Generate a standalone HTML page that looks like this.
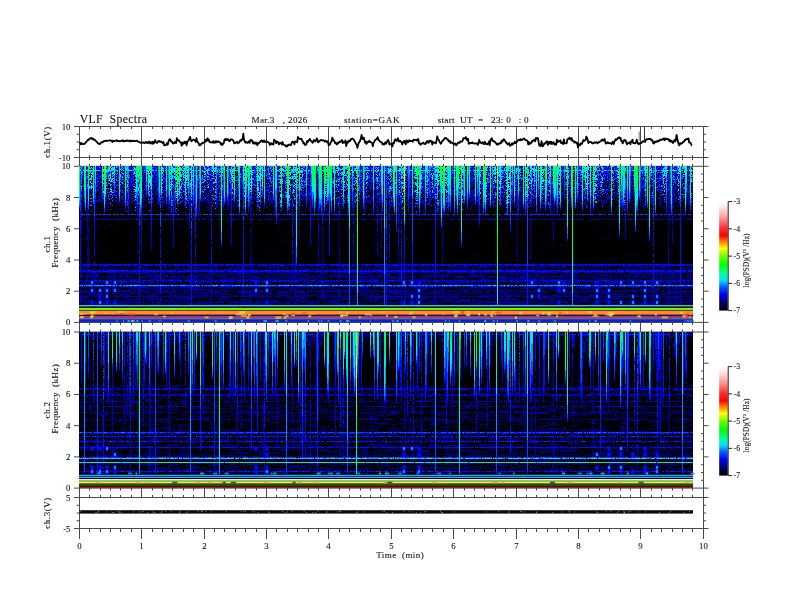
<!DOCTYPE html><html><head><meta charset="utf-8"><title>VLF Spectra</title><style>html,body{margin:0;padding:0;background:#fff;overflow:hidden;}svg{display:block;font-family:"Liberation Serif",serif;filter:blur(0.4px);}text{stroke:#111;stroke-width:0.1px;}</style></head><body><svg width="792" height="612" viewBox="0 0 792 612" font-family="Liberation Serif, serif" fill="#111" shape-rendering="auto"><defs><linearGradient id="cb" x1="0" y1="0" x2="0" y2="1"><stop offset="0.000" stop-color="#ffffff"/><stop offset="0.040" stop-color="#ffeeee"/><stop offset="0.150" stop-color="#ff9696"/><stop offset="0.240" stop-color="#ff3232"/><stop offset="0.310" stop-color="#ff0000"/><stop offset="0.380" stop-color="#ff9600"/><stop offset="0.430" stop-color="#ffff00"/><stop offset="0.500" stop-color="#6eff00"/><stop offset="0.580" stop-color="#00ff00"/><stop offset="0.660" stop-color="#00ff96"/><stop offset="0.720" stop-color="#00e1ff"/><stop offset="0.780" stop-color="#0064ff"/><stop offset="0.850" stop-color="#0000ff"/><stop offset="0.920" stop-color="#00006e"/><stop offset="1.000" stop-color="#000000"/></linearGradient><linearGradient id="gy" x1="0" y1="0" x2="0" y2="1"><stop offset="0" stop-color="#eaff00" stop-opacity="1"/><stop offset="0.15" stop-color="#29ff00" stop-opacity="1"/><stop offset="0.45" stop-color="#00f5b9" stop-opacity="1"/><stop offset="0.75" stop-color="#0047ff" stop-opacity="0.9"/><stop offset="1" stop-color="#0000c1" stop-opacity="0"/></linearGradient><linearGradient id="gg" x1="0" y1="0" x2="0" y2="1"><stop offset="0" stop-color="#37ff00" stop-opacity="1"/><stop offset="0.2" stop-color="#00ff4b" stop-opacity="1"/><stop offset="0.5" stop-color="#00e1ff" stop-opacity="1"/><stop offset="0.8" stop-color="#002bff" stop-opacity="0.8"/><stop offset="1" stop-color="#0000c1" stop-opacity="0"/></linearGradient><linearGradient id="gc" x1="0" y1="0" x2="0" y2="1"><stop offset="0" stop-color="#00f5b9" stop-opacity="1"/><stop offset="0.3" stop-color="#00b7ff" stop-opacity="1"/><stop offset="0.7" stop-color="#002bff" stop-opacity="0.8"/><stop offset="1" stop-color="#0000c1" stop-opacity="0"/></linearGradient><linearGradient id="gb" x1="0" y1="0" x2="0" y2="1"><stop offset="0" stop-color="#0064ff" stop-opacity="1"/><stop offset="0.5" stop-color="#000eff" stop-opacity="0.9"/><stop offset="1" stop-color="#000097" stop-opacity="0"/></linearGradient><linearGradient id="gd" x1="0" y1="0" x2="0" y2="1"><stop offset="0" stop-color="#000eff" stop-opacity="0.9"/><stop offset="1" stop-color="#000097" stop-opacity="0"/></linearGradient><linearGradient id="gr" x1="0" y1="0" x2="0" y2="1"><stop offset="0" stop-color="#ff4000" stop-opacity="1"/><stop offset="0.1" stop-color="#eaff00" stop-opacity="1"/><stop offset="0.3" stop-color="#00ff00" stop-opacity="1"/><stop offset="0.7" stop-color="#00e1ff" stop-opacity="1"/><stop offset="1" stop-color="#000eff" stop-opacity="0.3"/></linearGradient><filter id="vs1" filterUnits="userSpaceOnUse" x="79" y="150" width="620" height="350" color-interpolation-filters="sRGB"><feTurbulence type="fractalNoise" baseFrequency="1.0 0.35" numOctaves="1" seed="3"/><feColorMatrix type="matrix" values="0 0 0 0 0 0 0 0 0 0 0 0 0 0 0 6 0 0 0 -2.4"/><feComposite in="SourceGraphic" operator="in"/></filter><filter id="vs2" filterUnits="userSpaceOnUse" x="79" y="150" width="620" height="350" color-interpolation-filters="sRGB"><feTurbulence type="fractalNoise" baseFrequency="1.0 0.35" numOctaves="1" seed="8"/><feColorMatrix type="matrix" values="0 0 0 0 0 0 0 0 0 0 0 0 0 0 0 6 0 0 0 -2.6"/><feComposite in="SourceGraphic" operator="in"/></filter><filter id="hs1" filterUnits="userSpaceOnUse" x="79" y="150" width="620" height="350" color-interpolation-filters="sRGB"><feTurbulence type="fractalNoise" baseFrequency="0.25 1.0" numOctaves="1" seed="4"/><feColorMatrix type="matrix" values="0 0 0 0 0 0 0 0 0 0 0 0 0 0 0 6 0 0 0 -2.7"/><feComposite in="SourceGraphic" operator="in"/></filter><filter id="hs2" filterUnits="userSpaceOnUse" x="79" y="150" width="620" height="350" color-interpolation-filters="sRGB"><feTurbulence type="fractalNoise" baseFrequency="0.25 1.0" numOctaves="1" seed="6"/><feColorMatrix type="matrix" values="0 0 0 0 0 0 0 0 0 0 0 0 0 0 0 6 0 0 0 -2.7"/><feComposite in="SourceGraphic" operator="in"/></filter><filter id="ns1" filterUnits="userSpaceOnUse" x="79" y="150" width="620" height="350" color-interpolation-filters="sRGB"><feTurbulence type="fractalNoise" baseFrequency="0.7 0.7" numOctaves="1" seed="12"/><feColorMatrix type="matrix" values="0 0 0 0 0 0 0 0 0 0 0 0 0 0 0 7 0 0 0 -3.0"/><feComposite in="SourceGraphic" operator="in"/></filter><filter id="ns2" filterUnits="userSpaceOnUse" x="79" y="150" width="620" height="350" color-interpolation-filters="sRGB"><feTurbulence type="fractalNoise" baseFrequency="0.7 0.7" numOctaves="1" seed="13"/><feColorMatrix type="matrix" values="0 0 0 0 0 0 0 0 0 0 0 0 0 0 0 7 0 0 0 -3.0"/><feComposite in="SourceGraphic" operator="in"/></filter><linearGradient id="L0" x1="0" y1="0" x2="0" y2="1"><stop offset="0" stop-color="#0000d6"/><stop offset="0.45" stop-color="#000083"/><stop offset="0.8" stop-color="#0000ac" stop-opacity="0.9"/><stop offset="1" stop-color="#000097" stop-opacity="0"/></linearGradient><linearGradient id="L1" x1="0" y1="0" x2="0" y2="1"><stop offset="0" stop-color="#001dff"/><stop offset="0.45" stop-color="#0000d6"/><stop offset="0.8" stop-color="#0000ac" stop-opacity="0.9"/><stop offset="1" stop-color="#000097" stop-opacity="0"/></linearGradient><linearGradient id="L2" x1="0" y1="0" x2="0" y2="1"><stop offset="0" stop-color="#0047ff"/><stop offset="0.45" stop-color="#000eff"/><stop offset="0.8" stop-color="#0000ac" stop-opacity="0.9"/><stop offset="1" stop-color="#000097" stop-opacity="0"/></linearGradient><linearGradient id="L3" x1="0" y1="0" x2="0" y2="1"><stop offset="0" stop-color="#0079ff"/><stop offset="0.45" stop-color="#0039ff"/><stop offset="0.8" stop-color="#0000ea" stop-opacity="0.9"/><stop offset="1" stop-color="#000097" stop-opacity="0"/></linearGradient><linearGradient id="L4" x1="0" y1="0" x2="0" y2="1"><stop offset="0" stop-color="#00b7ff"/><stop offset="0.45" stop-color="#0064ff"/><stop offset="0.8" stop-color="#001dff" stop-opacity="0.9"/><stop offset="1" stop-color="#000097" stop-opacity="0"/></linearGradient><linearGradient id="L5" x1="0" y1="0" x2="0" y2="1"><stop offset="0" stop-color="#00e6ee"/><stop offset="0.45" stop-color="#00a2ff"/><stop offset="0.8" stop-color="#0047ff" stop-opacity="0.9"/><stop offset="1" stop-color="#000097" stop-opacity="0"/></linearGradient><linearGradient id="L6" x1="0" y1="0" x2="0" y2="1"><stop offset="0" stop-color="#00faa8"/><stop offset="0.45" stop-color="#00e6ed"/><stop offset="0.8" stop-color="#008eff" stop-opacity="0.9"/><stop offset="1" stop-color="#000097" stop-opacity="0"/></linearGradient><linearGradient id="L7" x1="0" y1="0" x2="0" y2="1"><stop offset="0" stop-color="#00ff4b"/><stop offset="0.45" stop-color="#00ff96"/><stop offset="0.8" stop-color="#00e6ed" stop-opacity="0.9"/><stop offset="1" stop-color="#000097" stop-opacity="0"/></linearGradient><linearGradient id="L8" x1="0" y1="0" x2="0" y2="1"><stop offset="0" stop-color="#1cff00"/><stop offset="0.45" stop-color="#00ff25"/><stop offset="0.8" stop-color="#00ff83" stop-opacity="0.9"/><stop offset="1" stop-color="#000097" stop-opacity="0"/></linearGradient><linearGradient id="nav1" x1="0" y1="0" x2="0" y2="1"><stop offset="0" stop-color="#0000c1"/><stop offset="0.6" stop-color="#00006e"/><stop offset="1" stop-color="#000" stop-opacity="0"/></linearGradient><linearGradient id="nav2" x1="0" y1="0" x2="0" y2="1"><stop offset="0" stop-color="#00006e"/><stop offset="0.6" stop-color="#000045"/><stop offset="1" stop-color="#000" stop-opacity="0"/></linearGradient></defs><rect width="792" height="612" fill="#fff"/><line x1="79.50" y1="126.50" x2="79.50" y2="528.50" stroke="#4a4a4a" stroke-width="1"/><line x1="703.50" y1="126.50" x2="703.50" y2="528.50" stroke="#4a4a4a" stroke-width="1"/><line x1="79.50" y1="157.50" x2="79.50" y2="166.30" stroke="#4a4a4a" stroke-width="1"/><line x1="89.50" y1="163.80" x2="89.50" y2="166.30" stroke="#4a4a4a" stroke-width="1"/><line x1="89.50" y1="157.50" x2="89.50" y2="160.00" stroke="#4a4a4a" stroke-width="1"/><line x1="100.50" y1="163.80" x2="100.50" y2="166.30" stroke="#4a4a4a" stroke-width="1"/><line x1="100.50" y1="157.50" x2="100.50" y2="160.00" stroke="#4a4a4a" stroke-width="1"/><line x1="110.50" y1="163.80" x2="110.50" y2="166.30" stroke="#4a4a4a" stroke-width="1"/><line x1="110.50" y1="157.50" x2="110.50" y2="160.00" stroke="#4a4a4a" stroke-width="1"/><line x1="120.50" y1="163.80" x2="120.50" y2="166.30" stroke="#4a4a4a" stroke-width="1"/><line x1="120.50" y1="157.50" x2="120.50" y2="160.00" stroke="#4a4a4a" stroke-width="1"/><line x1="131.50" y1="163.80" x2="131.50" y2="166.30" stroke="#4a4a4a" stroke-width="1"/><line x1="131.50" y1="157.50" x2="131.50" y2="160.00" stroke="#4a4a4a" stroke-width="1"/><line x1="141.50" y1="157.50" x2="141.50" y2="166.30" stroke="#4a4a4a" stroke-width="1"/><line x1="152.50" y1="163.80" x2="152.50" y2="166.30" stroke="#4a4a4a" stroke-width="1"/><line x1="152.50" y1="157.50" x2="152.50" y2="160.00" stroke="#4a4a4a" stroke-width="1"/><line x1="162.50" y1="163.80" x2="162.50" y2="166.30" stroke="#4a4a4a" stroke-width="1"/><line x1="162.50" y1="157.50" x2="162.50" y2="160.00" stroke="#4a4a4a" stroke-width="1"/><line x1="172.50" y1="163.80" x2="172.50" y2="166.30" stroke="#4a4a4a" stroke-width="1"/><line x1="172.50" y1="157.50" x2="172.50" y2="160.00" stroke="#4a4a4a" stroke-width="1"/><line x1="183.50" y1="163.80" x2="183.50" y2="166.30" stroke="#4a4a4a" stroke-width="1"/><line x1="183.50" y1="157.50" x2="183.50" y2="160.00" stroke="#4a4a4a" stroke-width="1"/><line x1="193.50" y1="163.80" x2="193.50" y2="166.30" stroke="#4a4a4a" stroke-width="1"/><line x1="193.50" y1="157.50" x2="193.50" y2="160.00" stroke="#4a4a4a" stroke-width="1"/><line x1="204.50" y1="157.50" x2="204.50" y2="166.30" stroke="#4a4a4a" stroke-width="1"/><line x1="214.50" y1="163.80" x2="214.50" y2="166.30" stroke="#4a4a4a" stroke-width="1"/><line x1="214.50" y1="157.50" x2="214.50" y2="160.00" stroke="#4a4a4a" stroke-width="1"/><line x1="224.50" y1="163.80" x2="224.50" y2="166.30" stroke="#4a4a4a" stroke-width="1"/><line x1="224.50" y1="157.50" x2="224.50" y2="160.00" stroke="#4a4a4a" stroke-width="1"/><line x1="235.50" y1="163.80" x2="235.50" y2="166.30" stroke="#4a4a4a" stroke-width="1"/><line x1="235.50" y1="157.50" x2="235.50" y2="160.00" stroke="#4a4a4a" stroke-width="1"/><line x1="245.50" y1="163.80" x2="245.50" y2="166.30" stroke="#4a4a4a" stroke-width="1"/><line x1="245.50" y1="157.50" x2="245.50" y2="160.00" stroke="#4a4a4a" stroke-width="1"/><line x1="256.50" y1="163.80" x2="256.50" y2="166.30" stroke="#4a4a4a" stroke-width="1"/><line x1="256.50" y1="157.50" x2="256.50" y2="160.00" stroke="#4a4a4a" stroke-width="1"/><line x1="266.50" y1="157.50" x2="266.50" y2="166.30" stroke="#4a4a4a" stroke-width="1"/><line x1="276.50" y1="163.80" x2="276.50" y2="166.30" stroke="#4a4a4a" stroke-width="1"/><line x1="276.50" y1="157.50" x2="276.50" y2="160.00" stroke="#4a4a4a" stroke-width="1"/><line x1="287.50" y1="163.80" x2="287.50" y2="166.30" stroke="#4a4a4a" stroke-width="1"/><line x1="287.50" y1="157.50" x2="287.50" y2="160.00" stroke="#4a4a4a" stroke-width="1"/><line x1="297.50" y1="163.80" x2="297.50" y2="166.30" stroke="#4a4a4a" stroke-width="1"/><line x1="297.50" y1="157.50" x2="297.50" y2="160.00" stroke="#4a4a4a" stroke-width="1"/><line x1="308.50" y1="163.80" x2="308.50" y2="166.30" stroke="#4a4a4a" stroke-width="1"/><line x1="308.50" y1="157.50" x2="308.50" y2="160.00" stroke="#4a4a4a" stroke-width="1"/><line x1="318.50" y1="163.80" x2="318.50" y2="166.30" stroke="#4a4a4a" stroke-width="1"/><line x1="318.50" y1="157.50" x2="318.50" y2="160.00" stroke="#4a4a4a" stroke-width="1"/><line x1="328.50" y1="157.50" x2="328.50" y2="166.30" stroke="#4a4a4a" stroke-width="1"/><line x1="339.50" y1="163.80" x2="339.50" y2="166.30" stroke="#4a4a4a" stroke-width="1"/><line x1="339.50" y1="157.50" x2="339.50" y2="160.00" stroke="#4a4a4a" stroke-width="1"/><line x1="349.50" y1="163.80" x2="349.50" y2="166.30" stroke="#4a4a4a" stroke-width="1"/><line x1="349.50" y1="157.50" x2="349.50" y2="160.00" stroke="#4a4a4a" stroke-width="1"/><line x1="360.50" y1="163.80" x2="360.50" y2="166.30" stroke="#4a4a4a" stroke-width="1"/><line x1="360.50" y1="157.50" x2="360.50" y2="160.00" stroke="#4a4a4a" stroke-width="1"/><line x1="370.50" y1="163.80" x2="370.50" y2="166.30" stroke="#4a4a4a" stroke-width="1"/><line x1="370.50" y1="157.50" x2="370.50" y2="160.00" stroke="#4a4a4a" stroke-width="1"/><line x1="380.50" y1="163.80" x2="380.50" y2="166.30" stroke="#4a4a4a" stroke-width="1"/><line x1="380.50" y1="157.50" x2="380.50" y2="160.00" stroke="#4a4a4a" stroke-width="1"/><line x1="391.50" y1="157.50" x2="391.50" y2="166.30" stroke="#4a4a4a" stroke-width="1"/><line x1="401.50" y1="163.80" x2="401.50" y2="166.30" stroke="#4a4a4a" stroke-width="1"/><line x1="401.50" y1="157.50" x2="401.50" y2="160.00" stroke="#4a4a4a" stroke-width="1"/><line x1="411.50" y1="163.80" x2="411.50" y2="166.30" stroke="#4a4a4a" stroke-width="1"/><line x1="411.50" y1="157.50" x2="411.50" y2="160.00" stroke="#4a4a4a" stroke-width="1"/><line x1="422.50" y1="163.80" x2="422.50" y2="166.30" stroke="#4a4a4a" stroke-width="1"/><line x1="422.50" y1="157.50" x2="422.50" y2="160.00" stroke="#4a4a4a" stroke-width="1"/><line x1="432.50" y1="163.80" x2="432.50" y2="166.30" stroke="#4a4a4a" stroke-width="1"/><line x1="432.50" y1="157.50" x2="432.50" y2="160.00" stroke="#4a4a4a" stroke-width="1"/><line x1="443.50" y1="163.80" x2="443.50" y2="166.30" stroke="#4a4a4a" stroke-width="1"/><line x1="443.50" y1="157.50" x2="443.50" y2="160.00" stroke="#4a4a4a" stroke-width="1"/><line x1="453.50" y1="157.50" x2="453.50" y2="166.30" stroke="#4a4a4a" stroke-width="1"/><line x1="464.50" y1="163.80" x2="464.50" y2="166.30" stroke="#4a4a4a" stroke-width="1"/><line x1="464.50" y1="157.50" x2="464.50" y2="160.00" stroke="#4a4a4a" stroke-width="1"/><line x1="474.50" y1="163.80" x2="474.50" y2="166.30" stroke="#4a4a4a" stroke-width="1"/><line x1="474.50" y1="157.50" x2="474.50" y2="160.00" stroke="#4a4a4a" stroke-width="1"/><line x1="484.50" y1="163.80" x2="484.50" y2="166.30" stroke="#4a4a4a" stroke-width="1"/><line x1="484.50" y1="157.50" x2="484.50" y2="160.00" stroke="#4a4a4a" stroke-width="1"/><line x1="495.50" y1="163.80" x2="495.50" y2="166.30" stroke="#4a4a4a" stroke-width="1"/><line x1="495.50" y1="157.50" x2="495.50" y2="160.00" stroke="#4a4a4a" stroke-width="1"/><line x1="505.50" y1="163.80" x2="505.50" y2="166.30" stroke="#4a4a4a" stroke-width="1"/><line x1="505.50" y1="157.50" x2="505.50" y2="160.00" stroke="#4a4a4a" stroke-width="1"/><line x1="516.50" y1="157.50" x2="516.50" y2="166.30" stroke="#4a4a4a" stroke-width="1"/><line x1="526.50" y1="163.80" x2="526.50" y2="166.30" stroke="#4a4a4a" stroke-width="1"/><line x1="526.50" y1="157.50" x2="526.50" y2="160.00" stroke="#4a4a4a" stroke-width="1"/><line x1="536.50" y1="163.80" x2="536.50" y2="166.30" stroke="#4a4a4a" stroke-width="1"/><line x1="536.50" y1="157.50" x2="536.50" y2="160.00" stroke="#4a4a4a" stroke-width="1"/><line x1="547.50" y1="163.80" x2="547.50" y2="166.30" stroke="#4a4a4a" stroke-width="1"/><line x1="547.50" y1="157.50" x2="547.50" y2="160.00" stroke="#4a4a4a" stroke-width="1"/><line x1="557.50" y1="163.80" x2="557.50" y2="166.30" stroke="#4a4a4a" stroke-width="1"/><line x1="557.50" y1="157.50" x2="557.50" y2="160.00" stroke="#4a4a4a" stroke-width="1"/><line x1="568.50" y1="163.80" x2="568.50" y2="166.30" stroke="#4a4a4a" stroke-width="1"/><line x1="568.50" y1="157.50" x2="568.50" y2="160.00" stroke="#4a4a4a" stroke-width="1"/><line x1="578.50" y1="157.50" x2="578.50" y2="166.30" stroke="#4a4a4a" stroke-width="1"/><line x1="588.50" y1="163.80" x2="588.50" y2="166.30" stroke="#4a4a4a" stroke-width="1"/><line x1="588.50" y1="157.50" x2="588.50" y2="160.00" stroke="#4a4a4a" stroke-width="1"/><line x1="599.50" y1="163.80" x2="599.50" y2="166.30" stroke="#4a4a4a" stroke-width="1"/><line x1="599.50" y1="157.50" x2="599.50" y2="160.00" stroke="#4a4a4a" stroke-width="1"/><line x1="609.50" y1="163.80" x2="609.50" y2="166.30" stroke="#4a4a4a" stroke-width="1"/><line x1="609.50" y1="157.50" x2="609.50" y2="160.00" stroke="#4a4a4a" stroke-width="1"/><line x1="620.50" y1="163.80" x2="620.50" y2="166.30" stroke="#4a4a4a" stroke-width="1"/><line x1="620.50" y1="157.50" x2="620.50" y2="160.00" stroke="#4a4a4a" stroke-width="1"/><line x1="630.50" y1="163.80" x2="630.50" y2="166.30" stroke="#4a4a4a" stroke-width="1"/><line x1="630.50" y1="157.50" x2="630.50" y2="160.00" stroke="#4a4a4a" stroke-width="1"/><line x1="640.50" y1="157.50" x2="640.50" y2="166.30" stroke="#4a4a4a" stroke-width="1"/><line x1="651.50" y1="163.80" x2="651.50" y2="166.30" stroke="#4a4a4a" stroke-width="1"/><line x1="651.50" y1="157.50" x2="651.50" y2="160.00" stroke="#4a4a4a" stroke-width="1"/><line x1="661.50" y1="163.80" x2="661.50" y2="166.30" stroke="#4a4a4a" stroke-width="1"/><line x1="661.50" y1="157.50" x2="661.50" y2="160.00" stroke="#4a4a4a" stroke-width="1"/><line x1="672.50" y1="163.80" x2="672.50" y2="166.30" stroke="#4a4a4a" stroke-width="1"/><line x1="672.50" y1="157.50" x2="672.50" y2="160.00" stroke="#4a4a4a" stroke-width="1"/><line x1="682.50" y1="163.80" x2="682.50" y2="166.30" stroke="#4a4a4a" stroke-width="1"/><line x1="682.50" y1="157.50" x2="682.50" y2="160.00" stroke="#4a4a4a" stroke-width="1"/><line x1="692.50" y1="163.80" x2="692.50" y2="166.30" stroke="#4a4a4a" stroke-width="1"/><line x1="692.50" y1="157.50" x2="692.50" y2="160.00" stroke="#4a4a4a" stroke-width="1"/><line x1="703.50" y1="157.50" x2="703.50" y2="166.30" stroke="#4a4a4a" stroke-width="1"/><line x1="79.50" y1="322.40" x2="79.50" y2="332.00" stroke="#4a4a4a" stroke-width="1"/><line x1="89.50" y1="329.50" x2="89.50" y2="332.00" stroke="#4a4a4a" stroke-width="1"/><line x1="89.50" y1="322.40" x2="89.50" y2="324.90" stroke="#4a4a4a" stroke-width="1"/><line x1="100.50" y1="329.50" x2="100.50" y2="332.00" stroke="#4a4a4a" stroke-width="1"/><line x1="100.50" y1="322.40" x2="100.50" y2="324.90" stroke="#4a4a4a" stroke-width="1"/><line x1="110.50" y1="329.50" x2="110.50" y2="332.00" stroke="#4a4a4a" stroke-width="1"/><line x1="110.50" y1="322.40" x2="110.50" y2="324.90" stroke="#4a4a4a" stroke-width="1"/><line x1="120.50" y1="329.50" x2="120.50" y2="332.00" stroke="#4a4a4a" stroke-width="1"/><line x1="120.50" y1="322.40" x2="120.50" y2="324.90" stroke="#4a4a4a" stroke-width="1"/><line x1="131.50" y1="329.50" x2="131.50" y2="332.00" stroke="#4a4a4a" stroke-width="1"/><line x1="131.50" y1="322.40" x2="131.50" y2="324.90" stroke="#4a4a4a" stroke-width="1"/><line x1="141.50" y1="322.40" x2="141.50" y2="332.00" stroke="#4a4a4a" stroke-width="1"/><line x1="152.50" y1="329.50" x2="152.50" y2="332.00" stroke="#4a4a4a" stroke-width="1"/><line x1="152.50" y1="322.40" x2="152.50" y2="324.90" stroke="#4a4a4a" stroke-width="1"/><line x1="162.50" y1="329.50" x2="162.50" y2="332.00" stroke="#4a4a4a" stroke-width="1"/><line x1="162.50" y1="322.40" x2="162.50" y2="324.90" stroke="#4a4a4a" stroke-width="1"/><line x1="172.50" y1="329.50" x2="172.50" y2="332.00" stroke="#4a4a4a" stroke-width="1"/><line x1="172.50" y1="322.40" x2="172.50" y2="324.90" stroke="#4a4a4a" stroke-width="1"/><line x1="183.50" y1="329.50" x2="183.50" y2="332.00" stroke="#4a4a4a" stroke-width="1"/><line x1="183.50" y1="322.40" x2="183.50" y2="324.90" stroke="#4a4a4a" stroke-width="1"/><line x1="193.50" y1="329.50" x2="193.50" y2="332.00" stroke="#4a4a4a" stroke-width="1"/><line x1="193.50" y1="322.40" x2="193.50" y2="324.90" stroke="#4a4a4a" stroke-width="1"/><line x1="204.50" y1="322.40" x2="204.50" y2="332.00" stroke="#4a4a4a" stroke-width="1"/><line x1="214.50" y1="329.50" x2="214.50" y2="332.00" stroke="#4a4a4a" stroke-width="1"/><line x1="214.50" y1="322.40" x2="214.50" y2="324.90" stroke="#4a4a4a" stroke-width="1"/><line x1="224.50" y1="329.50" x2="224.50" y2="332.00" stroke="#4a4a4a" stroke-width="1"/><line x1="224.50" y1="322.40" x2="224.50" y2="324.90" stroke="#4a4a4a" stroke-width="1"/><line x1="235.50" y1="329.50" x2="235.50" y2="332.00" stroke="#4a4a4a" stroke-width="1"/><line x1="235.50" y1="322.40" x2="235.50" y2="324.90" stroke="#4a4a4a" stroke-width="1"/><line x1="245.50" y1="329.50" x2="245.50" y2="332.00" stroke="#4a4a4a" stroke-width="1"/><line x1="245.50" y1="322.40" x2="245.50" y2="324.90" stroke="#4a4a4a" stroke-width="1"/><line x1="256.50" y1="329.50" x2="256.50" y2="332.00" stroke="#4a4a4a" stroke-width="1"/><line x1="256.50" y1="322.40" x2="256.50" y2="324.90" stroke="#4a4a4a" stroke-width="1"/><line x1="266.50" y1="322.40" x2="266.50" y2="332.00" stroke="#4a4a4a" stroke-width="1"/><line x1="276.50" y1="329.50" x2="276.50" y2="332.00" stroke="#4a4a4a" stroke-width="1"/><line x1="276.50" y1="322.40" x2="276.50" y2="324.90" stroke="#4a4a4a" stroke-width="1"/><line x1="287.50" y1="329.50" x2="287.50" y2="332.00" stroke="#4a4a4a" stroke-width="1"/><line x1="287.50" y1="322.40" x2="287.50" y2="324.90" stroke="#4a4a4a" stroke-width="1"/><line x1="297.50" y1="329.50" x2="297.50" y2="332.00" stroke="#4a4a4a" stroke-width="1"/><line x1="297.50" y1="322.40" x2="297.50" y2="324.90" stroke="#4a4a4a" stroke-width="1"/><line x1="308.50" y1="329.50" x2="308.50" y2="332.00" stroke="#4a4a4a" stroke-width="1"/><line x1="308.50" y1="322.40" x2="308.50" y2="324.90" stroke="#4a4a4a" stroke-width="1"/><line x1="318.50" y1="329.50" x2="318.50" y2="332.00" stroke="#4a4a4a" stroke-width="1"/><line x1="318.50" y1="322.40" x2="318.50" y2="324.90" stroke="#4a4a4a" stroke-width="1"/><line x1="328.50" y1="322.40" x2="328.50" y2="332.00" stroke="#4a4a4a" stroke-width="1"/><line x1="339.50" y1="329.50" x2="339.50" y2="332.00" stroke="#4a4a4a" stroke-width="1"/><line x1="339.50" y1="322.40" x2="339.50" y2="324.90" stroke="#4a4a4a" stroke-width="1"/><line x1="349.50" y1="329.50" x2="349.50" y2="332.00" stroke="#4a4a4a" stroke-width="1"/><line x1="349.50" y1="322.40" x2="349.50" y2="324.90" stroke="#4a4a4a" stroke-width="1"/><line x1="360.50" y1="329.50" x2="360.50" y2="332.00" stroke="#4a4a4a" stroke-width="1"/><line x1="360.50" y1="322.40" x2="360.50" y2="324.90" stroke="#4a4a4a" stroke-width="1"/><line x1="370.50" y1="329.50" x2="370.50" y2="332.00" stroke="#4a4a4a" stroke-width="1"/><line x1="370.50" y1="322.40" x2="370.50" y2="324.90" stroke="#4a4a4a" stroke-width="1"/><line x1="380.50" y1="329.50" x2="380.50" y2="332.00" stroke="#4a4a4a" stroke-width="1"/><line x1="380.50" y1="322.40" x2="380.50" y2="324.90" stroke="#4a4a4a" stroke-width="1"/><line x1="391.50" y1="322.40" x2="391.50" y2="332.00" stroke="#4a4a4a" stroke-width="1"/><line x1="401.50" y1="329.50" x2="401.50" y2="332.00" stroke="#4a4a4a" stroke-width="1"/><line x1="401.50" y1="322.40" x2="401.50" y2="324.90" stroke="#4a4a4a" stroke-width="1"/><line x1="411.50" y1="329.50" x2="411.50" y2="332.00" stroke="#4a4a4a" stroke-width="1"/><line x1="411.50" y1="322.40" x2="411.50" y2="324.90" stroke="#4a4a4a" stroke-width="1"/><line x1="422.50" y1="329.50" x2="422.50" y2="332.00" stroke="#4a4a4a" stroke-width="1"/><line x1="422.50" y1="322.40" x2="422.50" y2="324.90" stroke="#4a4a4a" stroke-width="1"/><line x1="432.50" y1="329.50" x2="432.50" y2="332.00" stroke="#4a4a4a" stroke-width="1"/><line x1="432.50" y1="322.40" x2="432.50" y2="324.90" stroke="#4a4a4a" stroke-width="1"/><line x1="443.50" y1="329.50" x2="443.50" y2="332.00" stroke="#4a4a4a" stroke-width="1"/><line x1="443.50" y1="322.40" x2="443.50" y2="324.90" stroke="#4a4a4a" stroke-width="1"/><line x1="453.50" y1="322.40" x2="453.50" y2="332.00" stroke="#4a4a4a" stroke-width="1"/><line x1="464.50" y1="329.50" x2="464.50" y2="332.00" stroke="#4a4a4a" stroke-width="1"/><line x1="464.50" y1="322.40" x2="464.50" y2="324.90" stroke="#4a4a4a" stroke-width="1"/><line x1="474.50" y1="329.50" x2="474.50" y2="332.00" stroke="#4a4a4a" stroke-width="1"/><line x1="474.50" y1="322.40" x2="474.50" y2="324.90" stroke="#4a4a4a" stroke-width="1"/><line x1="484.50" y1="329.50" x2="484.50" y2="332.00" stroke="#4a4a4a" stroke-width="1"/><line x1="484.50" y1="322.40" x2="484.50" y2="324.90" stroke="#4a4a4a" stroke-width="1"/><line x1="495.50" y1="329.50" x2="495.50" y2="332.00" stroke="#4a4a4a" stroke-width="1"/><line x1="495.50" y1="322.40" x2="495.50" y2="324.90" stroke="#4a4a4a" stroke-width="1"/><line x1="505.50" y1="329.50" x2="505.50" y2="332.00" stroke="#4a4a4a" stroke-width="1"/><line x1="505.50" y1="322.40" x2="505.50" y2="324.90" stroke="#4a4a4a" stroke-width="1"/><line x1="516.50" y1="322.40" x2="516.50" y2="332.00" stroke="#4a4a4a" stroke-width="1"/><line x1="526.50" y1="329.50" x2="526.50" y2="332.00" stroke="#4a4a4a" stroke-width="1"/><line x1="526.50" y1="322.40" x2="526.50" y2="324.90" stroke="#4a4a4a" stroke-width="1"/><line x1="536.50" y1="329.50" x2="536.50" y2="332.00" stroke="#4a4a4a" stroke-width="1"/><line x1="536.50" y1="322.40" x2="536.50" y2="324.90" stroke="#4a4a4a" stroke-width="1"/><line x1="547.50" y1="329.50" x2="547.50" y2="332.00" stroke="#4a4a4a" stroke-width="1"/><line x1="547.50" y1="322.40" x2="547.50" y2="324.90" stroke="#4a4a4a" stroke-width="1"/><line x1="557.50" y1="329.50" x2="557.50" y2="332.00" stroke="#4a4a4a" stroke-width="1"/><line x1="557.50" y1="322.40" x2="557.50" y2="324.90" stroke="#4a4a4a" stroke-width="1"/><line x1="568.50" y1="329.50" x2="568.50" y2="332.00" stroke="#4a4a4a" stroke-width="1"/><line x1="568.50" y1="322.40" x2="568.50" y2="324.90" stroke="#4a4a4a" stroke-width="1"/><line x1="578.50" y1="322.40" x2="578.50" y2="332.00" stroke="#4a4a4a" stroke-width="1"/><line x1="588.50" y1="329.50" x2="588.50" y2="332.00" stroke="#4a4a4a" stroke-width="1"/><line x1="588.50" y1="322.40" x2="588.50" y2="324.90" stroke="#4a4a4a" stroke-width="1"/><line x1="599.50" y1="329.50" x2="599.50" y2="332.00" stroke="#4a4a4a" stroke-width="1"/><line x1="599.50" y1="322.40" x2="599.50" y2="324.90" stroke="#4a4a4a" stroke-width="1"/><line x1="609.50" y1="329.50" x2="609.50" y2="332.00" stroke="#4a4a4a" stroke-width="1"/><line x1="609.50" y1="322.40" x2="609.50" y2="324.90" stroke="#4a4a4a" stroke-width="1"/><line x1="620.50" y1="329.50" x2="620.50" y2="332.00" stroke="#4a4a4a" stroke-width="1"/><line x1="620.50" y1="322.40" x2="620.50" y2="324.90" stroke="#4a4a4a" stroke-width="1"/><line x1="630.50" y1="329.50" x2="630.50" y2="332.00" stroke="#4a4a4a" stroke-width="1"/><line x1="630.50" y1="322.40" x2="630.50" y2="324.90" stroke="#4a4a4a" stroke-width="1"/><line x1="640.50" y1="322.40" x2="640.50" y2="332.00" stroke="#4a4a4a" stroke-width="1"/><line x1="651.50" y1="329.50" x2="651.50" y2="332.00" stroke="#4a4a4a" stroke-width="1"/><line x1="651.50" y1="322.40" x2="651.50" y2="324.90" stroke="#4a4a4a" stroke-width="1"/><line x1="661.50" y1="329.50" x2="661.50" y2="332.00" stroke="#4a4a4a" stroke-width="1"/><line x1="661.50" y1="322.40" x2="661.50" y2="324.90" stroke="#4a4a4a" stroke-width="1"/><line x1="672.50" y1="329.50" x2="672.50" y2="332.00" stroke="#4a4a4a" stroke-width="1"/><line x1="672.50" y1="322.40" x2="672.50" y2="324.90" stroke="#4a4a4a" stroke-width="1"/><line x1="682.50" y1="329.50" x2="682.50" y2="332.00" stroke="#4a4a4a" stroke-width="1"/><line x1="682.50" y1="322.40" x2="682.50" y2="324.90" stroke="#4a4a4a" stroke-width="1"/><line x1="692.50" y1="329.50" x2="692.50" y2="332.00" stroke="#4a4a4a" stroke-width="1"/><line x1="692.50" y1="322.40" x2="692.50" y2="324.90" stroke="#4a4a4a" stroke-width="1"/><line x1="703.50" y1="322.40" x2="703.50" y2="332.00" stroke="#4a4a4a" stroke-width="1"/><line x1="79.50" y1="488.10" x2="79.50" y2="497.50" stroke="#4a4a4a" stroke-width="1"/><line x1="89.50" y1="495.00" x2="89.50" y2="497.50" stroke="#4a4a4a" stroke-width="1"/><line x1="89.50" y1="488.10" x2="89.50" y2="490.60" stroke="#4a4a4a" stroke-width="1"/><line x1="100.50" y1="495.00" x2="100.50" y2="497.50" stroke="#4a4a4a" stroke-width="1"/><line x1="100.50" y1="488.10" x2="100.50" y2="490.60" stroke="#4a4a4a" stroke-width="1"/><line x1="110.50" y1="495.00" x2="110.50" y2="497.50" stroke="#4a4a4a" stroke-width="1"/><line x1="110.50" y1="488.10" x2="110.50" y2="490.60" stroke="#4a4a4a" stroke-width="1"/><line x1="120.50" y1="495.00" x2="120.50" y2="497.50" stroke="#4a4a4a" stroke-width="1"/><line x1="120.50" y1="488.10" x2="120.50" y2="490.60" stroke="#4a4a4a" stroke-width="1"/><line x1="131.50" y1="495.00" x2="131.50" y2="497.50" stroke="#4a4a4a" stroke-width="1"/><line x1="131.50" y1="488.10" x2="131.50" y2="490.60" stroke="#4a4a4a" stroke-width="1"/><line x1="141.50" y1="488.10" x2="141.50" y2="497.50" stroke="#4a4a4a" stroke-width="1"/><line x1="152.50" y1="495.00" x2="152.50" y2="497.50" stroke="#4a4a4a" stroke-width="1"/><line x1="152.50" y1="488.10" x2="152.50" y2="490.60" stroke="#4a4a4a" stroke-width="1"/><line x1="162.50" y1="495.00" x2="162.50" y2="497.50" stroke="#4a4a4a" stroke-width="1"/><line x1="162.50" y1="488.10" x2="162.50" y2="490.60" stroke="#4a4a4a" stroke-width="1"/><line x1="172.50" y1="495.00" x2="172.50" y2="497.50" stroke="#4a4a4a" stroke-width="1"/><line x1="172.50" y1="488.10" x2="172.50" y2="490.60" stroke="#4a4a4a" stroke-width="1"/><line x1="183.50" y1="495.00" x2="183.50" y2="497.50" stroke="#4a4a4a" stroke-width="1"/><line x1="183.50" y1="488.10" x2="183.50" y2="490.60" stroke="#4a4a4a" stroke-width="1"/><line x1="193.50" y1="495.00" x2="193.50" y2="497.50" stroke="#4a4a4a" stroke-width="1"/><line x1="193.50" y1="488.10" x2="193.50" y2="490.60" stroke="#4a4a4a" stroke-width="1"/><line x1="204.50" y1="488.10" x2="204.50" y2="497.50" stroke="#4a4a4a" stroke-width="1"/><line x1="214.50" y1="495.00" x2="214.50" y2="497.50" stroke="#4a4a4a" stroke-width="1"/><line x1="214.50" y1="488.10" x2="214.50" y2="490.60" stroke="#4a4a4a" stroke-width="1"/><line x1="224.50" y1="495.00" x2="224.50" y2="497.50" stroke="#4a4a4a" stroke-width="1"/><line x1="224.50" y1="488.10" x2="224.50" y2="490.60" stroke="#4a4a4a" stroke-width="1"/><line x1="235.50" y1="495.00" x2="235.50" y2="497.50" stroke="#4a4a4a" stroke-width="1"/><line x1="235.50" y1="488.10" x2="235.50" y2="490.60" stroke="#4a4a4a" stroke-width="1"/><line x1="245.50" y1="495.00" x2="245.50" y2="497.50" stroke="#4a4a4a" stroke-width="1"/><line x1="245.50" y1="488.10" x2="245.50" y2="490.60" stroke="#4a4a4a" stroke-width="1"/><line x1="256.50" y1="495.00" x2="256.50" y2="497.50" stroke="#4a4a4a" stroke-width="1"/><line x1="256.50" y1="488.10" x2="256.50" y2="490.60" stroke="#4a4a4a" stroke-width="1"/><line x1="266.50" y1="488.10" x2="266.50" y2="497.50" stroke="#4a4a4a" stroke-width="1"/><line x1="276.50" y1="495.00" x2="276.50" y2="497.50" stroke="#4a4a4a" stroke-width="1"/><line x1="276.50" y1="488.10" x2="276.50" y2="490.60" stroke="#4a4a4a" stroke-width="1"/><line x1="287.50" y1="495.00" x2="287.50" y2="497.50" stroke="#4a4a4a" stroke-width="1"/><line x1="287.50" y1="488.10" x2="287.50" y2="490.60" stroke="#4a4a4a" stroke-width="1"/><line x1="297.50" y1="495.00" x2="297.50" y2="497.50" stroke="#4a4a4a" stroke-width="1"/><line x1="297.50" y1="488.10" x2="297.50" y2="490.60" stroke="#4a4a4a" stroke-width="1"/><line x1="308.50" y1="495.00" x2="308.50" y2="497.50" stroke="#4a4a4a" stroke-width="1"/><line x1="308.50" y1="488.10" x2="308.50" y2="490.60" stroke="#4a4a4a" stroke-width="1"/><line x1="318.50" y1="495.00" x2="318.50" y2="497.50" stroke="#4a4a4a" stroke-width="1"/><line x1="318.50" y1="488.10" x2="318.50" y2="490.60" stroke="#4a4a4a" stroke-width="1"/><line x1="328.50" y1="488.10" x2="328.50" y2="497.50" stroke="#4a4a4a" stroke-width="1"/><line x1="339.50" y1="495.00" x2="339.50" y2="497.50" stroke="#4a4a4a" stroke-width="1"/><line x1="339.50" y1="488.10" x2="339.50" y2="490.60" stroke="#4a4a4a" stroke-width="1"/><line x1="349.50" y1="495.00" x2="349.50" y2="497.50" stroke="#4a4a4a" stroke-width="1"/><line x1="349.50" y1="488.10" x2="349.50" y2="490.60" stroke="#4a4a4a" stroke-width="1"/><line x1="360.50" y1="495.00" x2="360.50" y2="497.50" stroke="#4a4a4a" stroke-width="1"/><line x1="360.50" y1="488.10" x2="360.50" y2="490.60" stroke="#4a4a4a" stroke-width="1"/><line x1="370.50" y1="495.00" x2="370.50" y2="497.50" stroke="#4a4a4a" stroke-width="1"/><line x1="370.50" y1="488.10" x2="370.50" y2="490.60" stroke="#4a4a4a" stroke-width="1"/><line x1="380.50" y1="495.00" x2="380.50" y2="497.50" stroke="#4a4a4a" stroke-width="1"/><line x1="380.50" y1="488.10" x2="380.50" y2="490.60" stroke="#4a4a4a" stroke-width="1"/><line x1="391.50" y1="488.10" x2="391.50" y2="497.50" stroke="#4a4a4a" stroke-width="1"/><line x1="401.50" y1="495.00" x2="401.50" y2="497.50" stroke="#4a4a4a" stroke-width="1"/><line x1="401.50" y1="488.10" x2="401.50" y2="490.60" stroke="#4a4a4a" stroke-width="1"/><line x1="411.50" y1="495.00" x2="411.50" y2="497.50" stroke="#4a4a4a" stroke-width="1"/><line x1="411.50" y1="488.10" x2="411.50" y2="490.60" stroke="#4a4a4a" stroke-width="1"/><line x1="422.50" y1="495.00" x2="422.50" y2="497.50" stroke="#4a4a4a" stroke-width="1"/><line x1="422.50" y1="488.10" x2="422.50" y2="490.60" stroke="#4a4a4a" stroke-width="1"/><line x1="432.50" y1="495.00" x2="432.50" y2="497.50" stroke="#4a4a4a" stroke-width="1"/><line x1="432.50" y1="488.10" x2="432.50" y2="490.60" stroke="#4a4a4a" stroke-width="1"/><line x1="443.50" y1="495.00" x2="443.50" y2="497.50" stroke="#4a4a4a" stroke-width="1"/><line x1="443.50" y1="488.10" x2="443.50" y2="490.60" stroke="#4a4a4a" stroke-width="1"/><line x1="453.50" y1="488.10" x2="453.50" y2="497.50" stroke="#4a4a4a" stroke-width="1"/><line x1="464.50" y1="495.00" x2="464.50" y2="497.50" stroke="#4a4a4a" stroke-width="1"/><line x1="464.50" y1="488.10" x2="464.50" y2="490.60" stroke="#4a4a4a" stroke-width="1"/><line x1="474.50" y1="495.00" x2="474.50" y2="497.50" stroke="#4a4a4a" stroke-width="1"/><line x1="474.50" y1="488.10" x2="474.50" y2="490.60" stroke="#4a4a4a" stroke-width="1"/><line x1="484.50" y1="495.00" x2="484.50" y2="497.50" stroke="#4a4a4a" stroke-width="1"/><line x1="484.50" y1="488.10" x2="484.50" y2="490.60" stroke="#4a4a4a" stroke-width="1"/><line x1="495.50" y1="495.00" x2="495.50" y2="497.50" stroke="#4a4a4a" stroke-width="1"/><line x1="495.50" y1="488.10" x2="495.50" y2="490.60" stroke="#4a4a4a" stroke-width="1"/><line x1="505.50" y1="495.00" x2="505.50" y2="497.50" stroke="#4a4a4a" stroke-width="1"/><line x1="505.50" y1="488.10" x2="505.50" y2="490.60" stroke="#4a4a4a" stroke-width="1"/><line x1="516.50" y1="488.10" x2="516.50" y2="497.50" stroke="#4a4a4a" stroke-width="1"/><line x1="526.50" y1="495.00" x2="526.50" y2="497.50" stroke="#4a4a4a" stroke-width="1"/><line x1="526.50" y1="488.10" x2="526.50" y2="490.60" stroke="#4a4a4a" stroke-width="1"/><line x1="536.50" y1="495.00" x2="536.50" y2="497.50" stroke="#4a4a4a" stroke-width="1"/><line x1="536.50" y1="488.10" x2="536.50" y2="490.60" stroke="#4a4a4a" stroke-width="1"/><line x1="547.50" y1="495.00" x2="547.50" y2="497.50" stroke="#4a4a4a" stroke-width="1"/><line x1="547.50" y1="488.10" x2="547.50" y2="490.60" stroke="#4a4a4a" stroke-width="1"/><line x1="557.50" y1="495.00" x2="557.50" y2="497.50" stroke="#4a4a4a" stroke-width="1"/><line x1="557.50" y1="488.10" x2="557.50" y2="490.60" stroke="#4a4a4a" stroke-width="1"/><line x1="568.50" y1="495.00" x2="568.50" y2="497.50" stroke="#4a4a4a" stroke-width="1"/><line x1="568.50" y1="488.10" x2="568.50" y2="490.60" stroke="#4a4a4a" stroke-width="1"/><line x1="578.50" y1="488.10" x2="578.50" y2="497.50" stroke="#4a4a4a" stroke-width="1"/><line x1="588.50" y1="495.00" x2="588.50" y2="497.50" stroke="#4a4a4a" stroke-width="1"/><line x1="588.50" y1="488.10" x2="588.50" y2="490.60" stroke="#4a4a4a" stroke-width="1"/><line x1="599.50" y1="495.00" x2="599.50" y2="497.50" stroke="#4a4a4a" stroke-width="1"/><line x1="599.50" y1="488.10" x2="599.50" y2="490.60" stroke="#4a4a4a" stroke-width="1"/><line x1="609.50" y1="495.00" x2="609.50" y2="497.50" stroke="#4a4a4a" stroke-width="1"/><line x1="609.50" y1="488.10" x2="609.50" y2="490.60" stroke="#4a4a4a" stroke-width="1"/><line x1="620.50" y1="495.00" x2="620.50" y2="497.50" stroke="#4a4a4a" stroke-width="1"/><line x1="620.50" y1="488.10" x2="620.50" y2="490.60" stroke="#4a4a4a" stroke-width="1"/><line x1="630.50" y1="495.00" x2="630.50" y2="497.50" stroke="#4a4a4a" stroke-width="1"/><line x1="630.50" y1="488.10" x2="630.50" y2="490.60" stroke="#4a4a4a" stroke-width="1"/><line x1="640.50" y1="488.10" x2="640.50" y2="497.50" stroke="#4a4a4a" stroke-width="1"/><line x1="651.50" y1="495.00" x2="651.50" y2="497.50" stroke="#4a4a4a" stroke-width="1"/><line x1="651.50" y1="488.10" x2="651.50" y2="490.60" stroke="#4a4a4a" stroke-width="1"/><line x1="661.50" y1="495.00" x2="661.50" y2="497.50" stroke="#4a4a4a" stroke-width="1"/><line x1="661.50" y1="488.10" x2="661.50" y2="490.60" stroke="#4a4a4a" stroke-width="1"/><line x1="672.50" y1="495.00" x2="672.50" y2="497.50" stroke="#4a4a4a" stroke-width="1"/><line x1="672.50" y1="488.10" x2="672.50" y2="490.60" stroke="#4a4a4a" stroke-width="1"/><line x1="682.50" y1="495.00" x2="682.50" y2="497.50" stroke="#4a4a4a" stroke-width="1"/><line x1="682.50" y1="488.10" x2="682.50" y2="490.60" stroke="#4a4a4a" stroke-width="1"/><line x1="692.50" y1="495.00" x2="692.50" y2="497.50" stroke="#4a4a4a" stroke-width="1"/><line x1="692.50" y1="488.10" x2="692.50" y2="490.60" stroke="#4a4a4a" stroke-width="1"/><line x1="703.50" y1="488.10" x2="703.50" y2="497.50" stroke="#4a4a4a" stroke-width="1"/><line x1="79.50" y1="166.30" x2="703.50" y2="166.30" stroke="#4a4a4a" stroke-width="1"/><line x1="79.50" y1="322.40" x2="703.50" y2="322.40" stroke="#4a4a4a" stroke-width="1"/><line x1="74.00" y1="322.40" x2="79.50" y2="322.40" stroke="#4a4a4a" stroke-width="1"/><line x1="703.50" y1="322.40" x2="708.50" y2="322.40" stroke="#4a4a4a" stroke-width="1"/><line x1="701.00" y1="314.59" x2="703.50" y2="314.59" stroke="#4a4a4a" stroke-width="1"/><line x1="701.00" y1="306.79" x2="703.50" y2="306.79" stroke="#4a4a4a" stroke-width="1"/><line x1="701.00" y1="298.98" x2="703.50" y2="298.98" stroke="#4a4a4a" stroke-width="1"/><line x1="74.00" y1="291.18" x2="79.50" y2="291.18" stroke="#4a4a4a" stroke-width="1"/><line x1="703.50" y1="291.18" x2="708.50" y2="291.18" stroke="#4a4a4a" stroke-width="1"/><line x1="701.00" y1="283.38" x2="703.50" y2="283.38" stroke="#4a4a4a" stroke-width="1"/><line x1="701.00" y1="275.57" x2="703.50" y2="275.57" stroke="#4a4a4a" stroke-width="1"/><line x1="701.00" y1="267.76" x2="703.50" y2="267.76" stroke="#4a4a4a" stroke-width="1"/><line x1="74.00" y1="259.96" x2="79.50" y2="259.96" stroke="#4a4a4a" stroke-width="1"/><line x1="703.50" y1="259.96" x2="708.50" y2="259.96" stroke="#4a4a4a" stroke-width="1"/><line x1="701.00" y1="252.16" x2="703.50" y2="252.16" stroke="#4a4a4a" stroke-width="1"/><line x1="701.00" y1="244.35" x2="703.50" y2="244.35" stroke="#4a4a4a" stroke-width="1"/><line x1="701.00" y1="236.54" x2="703.50" y2="236.54" stroke="#4a4a4a" stroke-width="1"/><line x1="74.00" y1="228.74" x2="79.50" y2="228.74" stroke="#4a4a4a" stroke-width="1"/><line x1="703.50" y1="228.74" x2="708.50" y2="228.74" stroke="#4a4a4a" stroke-width="1"/><line x1="701.00" y1="220.94" x2="703.50" y2="220.94" stroke="#4a4a4a" stroke-width="1"/><line x1="701.00" y1="213.13" x2="703.50" y2="213.13" stroke="#4a4a4a" stroke-width="1"/><line x1="701.00" y1="205.32" x2="703.50" y2="205.32" stroke="#4a4a4a" stroke-width="1"/><line x1="74.00" y1="197.52" x2="79.50" y2="197.52" stroke="#4a4a4a" stroke-width="1"/><line x1="703.50" y1="197.52" x2="708.50" y2="197.52" stroke="#4a4a4a" stroke-width="1"/><line x1="701.00" y1="189.72" x2="703.50" y2="189.72" stroke="#4a4a4a" stroke-width="1"/><line x1="701.00" y1="181.91" x2="703.50" y2="181.91" stroke="#4a4a4a" stroke-width="1"/><line x1="701.00" y1="174.11" x2="703.50" y2="174.11" stroke="#4a4a4a" stroke-width="1"/><line x1="74.00" y1="166.30" x2="79.50" y2="166.30" stroke="#4a4a4a" stroke-width="1"/><line x1="703.50" y1="166.30" x2="708.50" y2="166.30" stroke="#4a4a4a" stroke-width="1"/><line x1="79.50" y1="332.00" x2="703.50" y2="332.00" stroke="#4a4a4a" stroke-width="1"/><line x1="79.50" y1="488.10" x2="703.50" y2="488.10" stroke="#4a4a4a" stroke-width="1"/><line x1="74.00" y1="488.10" x2="79.50" y2="488.10" stroke="#4a4a4a" stroke-width="1"/><line x1="703.50" y1="488.10" x2="708.50" y2="488.10" stroke="#4a4a4a" stroke-width="1"/><line x1="701.00" y1="480.30" x2="703.50" y2="480.30" stroke="#4a4a4a" stroke-width="1"/><line x1="701.00" y1="472.49" x2="703.50" y2="472.49" stroke="#4a4a4a" stroke-width="1"/><line x1="701.00" y1="464.69" x2="703.50" y2="464.69" stroke="#4a4a4a" stroke-width="1"/><line x1="74.00" y1="456.88" x2="79.50" y2="456.88" stroke="#4a4a4a" stroke-width="1"/><line x1="703.50" y1="456.88" x2="708.50" y2="456.88" stroke="#4a4a4a" stroke-width="1"/><line x1="701.00" y1="449.08" x2="703.50" y2="449.08" stroke="#4a4a4a" stroke-width="1"/><line x1="701.00" y1="441.27" x2="703.50" y2="441.27" stroke="#4a4a4a" stroke-width="1"/><line x1="701.00" y1="433.47" x2="703.50" y2="433.47" stroke="#4a4a4a" stroke-width="1"/><line x1="74.00" y1="425.66" x2="79.50" y2="425.66" stroke="#4a4a4a" stroke-width="1"/><line x1="703.50" y1="425.66" x2="708.50" y2="425.66" stroke="#4a4a4a" stroke-width="1"/><line x1="701.00" y1="417.86" x2="703.50" y2="417.86" stroke="#4a4a4a" stroke-width="1"/><line x1="701.00" y1="410.05" x2="703.50" y2="410.05" stroke="#4a4a4a" stroke-width="1"/><line x1="701.00" y1="402.25" x2="703.50" y2="402.25" stroke="#4a4a4a" stroke-width="1"/><line x1="74.00" y1="394.44" x2="79.50" y2="394.44" stroke="#4a4a4a" stroke-width="1"/><line x1="703.50" y1="394.44" x2="708.50" y2="394.44" stroke="#4a4a4a" stroke-width="1"/><line x1="701.00" y1="386.63" x2="703.50" y2="386.63" stroke="#4a4a4a" stroke-width="1"/><line x1="701.00" y1="378.83" x2="703.50" y2="378.83" stroke="#4a4a4a" stroke-width="1"/><line x1="701.00" y1="371.02" x2="703.50" y2="371.02" stroke="#4a4a4a" stroke-width="1"/><line x1="74.00" y1="363.22" x2="79.50" y2="363.22" stroke="#4a4a4a" stroke-width="1"/><line x1="703.50" y1="363.22" x2="708.50" y2="363.22" stroke="#4a4a4a" stroke-width="1"/><line x1="701.00" y1="355.42" x2="703.50" y2="355.42" stroke="#4a4a4a" stroke-width="1"/><line x1="701.00" y1="347.61" x2="703.50" y2="347.61" stroke="#4a4a4a" stroke-width="1"/><line x1="701.00" y1="339.81" x2="703.50" y2="339.81" stroke="#4a4a4a" stroke-width="1"/><line x1="74.00" y1="332.00" x2="79.50" y2="332.00" stroke="#4a4a4a" stroke-width="1"/><line x1="703.50" y1="332.00" x2="708.50" y2="332.00" stroke="#4a4a4a" stroke-width="1"/><rect x="79.0" y="166.0" width="614.0" height="156.0" fill="#000" /><g fill="none" stroke-width="1" transform="translate(.5 0)"><path stroke="#00006e" d="M79 292v3m0 1v2m2-15v2m0 7v3m0 2v5m0 1v2m1-40v5m0 20v5m0 1v3m0 1v2m1-12v3m1-18v2m0 13v4m0 2v3m0 1v2m1-34v2m0 13v2m0 7v3m0 2v2m0 1v2m1-27v2m0 6v2m0 12v2m1 2v2m1-36v2m0 14v2m0 12v2m1-26v5m0 4v3m0 6v5m1-25v2m0 4v3m0 13v3m1-24v5m0 16v3m1-3v3m1-23v5m0 15v2m1-21v2m0 16v3m1-30v2m0 6v2m0 1v2m0 4v3m0 7v4m1-23v3m0 17v3m1-19v2m0 3v3m0 8v3m1-23v4m0 1v3m0 1v3m1-18v3m0 8v2m1-14v2m0 14v2m1-1v2m1-19v2m0 14v3m0 8v2m0 1v4m0 3v2m1-38v3m0 12v2m0 13v4m1-9v4m0 1v3m1-34v4m2-60v2m0 54v4m1-4v2m1 14v3m0 2v3m0 13v2m1-22v2m0 8v2m0 8v2m1-82v2m0 40v3m0 5v2m0 1v4m0 2v3m0 12v2m0 1v2m0 1v2m1-33v4m0 6v2m0 3v3m0 9v2m0 1v3m1-38v3m0 2v2m0 3v2m1-6v3m0 1v3m1-12v2m0 4v2m0 1v3m0 6v2m0 5v3m1-92v2m0 67v2m0 23v2m1-32v2m0 11v4m0 1v2m0 10v3m0 1v3m1-18v3m0 13v2m1-38v2m0 4v3m0 6v2m0 6v2m0 1v5m0 2v5m1-39v3m0 4v3m0 6v2m0 9v3m0 5v4m1-97v2m0 63v3m0 11v2m0 4v5m0 2v2m0 1v2m1-38v2m0 4v4m0 16v4m0 6v2m1-32v3m0 6v2m0 9v3m0 3v3m0 1v2m1-37v2m0 3v2m0 1v2m0 15v3m0 3v3m0 1v2m1-95v2m0 53v4m0 4v4m0 2v2m0 1v2m0 9v3m0 4v2m0 1v2m1-31v2m0 3v2m0 9v2m0 2v2m1-89v2m0 64v3m0 17v2m0 4v3m0 1v2m1-39v2m0 5v2m0 1v2m0 11v2m0 2v3m0 4v2m0 1v2m1-97v2m0 62v2m0 1v2m0 6v2m0 4v5m0 3v2m0 2v3m1-68v2m0 37v2m0 6v2m0 2v3m0 2v2m0 1v3m0 1v3m1-33v2m0 11v3m0 2v2m0 9v2m0 3v2m1-23v3m0 16v4m1-23v3m0 3v3m0 8v5m1-37v2m0 18v7m0 6v2m1-35v3m0 13v2m0 2v4m0 1v2m0 5v5m1-37v2m0 12v4m0 1v4m0 2v2m0 4v3m0 1v2m1-37v3m0 12v3m0 7v2m0 1v2m1-30v3m0 13v2m0 2v5m0 7v3m0 1v2m2-39v2m0 14v2m0 5v2m0 11v2m1-38v3m0 4v3m0 6v2m0 5v2m0 4v2m0 5v2m1-94v2m0 61v2m0 13v3m0 4v2m1-32v4m0 14v2m0 2v6m0 5v4m1-36v3m0 21v3m0 2v2m1-30v2m0 5v2m0 12v5m0 2v4m1-33v3m0 18v4m0 11v2m1-38v2m0 19v3m0 5v6m0 1v2m2-27v3m0 8v2m0 3v3m0 1v5m1-28v2m0 1v3m0 3v2m0 3v2m0 3v3m0 1v4m0 1v3m1-31v6m0 1v2m0 5v2m0 3v3m0 3v3m1-28v3m0 1v2m0 8v2m0 4v2m0 2v4m0 1v2m1-31v4m0 4v3m0 3v2m0 3v3m0 1v4m0 2v2m1-31v6m0 3v2m0 3v2m0 3v4m0 1v3m1-24v3m0 1v2m0 5v2m0 4v2m0 1v4m1-27v6m0 8v2m0 4v2m0 1v4m1-95v2m0 66v2m0 1v3m0 1v4m0 3v2m0 3v7m1-26v2m0 1v3m0 6v4m0 3v9m0 1v2m1-34v2m0 1v2m0 2v2m0 9v2m0 1v2m0 5v3m2-28v3m0 1v2m0 12v2m0 2v2m0 1v3m1-33v2m0 7v2m0 9v2m0 1v2m1-88v2m0 70v2m0 7v3m0 7v2m0 4v2m1-27v2m0 9v2m0 8v3m1-35v3m0 4v2m0 2v2m0 9v4m1-85v2m0 79v2m0 8v2m1-37v2m0 12v2m0 9v2m1-13v2m0 7v4m0 5v2m1-10v2m0 2v4m0 4v2m0 1v2m1-98v3m0 67v2m0 13v3m0 2v5m1-29v2m0 2v3m0 12v2m0 1v4m0 1v2m1-36v3m0 3v3m0 8v2m0 8v3m0 2v2m1-17v2m0 3v3m0 1v10m1-26v2m0 10v2m1-2v2m0 7v2m1-31v2m0 22v8m1-23v2m0 9v2m0 3v3m0 1v5m1-29v7m0 8v2m0 5v4m0 1v2m0 1v2m1-38v3m0 5v5m0 6v2m0 1v2m0 1v3m0 2v2m0 1v2m1-97v2m0 81v3m0 6v2m0 1v2m1-27v2m0 1v2m0 2v3m0 2v3m0 2v3m0 2v5m1-37v5m0 7v3m0 9v2m0 2v2m0 2v2m0 1v2m1-15v3m0 4v2m0 1v2m1-33v2m0 10v2m0 7v3m0 2v3m0 5v2m1-27v5m0 13v2m0 1v3m0 1v2m1-24v2m0 6v5m0 2v2m0 3v4m1-26v4m0 7v3m0 2v3m0 4v3m1-35v3m0 8v2m0 4v2m0 13v3m1-35v2m0 5v2m0 2v2m0 2v2m0 10v2m0 7v2m1-101v2m0 22v2m0 37v2m0 5v2m0 1v3m0 2v2m0 4v3m0 12v2m2-95v2m0 55v2m0 5v4m0 4v2m1-17v2m0 5v2m0 6v2m0 4v3m0 12v2m1-38v2m0 5v3m0 1v2m0 12v4m0 7v2m1-31v2m0 18v2m0 7v2m1-38v2m0 6v4m0 3v3m0 3v2m0 13v2m1-31v6m0 2v2m1-76v2m0 57v2m0 5v6m0 2v2m0 4v3m0 12v2m1-38v4m0 2v4m0 5v2m0 5v7m0 7v2m1-39v3m0 7v2m0 4v2m0 2v3m0 1v4m0 5v2m0 2v2m1-38v3m0 3v2m0 1v2m0 10v3m0 1v2m0 8v3m1-33v6m0 4v2m0 4v3m0 1v2m1-28v4m0 6v2m0 4v2m0 4v2m0 2v4m0 3v2m1-34v3m0 8v3m0 7v3m0 1v2m0 8v2m1-39v5m0 3v2m0 7v2m0 8v4m0 3v3m0 1v2m1-32v2m0 2v4m0 1v2m0 8v6m0 4v3m1-101v4m0 59v3m0 7v3m0 2v2m0 8v4m0 3v2m1-93v2m0 57v2m0 4v2m0 2v3m0 8v3m0 1v2m0 1v3m0 1v2m0 2v2m1-39v2m0 4v2m0 9v2m0 5v4m0 1v2m0 1v2m1-35v3m0 5v2m0 7v2m0 8v2m0 9v2m1-39v2m1-1v2m0 9v3m0 8v2m0 1v2m1-28v2m0 5v2m0 17v2m0 1v2m0 6v2m1-103v2m0 62v2m0 5v3m0 16v2m1-28v2m0 6v2m0 1v3m0 15v2m0 1v2m0 3v2m1-31v2m0 3v2m0 2v2m0 7v2m0 9v2m1-39v2m0 15v2m0 7v2m1-29v3m0 21v5m0 1v2m1-23v6m0 3v2m0 2v2m0 8v2m1-25v2m0 11v2m0 1v5m0 1v2m0 3v2m1-35v2m0 4v2m0 2v2m0 10v2m0 1v2m0 1v4m1-90v2m0 62v2m0 1v3m0 3v2m0 2v2m0 4v2m1-22v3m0 1v3m0 2v3m0 2v2m0 8v5m1-28v2m0 1v3m0 3v2m0 8v2m1-27v2m0 7v3m0 3v2m0 2v2m0 4v2m0 2v3m1-32v2m0 1v2m0 1v2m0 7v2m0 2v5m0 1v2m0 1v4m1-22v2m0 12v3m1-21v2m0 2v2m0 2v3m0 2v2m0 4v2m1-28v3m0 3v2m0 3v2m0 15v2m1-31v2m0 10v2m0 8v2m0 11v4m1-38v4m0 2v2m0 2v3m0 15v2m0 6v2m1-39v4m0 3v2m0 3v2m0 14v3m0 6v2m1-38v3m0 4v2m0 1v3m1-72v2m0 57v3m0 3v3m0 12v2m0 13v2m1-38v3m0 7v3m0 1v2m0 20v2m1-39v4m0 3v2m0 2v3m0 21v4m1-38v3m0 2v3m0 2v3m0 1v2m0 20v2m1-32v3m0 1v3m0 15v2m1-31v4m0 3v4m0 15v2m0 1v3m1-25v4m0 15v2m0 4v3m0 1v2m1-38v4m0 3v4m0 11v3m0 1v2m1-26v2m0 2v5m0 11v2m0 2v2m2-22v3m0 13v2m0 4v2m0 3v2m1-36v5m0 2v5m0 14v2m0 1v2m0 1v2m1-33v4m0 3v3m0 13v4m0 2v5m1-33v3m0 3v2m0 3v2m0 8v2m0 2v2m0 1v3m0 4v2m1-36v2m0 3v2m0 13v2m0 5v6m0 2v2m1-33v2m0 3v4m0 11v4m0 7v2m2-39v3m0 6v5m0 12v2m0 8v3m1-30v2m0 1v2m0 13v3m0 6v3m1-40v5m0 7v3m0 12v5m0 6v2m1-40v3m0 7v5m0 13v3m0 7v2m1-30v2m0 25v3m1-33v2m0 2v4m0 13v3m0 4v2m0 1v2m1-39v3m0 6v2m0 1v2m0 13v4m0 4v4m1-36v2m0 1v2m0 4v2m0 12v4m0 7v2m1-40v2m0 11v2m0 9v2m0 3v2m0 4v2m1-6v2m1-20v2m0 1v2m0 3v2m0 6v3m0 6v2m1-39v2m0 10v2m0 9v2m0 3v2m1-23v3m0 2v2m0 1v2m0 16v3m1-27v2m0 1v2m0 13v2m0 1v2m1-32v2m0 26v5m1-33v2m0 7v2m0 1v2m0 13v3m1-23v3m0 2v2m0 6v2m1-22v2m0 26v2m1-31v4m0 8v2m0 9v2m0 2v3m0 6v2m1-38v5m0 7v4m0 2v2m0 7v3m0 5v5m1-82v2m0 40v5m0 7v3m0 13v3m0 4v2m0 1v2m1-40v3m0 9v3m0 8v3m0 9v2m1-97v3m0 59v3m0 8v2m1-3v3m0 13v2m1-29v2m0 9v3m0 13v2m0 5v2m1-34v2m0 8v2m0 12v3m0 5v2m1-79v2m0 41v4m0 7v4m0 19v2m1-96v2m0 58v4m0 7v3m0 9v2m0 2v2m0 5v2m1-36v2m0 4v4m0 7v2m0 7v5m1-24v4m0 1v2m0 1v2m0 4v2m0 4v4m1-24v2m0 17v5m0 5v2m1-30v2m0 1v2m0 4v2m0 2v2m0 2v2m0 1v3m0 5v2m1-38v2m0 5v3m0 7v2m0 1v3m0 3v2m1-21v4m0 6v2m0 2v2m0 3v3m1-29v2m0 23v5m0 5v3m1-21v2m0 1v3m0 2v2m0 1v3m1-24v3m0 2v3m0 10v2m0 4v2m1-22v2m0 8v2m0 3v2m1-22v8m0 1v2m0 5v3m0 3v2m0 3v3m1-29v3m0 1v3m0 2v2m0 1v6m0 4v3m0 1v3m1-30v2m0 1v4m0 8v3m0 3v3m0 3v2m1-14v3m0 5v3m0 1v3m1-92v2m0 61v5m0 17v3m1-32v2m0 9v3m0 6v4m0 4v2m0 3v3m0 1v2m1-19v2m0 7v7m0 1v2m1-33v3m0 7v2m0 2v4m0 10v2m1-38v4m0 5v3m0 1v2m0 3v2m0 3v4m0 8v2m0 2v2m1-37v2m0 2v4m0 1v3m0 7v4m0 1v2m0 5v3m0 1v2m1-37v2m0 3v2m0 2v3m0 2v3m0 4v2m0 6v2m1-31v2m0 7v3m0 3v2m0 8v2m0 2v2m0 1v2m1-16v2m0 6v2m0 1v2m0 2v2m1-35v2m0 3v3m0 7v2m0 7v4m0 1v2m0 1v2m1-34v2m0 7v4m0 2v2m0 7v4m0 1v5m1-24v2m0 3v2m0 8v2m0 2v2m1-35v2m0 12v3m0 13v2m0 1v2m0 1v2m1-34v2m0 4v2m0 7v2m0 4v2m0 6v2m0 1v2m1-37v2m0 10v3m0 2v3m0 4v2m0 9v2m1-37v2m0 10v3m0 2v3m0 4v2m0 1v4m1-88v2m0 66v3m0 8v2m0 12v4m1-27v2m0 20v2m1-62v2m0 26v2m0 7v2m0 9v2m0 4v2m0 5v2m1-36v2m0 6v2m0 1v2m0 1v2m0 11v2m0 4v2m0 1v2m1-97v2m0 56v4m0 4v2m0 2v2m0 7v3m0 10v4m1-36v3m0 6v3m0 14v2m0 5v2m1-25v2m0 1v2m0 17v4m1-36v2m0 7v3m0 7v2m1-21v3m0 6v3m0 8v2m0 1v2m0 6v3m1-34v2m0 8v2m0 12v2m0 6v2m0 1v2m1-13v2m1-28v3m0 12v3m1-17v2m0 4v2m0 7v2m0 8v4m2-90v2m0 57v2m0 6v2m0 7v2m0 5v2m1 1v4m1-30v2m0 5v3m0 13v2m0 1v4m0 7v2m1-41v4m0 18v2m0 13v2m1-36v2m0 4v2m0 7v3m0 4v2m0 4v3m1-17v4m0 4v2m0 1v2m1-4v2m0 1v3m0 1v2m0 1v2m1-28v2m0 6v3m0 9v3m0 1v2m1-32v2m0 20v2m0 2v2m0 1v2m0 1v4m1-21v2m0 5v3m0 1v5m0 2v3m1-36v2m0 4v2m0 21v7m1-36v2m0 24v2m0 1v2m0 1v2m2-33v2m0 3v2m0 6v2m0 6v2m0 8v2m1-34v2m0 13v2m0 10v2m0 1v3m1-34v3m0 4v2m0 7v2m0 5v2m0 1v3m0 4v4m2-40v2m0 2v2m0 2v2m0 1v3m0 12v4m0 4v2m0 3v2m1-37v2m0 6v2m0 5v2m0 7v2m0 9v2m1-97v2m0 58v2m0 2v2m0 1v2m0 14v2m0 5v3m1-34v2m0 20v3m0 11v2m1-37v2m0 5v3m0 14v2m0 4v2m0 3v2m1-25v2m0 7v4m0 5v2m0 3v2m1-40v5m0 19v2m0 7v2m1-34v4m0 19v2m0 12v2m1-37v3m0 4v3m0 11v3m0 3v2m0 6v2m2-40v3m0 1v2m0 1v2m0 17v2m0 5v2m1-18v2m1-19v2m0 8v3m0 10v2m0 4v2m1-15v3m0 14v2m0 1v2m1-15v2m0 11v2m1-93v2m0 86v2m0 1v3m1-15v3m0 2v2m0 1v3m3-27v2m0 12v7m0 9v2m1-95v2m0 55v2m0 7v3m0 8v9m1-18v2m0 1v2m0 4v4m0 1v4m1-29v2m0 8v3m0 1v2m0 6v7m0 4v2m1-35v2m0 4v3m0 11v4m0 1v4m1-29v2m0 3v8m0 7v3m0 2v2m1-27v2m0 4v2m0 2v4m0 5v10m1-23v3m0 24v2m1-35v2m0 4v2m0 1v4m0 7v9m0 1v2m1-22v4m0 5v6m1-84v2m0 57v3m0 6v4m0 10v2m0 3v7m1-35v3m0 1v2m0 1v2m0 6v3m0 5v2m0 5v4m1-34v3m0 7v2m0 3v3m0 8v3m1-28v2m0 23v2m0 1v3m1-32v3m0 3v2m0 2v2m0 2v4m0 11v3m0 1v3m1-93v2m0 55v3m0 3v2m0 6v4m0 8v3m0 1v2m0 2v2m1-21v3m0 8v3m0 3v4m1-26v3m0 2v3m0 5v2m0 1v3m0 1v3m1-33v3m0 7v3m0 1v4m0 12v4m1-34v3m0 3v3m0 5v3m0 6v2m0 1v3m1-29v2m0 3v7m0 2v3m0 3v2m0 7v2m1-32v4m0 2v4m0 6v3m0 12v2m1-33v4m0 27v2m1-31v2m0 28v2m1-92v3m0 55v5m0 11v2m0 10v2m0 1v3m0 2v2m2-36v2m0 21v2m0 3v3m1-33v2m1 0v2m0 3v2m0 1v2m0 4v2m0 2v2m0 4v4m0 1v2m1-31v2m0 24v2m0 1v3m1-13v2m0 3v2m0 1v6m1-35v2m0 8v4m0 12v2m0 3v4m0 1v2m1-17v4m0 1v2m0 4v2m1-35v4m0 8v2m0 2v2m0 4v9m0 1v3m1-34v3m0 8v2m0 8v7m0 1v5m1-34v3m0 7v2m0 9v4m0 3v2m0 2v3m0 1v2m1-93v2m0 55v2m0 8v3m0 2v2m1-17v2m0 8v2m0 7v4m0 7v3m1-24v2m0 10v4m0 6v2m1-35v3m0 18v3m0 2v4m0 2v2m1-33v3m0 4v2m0 2v2m0 10v4m1-26v2m0 22v3m0 5v2m2-37v4m0 4v3m0 1v3m0 12v5m1-30v3m0 17v5m0 1v4m2-31v3m0 9v2m0 7v2m0 3v4m1-30v4m0 7v3m0 7v2m0 5v2m1-30v4m0 3v3m0 1v2m0 13v4m1-30v4m0 17v8m0 1v2m1-22v2m0 5v2m0 8v2m0 4v2m1-96v3m0 23v2m0 33v2m0 19v2m1-2v2m0 1v2m2-86v2m0 60v2m1-64v2m0 60v2m0 12v3m0 4v3m0 2v2m0 6v3m1-95v2m0 75v2m0 4v3m0 3v2m0 2v2m1-15v2m0 1v3m0 7v2m2-40v3m1-1v2m0 6v2m0 1v2m1-14v3m1-63v2m0 59v2m0 3v2m0 4v2m0 3v2m0 7v3m0 2v2m1-94v2m0 68v5m0 2v2m0 13v4m1-35v4m0 5v2m0 1v2m0 1v2m0 9v2m0 4v3m1-94v3m0 56v3m0 3v2m0 4v2m0 2v3m0 4v2m1-24v2m0 8v3m0 2v3m0 2v2m0 8v2m0 4v2m1-38v2m0 8v2m0 8v4m0 6v2m1-89v2m0 63v2m0 5v3m0 8v2m0 1v4m1-33v2m0 9v2m0 3v2m0 2v2m0 3v2m0 3v2m1-26v2m0 12v8m0 5v2m1-37v5m0 3v2m0 15v5m0 5v2m1-94v4m0 54v2m0 5v2m0 16v4m0 3v2m0 1v3m1-38v2m0 23v4m0 5v2m1-36v4m0 14v2m0 6v2m0 6v3m1-17v2m0 4v3m0 3v4m2-37v3m0 5v2m0 17v3m0 3v3m1-34v3m0 3v2m0 7v3m0 6v4m0 5v2m1-10v2m0 7v3m1-30v2m0 13v2m0 3v4m0 1v3m1-35v3m0 19v2m0 3v8m1-31v2m0 4v4m0 8v2m0 3v2m0 7v2m1-11v2m1-16v3m0 6v2m0 3v2m0 1v5m1-21v2m0 11v4m0 1v3m1-13v2m0 3v7m1-7v2m0 1v4m1-7v3m0 1v4m1-79v2m0 49v2m0 13v2m0 3v8m1-25v2m0 3v3m0 9v2m0 3v3m1-36v4m0 9v2m0 9v3m0 1v2m0 1v6m1-97v2m0 57v4m0 13v3m0 6v2m0 1v2m0 2v5m1-37v2m0 1v2m0 19v2m0 2v4m0 2v2m1-36v2m0 14v3m0 5v3m0 1v2m0 3v3m1-36v4m0 12v3m0 9v2m0 3v3m1-36v3m0 9v2m0 2v3m0 5v3m0 4v2m0 1v2m1-24v2m0 2v3m0 6v5m0 3v3m1-36v4m0 12v3m0 9v3m0 1v3m1-36v5m0 2v2m0 3v3m0 10v3m0 1v2m0 3v3m1-92v2m0 54v4m0 20v2m0 3v2m1-89v2m0 56v4m0 7v3m0 14v2m1-31v2m0 10v2m0 2v3m0 4v3m1-26v5m0 7v3m1-14v3m1-2v3m0 8v2m0 8v3m0 1v2m0 5v2m1-91v2m0 54v3m0 8v2m0 19v5m1-97v2m0 59v3m0 5v2m0 18v2m1-86v2m0 53v3m0 23v2m0 4v3m2-28v2m0 1v2m0 9v2m0 4v2m1-22v3m0 1v2m0 2v2m0 19v3m1-33v6m0 9v3m0 12v3m1-31v2m0 1v2m0 13v2m0 8v2m1-30v2m0 1v2m0 8v4m0 7v2m0 3v2m1-52v2m0 12v3m0 2v4m0 16v4m0 4v4m1-31v3m0 11v3m0 12v3m1-32v3m0 5v3m0 3v3m0 2v2m0 2v2m0 1v2m0 1v3m1-33v3m0 12v3m0 3v2m0 7v2m1-31v2m0 6v2m0 5v2m0 7v4m0 1v2m1-27v3m0 2v2m0 13v2m0 4v2m1-36v2m0 2v3m0 6v2m0 13v2m0 3v2m1-38v2m0 19v4m0 10v4m1-39v2m0 3v2m0 4v2m0 17v2m0 4v3m1-31v2m0 1v4m0 1v2m0 3v3m0 4v2m0 7v2m1-28v2m0 3v3m0 9v2m0 2v2m1-34v2m0 5v3m0 1v3m0 1v3m1-10v2m0 1v3m0 2v2m0 2v2m0 1v2m0 6v2m0 4v2m1-99v2m0 73v3m0 4v2m0 1v4m0 2v2m0 4v2m1-19v2m0 1v2m0 6v2m0 3v2m1-11v5m1-32v2m0 26v3m0 6v2m1-16v2m0 3v2m1-30v2m0 4v2m0 12v2m0 1v2m0 3v3m0 6v2m1-33v2m0 15v2m0 2v3m0 7v2m1-39v2m0 24v6m1-92v2m0 64v2m0 20v4m0 5v2m1-11v3m2-31v2m0 4v2m0 15v2m0 3v2m1-88v2m0 56v2m0 10v5m0 5v3m0 1v4m0 1v5m0 1v2m1-39v4m0 4v2m0 2v4m0 10v3m0 5v5m1-39v2m0 9v2m0 10v2m0 2v3m0 2v7m1-37v2m0 22v2m0 4v2m0 3v2m1-27v2m0 9v7m0 2v6m1-27v2m0 9v6m0 5v3m1-28v2m0 1v3m0 18v4m1-24v3m0 1v2m0 5v2m0 1v2m0 5v3m1-25v2m0 1v2m0 10v2m0 5v3m1-29v3m0 1v5m0 7v2m0 1v2m0 5v2m0 1v3m1-27v3m0 12v3m0 2v2m0 3v2m1-32v2m0 3v2m0 4v2m0 8v2m0 7v2m1-98v2m0 64v2m0 14v2m0 3v2m0 2v4m0 1v2m1-38v3m0 4v3m0 1v2m0 14v3m0 3v3m1-30v2m0 3v3m0 8v2m0 3v2m1-18v2m0 4v2m0 7v4m1-86v2m0 65v3m0 8v2m0 3v2m0 7v2m1-99v2m0 65v2m0 3v2m0 9v2m0 3v3m0 2v2m0 2v2m1-99v2m0 86v2m0 7v2m1-38v2m0 9v2m0 4v2m0 3v2m0 2v3m0 7v2m1-37v2m0 3v2m0 2v3m0 16v2m1-20v2m1-13v3m0 3v3m0 2v2m0 11v4m0 6v4m1-100v2m0 66v2m0 2v3m0 13v2m0 5v3m1-36v2m0 4v2m0 3v2m0 20v2m0 1v2m1-37v2m0 3v7m0 21v3m1-32v4m0 1v3m0 15v3m1-31v3m0 2v4m0 1v3m0 3v2m0 14v6m2-39v3m0 3v4m0 2v2m0 8v2m0 3v3m1-91v3m0 84v3m0 5v2m1-27v2m0 23v5m1-38v3m0 4v2m0 2v2m0 20v2m1-92v2m0 55v3m0 8v2m0 7v2m0 11v2m1-35v3m0 5v2m0 1v2m1-70v2m0 55v3m0 3v5m0 4v3m0 2v3m0 10v2m1-31v3m0 9v2m0 8v2m0 5v2m0 1v2m1-38v4m0 3v2m0 2v3m0 2v2m0 2v2m0 4v2m1-27v2m0 3v4m0 1v2m0 3v2m0 15v2m1-92v2m0 62v2m0 4v5m0 15v2m0 1v2m1-99v2m0 67v2m0 1v3m0 1v3m0 17v3m1-39v2m0 1v2m0 7v2m0 22v3m1-39v2m0 9v5m0 21v2m1-37v2m0 13v2m0 6v2m0 10v2m1-39v4m0 5v3m0 4v3m0 2v2m0 8v2m0 2v4m1-97v2m0 68v2m0 3v2m0 2v2m0 5v2m0 5v4m1-27v2m0 2v3m0 2v2m0 2v5m1-27v2m0 4v2m0 1v2m0 21v2m1-37v2m0 5v3m0 2v3m0 1v2m0 7v2m0 8v4m1-29v2m0 13v2m0 9v3m1-29v2m0 1v2m0 1v3m0 12v5m1-8v2m0 1v5m1-96v2m0 58v2m0 19v2m0 8v4m1-35v3m0 5v2m0 23v3m1-59v3m0 53v2m1-35v3m0 4v3m0 21v5m1-36v2m0 14v2m0 3v3m0 10v3m1-38v3m0 4v3m0 12v3m0 9v2m1-35v2m0 26v2m1-29v2m0 28v2m1-32v2m0 5v2m1-10v3m0 4v3m0 22v2m1-26v2m0 5v2m0 4v2m0 3v2m2-22v4m1-70v2m0 67v3m1-11v3m0 16v2m1-15v2m0 7v2m0 3v4m1-17v2m0 10v3m0 14v2m1-18v2m0 4v3m0 7v2m1-32v2m0 3v2m0 2v2m0 10v3m0 3v2m1-29v4m0 4v4m0 2v2m0 1v2m0 2v2m0 2v3m1-28v3m0 7v2m0 2v2m0 1v3m0 1v2m0 2v2m2-27v3m0 6v3m0 9v2m1-28v2m0 2v4m0 1v3m0 2v3m0 2v2m0 5v3m0 2v3m1-29v3m0 2v3m0 1v3m0 9v2m0 1v3m1-34v2m0 6v2m0 6v3m0 2v2m0 1v3m0 1v2m0 4v2m1-29v3m0 2v2m0 2v3m0 9v2m0 1v5m1-30v4m0 2v2m0 14v2m0 2v4m1-34v2m0 22v2m0 3v3m1-19v4m0 6v2m0 3v5m1-35v4m0 5v2m0 2v3m0 6v5m0 4v4m1-34v3m0 17v4m0 5v2m1-32v4m0 17v6m0 3v2m1-31v3m0 5v2m0 10v2m0 3v2m0 3v4m1-10v3m0 3v2m1-17v3m0 7v2m0 3v3m1-34v4m0 17v4m0 5v2m1-30v3m0 16v2m0 8v4m1-36v2m0 9v2m0 3v4m0 3v4m0 2v3m1-31v3m0 3v6m0 10v3m0 6v2m1-25v2m1-70v2m0 57v4m0 5v2m0 19v2m1-31v2m0 8v2m0 3v2m0 4v2m0 6v2m1-89v2m0 56v2m0 4v6m0 4v2m0 3v2m0 5v2m0 1v5m1-98v2m0 62v2m1-5v3m0 4v2m2-6v2m0 6v2m1-4v2m0 2v2m0 1v3m0 5v2m0 1v4m1-22v3m0 1v2m0 2v2m0 5v6m0 2v2m0 1v2m0 1v2m1-31v2m0 1v3m0 2v2m0 7v5m0 2v4m1-28v3m0 5v2m0 5v2m0 1v3m0 5v2m1-96v2m0 66v6m0 1v3m0 5v2m0 1v2m1-29v3m0 14v2m0 7v4m1-21v3m0 1v2m0 2v2m0 2v2m0 1v6m0 2v2m1-33v5m0 3v2m0 6v2m0 5v2m1-26v2m0 7v3m0 5v2m1-2v4m1-20v2m0 11v2m1 1v3m1-3v3m0 8v2m0 3v2m1-7v2m1-27v2m0 12v3m1-20v2m0 6v2m0 8v2m0 8v2m0 3v2m0 3v2m1-22v2m0 8v2m0 8v2m1-98v2m0 84v2m1-13v4m0 7v2m0 2v2m1-31v2m0 9v2m0 1v4m0 7v5m1-22v2m0 14v3m1-29v2m0 10v2m0 14v2m1-30v4m0 7v3m0 14v2m1-30v4m0 20v6m1-4v2m0 4v3m1-36v2m0 6v3m0 6v3m0 5v2m1-26v4m0 12v3m0 5v4m0 4v3m1-36v5m0 13v2m1-17v2m0 13v2m0 5v2m1-26v4m0 7v3m0 2v3m0 8v3m0 3v2m1-28v3m0 3v2m0 21v3m1-39v3m0 3v4m0 27v2m2-40v5m0 3v3m0 13v2m1-27v5m0 3v2m0 13v2m1-23v4m0 3v3m1-2v2m0 19v2m1-29v2m0 3v3m0 3v2m0 9v2m0 2v2m1-30v2m0 4v4m0 18v2m0 4v2m0 1v2m1-39v3m0 34v2m1-32v2m0 7v3m0 4v4m1-26v3m0 13v2m0 1v7m0 1v3m0 5v3m1-39v3m0 4v3m0 5v2m0 5v2m0 12v3m1-99v4m0 57v3m0 3v3m0 6v3m0 4v2m0 4v2m0 1v2m0 2v3m1-39v3m0 4v2m1-67v2m0 56v3m0 4v2m0 3v2m1-14v3m0 3v3m1-9v4m1-4v3m0 2v4m0 6v4m0 4v4m0 1v2m0 7v2m1-39v3m0 4v4m0 4v2m0 5v5m0 1v3m1-31v2m0 5v3m0 1v2m0 3v3m0 3v3m0 12v2m1-23v2m0 4v2m1-25v2m0 6v3m0 7v2m0 3v2m0 4v2m0 2v4m0 1v2m1-95v2m0 56v2m0 7v2m0 3v4m0 1v3m0 4v2m0 7v2m2-39v2m0 9v2m0 3v3m0 3v2m0 6v3m0 3v3m1-40v3m0 7v4m0 9v3m1-23v2m0 3v3m0 1v2m0 9v3m1-18v2m0 2v2m0 9v3m0 1v2m1-21v3m0 1v2m0 8v3m1-24v4m0 3v2m0 3v2m0 14v2m0 1v2m1-92v2m0 57v2m0 5v2m0 2v3m0 2v3m0 9v5m1-33v3m0 3v4m0 2v2m0 9v2m0 6v2m1-26v2m0 3v2m0 2v2m0 9v3m0 4v2m1-98v4m0 59v3m0 3v3m0 2v2m0 2v2m0 9v2m1-28v4m0 2v3m0 6v3m0 7v3m0 8v2m1-97v2m0 56v4m0 3v2m0 7v3m0 7v7m0 1v2m1-36v3m0 4v2m0 3v2m0 2v2m0 5v2m0 2v3m1-30v3m0 3v3m0 3v2m0 2v2m0 9v3m0 1v2m0 1v2m2-29v3m0 3v2m0 1v2m0 3v3m0 2v2m0 1v3m0 1v2m1-35v2m0 6v2m0 6v2m0 4v2m0 8v2m0 2v2m1-31v2m0 7v2m0 4v3m0 6v4m1-30v2m0 1v2m0 6v2m0 13v4m1-28v4m0 5v2m0 3v3m0 2v2m0 3v3m0 2v2m1-98v2m0 65v3m0 6v3m0 2v2m0 13v3m1-32v3m0 11v4m0 1v2m0 5v2m1-36v2m0 5v3m0 17v2m0 1v5m1-27v3m0 11v2m0 1v4m0 5v2m0 1v2m1-32v4m0 1v3m0 8v6m0 3v4m0 1v2m1-26v2m0 7v2m0 1v5m0 4v4m2-17v3m0 1v4m0 5v2m1-23v2m0 3v2m0 6v2m0 1v3m0 2v3m1-24v2m0 2v2m0 8v3m0 4v4m1-25v2m0 1v3m0 8v4m0 3v4m1-35v2m0 8v2m0 2v2m0 3v2m0 3v3m0 4v3m1-35v2m0 9v2m0 3v2m0 2v2m0 3v3m1-25v2m0 6v2m0 3v2m0 2v2m0 1v3m0 1v3m0 3v2m1-34v2m0 8v2m0 7v2m0 5v2m0 3v4m1-29v2m0 2v2m0 13v2m0 1v3m0 1v2m1-30v2m0 4v2m0 19v3m1-98v2m0 60v4m0 8v3m0 16v5m1-94v2m0 57v3m0 8v2m0 17v4"/><path stroke="#0000c1" d="M80 279v3m0 5v2m0 1v4m0 1v2m0 1v6m1-79v6m1-53v2m0 3v5m0 6v2m0 75v2m1-107v2m0 4v2m0 1v3m0 2v2m0 8v4m0 76v2m3-101v3m0 5v4m0 6v3m1 17v5m0 1v7m0 1v7m0 1v2m0 1v6m0 1v2m0 4v7m0 7v12m0 1v8m1-63v4m0 4v6m0 1v4m0 5v3m0 1v4m0 1v12m0 16v2m1-98v2m0 3v5m0 86v2m1-107v3m0 6v3m0 1v2m0 12v2m0 71v2m0 3v5m0 3v5m0 7v5m1-125v2m0 8v3m1-14v4m0 9v2m0 4v2m0 72v2m0 1v2m1 5v4m0 2v5m0 7v5m1-77v2m0 46v9m0 5v2m0 3v2m0 4v2m1-99v3m1-40v3m0 3v6m0 1v4m0 6v2m0 8v2m1-34v2m0 9v3m0 1v2m0 1v2m0 2v2m0 83v2m0 3v2m1-111v4m0 9v5m0 6v2m0 3v2m0 86v5m0 1v5m0 1v5m1-137v2m0 10v7m0 11v5m1-35v2m0 16v8m0 6v2m1-35v3m0 3v2m0 2v2m0 1v2m0 12v4m0 2v4m0 84v5m0 1v5m0 1v5m1-106v2m0 79v2m1-102v3m0 1v2m0 10v2m0 2v2m0 2v2m1 6v2m0 88v2m1-102v2m0 76v5m0 3v5m0 1v5m0 1v5m1-125v2m0 8v6m1-21v7m0 16v2m0 4v3m1-23v2m0 6v3m0 5v5m0 59v2m0 15v4m0 3v5m0 1v5m0 1v5m1-133v2m0 14v2m0 4v2m0 84v2m1-103v2m0 1v2m0 12v2m0 78v2m0 2v2m1-110v5m0 8v2m0 17v2m1-24v2m0 2v3m0 1v2m1-16v2m0 5v2m0 8v3m0 2v2m0 80v5m0 3v5m0 7v5m2-139v2m0 6v4m0 5v4m0 4v5m0 2v3m1-30v3m0 3v2m0 2v4m0 3v2m0 2v2m0 88v3m0 3v5m0 7v5m1-137v2m0 4v4m0 1v3m0 3v4m0 3v3m1-28v3m0 4v3m0 6v2m1 17v2m1-34v2m0 15v3m0 2v4m0 2v4m0 77v2m1-108v3m0 2v4m0 4v4m0 90v4m0 6v2m1-112v2m0 2v2m0 16v2m0 76v3m1-102v2m0 9v2m0 4v2m0 2v2m1-31v2m0 16v2m0 1v3m2-17v2m0 1v3m0 2v2m0 2v2m0 2v4m0 101v2m1-98v2m0 88v2m1-87v4m0 67v2m1-112v2m0 11v3m0 1v3m0 3v2m0 6v2m1-28v2m0 1v7m0 85v2m0 6v3m1-106v2m0 4v3m0 1v3m0 4v2m0 1v5m0 1v2m1-32v2m0 1v2m0 3v3m0 5v2m0 4v2m0 2v4m1-20v4m0 10v2m1-24v2m0 6v2m0 8v2m0 4v2m1-20v2m0 1v4m0 15v4m1 66v2m1-63v2m1-31v4m0 85v2m1-17v3m0 41v3m1-23v2m0 13v2m1-67v21m0 29v2m1-110v2m0 6v2m0 2v2m0 5v3m0 6v2m0 69v2m0 8v2m1-105v3m0 1v2m0 6v2m0 6v2m1-27v5m0 2v9m0 8v3m0 71v3m1-104v3m0 2v4m0 1v3m0 1v2m0 8v2m0 8v2m0 75v2m1-11v2m1-91v2m0 3v4m0 89v2m1-11v2m0 6v3m0 12v2m1-126v2m0 14v3m0 2v2m1-8v2m0 2v7m0 3v4m1 26v21m1-79v3m0 2v5m0 3v7m1-21v3m0 4v4m0 2v6m0 8v4m1-24v3m0 3v2m1-12v3m0 1v4m0 2v3m0 3v6m1-20v2m0 3v5m0 4v5m0 85v2m1-112v3m0 1v9m0 1v4m0 10v2m0 2v2m1-1v3m2 94v3m1-105v2m1-26v2m0 8v2m0 4v2m0 12v2m1-27v2m0 1v2m0 2v2m0 8v2m0 2v2m0 89v2m1-122v3m0 1v3m0 1v3m0 2v4m0 10v5m0 68v2m0 18v2m1-117v3m0 2v5m0 4v2m0 79v2m0 7v2m2-100v3m0 7v6m0 93v2m1-88v4m1 71v2m1-103v3m0 14v3m0 3v2m0 91v2m1-84v3m1-37v2m0 4v3m0 6v2m1 31v19m0 34v2m1-104v3m0 2v3m1 26v2m0 81v2m1-17v2m1-11v2m0 7v2m1-108v2m0 10v3m0 6v4m0 6v2m1-8v2m1-20v5m0 3v3m1-20v2m0 13v2m0 1v2m0 4v4m0 80v2m1-104v2m0 4v4m0 2v4m0 86v2m0 20v2m1-123v3m0 2v4m0 2v2m0 4v2m1-20v2m0 10v2m0 4v8m2-23v6m0 1v2m0 88v2m0 14v2m1-118v2m0 8v2m2-21v2m0 19v2m0 25v8m1-53v2m0 2v2m0 1v2m0 12v3m2-13v3m0 7v5m0 3v4m0 73v2m0 7v2m1-13v3m1-81v2m0 8v2m0 1v9m0 2v3m0 53v2m1-6v9m0 2v2m0 1v2m1-13v2m0 9v3m1-105v5m0 95v2m1-114v2m0 8v2m0 10v2m1 11v4m0 65v2m1-2v2m1-114v2m0 6v3m0 1v3m0 3v2m0 6v2m0 4v2m1-30v3m0 5v2m0 6v2m0 7v3m0 80v2m1-106v3m0 1v2m0 2v3m0 1v3m0 8v3m1-20v2m0 6v3m0 6v3m1-20v2m0 96v2m1-110v3m0 3v4m0 3v3m0 5v4m1-14v2m0 11v2m0 2v2m1-14v2m0 4v2m0 2v4m1-27v2m0 7v2m0 2v4m0 4v2m0 66v2m1-95v3m0 9v3m0 12v2m0 80v2m1-101v3m0 3v2m0 2v2m0 81v6m0 3v2m0 2v9m0 2v7m1-129v2m0 1v5m0 9v2m0 70v2m1-83v4m0 2v2m0 88v2m1-108v4m0 1v3m0 1v3m0 4v3m0 87v2m1-108v2m0 1v2m0 4v3m0 1v2m1 16v4m1-34v2m0 3v2m0 3v3m0 2v4m0 5v3m0 4v2m0 61v2m0 9v2m1-106v2m0 1v3m0 4v4m0 2v6m0 82v2m1-116v2m0 11v2m0 2v2m0 5v3m0 4v2m0 81v2m0 19v2m1-131v2m0 10v2m0 5v3m0 1v3m1 103v2m1-123v5m0 5v7m0 1v2m0 1v2m0 77v2m1-75v3m1 60v3m1-98v2m0 2v2m0 3v2m0 4v2m0 2v3m0 1v4m0 78v2m1-100v2m0 2v3m0 5v4m0 2v2m1-1v4m1 1v3m0 71v2m1-112v5m0 6v3m0 4v4m0 2v2m0 4v2m0 99v2m1-127v2m0 7v3m0 12v2m0 74v2m0 2v2m0 13v2m1-70v19m0 34v2m1-92v2m0 8v2m1-16v2m0 1v3m0 13v2m0 73v2m1-78v2m0 89v2m1-111v2m0 2v3m0 1v2m1-28v2m0 3v3m0 15v2m0 3v2m0 1v6m1-28v3m0 4v2m0 4v6m0 105v2m1-107v2m0 82v2m2-114v2m0 8v2m0 2v3m0 3v2m0 6v4m1-34v5m0 1v2m0 1v5m0 1v7m0 4v2m0 2v4m0 80v2m1-108v2m0 10v3m0 1v6m1 99v2m0 1v5m1-119v3m0 11v2m3-22v3m0 8v2m0 13v3m2-2v2m1-33v3m0 3v2m0 1v2m0 1v2m0 4v5m0 1v3m0 2v11m0 1v9m0 3v10m0 4v2m0 1v3m0 3v2m0 3v9m0 2v3m0 4v2m0 3v7m0 5v8m0 1v6m1-34v2m1-105v2m0 5v3m0 113v2m1-118v3m0 4v2m0 12v4m0 2v2m1-30v2m0 5v3m0 10v3m0 85v3m0 3v5m1-118v3m0 1v2m0 1v3m0 1v2m1-16v2m0 7v5m0 4v5m0 9v2m1 58v2m0 16v3m0 3v5m1-112v2m0 93v2m1-97v2m0 1v5m1 91v2m1-100v3m0 1v3m0 1v2m2-15v4m0 11v2m0 4v2m2-24v4m0 6v3m0 5v4m0 1v2m0 79v5m0 3v5m0 7v5m1-137v3m0 5v3m0 1v2m0 5v9m0 2v2m0 2v2m1-29v3m0 6v6m1-9v2m0 4v2m0 2v3m0 6v2m0 62v2m0 14v5m0 3v5m0 7v5m1-130v2m0 2v4m0 4v3m0 4v4m0 2v2m1-30v2m0 8v2m0 2v5m0 6v3m0 1v2m1-27v6m0 4v2m0 6v2m0 3v4m1-29v4m0 4v5m0 1v2m0 4v2m0 2v2m0 2v2m0 76v2m2-116v4m0 9v2m0 5v3m0 1v2m0 6v3m1 13v2m1 55v2m1-101v3m0 1v2m0 1v3m0 3v2m0 1v7m0 1v2m1-26v2m0 6v7m0 3v2m0 10v2m1-27v2m0 1v2m0 2v2m0 116v2m1-127v2m0 112v2m1-13v2m1-106v3m0 5v5m0 91v2m1-103v3m0 4v6m1-10v2m0 2v6m0 6v2m0 2v2m1-29v3m0 1v2m0 17v3m1-18v2m0 17v2m1 91v2m0 5v2m2-114v2m0 1v2m1-16v5m0 9v3m0 1v2m0 3v4m1-33v3m0 10v2m0 2v4m1 55v6m0 3v2m0 1v4m0 1v2m0 6v3m0 3v2m1-102v2m0 20v2m1-16v2m0 10v2m1-11v3m0 1v3m0 1v3m0 5v4m0 1v2m0 1v5m0 1v2m0 6v4m0 5v2m0 1v4m0 1v2m0 1v15m0 1v5m0 2v3m0 3v3m0 7v7m2-118v2m0 6v2m0 1v7m0 1v3m0 81v2m1-109v2m0 1v4m0 3v2m0 5v2m0 2v2m1 23v3m0 1v3m0 3v3m0 1v4m0 43v2m0 9v2m1-118v2m0 2v5m0 8v5m0 3v2m0 89v2m1-120v2m0 19v3m1-15v2m0 6v3m0 1v4m1-20v2m0 1v2m0 8v4m0 1v4m1-26v3m0 1v2m0 8v2m0 2v3m0 96v2m1-120v6m0 3v2m0 2v2m0 2v3m0 2v3m1 82v2m1-106v2m0 1v7m0 1v2m0 1v2m0 4v4m0 2v2m0 67v2m0 22v2m1-131v2m0 24v2m0 77v2m1-101v2m0 7v5m0 2v2m0 1v3m0 1v2m0 1v2m1 27v19m0 18v2m1-67v3m2-5v2m0 1v2m0 62v2m3-98v3m0 3v3m0 1v5m0 1v2m1-14v2m0 1v3m0 4v2m0 1v3m0 92v2m1-77v2m0 28v3m0 3v5m0 1v11m0 1v3m0 18v2m4-89v2m0 33v6m0 2v2m0 1v3m0 2v3m0 3v5m0 2v7m0 1v5m0 1v2m0 3v2m0 1v4m0 3v15m0 2v2m1-129v2m0 2v5m0 1v3m0 1v2m0 4v6m0 78v2m0 13v2m1-17v2m1-84v2m0 71v2m1-101v2m0 23v3m0 4v2m0 74v2m0 8v2m1-12v2m2-29v3m0 13v2m0 9v2m1-2v2m0 19v2m2-134v2m0 4v5m0 4v5m0 1v4m0 1v2m0 1v2m0 4v2m1-30v2m2-12v2m0 7v2m0 1v2m0 1v3m0 2v3m0 112v2m1-132v2m0 26v3m0 78v2m1-107v3m0 6v2m0 4v2m0 7v3m0 2v2m0 84v2m0 9v2m1-127v3m0 9v3m0 7v2m1 16v2m0 1v3m0 2v3m0 3v3m0 2v2m0 1v5m0 1v2m0 1v10m0 1v6m0 2v3m0 3v3m0 1v3m0 1v2m0 1v2m0 3v13m1-130v2m0 7v9m0 4v3m0 4v2m1-24v2m0 10v2m1-22v2m0 3v2m0 5v2m0 15v4m1 66v2m1-95v5m0 6v3m0 4v2m0 84v2m1-104v2m0 5v2m0 7v2m1-25v2m0 14v2m0 3v3m0 85v2m1-108v2m0 10v2m0 4v3m0 3v2m0 80v2m3-111v2m0 3v2m0 5v2m0 3v3m0 1v4m0 2v2m0 2v4m1-32v3m0 2v6m0 7v4m0 84v2m1-74v2m1 35v2m0 3v9m0 9v2m0 2v7m1-108v2m0 1v3m0 2v2m0 1v2m0 15v2m0 79v2m1-111v3m0 12v2m1-12v2m0 8v3m0 3v2m2-15v3m0 10v2m1 6v3m1-31v2m0 5v3m0 1v3m0 2v6m0 4v2m0 4v2m0 66v2m0 5v2m1-113v2m0 3v2m0 8v3m1-11v5m0 1v5m0 1v2m0 7v2m0 74v2m1 6v2m1-71v3m0 66v2m1-110v3m0 2v3m0 3v2m0 9v2m0 4v2m1-31v2m0 27v2m0 89v2m1-120v2m0 5v2m0 8v5m0 1v6m0 68v3m0 7v2m1-111v2m0 5v4m0 1v3m0 4v3m0 7v4m0 68v2m0 18v2m1-123v5m0 10v2m0 2v2m0 3v3m0 2v2m1-31v3m0 2v9m0 3v2m0 5v2m0 2v4m0 77v2m1-106v2m0 6v2m0 11v3m1-21v5m0 12v2m0 82v2m1-3v2m1-114v2m0 5v2m0 6v3m0 1v2m0 8v2m0 4v4m0 65v2m0 6v2m1-106v4m0 14v2m0 1v2m1-17v2m0 1v3m0 2v3m0 2v4m1 31v3m0 1v2m0 3v2m0 2v13m1-83v5m0 1v3m0 7v2m0 8v2m1-31v4m0 7v4m0 2v2m0 2v3m0 1v6m0 2v2m0 61v2m1-99v2m0 3v5m0 1v2m0 4v3m0 4v2m0 4v4m1 30v3m0 1v3m0 1v3m0 1v4m0 4v2m0 1v3m0 22v2m2-109v4m0 1v4m0 4v2m2-16v2m0 3v3m0 1v2m0 1v4m0 6v5m0 1v4m1 97v2m1-137v2m0 13v3m0 1v3m0 92v2m1-103v3m0 2v6m0 6v2m1-4v2m0 52v10m0 2v2m0 3v3m0 1v10m1-100v2m0 1v2m0 106v2m1-107v2m0 3v2m0 2v4m0 4v2m1-31v2m0 6v2m0 6v5m0 2v2m0 2v6m1 65v2m1 7v2m1-107v2m0 1v2m0 4v3m0 1v2m0 76v2m0 8v2m0 12v4m1-29v3m0 3v2m0 18v2m1-122v3m0 1v5m0 1v2m0 1v2m0 8v4m0 2v4m0 61v2m0 13v2m1-85v2m0 46v2m0 4v6m0 1v5m0 9v7m0 11v2m2-117v2m0 5v4m0 4v2m0 88v2m0 20v2m1-100v2m0 75v3m0 3v5m0 1v2m0 1v7m1-123v2m0 2v2m0 10v2m0 8v2m0 74v3m0 15v5m1-113v2m0 6v2m1 70v9m0 8v12m1-121v2m0 8v3m0 9v2m0 78v3m0 15v5m1-136v3m0 8v4m0 8v3m0 4v3m1-29v3m0 4v10m0 8v3m0 3v2m1 5v4m1-19v2m1-10v2m0 6v2m0 83v4m0 8v6m0 1v5m1-134v2m0 3v2m0 10v2m0 1v5m0 6v2m2-35v3m0 3v3m0 6v6m0 1v5m0 85v4m0 8v6m0 1v5m1-131v2m0 8v2m0 1v2m1 4v5m0 6v2m1-26v3m0 4v3m1 90v5m0 3v11m0 1v5m1-129v2m0 1v4m0 13v8m1 60v2m0 21v2m1-87v2m0 76v5m0 3v5m0 1v5m0 1v5m1-125v2m1 6v4m0 6v2m1-26v3m0 2v7m0 16v2m0 92v2m1-132v3m0 11v4m0 2v7m0 8v3m2-31v2m0 19v2m0 74v3m1-74v4m0 61v2m0 21v2m1-108v2m0 3v2m0 2v6m0 2v2m1 4v3m0 73v3m1-106v5m0 6v2m0 2v2m0 6v4m0 76v2m1-99v3m0 2v2m0 2v4m0 84v3m1-115v2m0 3v2m0 12v3m0 3v2m0 85v2m1-107v3m0 13v2m0 3v2m0 82v2m1-84v3m1 71v9m0 1v3m0 2v18m1-125v3m0 1v2m0 4v4m0 1v3m1 14v2m1-41v3m0 11v4m0 80v2m1-92v4m0 3v2m0 1v3m0 4v2m0 1v2m0 67v3m0 18v2m1-86v3m2-16v2m0 25v7m0 1v2m0 1v9m0 1v6m0 1v4m0 3v2m0 1v5m0 1v2m0 7v2m0 1v8m0 2v7m1-3v2m1-18v2m1-106v2m0 2v2m0 6v2m0 5v2m0 8v2m0 69v2m0 28v2m1-128v2m0 9v3m0 75v2m0 9v2m1-75v2m0 71v2m1-67v2m0 68v3m1-78v2m2-40v3m0 8v2m0 2v3m0 5v2m0 2v3m0 5v2m0 67v2m0 7v2m1-106v2m0 4v3m0 5v2m0 88v2m1-114v2m0 9v2m0 5v2m0 3v5m2-28v2m0 2v4m0 5v3m0 2v3m0 1v2m0 2v2m0 3v2m1 79v2m1 19v2m1-103v3m0 77v2m1-108v5m1-8v3m0 9v2m0 5v2m0 6v4m0 98v3m2-126v2m0 2v2m0 98v2m0 16v2m1-102v2m0 3v2m1 74v2m0 19v2m1-135v2m0 3v2m0 4v4m0 4v6m0 78v2m0 8v2m1-103v5m0 115v2m1-21v2m0 18v2m1-107v4m0 70v3m0 7v2m0 17v3m1-32v2m0 8v2m1-110v2m0 5v2m0 7v4m0 5v5m1-34v4m0 3v3m0 1v4m0 1v4m0 3v2m0 3v2m1-27v2m0 1v2m0 1v2m0 2v6m0 4v6m0 1v3m0 71v2m1-103v2m0 1v3m0 2v3m0 10v8m0 4v2m0 66v2m0 6v3m1-115v2m0 6v2m0 3v3m0 6v2m0 10v2m2-37v3m0 2v2m0 6v3m0 1v2m0 3v3m0 7v3m1-1v2m1 1v3m1 17v2m0 39v2m0 13v2m1-103v2m0 5v2m1-22v2m0 4v6m0 1v2m0 4v5m0 6v2m1-14v4m2 91v3m2-93v2m0 1v2m0 86v2m0 19v2m1-130v2m0 7v3m0 1v2m0 1v3m0 1v3m0 2v2m0 3v2m0 60v2m0 12v2m1-112v3m0 11v6m0 2v3m0 5v2m0 75v2m1-107v2m0 12v5m0 5v3m0 3v5m0 74v2m2-108v4m0 1v6m0 1v2m1 15v3m1-31v2m0 1v3m0 3v3m0 1v2m0 8v3m1-19v4m0 4v4m0 4v2m1-14v6m0 72v2m1-96v2m0 1v3m0 1v3m0 3v4m0 3v3m0 5v9m0 2v5m0 1v3m0 1v3m0 1v2m0 2v3m0 1v2m2-36v2m0 77v2m0 2v2m1-81v2m0 1v2m0 65v2m1 3v2m1-94v2m0 4v6m0 95v2m1-125v2m0 14v2m0 2v4m0 4v4m0 76v2m1-110v2m0 4v2m0 1v5m0 1v3m0 3v7m0 1v3m0 64v2m1-88v3m0 3v2m0 4v2m0 87v3m0 20v2m1-130v6m0 8v2m0 11v4m0 75v2m1-98v2m0 109v2m1 5v2m1-131v3m0 4v2m0 24v2m1-24v2m0 17v2m2-33v2m0 6v2m0 4v2m0 12v2m1-4v2m0 3v2m1-27v5m0 2v3m1 92v2m0 20v2m1-130v2m0 1v2m0 3v3m0 9v2m0 2v2m1-26v4m0 3v3m0 1v5m0 4v2m0 2v2m0 80v2m1-72v4m0 3v4m0 1v2m0 3v3m0 3v3m0 7v4m0 1v3m0 1v5m0 2v2m0 4v6m0 2v2m0 7v2m1-73v3m0 66v2m1-116v2m0 6v2m0 14v2m1-13v3m0 6v2m0 4v2m0 2v3m0 75v2m0 2v2m1-115v5m0 3v3m0 2v4m0 1v3m0 2v2m0 2v2m0 80v2m1-108v5m0 7v4m0 2v2m0 4v2m2-25v3m0 5v2m0 1v4m0 1v2m0 9v3m0 79v2m2-109v4m0 11v3m0 7v2m0 4v2m2-30v3m0 2v3m0 8v2m0 4v3m0 1v2m0 72v2m0 2v2m1-114v2m0 2v2m0 2v2m0 2v2m0 10v2m0 6v2m1-1v6m0 10v8m0 1v9m0 4v3m0 3v2m0 2v4m0 1v5m0 22v4m0 9v5m1-96v3m1-34v6m0 4v4m0 4v4m0 4v2m1-24v2m0 1v5m0 2v2m0 8v2m0 82v5m0 9v5m1-102v2m0 1v2m0 2v3m0 71v3m1-109v2m0 9v4m0 3v2m0 1v3m0 1v2m0 81v2m2-114v2m0 6v4m0 4v3m0 1v3m0 73v2m0 22v5m0 1v5m1-30v2m1-94v3m0 3v3m0 1v3m0 8v4m1 86v5m0 1v5m2-115v2m0 15v2m1-37v2m0 7v3m0 5v3m0 1v2m0 3v2m1-17v3m0 1v3m0 1v3m0 4v3m0 1v2m0 4v3m0 66v2m3-92v4m0 1v10m0 2v2m1-26v3m0 2v2m0 17v2m0 80v2m1-94v2m0 3v7m0 1v2m1 11v2m0 55v2m1-93v3m0 1v7m1-13v3m0 3v5m0 1v4m0 4v2m0 6v2m1-6v4m0 2v2m0 4v2m0 5v6m0 1v3m0 1v4m0 1v4m0 38v3m0 13v2m2-17v2m1-76v2m1 72v5m0 3v5m0 7v5m1-121v2m0 2v2m0 5v2m0 1v2m0 95v2m1-121v2m0 20v2m0 4v2m0 81v2m1-80v2m0 71v3m0 3v5m0 7v5m1-139v2m0 8v2m0 4v6m0 4v2m0 5v2m0 100v2m1-130v5m0 1v2m0 2v2m0 9v2m0 86v3m0 3v5m1-120v2m0 5v2m0 1v2m0 2v3m0 2v4m0 91v2m1-91v2m0 101v2m1-131v3m0 4v4m0 2v2m0 9v2m0 84v3m0 3v5m1-103v2m0 79v2m0 7v2m2-95v2m0 91v2m1-103v5m0 4v2m0 7v3m0 2v2m0 71v2m0 3v2m1-110v2m0 4v4m0 1v2m0 7v2m0 85v2m1-3v3m2-95v5m0 1v2m0 2v2m0 81v3m1-110v2m0 2v4m0 4v2m0 18v2m0 74v2m2-97v2m0 2v2m0 1v2m0 3v3m0 72v2m0 6v2m1-18v2m1-80v4m0 2v4m1-25v2m0 1v4m0 1v3m0 4v5m0 5v2m1-16v4m0 2v4m0 2v5m0 71v3m0 2v2m1-99v3m0 17v2m0 5v2m1 73v2m0 17v2m1-119v2m0 2v3m0 1v7m1-25v3m0 19v3m0 5v2m0 76v2m1-84v2m0 87v2m0 10v2m1-128v3m0 4v3m0 88v2m1 18v2m1-122v2m0 11v2m0 5v2m0 5v4m0 78v2m1-111v3m0 6v2m0 10v2m1 86v2m1-108v5m0 1v2m0 1v2m0 1v4m0 2v2m0 2v4m0 80v2m1-116v6m0 10v2m0 4v3m0 89v2m2-88v3m0 3v2m0 2v2m1-34v2m0 20v2m0 84v5m0 3v5m0 1v5m0 1v5m1-133v3m0 7v2m0 3v3m0 4v4m1-23v3m0 3v5m0 6v3m0 2v3m0 6v2m0 68v2m1-110v2m0 8v5m0 1v8m0 4v2m0 84v3m0 3v5m0 1v5m0 1v5m1-130v4m0 5v2m0 8v2m0 2v2m1-34v2m0 15v3m1-14v4m0 3v2m0 6v3m1-17v4m0 6v6m0 9v2m0 80v2m1-99v3m0 14v3m0 62v2m1-92v2m0 4v2m0 9v2m0 6v4m0 96v2m1-131v4m0 6v4m0 3v2m0 11v3m0 61v2m0 33v3m1-131v2m0 4v2m0 3v3m0 6v2m0 2v7m1-25v2m0 10v2m0 4v4m0 88v11m0 1v5m1-139v2m0 6v8m0 5v3m0 102v3m1-125v2m0 4v3m0 2v3m0 2v3m0 7v4m0 82v3m1-111v4m0 3v2m0 3v4m0 4v4m0 81v2m0 7v5m0 1v5m0 1v5m2-121v2m0 94v2m1-115v2m0 1v2m0 2v2m0 20v3m0 5v2m1-32v2m0 7v2m0 1v2m0 91v4m1-107v2m0 2v4m0 2v2m0 6v2m0 85v2m1-109v4m0 1v2m0 13v2m0 1v3m0 82v2m1-102v2m0 1v2m0 3v2m0 2v2m1-13v3m0 10v2m0 3v3m1 76v5m0 15v5m1-135v2m0 7v3m0 14v3m2 11v2m0 68v5m0 15v5m2-25v2m1-53v5m0 1v4m1-66v2m0 14v2m0 89v2m1-70v2m1-35v2m0 5v2m0 2v9m0 1v2m2-3v3m0 4v2m1-31v3m0 3v4m0 4v3m0 87v4m0 9v5m0 1v5m1-133v4m0 1v6m0 9v4m1-30v2m0 3v3m0 2v2m0 1v2m0 10v2m0 3v2m0 92v2m1-92v2m0 78v5m0 9v5m0 1v5m1-25v2m0 8v2m2-2v2m1-120v3m0 2v2m0 1v7m0 1v2m0 9v3m1 78v2m1-81v3m0 77v2m1-104v5m0 7v3m0 96v2m1-113v7m0 4v2m1-19v4m0 7v2m0 1v3m0 3v2m0 87v3m0 3v5m0 1v5m0 1v5m1-127v7m0 1v4m0 8v2m0 4v2m1-1v2m0 91v3m1-119v6m0 2v4m0 7v2m0 77v5m0 3v5m0 1v5m0 1v5m2-125v3m0 2v2m2-8v2m0 7v13m0 79v2m1-106v2m0 1v3m0 10v2m0 2v4m1-27v6m0 4v2m0 5v2m0 88v2m1 11v4m0 1v7m1-128v3m0 4v2m0 4v2m0 6v2m0 80v2m1 0v3m0 9v5m0 1v5m1-139v2m0 8v2m0 15v2m1-26v2m0 19v2m0 79v2m1-105v2m0 6v2m0 8v4m0 4v2m0 2v2m0 82v3m0 9v5m0 1v5m1-132v2m0 1v2m0 4v2m0 18v2m1-30v2m0 3v5m0 2v3m0 1v2m0 2v2m0 3v7m1-32v2m0 3v5m0 4v2m0 1v2m0 7v3m1-21v4m0 6v2m0 86v2m1-96v2m0 77v2m1-88v3m0 6v2m0 4v2m0 84v2m1-103v2m1 32v2m0 65v2m1-114v2m0 6v3m0 6v5m0 7v2m1-33v4m0 1v2m0 6v10m0 3v12m0 2v4m0 1v3m0 1v9m0 3v3m0 1v5m0 1v3m0 3v2m0 1v18m0 1v5m0 6v4m0 1v4m0 2v7m0 4v7m1-132v2m0 2v3m0 1v2m0 6v2m0 3v2m0 2v2m1 5v3m0 64v2m0 22v2m2-78v5m0 3v15m0 37v2m1-94v3m0 1v2m1-12v2m0 1v5m0 1v6m0 2v2m0 95v2m1-127v2m0 1v3m0 11v2m0 4v2m0 2v4m0 94v3m1-126v5m0 4v2m0 5v2m0 5v2m1-19v3m0 14v2m0 82v2m1-95v2m0 5v2m0 8v2m1-32v4m0 5v5m0 4v4m0 4v2m1 85v18m1-138v3m0 4v2m0 2v5m0 3v2m0 2v2m0 5v3m1-27v2m0 4v5m0 1v3m0 2v2m1-14v2m0 1v2m0 3v2m0 1v4m1-17v6m0 2v2m0 4v2m2 9v3m1-38v4m0 3v4m0 1v2m0 5v3m0 1v5m0 4v2m1-23v3m0 1v3m0 14v2m0 1v4m1-27v4m0 2v2m0 11v2m0 1v4m0 76v2m1-2v2m1-98v2m0 2v2m0 8v2m1-32v2m0 14v5m0 112v2"/><path stroke="#000eff" d="M79 264v2m0 14v2m1-70v23m0 1v20m0 1v15m0 3v2m1-108v2m0 22v2m0 7v6m0 2v6m0 4v2m0 1v2m0 55v2m1-112v2m2 30v3m1 59v2m0 4v2m1-106v2m0 6v2m0 88v2m0 14v2m1-115v2m0 3v2m0 5v3m0 7v7m0 3v5m0 1v3m1 1v2m0 53v2m0 4v2m1-8v2m1-100v2m1 102v2m0 29v3m1-34v2m0 29v3m1-100v2m0 64v2m1-56v4m0 1v7m0 2v7m0 1v3m0 1v2m0 3v4m0 1v4m0 5v5m0 2v2m0 1v3m1-76v4m1 62v2m1-100v2m0 102v2m1-106v4m1 2v2m0 121v3m1-132v2m0 2v4m0 2v2m0 86v2m0 4v2m0 8v2m0 13v3m2-101v2m1-33v2m0 96v2m0 4v2m0 8v2m1-18v2m0 4v2m1-74v2m1 64v2m0 4v2m0 29v3m1-138v2m0 102v2m0 29v3m1-34v2m1-8v2m0 4v2m1-2v2m1-2v2m0 8v2m1-12v2m1-8v2m0 4v2m1-80v5m0 73v2m0 29v3m1-34v2m0 29v3m1-34v2m1-8v2m0 4v2m1-102v2m0 9v2m1 81v2m0 4v2m1-106v3m0 101v2m1-96v2m0 92v2m1-102v2m0 2v2m0 94v2m1-2v2m1-104v3m1 35v2m0 62v2m1-8v2m0 4v2m1-79v8m0 69v2m1-73v11m0 54v2m0 4v2m2-106v4m1-4v2m1-2v3m0 101v2m0 8v2m1-18v2m0 4v2m0 8v2m1-18v2m0 4v2m1-106v2m0 96v2m0 4v2m2-68v7m2 19v4m0 7v3m0 7v3m0 5v3m0 3v9m0 3v5m0 4v4m0 2v2m0 2v2m2-90v6m0 1v15m1-64v2m1 0v6m0 20v3m0 73v2m1-104v2m1 94v2m1-72v3m0 67v2m2-70v2m0 66v2m0 4v2m2-2v2m1-65v7m0 1v15m0 34v2m0 4v2m1-8v2m0 4v2m1-104v2m0 4v2m1-8v2m0 3v3m0 94v2m1-106v4m0 2v2m1-8v2m0 96v2m0 4v2m1-106v3m1 24v10m0 67v2m1-71v2m0 61v2m1-37v4m0 5v4m0 1v2m0 1v3m0 1v4m0 1v3m0 2v12m0 1v2m0 1v4m0 1v2m0 3v8m0 4v2m1-30v2m1 8v2m1-116v2m0 96v2m0 4v2m1-104v2m1-4v2m0 96v2m1-64v2m1-38v4m1 25v10m1-3v2m0 66v2m1-2v2m1-66v3m0 61v2m0 8v2m1-12v2m1-106v2m0 5v3m0 3v3m0 1v2m0 2v27m0 1v12m1-61v2m0 96v2m1-66v4m0 1v7m0 52v2m0 4v2m0 8v2m2-78v2m0 58v2m1-2v2m0 4v2m1-2v2m2-8v2m1-98v2m0 100v2m1-8v2m1 4v2m3-8v2m0 4v2m1-73v2m0 63v2m0 4v2m1-75v4m0 1v6m0 1v2m0 4v4m0 51v2m1-106v2m1 32v3m0 30v5m0 1v7m0 1v6m0 1v3m0 3v3m0 2v12m0 1v2m0 1v4m0 1v3m0 1v3m0 1v3m0 1v3m0 1v3m2-103v4m0 64v2m1-99v2m0 1v4m0 2v2m0 3v9m0 1v3m0 2v2m0 3v3m0 54v2m1-49v4m0 1v4m0 1v5m0 1v5m0 5v3m0 1v2m0 1v7m0 7v2m0 1v6m1-9v2m0 4v2m1-100v2m1-2v2m0 90v2m0 4v2m0 8v2m1-83v12m1 59v2m1-106v2m0 2v4m0 90v2m1-99v2m1 3v2m0 90v2m1-2v2m1-100v2m0 102v2m1-106v4m0 94v2m1 4v2m2-106v2m0 102v2m1-106v2m0 102v2m1-101v6m0 7v3m0 13v4m0 1v12m0 1v5m0 3v4m0 1v6m0 1v3m0 1v2m0 3v3m0 1v15m0 3v3m1-2v2m2-106v2m1 96v2m1-68v7m0 65v2m1-8v2m1-94v2m1-6v2m1 94v2m0 4v2m1-28v2m0 18v2m2-70v11m0 73v2m1-79v2m0 75v2m1-116v5m1-5v4m0 4v3m0 87v2m2-71v11m0 58v2m1-99v2m0 101v2m1-106v2m0 6v2m0 94v2m1-76v3m0 1v14m0 1v12m1 37v2m1 4v2m1-71v2m0 67v2m3-8v2m1-75v4m0 69v2m1-53v2m1 49v2m0 4v2m1-2v2m1-106v4m0 100v2m0 8v2m1-86v2m0 27v6m0 1v2m0 1v12m0 1v2m0 1v11m0 1v12m0 1v9m0 1v3m0 1v3m1-29v2m1 4v2m1-74v2m0 64v2m1-100v2m1 39v4m1-10v4m0 65v2m1-8v2m0 4v2m1 8v2m1-116v2m0 96v2m0 4v2m1-104v2m0 3v2m0 95v2m1-106v2m0 3v3m0 96v2m0 8v2m1-114v4m0 108v4m1-14v2m0 9v3m1-82v3m0 65v2m3-70v4m0 58v2m0 4v2m2-8v2m0 4v2m1-101v2m0 97v2m1-68v2m0 74v2m1-116v4m0 100v2m1-106v2m0 96v2m0 4v2m0 29v3m1-132v2m0 96v2m0 29v3m1-34v2m1-102v2m1-2v2m1-5v3m2 94v2m0 4v2m1-102v2m0 108v2m1-73v5m0 66v2m1-64v6m1 40v2m0 4v2m1-104v2m0 4v2m0 88v2m0 4v2m1-106v3m0 101v2m1-8v2m1-57v2m0 53v2m1-2v2m0 4v2m1-8v2m0 4v2m1 8v2m1-12v2m2-61v2m0 57v2m1-2v2m1-2v2m1-104v2m2-4v3m0 4v3m0 4v4m0 1v6m0 8v2m0 1v3m0 1v2m0 1v2m0 1v4m0 1v4m0 1v6m0 1v8m0 3v3m0 1v3m0 23v2m2-8v2m0 4v2m0 8v2m1-12v2m1-9v3m0 4v2m0 8v2m1-116v2m1 112v2m1-76v5m0 1v4m0 48v2m0 4v2m1-106v3m0 95v2m1 4v2m1-106v2m0 102v2m1-102v2m0 92v2m0 4v2m1-104v2m0 100v2m1-104v2m0 1v2m1 29v5m0 57v2m0 4v2m3-106v3m1-2v4m0 1v6m0 5v2m0 1v4m0 1v2m0 1v33m1-33v5m0 65v2m1-62v3m0 57v2m1 4v2m0 8v2m1-70v2m1-8v2m0 56v2m1-2v2m0 4v2m1-8v2m1-71v10m0 2v5m0 6v2m0 4v10m0 30v2m0 4v2m1-64v2m0 54v2m1-2v2m1-56v4m0 66v2m1-106v2m0 1v3m0 1v5m0 7v5m0 1v4m0 1v4m0 1v13m0 2v2m1-56v2m1 36v2m0 52v2m1-2v2m0 14v2m1-12v2m2-72v2m0 68v2m1-48v29m1 11v2m0 4v2m1-61v2m0 51v2m1-2v2m0 4v2m1-8v2m0 4v2m1-61v2m0 57v2m1-104v2m1 94v2m1-2v2m1-2v2m0 4v2m1-106v2m0 2v2m0 1v5m0 6v2m0 1v7m0 2v7m0 2v5m0 1v5m0 48v2m0 4v2m1-106v2m0 102v2m1-106v2m1-2v2m0 96v2m0 4v2m1-66v2m0 56v2m0 14v2m1-12v2m1-102v2m0 92v2m0 4v2m2-8v2m1-54v2m0 50v2m4-65v7m0 62v2m1-106v5m0 2v2m0 1v2m0 4v2m0 8v4m0 2v4m0 1v5m0 1v2m0 1v2m0 5v6m0 8v5m0 1v5m0 20v2m0 4v2m2-106v2m0 102v2m1-8v2m2 4v2m1-81v2m0 2v2m0 1v2m1-33v4m0 99v2m1-2v2m1-8v2m1-60v3m1-10v12m1 53v2m1-98v2m0 94v2m1-2v2m1-100v2m0 102v2m1-106v2m0 96v2m0 4v2m2-106v4m1-1v3m1 37v4m0 57v2m1-96v2m0 86v2m1-2v2m0 4v2m0 8v2m1-18v2m1-100v2m0 4v3m0 8v3m0 3v4m0 2v4m0 1v3m0 1v2m0 3v4m0 2v2m0 3v5m0 39v2m1 4v2m1-106v2m0 8v2m0 92v2m1-106v2m0 102v2m1-72v5m0 5v5m0 1v6m0 1v2m0 1v3m0 41v2m1-64v3m0 53v2m3-100v2m1 60v9m0 1v2m0 1v2m0 1v2m0 1v4m0 2v2m0 1v5m0 2v2m0 3v7m0 1v2m0 1v3m0 4v6m0 2v7m1-132v3m1 98v2m1-105v2m0 4v4m0 6v3m0 10v2m0 1v2m0 1v2m0 3v2m0 1v2m0 1v7m0 4v7m0 2v6m0 2v2m0 1v4m0 32v2m1-116v2m1-1v2m0 101v2m1-104v2m1 36v2m0 56v2m1-53v2m0 49v2m0 4v2m1-8v2m0 4v2m1-47v7m1 38v2m1-106v4m0 1v2m0 2v3m0 3v6m0 1v2m0 2v2m0 5v12m0 1v12m0 4v4m0 1v4m0 1v7m0 25v2m1-2v2m1-101v3m0 96v2m1-79v3m0 1v6m0 3v4m0 3v2m0 5v4m0 2v2m0 1v5m0 7v2m0 2v2m0 1v3m0 1v4m0 1v2m0 2v7m0 1v12m1-11v2m1-8v2m0 4v2m0 29v3m1-78v5m0 4v6m0 1v7m0 1v3m0 1v6m0 1v9m0 31v3m1-132v2m1-2v2m0 96v2m1-106v4m0 6v2m1 21v12m0 53v2m1-78v8m1-29v3m0 2v4m0 18v2m0 74v2m1-99v2m0 95v2m0 29v3m1-61v38m0 20v3m2-34v2m1-8v2m0 4v2m1-8v2m1 4v2m1 9v3m1-71v3m0 65v3m1-84v2m0 68v2m1-104v2m0 94v2m1-100v4m0 3v4m1-11v2m0 96v2m0 4v2m1-101v4m0 89v2m1-57v5m0 56v2m1-8v2m2-100v4m0 100v2m1-78v10m0 60v2m0 4v2m2-103v4m1 91v2m0 4v2m1-103v2m0 93v2m1-76v2m0 1v5m0 82v2m1-96v8m0 5v8m0 3v4m0 1v57m2-67v3m0 56v2m0 4v2m0 8v2m3-81v6m0 63v2m1-46v2m0 36v2m1-97v2m0 4v2m0 31v7m0 55v2m1-62v2m0 52v2m1-54v2m0 50v2m3-74v5m0 1v3m0 69v2m1-65v3m0 54v2m0 4v2m1-71v4m1 2v4m0 53v2m0 4v2m1-100v2m2-1v3m1 36v3m0 49v2m1 4v2m1-72v3m0 67v2m2-75v3m0 70v2m1-2v2m1-2v2m1-28v2m1 24v2m1-76v2m0 72v2m1-70v2m0 60v2m0 4v2m1-101v2m0 91v2m1-100v4m0 5v2m0 12v2m1 14v3m1-20v8m1 1v2m0 65v2m1-98v2m0 6v2m0 86v2m0 4v2m1-8v2m1-100v2m0 102v2m0 8v2m1-18v2m0 4v2m1-2v2m1-69v2m1 59v2m1-70v2m0 66v2m0 4v2m1-78v4m0 1v5m1 1v9m0 1v9m0 46v2m1-8v2m1-98v2m0 94v2m0 4v2m1-104v2m0 2v2m1 39v2m1-9v2m0 62v2m1-60v2m0 50v2m0 4v2m1-2v2m1-104v2m0 5v3m1-12v3m0 95v2m0 4v2m2-8v2m1-2v2m1-73v10m4-37v3m0 101v2m2-83v2m0 2v4m0 73v2m1-8v2m1 4v2m1-2v2m1-2v2m2-106v2m0 3v2m1 97v2m1-8v2m1-54v2m0 56v2m1-8v2m0 4v2m2-47v7m0 48v2m1-104v2m0 90v2m0 8v2m1-89v5m0 72v2m1-104v2m0 13v2m0 85v2m1-69v2m0 59v2m0 4v2m1-8v2m1-100v2m0 96v2m1-95v4m0 11v4m0 5v8m0 1v2m0 2v2m0 70v2m1-82v11m1 53v2m0 4v2m1-106v2m1 96v2m1 4v2m1-65v2m0 61v2m1-104v2m0 94v2m0 4v2m1-63v4m1 51v2m0 4v2m1-6v19m0 1v19m1-41v2m1 4v2m1-95v3m0 4v2m0 1v2m0 6v2m0 67v2m0 4v2m1-77v8m1 61v2m0 4v2m1-106v2m0 96v2m0 4v2m1-80v4m0 68v2m1-100v2m1 43v4m1-41v2m1 18v3m0 98v3m1-132v2m0 4v2m0 96v2m0 23v3m1-90v2m0 54v2m0 14v2m1-83v4m0 61v2m1 14v2m1-18v2m0 4v2m2-64v2m0 60v2m1-69v2m1-38v3m0 100v2m2-8v2m1-60v8m1-45v5m0 90v2m0 4v2m1-106v3m0 2v3m0 90v2m1-69v3m1 3v2m0 75v2m2-83v7m1 3v4m0 57v2m1-98v2m0 88v2m0 4v2m0 17v3m0 9v3m1-15v3m0 9v3m2-136v2m1-3v3m0 11v2m0 97v2m1-116v2m0 96v2m0 4v2m0 9v3m1-94v8m0 66v2m0 15v3m1-14v2m0 8v2m2-43v2m0 29v2m1-106v2m0 102v2m1-104v2m0 94v2m1-2v2m1-60v2m0 56v2m0 4v2m2-106v3m0 5v3m1-9v2m0 100v2m1-8v2m0 4v2m1-106v2m1 31v3m1-31v4m0 89v2m0 4v2m1-105v2m0 15v2m2-19v4m0 93v2m0 4v2m1-2v2m2-2v2m1-78v3m0 67v2m2-66v2m0 68v2m1-8v2m1 4v2m1-63v4m0 51v2m1 4v2m1-2v2m1-64v2m2 60v2m1 9v3m0 17v3m1-40v2m0 4v2m0 9v3m0 17v3m1-128v2m1 86v2m0 4v2m1-8v2m0 4v2m1-8v2m1-2v2m0 4v2m1-106v2m0 102v2m2-105v3m0 7v2m0 101v2m1-116v3m0 5v2m0 13v2m0 73v2m0 14v2m1-114v2m1 94v2m0 4v2m0 29v3m1-138v3m0 95v2m0 4v2m0 29v3m1-136v2m0 2v2m0 90v2m0 4v2m1-60v2m1-40v2m0 88v2m1-2v2m1-100v2m1-2v4m0 94v2m0 4v2m1-106v2m1 0v2m0 100v2m1-2v2m1-38v2m0 28v2m0 4v2m1-98v2m1 24v2m0 68v2m1-69v7m0 54v2m0 4v2m1-67v2m0 57v2m0 4v2m1-75v2m1-1v3m0 1v4m0 1v2m0 9v5m0 1v2m1-58v2m0 100v2m1-64v4m1-44v2m0 4v4m0 92v2m1-71v2m0 61v2m1-75v8m0 65v2m0 4v2m2-2v2m1-2v2m1-76v2m0 66v2m1-36v2m0 32v2m1-56v2m1-1v2m0 57v2m1-106v3m0 24v2m2-3v9m0 63v2m1 4v2m1-104v2m1 94v2m1 35v3m1-105v2m0 1v2m0 60v2m0 35v3m1-34v2m2-104v7m1 64v2m0 23v2m0 4v2m0 8v2m1-12v2m1-106v2m0 102v2m1-106v2m0 2v2m0 98v2m1-47v6m0 1v9m0 2v3m0 7v4m0 3v3m0 1v2m0 3v8m0 1v7m0 1v2m1-116v2m0 96v2m1-59v2m1 49v2m0 4v2m1-106v3m0 6v2m0 87v2m1-2v2m1-100v2m1 0v3m0 93v2m0 4v2m1-106v2m0 96v2m1-100v3m2 95v2m1-2v2m1-60v7m1 51v2m1-90v2m0 92v2m1-106v2m0 96v2m0 4v2m1-77v10m1 7v2m0 56v2m1-106v2m0 6v4m0 1v4m0 1v10m0 2v14m0 1v4m0 1v2m0 46v2m2-98v2m0 4v2m0 88v2m0 4v2m1-2v2m1-106v4m1-1v4m0 91v2m0 4v2m1-2v2m1-8v2m0 4v2m1-65v77m1-20v2m0 4v2m1-8v2m1-97v2m0 99v2m3-74v3m1 63v2m1-97v2m0 1v2m0 90v2m1-100v3m0 101v2m1-63v2m0 59v2m1-8v2m1-2v2m0 4v2"/><path stroke="#0047ff" d="M79 205v2m1-35v5m0 1v2m0 1v5m0 1v13m0 1v5m0 1v4m1-37v3m0 1v2m2 5v2m1 10v5m1 5v3m2-23v2m1 17v3m5-7v2m1-38v4m0 1v12m0 2v14m0 1v4m0 1v5m0 1v5m1-24v6m2-21v2m4-4v2m1 16v4m2 11v3m1-15v2m2-14v2m0 5v2m7-8v2m0 1v4m5 7v2m4-22v2m0 104v2m1-121v2m1 34v4m2-29v3m0 7v3m0 1v2m1-14v3m0 1v5m0 1v10m1-24v2m4-5v2m3 22v3m1-6v4m0 1v6m2-25v5m0 9v5m0 3v4m0 3v9m0 4v5m1-17v4m1-9v4m4-42v4m1 19v5m2 0v2m3 3v8m1-14v2m2-24v2m4 4v16m1 4v4m1-35v2m0 6v4m0 1v8m0 2v6m0 2v3m0 3v5m0 4v15m1-32v3m4-19v2m1 16v5m1-15v2m1-11v8m0 1v8m1 5v2m2-6v4m0 1v3m4-24v4m0 10v6m2 2v2m2-8v2m6 1v5m3-11v6m1-26v4m0 1v2m0 1v5m0 1v5m2 15v2m0 1v5m0 1v2m0 3v8m0 2v2m1-40v2m1 0v7m1-36v3m0 16v2m1-19v2m0 2v2m0 2v4m0 3v17m0 1v4m0 1v3m0 3v5m1-9v5m3-34v3m0 2v2m0 1v12m0 86v2m1-89v2m11-22v2m1 17v2m2 0v2m2-18v6m0 1v2m0 1v2m1-27v2m2 29v2m2 38v5m2-65v4m0 1v12m1 5v2m3-6v3m1-22v17m3-15v4m0 1v11m3 3v2m4-14v4m0 13v2m1 4v3m3-32v2m1 6v4m0 1v2m0 2v3m0 1v7m0 4v2m0 1v5m2-11v3m1-19v4m1-3v2m1 5v5m1-17v8m5-14v2m3 12v4m3-7v7m0 83v2m2-96v4m1-20v2m1 25v2m4-15v2m4-11v2m1 15v3m2 1v8m1-2v11m5-11v2m6-1v3m1-6v3m1 5v2m7 42v6m1-56v2m2-10v7m7-10v6m3 83v2m1-109v3m1 5v8m1 5v5m2 4v4m1-9v3m3-28v12m0 1v4m1 9v4m1-5v2m1 0v5m3-3v3m3-10v2m1-5v3m1-6v30m1-27v3m1 6v5m1-31v2m2 26v3m9-9v4m5 2v4m1 62v31m2-120v2m1 5v9m7-25v2m0 3v5m0 2v3m2-16v2m0 4v2m1-16v2m1 34v3m1-27v5m0 1v14m4-4v2m1-21v2m3-1v2m1 22v8m1-29v2m6-11v2m1 21v6m1 2v6m2 66v11m0 1v19m2-139v11m0 1v4m0 5v12m0 1v15m0 1v12m1-52v2m4 22v2m2 0v4m1 5v2m1-23v2m1 20v13m1-58v2m0 23v2m1-15v2m0 9v2m0 93v2m2-92v3m1-19v3m0 2v2m0 4v3m3 31v2m4-47v20m1-24v13m3 10v45m4-32v2m1-15v2m2 8v5m1-18v5m2-14v2m1-17v3m0 3v2m1-3v2m1 23v8m2-24v4m2-12v17m1-19v2m0 13v2m0 2v2m4-20v3m0 1v5m0 1v4m3 8v2m0 1v2m3-11v9m1 21v4m1-20v2m1 0v2m1 0v2m3-33v2m0 1v2m0 3v4m1 11v5m1-13v7m1 1v5m1-31v2m2-1v2m1 29v4m2-16v4m1 9v4m1-20v4m3 42v5m2-56v5m1 7v2m2-30v2m1 26v5m1-30v13m1 7v2m4-20v2m1 15v2m1 4v3m2-14v2m0 2v2m1-18v7m0 3v7m1 2v9m2-24v2m2 25v5m1-11v4m1 3v3m5-8v2m2-27v14m6-17v4m0 1v6m2 8v4m0 1v4m3-17v2m3 23v3m1-7v3m3 1v13m1-36v3m1-7v8m1-20v2m1 26v2m4-6v3m1-13v2m3-12v3m1 25v2m1-14v2m1 9v5m2-9v4m0 1v61m4-77v4m3-7v5m2 14v6m2-22v5m1-19v2m1 28v3m1-13v4m4 6v3m1-10v5m4-9v12m2-25v2m1 10v4m1 4v2m1-5v2m1-11v10m1 5v5m3-4v3m1-35v3m2-5v2m0 2v2m1 0v13m3 44v5m2-66v3m2 26v4m3-24v2m1 21v3m2-13v4m1-33v3m0 14v3m2-9v2m2 26v4m2-12v2m1-10v3m2 4v2m3 6v5m1-19v2m2 14v2m10-18v2m1-15v3m0 105v2m7-78v3m3-34v2m3 7v2m2 41v4m2-39v3m1-6v11m0 82v2m1-85v3m1-11v2m1-25v3m0 3v3m0 3v3m0 1v3m0 1v2m2 7v8m1-36v2m1 24v3m1-25v15m2-25v3m2 23v2m1 32v4m1-22v2m1-4v5m2-16v3m1-21v15m1-26v2m1 18v2m1-11v2m2 14v2m0 1v3m2 5v3m2 27v5m4-66v3m0 1v4m0 2v7m0 1v2m0 1v8m0 1v3m0 1v3m0 1v2m0 1v4m0 4v2m2-14v3m2-41v2m4 3v2m0 15v2m5-2v12m4-28v17m1 14v3m4-44v2m0 8v2m0 1v3m0 101v2m5-88v8m5 3v3m1-21v6m4 6v5"/><path stroke="#008eff" d="M79 201v4m5-14v6m1 6v4m2-31v2m0 6v3m1 14v5m3 75v3m0 5v3m1-109v2m0 96v3m0 5v3m1-94v4m2-18v8m4 97v3m0 9v3m1-15v3m0 9v3m2-117v6m2 12v3m1-14v2m1-22v2m0 6v2m0 97v3m0 5v3m0 3v3m1-130v2m0 1v2m0 108v3m0 5v3m0 3v3m7-123v10m0 96v3m0 5v3m1-11v3m0 5v3m1-113v2m3 15v3m4-26v2m2 23v4m1-36v2m0 4v2m1-3v4m1-9v3m0 2v6m8 15v4m1-19v3m0 2v3m0 3v5m2-3v2m1 13v4m1-10v5m5-23v8m2 1v2m3-3v10m1-24v2m6-11v11m1 16v4m2-4v2m2-21v2m3 15v6m2-31v12m1 18v4m2-11v3m2-21v2m0 12v2m1 4v2m1-20v3m2 22v4m1-3v2m1-7v2m2-2v2m1-14v2m3 10v5m3-13v6m1-24v2m1 15v2m2-13v2m0 3v2m1 5v9m3 7v6m3-42v4m0 1v3m0 8v2m1 10v4m2-22v4m1 11v2m1-14v2m7-14v2m2 29v2m2 2v2m1-35v8m0 2v2m1-10v2m1-5v2m3 61v8m1-53v2m1-18v9m1 19v3m3-7v3m1-31v12m2 3v2m4 12v4m1-32v2m3 6v4m0 1v3m1 24v3m1-37v2m0 1v2m3 4v7m2 18v3m1-22v6m1-19v3m0 6v2m1 9v7m1-26v2m0 1v4m0 2v2m3-6v2m2-14v2m1 118v3m1-3v3m1-100v6m3-11v8m2-9v5m2 8v3m2 79v3m0 5v3m1-11v3m0 5v3m1-124v5m2 4v5m3 12v3m2-7v11m1-12v18m3-21v3m1 11v2m0 2v3m1-4v4m2-41v2m0 6v3m1-11v2m1 13v3m1 10v2m1 8v4m1-7v4m1-2v3m3-35v2m0 19v2m1 10v2m1-8v2m2 47v10m3-66v8m1-13v4m1-1v2m1-7v2m1-20v2m1-2v2m0 13v2m2 3v10m5-22v12m1 6v7m1-7v3m1 7v6m1-9v4m2-35v2m1 3v5m1 20v6m1-4v3m1-5v7m2-38v3m1 33v4m3-10v3m1-7v4m1-20v17m1 0v3m1 4v5m2-26v2m1 22v4m6-31v2m1 1v4m2 13v5m3-20v3m2 17v6m1 20v46m1-101v2m2 1v16m1-4v2m2 5v2m1 2v2m1 92v12m1-118v3m1-24v4m0 1v5m0 10v2m0 5v2m4 2v6m1-37v4m0 1v8m3-1v2m6 9v12m2-34v2m1 2v2m3 11v2m2-1v9m1 1v7m2 26v46m4-92v2m1 2v5m2-20v2m0 15v2m1-24v2m1 29v5m1 5v4m2-18v19m5-44v2m2 111v3m1-63v3m0 57v3m4-118v13m1-13v4m0 1v4m2 106v3m0 11v3m1-103v3m0 83v3m0 11v3m1-132v3m4 25v4m1 91v3m0 3v3m0 3v3m1-102v6m0 81v3m0 3v3m0 3v3m1-115v6m1-10v2m4 2v12m1-21v2m1-8v2m0 2v2m0 2v2m1-5v2m1-15v4m0 1v6m4 10v2m1-23v2m0 1v7m1 21v2m2-22v2m0 3v2m0 7v2m1 9v3m2-19v6m1 25v5m2-18v4m1-2v4m3-37v3m1 18v8m1-17v9m1 1v7m2-33v2m0 1v2m2 27v7m2-18v6m1 9v4m1-21v5m1 1v2m1-10v2m1 43v8m1-38v2m1-27v4m0 1v5m1 10v4m3-7v7m1-34v4m0 1v4m1 17v3m6 2v3m2-18v7m0 2v2m1-26v2m0 2v3m0 1v2m1 15v4m4 6v6m1-11v5m1 2v5m2-30v3m1-9v3m0 5v2m1-14v2m1 29v4m2-36v2m0 1v3m0 1v2m3 15v4m2 107v2m1-139v6m0 15v2m2 1v5m2-29v2m0 4v2m1-4v2m4 31v5m2-12v2m1-5v19m1-30v3m1-11v11m2 12v4m3-25v3m1 14v4m2-29v3m3 31v3m2-9v8m2-7v3m1-6v2m3-25v3m0 1v2m0 104v3m0 11v3m1-118v2m0 99v3m0 11v3m1-114v2m1-10v2m0 4v2m2 13v8m2-24v8m0 100v3m1-3v3m1-91v4m1-21v2m0 1v6m4 8v4m1-14v7m2-4v2m0 6v2m2-27v17m3-6v5m1 5v3m1-7v4m1-23v14m1 7v8m1 77v3m1-91v2m0 86v3m1-82v3m3 84v3m1-126v4m0 1v4m0 114v3m3-65v7m1-52v2m3 13v5m1 91v12m3-103v3m1-37v2m1 19v6m5 6v4m1-32v4m1 11v2m1-6v5m0 3v2m2 4v2m2-26v2m0 2v2m0 2v2m1 12v8m3-2v4m2-5v2m1-2v2m0 86v3m0 3v3m1-127v2m0 116v3m0 3v3m1-132v2m0 5v3m1-8v2m1 3v3m0 5v2m3-13v2m5 117v3m0 3v3m1-9v3m0 3v3m2-92v3m8 14v7m1-64v2m0 17v2m0 94v3m0 17v3m1-119v10m0 86v3m0 17v3m1-128v16m1 6v4m1-12v4m3-5v11m2-7v5m1-32v4m0 1v5m2 105v3m0 11v3m0 3v3m1-23v3m0 11v3m0 3v3m1-115v3m1 28v6m1-22v4m1-8v6m2-16v5m1-29v4m0 1v6m2-5v2m1-7v2m1 3v2m0 107v3m0 5v3m0 3v3m1-122v3m0 2v2m0 2v4m0 92v3m0 5v3m0 3v3m2-97v3m2 23v7m1-62v5m1-3v2m1 16v2m1-23v2m1 7v2m1 23v5m1 71v3m0 11v3m0 3v3m1-23v3m0 11v3m0 3v3m4-119v2m1-13v2m3 0v2m1-1v17m4-28v4m0 1v7m1 26v5m2-34v5m4-13v2m0 7v2m2 3v2m1 5v11m2-33v2m0 7v2m2-9v2m0 17v2m1 17v4m1-27v9m4 7v5m2-29v2"/><path stroke="#00e1ff" d="M79 197v4m1-32v2m1 1v2m3 8v9m1 8v4m3-7v5m1-15v2m2-3v4m1-17v3m1 18v5m2-25v11m7-4v7m1 4v2m1 7v5m1-15v4m1-24v3m2-6v5m0 4v2m2-5v2m0 13v2m1-1v3m3-26v7m5 19v4m1-22v3m2-1v2m3 17v3m1-30v2m1-3v2m0 11v3m1-14v2m6 0v2m2 13v6m1-24v2m0 10v2m1 5v4m1-6v2m1 12v6m1-13v7m5-27v9m1-15v3m0 1v2m1 12v6m0 2v2m1 0v2m1-14v4m1-11v14m8-2v6m2-4v4m1-26v4m1-1v2m3 10v9m3 0v5m1-24v3m1 12v2m1-12v2m1-11v3m1-3v3m0 2v2m0 1v2m1-2v4m0 8v2m2 3v5m2-8v4m2-19v2m2-7v2m0 1v2m0 1v2m2 9v3m0 1v3m2-28v2m0 1v2m0 3v2m0 1v3m0 4v2m1-9v9m2-18v2m0 13v2m1-11v2m0 19v2m2-23v12m3 8v8m3-28v2m1 14v4m4-28v2m0 3v2m1-5v2m0 3v2m2-6v5m1-6v3m0 2v2m0 11v2m4-18v2m1 10v2m2 7v2m1-16v2m5 42v10m1-64v2m0 1v3m1-5v2m1 24v4m3-8v4m4-22v3m1 10v4m0 3v2m1-17v3m1 11v4m4-29v7m1 29v5m4-35v10m1-3v2m0 14v2m1 5v5m1-26v7m1-18v2m1 17v6m3-12v5m6-5v9m1-3v2m1 1v3m1-21v13m1-13v2m1 3v7m2 9v4m5-26v2m1-8v2m3 21v4m2-19v15m1-23v22m3-14v2m1 17v3m1 2v4m1-35v3m1-2v2m2-5v3m0 1v2m2 26v6m1-8v5m1-6v3m2-29v3m1-3v2m0 5v3m1 10v4m2-26v5m0 4v3m0 1v2m1 53v12m3-60v4m1-20v2m1-3v3m0 7v2m1-12v3m4 1v12m5-20v8m1 9v9m1-3v3m1 2v8m1-8v5m3-30v2m1 20v7m1-2v4m1-9v7m3-1v6m1-12v3m2-1v4m1-10v6m1-27v11m1 12v5m1-1v8m2-32v4m1 25v6m3-38v3m3 0v2m2-3v2m0 7v3m1 10v7m2-30v2m3 25v8m1-13v39m3-62v10m1-5v2m4 100v20m1-118v2m5 13v7m3-24v2m0 3v2m1-13v2m0 7v2m6-3v14m3-12v2m1 0v2m1-12v2m3 2v12m1 0v10m2-28v61m4-60v2m0 1v3m5 16v7m1 5v5m1-37v2m1-5v26m4-25v3m1 6v2m0 3v2m1 16v2m2 16v3m1-55v5m7 21v3m2-19v2m1-1v2m0 3v3m0 5v2m2-2v2m2 2v8m1-21v8m1-23v2m0 6v6m4-5v14m1-23v6m0 3v2m1-8v3m0 17v2m0 1v2m8-28v2m0 1v2m0 3v3m1 1v2m1-7v2m0 18v2m1-12v2m2-5v6m1 23v8m1-36v3m0 1v3m0 3v2m1 6v5m1-3v5m1-33v2m0 2v2m1 11v3m1-9v2m1-1v9m1-21v12m1 0v10m4-1v7m2-19v8m1 8v7m1-25v8m2-20v2m1 51v10m1-46v2m0 3v3m1-27v4m0 1v3m1 17v5m3-12v9m2-5v4m6 0v5m2-25v10m1-13v2m1 15v6m1-17v2m0 15v2m3 0v8m1-12v7m1 1v6m1-22v2m0 11v2m4-1v4m3-30v2m1 7v2m1-9v3m0 1v2m0 2v3m2 108v12m1-131v2m1 13v2m1-15v14m1-18v2m3-4v3m2 31v2m1-10v2m0 1v6m1-8v2m1-20v3m0 8v2m1-23v9m0 1v16m2-27v8m2 18v5m2-29v2m2 17v6m1-24v3m4 25v5m2-16v10m1-5v2m1-1v5m1-28v5m0 5v2m0 5v2m1-14v2m0 6v2m2-15v2m0 8v2m0 1v2m0 1v2m1-19v2m0 8v2m1-12v3m0 3v2m1-8v2m0 1v3m0 6v2m1-13v2m1 15v11m2-25v9m2 14v6m1-28v11m1-12v2m1 5v3m2 14v5m1-18v8m2-10v2m1-2v3m1-18v11m3 3v8m1 6v4m1-8v4m1-28v9m1 11v10m1-27v5m1 17v2m1 5v4m5-32v2m1 4v3m1 39v9m1-51v2m3 12v7m1 76v20m3-95v4m2-21v8m4-18v2m1 22v6m1-35v2m0 3v2m1-7v3m0 1v2m0 3v2m1-3v8m1 1v2m1 0v5m1-24v2m2 18v10m3 2v4m1-24v2m0 8v4m1-7v2m0 1v2m1-12v2m0 4v2m5-2v3m1-20v2m0 2v2m9 28v5m1-35v2m0 6v2m5-15v2m0 2v2m2 42v9m2-50v12m1-19v10m1 17v5m1-13v5m1-22v3m2 4v14m2-2v6m5-13v7m1 25v8m1-20v4m1-11v7m2-15v5m5-22v2m1-1v2m0 1v2m0 9v2m0 4v2m1-22v4m1 24v4m2 17v9m1-58v2m1-3v5m4 26v6m8-36v2m0 9v4m1-10v2m0 10v2m0 2v2m1-26v5m1-5v4m0 1v6m5 21v6m2-35v2m5 1v2m0 15v2m1-22v2m1 4v13m3-21v2m1-3v2m0 2v2m1 29v5m1-33v10m4 10v6"/><path stroke="#00f5b9" d="M79 192v5m5-25v10m1 11v6m3-10v7m2-26v3m0 8v2m1-8v2m0 1v2m2 7v6m2-27v7m7-2v9m1-6v2m1 18v6m1-14v4m4-24v4m0 4v2m0 3v2m1-11v2m1-4v3m0 9v2m2-15v3m6 18v4m6-2v5m2-20v2m7-10v3m2 9v7m1-15v2m1 2v3m1-12v3m0 3v2m0 3v2m1 12v8m1-16v9m5-26v6m2 6v6m1-9v3m0 3v2m1-17v4m0 1v2m0 6v3m1-16v9m8 5v7m2-1v3m5-17v10m3 3v6m2-17v2m0 7v3m1-19v3m0 1v2m0 2v2m3-9v2m0 1v2m1 9v2m0 1v2m1 0v6m1-25v2m0 2v2m0 4v3m1 5v4m2-22v2m3-2v2m1 3v2m0 1v8m0 1v2m1-9v3m2-15v7m3-6v4m0 11v6m0 1v3m2-26v8m3 10v10m4-10v6m13-22v3m2 8v3m6 27v12m3-31v4m3-10v6m4-23v2m1 2v3m0 1v3m0 1v3m1-13v2m1 14v6m5 5v6m4-36v6m1-3v2m0 6v2m1 17v6m1-30v9m2 0v8m1-23v2m0 5v3m1-10v3m0 1v2m1 5v6m6-11v11m1-8v3m1-2v3m1-13v8m2-3v8m2 11v5m9-11v6m2-24v9m5 0v2m0 2v5m1 9v6m5-33v2m0 1v2m0 1v3m1 15v8m1-9v7m1-15v2m1-11v3m0 2v2m3-9v2m1 2v2m2 43v16m1-67v3m0 1v2m0 5v2m2 1v5m7-21v8m6-1v10m1 2v4m1-5v10m1-6v6m4-11v8m1 0v5m1-14v9m3-1v7m1-19v6m1-14v2m0 7v2m1 8v4m1-13v7m2-3v5m1-5v9m3-3v8m4-29v2m5 11v8m1-19v3m2-8v3m1-3v2m0 3v3m0 2v2m0 1v2m1 3v10m1-8v3m7-23v3m0 1v3m1 76v24m6-91v8m10-24v9m8-9v7m1 0v12m7-16v3m1-3v3m0 1v2m0 12v2m3-7v8m1 6v6m1-34v2m4-2v4m2-6v2m0 2v3m1 9v2m0 2v2m1-14v2m0 11v2m1 25v4m8-31v5m3-26v3m0 1v2m1-4v2m0 13v3m1-2v6m1-24v2m0 2v4m1 14v6m1-22v9m5-15v9m2-3v2m5 1v3m4-8v2m0 2v4m1 6v2m0 1v2m1-18v2m0 7v3m2-12v9m1 19v10m1-42v2m0 3v3m1 19v5m1-4v6m1-33v2m1 0v2m0 6v3m0 1v2m1-18v5m1 2v12m1-19v7m1 0v12m4-1v10m2-22v10m1 9v7m1-26v8m3 29v12m1-52v3m2 14v5m3-18v11m2-1v5m6-2v6m2-26v6m2 7v7m1-20v2m3 16v10m1-12v8m1 1v7m1-31v4m1-5v2m3 23v5m4-29v4m1-5v4m2 105v16m2-117v3m1-11v8m6-1v2m0 4v2m0 1v2m1 2v8m1-10v3m1-12v2m5 9v6m4-12v7m5 5v5m2-23v12m1-15v2m1 13v6m3-26v3m0 1v4m0 1v2m6-3v12m2-20v6m2 17v6m1-29v7m2-3v2m2 17v7m1-24v11m3-17v2m0 6v2m4-4v8m1 10v4m1-10v6m2-17v13m1-20v3m2 24v5m6-32v3m0 1v2m1 34v12m4-36v8m1 59v24m3-80v5m2-26v9m5 8v6m3-29v6m1-3v2m0 5v2m1-6v11m1-15v2m2 3v13m3 7v5m1-27v5m1-9v5m0 3v2m0 1v2m0 3v2m1-10v2m5-11v2m10 27v6m7-30v2m0 3v3m1 24v11m2-48v7m2 14v6m1-15v7m3-19v9m2 5v7m5-16v9m1 21v11m1-18v6m1-16v9m2-14v6m6-19v2m0 11v2m2 11v5m2 9v12m6-27v8m9-32v2m0 2v3m7 17v7m7-29v2m1-4v2m1-3v9m5 21v5m1-35v7m4 14v6m1-24v3m0 7v3"/><path stroke="#00ff71" d="M79 186v6m5-26v6m1 15v6m3-12v8m1-22v2m0 1v2m4 7v8m9-21v5m2 17v6m1-12v4m5-20v2m2 0v3m0 1v2m0 4v2m7 3v5m6-4v6m10-15v2m1-6v8m2-12v4m2 11v9m1-19v11m7-12v7m1-10v3m10 0v9m2 1v5m5-20v6m3 7v6m2-15v4m5-3v2m0 1v2m1 3v8m2-5v4m1-19v4m0 1v4m5-10v7m1-5v2m5 1v3m0 3v2m0 1v2m5-9v11m4-6v6m13-18v2m8 26v15m3-25v6m3-12v6m5-15v2m2 7v7m5 4v7m5-30v2m1 21v7m1-30v6m2 0v9m1-12v3m2-2v7m6-11v6m1-5v2m1 4v2m3-9v5m2 14v5m9-12v6m7-16v2m1 17v6m6-11v8m1-9v8m1-23v3m0 3v2m4-6v2m0 6v2m3 22v19m3-42v5m13-16v7m1 8v4m1-12v11m1-4v8m4-16v11m1 2v6m1-19v10m3-1v9m1-19v5m2 8v5m1-18v9m2-2v6m1-11v11m3-2v8m4-23v2m5 3v10m5-9v11m1-3v5m8 34v29m6-77v10m19-16v7m11-1v10m1 7v7m8-24v2m2 35v5m8-32v5m4-17v5m1 3v6m2-4v8m1-22v6m7-6v2m10-2v5m0 4v2m0 2v2m1-12v2m2-5v5m1 17v11m2-12v7m1-6v7m4-29v7m2-7v7m4 0v11m2-18v6m1 10v9m1-25v6m3 22v15m3-30v7m3-20v7m2 4v6m6-4v7m4-15v8m4-6v11m1-12v10m1 0v9m5-6v6m7 66v18m2-106v3m7-5v5m0 4v2m1-5v11m1-18v5m6 8v7m4-15v9m5 6v6m2-26v8m1-7v3m1 9v7m9-20v8m4 7v8m5-8v8m1-23v6m7-6v6m1 12v6m1-12v6m2-18v7m3 13v7m7-1v14m4-34v10m1 38v29m3-63v7m2-27v6m5 9v8m5-23v6m3-6v7m3 13v7m1-26v2m17 19v7m7-29v2m1 22v13m4-23v7m1-16v7m5-7v9m5-14v5m1 18v12m1-14v7m1-21v11m2-13v8m8 7v6m2 0v14m6-24v9m16-9v9m14-2v7m5-16v7"/><path stroke="#00ff25" d="M79 179v7m6-6v7m3-15v9m5-10v8m11 1v8m1-12v6m14-5v6m6-5v6m10-16v2m1-4v5m4 1v10m1-16v6m7-6v5m11-5v5m2 5v5m8-10v8m8-8v8m2-3v6m17-16v7m4-2v7m21-2v18m3-16v6m3-13v7m7-7v7m5 3v8m6-8v8m3-23v6m3-6v4m13 8v7m9-14v7m8 1v8m6-15v10m1-10v9m8-2v21m3-30v7m14-1v5m1-15v7m1-2v9m4-14v6m1 6v7m1-19v6m3 0v9m1-14v2m2 8v7m1-18v5m2-1v8m1-12v7m3-1v10m9-16v6m5-6v7m1 3v5m8 4v35m6-54v6m30-6v6m1 9v8m10 14v6m8-32v5m5-11v7m2-7v9m22-6v14m2-8v7m1-7v8m10-22v7m3-1v10m4-4v16m3-23v8m5-9v7m6-6v8m4-13v5m4-5v7m1-7v6m1 0v10m5-4v7m7 50v22m10-91v7m7-2v8m4-13v5m5 8v7m4-15v8m13-7v9m5-9v9m9-3v6m1-13v7m5 1v7m7-10v16m4-26v6m1 13v35m3-41v7m7-14v9m11-2v7m18-6v8m8-13v15m4-19v9m1-14v5m5-5v5m6 3v15m1-9v7m1-21v7m2-7v5m8 8v7m2-10v16m6-20v10m16-10v10m14-1v8m5-18v9"/><path stroke="#1cff00" d="M79 171v8m6-8v9m3-14v6m5-6v5m11 0v9m1-10v6m14-6v7m6-7v8m15-12v6m21-2v6m8-10v5m8-5v5m2-1v6m21-10v5m21-5v10m3-6v8m3-12v5m7-5v5m5 0v10m6-10v10m19-10v7m9-12v5m8 0v8m6-13v6m1-6v6m8-6v13m3-13v4m14 0v6m2-10v5m5 0v7m4-12v6m3-2v7m3-11v4m4-4v6m15-2v6m8-10v19m37-13v9m10 15v7m8-33v7m5-11v5m2-5v5m22-5v8m2-3v9m1-9v9m13-14v6m4-1v7m3-12v5m5-5v4m6-4v5m10-5v6m5-1v7m7 32v25m17-69v5m9 0v8m4-13v5m13-5v6m5-6v6m9-2v8m1-12v5m5 0v8m7-13v10m5-10v19m3-14v8m7-13v6m11-1v8m18-8v9m8-14v9m4-9v5m12-5v8m1-3v9m11-9v8m2-13v10m6-10v6m16-6v6m14-1v10m5-15v5"/><path stroke="#52ff00" d="M79 166v5m6-5v5m19-5v5m1-5v4m14-4v4m6-4v4m36-4v4m18-4v4m45-4v4m15-4v5m6-5v5m19-5v5m17-5v5m32-5v4m7-4v5m7-5v4m22-4v4m45-4v6m10 17v7m8-30v4m31-4v5m1-5v5m17-5v5m29-5v5m7 11v28m26-44v5m31-5v4m6-4v5m15-5v5m18-5v5m18-5v5m25-5v5m11-5v5m38-5v5"/><path stroke="#97ff00" d="M404 181v8m93-23v16"/><path stroke="#eaff00" d="M404 171v10"/><path stroke="#ffc000" d="M404 166v5"/></g><g fill="none" stroke-width="1" transform="translate(0 .5)"><path stroke="#00006e" d="M183 202h1m23 0h1m51 0h1m91 0h1m237 0h1m51 0h1m-475 1h1m19 0h1m38 0h1m77 0h1m82 0h1m34 0h1m43 0h1m15 0h1m120 0h1m44 0h1m-560 1h1m115 0h1m3 0h1m19 0h2m92 0h1m35 0h1m12 0h1m33 0h1m10 0h2m14 0h1m17 0h1m99 0h1m10 0h1m70 0h1m6 0h2m4 0h1m9 0h1m11 0h1m-587 1h1m35 0h1m34 0h1m1 0h1m44 0h1m39 0h1m50 0h2m14 0h1m17 0h1m16 0h1m1 0h1m13 0h1m16 0h1m14 0h1m9 0h1m8 0h1m35 0h1m23 0h2m30 0h1m4 0h1m2 0h1m34 0h1m10 0h1m20 0h1m8 0h1m62 0h1m-544 1h1m2 0h1m3 0h1m89 0h1m43 0h1m12 0h1m6 0h1m18 0h1m80 0h1m13 0h1m57 0h1m13 0h1m27 0h1m12 0h1m4 0h1m44 0h1m2 0h2m38 0h1m4 0h1m6 0h1m21 0h1m8 0h1m1 0h1m26 0h1m-548 1h1m24 0h1m5 0h3m2 0h1m14 0h1m4 0h1m1 0h1m34 0h1m1 0h1m8 0h1m3 0h2m15 0h1m24 0h1m2 0h1m2 0h1m12 0h1m12 0h1m36 0h1m4 0h1m2 0h1m26 0h1m6 0h1m3 0h1m13 0h1m25 0h1m9 0h1m19 0h1m2 0h1m8 0h1m11 0h1m1 0h1m2 0h1m38 0h1m26 0h1m20 0h1m10 0h1m2 0h1m2 0h1m1 0h1m27 0h1m33 0h1m20 0h1m2 0h1m9 0h1m3 0h1m1 0h2m-580 1h1m1 0h1m6 0h1m2 0h1m1 0h2m58 0h1m5 0h1m1 0h1m37 0h3m28 0h1m69 0h1m14 0h1m4 0h1m6 0h1m26 0h1m4 0h1m9 0h1m22 0h1m40 0h1m3 0h1m10 0h1m5 0h1m20 0h1m1 0h1m9 0h1m10 0h1m62 0h1m8 0h2m19 0h1m27 0h1m29 0h1m-595 1h1m11 0h1m5 0h1m24 0h1m10 0h1m16 0h1m9 0h1m2 0h1m15 0h1m2 0h1m10 0h1m1 0h1m55 0h1m16 0h1m34 0h1m34 0h1m105 0h1m23 0h1m22 0h1m12 0h1m12 0h1m11 0h1m11 0h1m10 0h1m14 0h1m99 0h1m-539 1h1m24 0h1m46 0h1m6 0h1m31 0h1m4 0h1m10 0h1m84 0h1m3 0h1m59 0h1m1 0h1m6 0h1m6 0h1m10 0h1m1 0h1m2 0h1m33 0h1m3 0h1m2 0h1m8 0h1m87 0h1m9 0h1m18 0h1m16 0h1m26 0h1m26 0h1m-593 1h1m103 0h1m7 0h1m181 0h1m22 0h1m27 0h1m95 0h1m15 0h1m9 0h1m15 0h1m13 0h1m-448 1h1m32 0h1m15 0h1m262 0h1m23 0h1m27 0h1m98 0h1m19 0h1m42 0h1m-496 7h1m271 0h1m84 0h1m-325 1h1m2 0h1m5 0h1m170 0h1m17 0h1m181 0h1m36 0h1m-456 1h1m1 0h1m62 0h1m42 0h1m89 0h1m5 0h1m1 0h1m22 0h1m4 0h1m15 0h1m2 0h1m77 0h1m-23 1h1m5 0h2m20 0h1m-340 1h1m109 0h1m5 0h1m167 0h1m16 0h1m3 0h1m198 0h1m15 0h1m1 0h1m4 0h1m-595 1h1m5 0h1m11 0h1m6 0h1m58 0h1m5 0h1m95 0h1m32 0h1m76 0h1m220 0h1m1 0h1m80 0h1m-594 1h1m99 0h2m392 0h2m1 0h1m5 0h1m5 0h1m22 0h1m-541 1h1m7 1h2m4 0h1m83 0h1m165 0h1m17 0h1m86 0h1m83 0h1m4 0h1m2 0h2m-411 1h1m4 0h1m281 0h1m133 0h1m-449 1h1m53 0h1m25 0h1m179 0h1m129 0h1m-8 1h3m87 0h1m1 0h1m4 0h1m5 0h1m5 0h1m32 0h1m6 0h1m-493 1h1m28 0h1m1 0h1m93 0h1m135 0h1m3 0h1m16 0h1m197 0h1m-334 1h1m34 0h1m77 0h1m144 0h1m47 0h1m-358 1h1m118 0h1m2 0h2m2 0h1m-90 1h1m7 0h1m244 0h2m1 0h1m-264 1h1m293 0h1m34 0h1m-480 1h1m79 0h1m1 0h1m-82 1h1m3 0h1m62 0h1m1 0h1m2 0h1m73 0h1m2 0h2m260 0h1m30 0h1m-368 1h1m194 0h1m137 0h1m1 0h1m12 0h1m43 0h1m3 0h1m1 0h1m-523 1h2m147 0h1m18 0h1m64 0h1m54 0h1m86 0h2m1 0h1m5 0h1m52 0h1m-242 1h1m2 0h1m110 0h1m2 0h1m219 0h1m-423 1h2m51 0h1m409 0h1m8 0h1m-586 1h1m13 0h2m351 0h1m131 0h1m3 0h1m65 0h3m-425 1h1m26 0h1m15 0h1m85 0h1m92 0h1m43 0h1m14 0h1m149 0h1m-318 1h1m1 0h1m54 0h1m1 0h1m232 0h1m-145 1h1m2 0h1m68 0h1m3 0h1m26 0h1m-376 1h2m329 0h1m3 0h1m-224 1h1m40 0h1m2 0h1m-258 1h1m150 0h1m8 0h1m128 0h1m-117 1h1m1 0h1m79 0h1m-222 1h1m2 0h1m10 0h1m1 0h1m37 0h1m216 0h1m193 0h1m-485 1h1m3 0h1m387 0h1m2 0h1m-372 1h1m9 0h1m117 0h1m48 0h1m-202 1h1m203 0h1m62 0h1m76 0h1m82 0h1m17 0h1m-477 1h1m7 0h1m3 0h1m154 0h1m6 0h1m1 0h1m31 0h1m5 0h2m160 0h1m4 0h1m80 0h1m3 0h1m-420 1h1m96 0h2m26 0h1m65 0h1m288 0h2m1 0h1m5 0h2m-296 1h1m32 0h1m-286 1h1m3 0h1m305 0h1m5 0h2m6 0h1m59 0h1m-336 1h1m1 0h1m4 0h1m373 0h1m5 0h1m-274 1h1m254 0h1m7 0h1m11 0h1m17 0h1m54 0h1m7 0h1m16 0h1m-501 1h1m223 0h1m78 0h1m110 0h1m4 0h1m-296 1h1m2 0h1m12 0h1m14 0h1m3 0h1m36 0h1m1 0h1m153 0h1m2 0h1m2 0h1m83 0h2m85 0h2m-475 1h2m6 0h1m3 0h1m63 0h2m5 0h1m184 0h1m73 0h1m4 0h1m82 0h2m-527 1h1m7 0h1m3 0h1m2 0h2m1 0h1m143 0h1m307 0h2m55 0h2m47 0h1m-585 1h1m50 0h1m6 0h1m13 0h1m3 0h1m31 0h1m1 0h2m19 0h1m23 0h1m2 0h1m46 0h1m14 0h1m2 0h1m24 0h1m40 0h1m2 0h1m25 0h1m9 0h1m10 0h1m38 0h1m19 0h1m6 0h1m9 0h1m47 0h1m3 0h1m76 0h1m1 0h1m16 0h1m-555 1h1m1 0h1m5 0h1m25 0h1m2 0h1m3 0h1m5 0h1m11 0h1m4 0h1m6 0h2m1 0h1m14 0h1m6 0h1m3 0h1m2 0h1m5 0h1m7 0h1m8 0h1m5 0h1m10 0h1m21 0h1m33 0h2m23 0h1m13 0h1m22 0h1m3 0h1m110 0h1m7 0h2m2 0h1m5 0h1m24 0h2m1 0h2m6 0h1m15 0h1m79 0h2m67 0h2m-608 1h1m1 0h1m1 0h4m4 0h1m9 0h1m2 0h1m5 0h1m10 0h1m4 0h1m21 0h1m20 0h2m5 0h3m46 0h1m1 0h1m14 0h1m1 0h1m3 0h1m9 0h1m1 0h1m2 0h1m3 0h1m8 0h1m24 0h2m1 0h1m4 0h3m4 0h2m1 0h1m11 0h1m2 0h2m1 0h1m3 0h2m1 0h2m8 0h1m27 0h1m2 0h1m1 0h2m11 0h1m10 0h1m1 0h1m3 0h1m31 0h1m6 0h1m11 0h1m20 0h1m1 0h1m1 0h1m1 0h2m5 0h7m30 0h1m5 0h2m2 0h1m3 0h1m9 0h1m6 0h1m9 0h1m10 0h1m3 0h1m1 0h4m1 0h1m5 0h1m10 0h1m3 0h1m3 0h1m1 0h1m1 0h1m18 0h1m1 0h2m2 0h3m12 0h1m6 0h2m7 0h1m-599 1h1m3 0h1m12 0h1m5 0h1m10 0h1m5 0h5m25 0h1m1 0h4m1 0h1m1 0h1m14 0h1m2 0h1m10 0h1m4 0h1m3 0h1m9 0h1m21 0h1m16 0h2m17 0h1m5 0h3m1 0h1m1 0h3m1 0h1m2 0h1m2 0h1m54 0h1m3 0h1m3 0h1m1 0h1m4 0h1m1 0h1m6 0h2m14 0h1m5 0h1m11 0h1m5 0h1m6 0h1m4 0h1m1 0h1m4 0h1m3 0h2m32 0h2m1 0h1m1 0h4m2 0h2m1 0h3m20 0h3m1 0h4m12 0h2m4 0h1m8 0h1m3 0h1m1 0h1m10 0h2m4 0h1m7 0h1m10 0h1m18 0h1m29 0h1m3 0h1m22 0h1m6 0h1m4 0h2m13 0h2m-612 1h1m1 0h1m1 0h2m1 0h1m4 0h2m11 0h1m16 0h1m5 0h1m20 0h1m20 0h3m1 0h3m1 0h2m48 0h1m39 0h1m21 0h1m2 0h1m12 0h1m2 0h3m8 0h1m3 0h1m5 0h1m15 0h1m43 0h1m55 0h2m21 0h1m36 0h1m14 0h1m1 0h1m2 0h1m27 0h1m19 0h1m6 0h1m10 0h1m5 0h1m2 0h1m23 0h1m4 0h1m23 0h1m17 0h2m6 0h1m3 0h2m2 0h1m-588 1h3m3 0h1m1 0h5m1 0h1m1 0h1m32 0h10m9 0h1m11 0h2m2 0h4m14 0h1m3 0h1m3 0h1m2 0h1m1 0h1m2 0h2m3 0h2m3 0h1m1 0h1m7 0h1m1 0h1m3 0h1m5 0h1m1 0h1m2 0h1m4 0h2m4 0h1m5 0h1m1 0h1m4 0h2m1 0h2m1 0h4m1 0h1m5 0h1m4 0h1m2 0h1m2 0h1m7 0h1m16 0h1m2 0h1m3 0h1m11 0h2m1 0h1m1 0h1m1 0h1m16 0h2m13 0h1m18 0h3m3 0h4m10 0h1m1 0h2m1 0h1m1 0h1m1 0h1m4 0h1m5 0h1m3 0h1m2 0h1m4 0h1m7 0h5m1 0h1m1 0h3m4 0h3m1 0h1m10 0h1m1 0h1m1 0h2m1 0h3m1 0h2m1 0h1m2 0h1m12 0h2m4 0h1m5 0h1m2 0h2m1 0h1m13 0h3m4 0h1m6 0h3m16 0h1m7 0h1m5 0h5m1 0h4m1 0h2m2 0h1m11 0h1m3 0h1m9 0h3m3 0h1m2 0h1m30 0h2m-596 1h1m2 0h1m30 0h1m10 0h1m36 0h1m30 0h1m101 0h1m8 0h1m1 0h1m5 0h1m139 0h1m86 0h1m30 0h2m9 0h1m8 0h1m25 0h1m6 0h1m9 0h1m12 0h1m5 0h1m14 0h1m-597 1h1m2 0h1m6 0h1m48 0h1m46 0h1m4 0h1m8 0h1m21 0h1m17 0h1m8 0h1m3 0h1m10 0h1m1 0h1m20 0h1m18 0h1m10 0h1m13 0h1m8 0h2m28 0h1m41 0h1m15 0h1m43 0h1m25 0h1m48 0h1m1 0h1m4 0h1m15 0h1m6 0h1m36 0h1m4 0h1m9 0h1m8 0h1m14 0h1m3 0h1m1 0h1m4 0h1m-590 1h1m15 0h1m1 0h1m2 0h1m47 0h2m1 0h1m1 0h1m10 0h2m1 0h1m5 0h1m8 0h1m4 0h1m30 0h1m4 0h1m7 0h1m16 0h1m23 0h2m2 0h1m3 0h1m5 0h1m17 0h1m3 0h1m2 0h3m18 0h1m17 0h1m1 0h1m1 0h1m31 0h1m24 0h1m14 0h1m3 0h1m7 0h1m2 0h1m18 0h1m26 0h2m9 0h1m1 0h2m5 0h1m2 0h1m1 0h1m2 0h1m12 0h2m17 0h1m8 0h1m38 0h1m5 0h1m4 0h1m4 0h1m24 0h1m44 0h1m2 0h1m2 0h1m1 0h1m-582 1h1m7 0h1m11 0h6m1 0h2m1 0h1m2 0h1m3 0h1m14 0h1m10 0h2m1 0h1m2 0h1m3 0h1m2 0h1m64 0h5m1 0h1m1 0h4m1 0h3m1 0h1m16 0h2m5 0h1m1 0h1m5 0h1m3 0h1m3 0h1m11 0h1m1 0h1m18 0h1m1 0h6m12 0h1m9 0h1m3 0h1m21 0h1m2 0h1m2 0h1m1 0h2m1 0h1m2 0h1m2 0h1m2 0h1m16 0h1m3 0h1m10 0h8m2 0h3m1 0h4m12 0h1m1 0h1m2 0h1m3 0h1m2 0h1m2 0h1m1 0h1m32 0h1m3 0h1m5 0h1m1 0h6m1 0h1m15 0h2m2 0h1m42 0h1m4 0h3m1 0h3m3 0h1m1 0h1m2 0h1m18 0h1m1 0h1m1 0h2m12 0h1m10 0h1m2 0h1m2 0h1m6 0h1m-603 1h1m1 0h1m4 0h1m10 0h2m53 0h2m3 0h2m7 0h1m22 0h1m2 0h2m2 0h1m9 0h2m6 0h1m1 0h1m2 0h1m38 0h1m1 0h6m1 0h1m22 0h1m3 0h1m20 0h1m4 0h1m28 0h1m1 0h1m5 0h1m3 0h1m3 0h1m4 0h2m2 0h1m46 0h2m9 0h1m55 0h1m1 0h4m1 0h2m1 0h1m4 0h2m2 0h1m1 0h1m28 0h1m1 0h1m1 0h1m39 0h1m1 0h1m2 0h1m5 0h1m10 0h1m7 0h1m16 0h1m-562 1h1m1 0h2m2 0h1m2 0h1m10 0h2m3 0h1m1 0h1m10 0h1m13 0h1m5 0h1m10 0h2m5 0h1m4 0h1m5 0h2m5 0h1m1 0h1m6 0h2m4 0h1m46 0h1m7 0h1m5 0h2m2 0h1m5 0h4m2 0h1m2 0h1m16 0h2m1 0h1m5 0h2m7 0h1m3 0h1m3 0h1m2 0h1m1 0h2m1 0h2m1 0h1m6 0h1m2 0h1m1 0h2m1 0h1m1 0h1m3 0h1m1 0h2m4 0h1m2 0h3m1 0h1m29 0h1m4 0h1m6 0h1m2 0h1m1 0h2m1 0h1m11 0h1m3 0h3m1 0h1m12 0h1m3 0h1m4 0h1m4 0h1m1 0h2m20 0h1m1 0h1m2 0h1m2 0h2m1 0h2m1 0h1m4 0h1m18 0h1m11 0h1m2 0h1m2 0h1m6 0h1m1 0h1m17 0h1m2 0h1m2 0h1m10 0h1m2 0h2m1 0h4m7 0h1m11 0h1m1 0h2m8 0h2m3 0h2m1 0h1m2 0h1m1 0h1m4 0h1m15 0h1m32 0h1m4 0h1m-610 1h1m59 0h1m2 0h2m14 0h1m5 0h1m17 0h1m17 0h1m39 0h1m2 0h2m27 0h1m38 0h1m31 0h1m34 0h1m32 0h1m1 0h1m19 0h2m1 0h1m1 0h2m7 0h1m4 0h1m7 0h1m45 0h2m3 0h2m1 0h1m4 0h1m16 0h1m9 0h1m7 0h1m50 0h1m2 0h2m2 0h2m5 0h1m15 0h2m4 0h1m1 0h1m17 0h1m1 0h1m14 0h1m1 0h3m4 0h1m-610 1h1m9 0h1m3 0h1m7 0h1m4 0h1m2 0h1m3 0h3m1 0h2m4 0h1m4 0h1m4 0h1m1 0h1m30 0h1m2 0h2m1 0h2m28 0h1m12 0h1m1 0h1m5 0h1m23 0h1m41 0h1m2 0h2m4 0h2m3 0h1m12 0h3m1 0h6m2 0h8m4 0h1m1 0h2m3 0h2m2 0h3m1 0h2m3 0h1m2 0h1m3 0h1m1 0h1m1 0h1m3 0h1m1 0h1m4 0h1m2 0h1m2 0h1m19 0h1m1 0h1m2 0h1m33 0h1m3 0h1m19 0h4m2 0h2m5 0h1m1 0h8m58 0h1m4 0h4m1 0h2m1 0h1m22 0h2m2 0h2m7 0h1m5 0h1m13 0h1m5 0h2m2 0h4m13 0h1m1 0h1m15 0h3m2 0h4m-576 1h1m3 0h2m22 0h1m10 0h2m1 0h4m86 0h1m20 0h1m25 0h1m1 0h4m94 0h1m18 0h1m7 0h1m8 0h1m2 0h1m6 0h1m11 0h1m4 0h1m14 0h1m8 0h1m19 0h1m13 0h1m26 0h2m7 0h1m31 0h1m2 0h1m28 0h1m36 0h4m3 0h2m2 0h1m13 0h2m15 0h1m-603 1h1m1 0h1m2 0h1m1 0h1m4 0h3m2 0h1m12 0h2m1 0h1m3 0h4m1 0h4m2 0h1m4 0h2m1 0h2m1 0h1m14 0h1m12 0h1m5 0h4m4 0h1m2 0h1m8 0h1m6 0h2m1 0h2m1 0h1m3 0h2m2 0h1m3 0h2m1 0h1m5 0h1m12 0h4m1 0h3m13 0h1m4 0h1m2 0h1m23 0h2m2 0h1m4 0h2m3 0h1m12 0h3m1 0h1m2 0h1m12 0h1m3 0h1m4 0h1m3 0h3m1 0h1m1 0h2m3 0h1m2 0h1m3 0h1m1 0h1m5 0h1m1 0h1m1 0h1m5 0h1m5 0h1m3 0h1m4 0h1m5 0h3m1 0h3m2 0h1m26 0h4m4 0h1m3 0h1m5 0h1m3 0h1m3 0h1m8 0h1m30 0h1m5 0h1m17 0h1m6 0h2m4 0h1m1 0h1m1 0h1m1 0h15m7 0h1m2 0h1m2 0h4m1 0h1m2 0h9m8 0h2m2 0h2m2 0h2m2 0h1m2 0h6m2 0h6m1 0h2m31 0h4m1 0h3m-595 1h1m44 0h1m13 0h1m58 0h1m109 0h1m59 0h1m68 0h1m24 0h1m11 0h1m4 0h1m18 0h2m83 0h1m26 0h1m3 0h1m-514 1h1m13 0h1m8 0h1m10 0h1m20 0h1m10 0h1m3 0h1m70 0h1m37 0h1m35 0h1m11 0h2m2 0h1m2 0h1m9 0h1m47 0h1m12 0h1m5 0h2m11 0h1m30 0h2m10 0h1m20 0h3m1 0h1m22 0h1m1 0h3m47 0h1m13 0h1m1 0h1m28 0h1m59 0h1m5 0h1m3 0h1m-608 1h1m16 0h1m2 0h1m44 0h1m1 0h1m5 0h1m3 0h1m14 0h1m29 0h1m2 0h1m3 0h1m9 0h1m10 0h6m1 0h1m1 0h2m19 0h2m1 0h1m1 0h1m7 0h1m22 0h1m13 0h3m1 0h2m1 0h2m32 0h1m1 0h1m1 0h3m1 0h3m2 0h2m2 0h1m1 0h1m2 0h1m8 0h2m2 0h1m2 0h1m10 0h2m5 0h3m21 0h1m1 0h3m1 0h1m1 0h4m3 0h3m2 0h1m1 0h1m5 0h1m4 0h2m3 0h2m2 0h1m1 0h2m1 0h1m3 0h2m5 0h1m14 0h2m4 0h8m1 0h1m10 0h1m18 0h1m1 0h5m1 0h1m21 0h2m3 0h2m5 0h3m19 0h1m16 0h2m5 0h3m20 0h1m1 0h1m15 0h3m1 0h1m6 0h2m1 0h2m-613 1h1m2 0h2m37 0h1m1 0h1m1 0h3m5 0h1m34 0h1m4 0h5m15 0h1m18 0h2m36 0h1m17 0h1m21 0h4m24 0h1m2 0h1m1 0h3m2 0h1m1 0h1m1 0h1m1 0h1m6 0h1m47 0h1m3 0h1m2 0h1m18 0h1m9 0h1m35 0h1m2 0h1m1 0h1m23 0h3m2 0h1m1 0h1m20 0h7m2 0h1m11 0h2m4 0h1m41 0h1m34 0h1m52 0h1m-598 1h1m7 0h1m8 0h1m21 0h1m29 0h1m2 0h2m2 0h2m1 0h2m1 0h8m10 0h1m2 0h4m1 0h1m24 0h1m2 0h1m2 0h1m1 0h2m5 0h1m1 0h1m4 0h2m1 0h2m1 0h3m1 0h1m1 0h2m23 0h1m4 0h1m1 0h1m1 0h2m3 0h1m1 0h2m12 0h1m3 0h1m3 0h1m1 0h8m21 0h1m2 0h2m1 0h1m12 0h2m1 0h3m1 0h1m1 0h2m2 0h1m42 0h1m7 0h1m5 0h4m1 0h1m1 0h1m1 0h1m1 0h1m2 0h3m1 0h2m1 0h1m1 0h1m5 0h1m7 0h1m1 0h3m1 0h4m1 0h1m34 0h2m1 0h1m13 0h1m21 0h1m1 0h2m1 0h1m24 0h2m2 0h1m1 0h1m2 0h1m1 0h1m19 0h1m3 0h1m13 0h1m4 0h2m1 0h1m2 0h1m6 0h1m32 0h1m6 0h1m-606 1h1m247 0h1m166 0h1m-414 1h1m4 0h1m19 0h1m41 0h1m16 0h1m26 0h1m6 0h1m43 0h2m14 0h1m10 0h1m14 0h1m25 0h1m16 0h1m1 0h1m1 0h1m1 0h1m15 0h1m64 0h1m20 0h1m17 0h2m59 0h1m2 0h1m14 0h1m89 0h1m13 0h3m3 0h1m2 0h1m-564 1h2m18 0h1m3 0h1m1 0h2m1 0h1m2 0h2m1 0h8m2 0h1m4 0h1m2 0h1m3 0h1m3 0h1m10 0h1m1 0h2m1 0h4m14 0h1m2 0h1m11 0h1m23 0h1m2 0h1m27 0h2m1 0h1m1 0h1m4 0h1m2 0h1m2 0h1m10 0h1m1 0h1m3 0h1m17 0h1m2 0h1m13 0h1m3 0h2m2 0h1m24 0h1m1 0h1m6 0h1m3 0h1m4 0h1m4 0h1m3 0h4m1 0h1m2 0h1m1 0h1m4 0h1m1 0h1m1 0h2m1 0h1m6 0h1m2 0h1m1 0h1m2 0h1m2 0h1m2 0h2m5 0h2m1 0h1m2 0h3m33 0h1m1 0h1m4 0h2m1 0h1m2 0h1m3 0h3m1 0h4m1 0h1m11 0h1m18 0h3m1 0h1m1 0h1m3 0h1m9 0h2m1 0h1m4 0h2m1 0h1m1 0h1m1 0h1m21 0h1m5 0h1m3 0h3m1 0h5m1 0h3m10 0h1m9 0h4m1 0h1m1 0h3m7 0h1m12 0h1m12 0h1m10 0h2m4 0h1m-588 1h2m66 0h3m3 0h1m12 0h1m2 0h1m1 0h1m14 0h1m6 0h1m10 0h1m3 0h1m4 0h1m50 0h1m22 0h1m1 0h1m1 0h1m3 0h1m10 0h10m34 0h1m1 0h1m1 0h1m26 0h1m8 0h1m2 0h1m4 0h2m31 0h1m1 0h1m2 0h2m1 0h2m2 0h3m50 0h2m2 0h4m14 0h1m4 0h1m1 0h1m5 0h1m14 0h1m3 0h1m1 0h1m1 0h4m10 0h1m34 0h1m1 0h1m24 0h1m28 0h1m7 0h2m-582 1h2m20 0h1m4 0h1m23 0h1m23 0h1m9 0h1m9 0h2m22 0h1m3 0h1m1 0h1m1 0h1m5 0h1m1 0h1m15 0h1m8 0h1m2 0h2m1 0h1m16 0h1m26 0h1m5 0h1m24 0h1m3 0h1m2 0h1m7 0h1m23 0h1m4 0h1m16 0h1m14 0h1m5 0h2m9 0h1m1 0h2m22 0h1m1 0h1m1 0h1m4 0h2m1 0h1m1 0h2m3 0h2m3 0h2m4 0h1m1 0h1m2 0h1m1 0h1m1 0h2m6 0h1m12 0h1m18 0h2m1 0h2m47 0h1m2 0h1m54 0h1m2 0h4m1 0h1m4 0h1m3 0h1m-598 1h1m1 0h1m3 0h4m15 0h1m15 0h1m1 0h1m1 0h2m5 0h1m7 0h1m8 0h1m23 0h1m3 0h1m11 0h2m4 0h1m2 0h1m9 0h1m2 0h1m2 0h5m1 0h1m3 0h3m2 0h1m10 0h1m9 0h1m1 0h3m10 0h1m6 0h1m9 0h1m19 0h3m17 0h1m2 0h1m5 0h1m3 0h1m9 0h1m26 0h2m2 0h1m1 0h1m9 0h1m1 0h1m16 0h2m13 0h3m1 0h1m2 0h1m7 0h1m12 0h1m4 0h1m5 0h1m1 0h2m1 0h5m26 0h1m23 0h1m12 0h1m39 0h1m1 0h1m2 0h1m5 0h1m1 0h1m1 0h1m3 0h1m18 0h11m1 0h1m2 0h1m1 0h1m1 0h1m3 0h1m49 0h2m4 0h1m-595 1h2m5 0h1m6 0h2m5 0h1m5 0h1m3 0h1m21 0h1m72 0h1m8 0h1m5 0h1m10 0h1m11 0h1m48 0h1m23 0h1m1 0h1m16 0h1m1 0h2m23 0h1m29 0h2m2 0h1m43 0h1m17 0h1m9 0h1m19 0h1m8 0h1m10 0h1m27 0h1m13 0h1m102 0h1m-585 1h3m42 0h3m6 0h3m3 0h3m17 0h1m23 0h1m1 0h1m2 0h1m1 0h2m16 0h1m3 0h1m24 0h1m14 0h1m12 0h2m18 0h2m3 0h1m3 0h1m4 0h2m12 0h1m2 0h1m2 0h2m19 0h1m3 0h1m30 0h2m2 0h1m7 0h1m6 0h1m4 0h1m15 0h1m1 0h3m13 0h2m2 0h3m1 0h2m10 0h1m18 0h6m1 0h1m1 0h1m2 0h1m3 0h1m14 0h4m2 0h2m1 0h1m21 0h1m1 0h2m1 0h1m26 0h1m1 0h1m1 0h2m3 0h1m5 0h1m17 0h1m13 0h1m5 0h1m5 0h1m1 0h1m3 0h1m2 0h1m7 0h8m1 0h1m1 0h1m10 0h2m1 0h1m13 0h1m1 0h3m-595 1h1m1 0h2m3 0h5m1 0h4m1 0h3m19 0h1m35 0h2m2 0h1m44 0h1m24 0h1m6 0h1m34 0h1m5 0h1m2 0h1m15 0h1m17 0h1m1 0h1m1 0h1m28 0h1m2 0h2m2 0h1m3 0h1m18 0h1m14 0h2m5 0h2m39 0h1m1 0h2m2 0h2m1 0h1m1 0h2m1 0h1m1 0h1m2 0h1m26 0h1m17 0h1m6 0h4m3 0h2m20 0h2m1 0h4m43 0h2m2 0h1m10 0h1m45 0h1m-591 1h1m2 0h1m3 0h2m14 0h1m76 0h1m7 0h1m30 0h1m40 0h1m2 0h1m8 0h2m3 0h1m29 0h1m15 0h1m19 0h1m6 0h1m2 0h1m25 0h1m5 0h1m36 0h1m1 0h3m52 0h4m2 0h2m1 0h1m30 0h2m3 0h1m1 0h1m15 0h2m2 0h1m6 0h2m3 0h1m47 0h1m22 0h1m8 0h1m10 0h1m40 0h2m-581 1h1m1 0h1m2 0h1m1 0h1m10 0h1m8 0h2m3 0h1m2 0h1m27 0h1m15 0h1m1 0h2m2 0h3m2 0h2m7 0h1m1 0h1m1 0h1m1 0h2m15 0h1m1 0h3m2 0h3m8 0h1m3 0h1m11 0h1m28 0h2m1 0h1m6 0h1m2 0h2m2 0h1m2 0h5m5 0h1m1 0h1m4 0h1m1 0h2m3 0h3m1 0h4m7 0h1m3 0h1m4 0h1m1 0h1m1 0h1m1 0h1m6 0h1m12 0h2m3 0h3m3 0h1m53 0h1m5 0h3m3 0h1m34 0h1m1 0h2m1 0h2m32 0h1m7 0h1m1 0h2m2 0h2m2 0h9m22 0h2m31 0h4m12 0h1m10 0h1m10 0h1m8 0h1m2 0h3m1 0h2m-592 1h1m71 0h1m7 0h1m43 0h1m71 0h2m3 0h1m54 0h1m80 0h1m7 0h1m5 0h1m95 0h1m76 0h1m1 0h1m49 0h2m20 0h1m-606 1h1m2 0h1m34 0h1m1 0h1m3 0h5m6 0h1m15 0h1m32 0h1m2 0h4m1 0h7m2 0h4m2 0h1m2 0h1m11 0h1m1 0h1m3 0h1m30 0h1m2 0h2m2 0h2m1 0h1m7 0h2m10 0h1m4 0h1m1 0h1m22 0h3m1 0h4m1 0h1m22 0h1m8 0h1m10 0h1m3 0h1m2 0h1m16 0h1m1 0h1m7 0h2m34 0h1m11 0h1m4 0h1m10 0h2m1 0h1m8 0h1m1 0h1m1 0h1m5 0h1m1 0h1m4 0h1m9 0h1m12 0h2m1 0h1m1 0h1m18 0h1m6 0h2m1 0h3m41 0h1m2 0h1m1 0h1m7 0h1m2 0h2m45 0h1m5 0h1m8 0h1m12 0h1m-604 1h1m51 0h1m1 0h1m2 0h1m1 0h1m15 0h1m2 0h1m3 0h1m46 0h2m24 0h1m6 0h1m7 0h1m15 0h1m5 0h3m2 0h2m2 0h1m18 0h2m26 0h1m2 0h1m8 0h2m13 0h5m57 0h1m8 0h1m3 0h1m37 0h1m24 0h1m11 0h3m2 0h1m16 0h2m8 0h1m1 0h3m14 0h2m4 0h1m19 0h1m2 0h2m9 0h1m16 0h2m4 0h1m22 0h2m1 0h1m10 0h2m1 0h1m7 0h1m-596 1h1m3 0h1m6 0h3m1 0h1m1 0h3m1 0h2m3 0h1m1 0h3m4 0h2m10 0h1m5 0h1m4 0h1m36 0h1m15 0h1m2 0h1m1 0h5m1 0h1m8 0h1m1 0h1m5 0h1m1 0h1m1 0h1m1 0h1m2 0h2m18 0h1m12 0h2m5 0h2m17 0h1m22 0h1m9 0h3m1 0h6m12 0h1m10 0h1m1 0h1m3 0h1m12 0h1m7 0h1m15 0h1m9 0h2m3 0h5m2 0h2m1 0h1m17 0h1m2 0h2m16 0h3m1 0h1m2 0h1m5 0h1m8 0h1m1 0h1m5 0h8m1 0h1m11 0h1m4 0h1m25 0h1m15 0h1m3 0h2m2 0h1m1 0h2m4 0h1m9 0h1m3 0h1m11 0h1m4 0h1m2 0h1m1 0h1m2 0h2m1 0h2m1 0h1m12 0h1m7 0h3m1 0h2m1 0h1m1 0h1m8 0h1m28 0h1m-569 1h1m21 0h1m1 0h1m1 0h1m1 0h1m1 0h1m13 0h2m4 0h1m14 0h1m57 0h2m2 0h1m3 0h1m2 0h1m1 0h1m3 0h1m34 0h1m10 0h1m55 0h1m2 0h1m4 0h1m3 0h1m5 0h1m37 0h1m7 0h3m1 0h1m42 0h1m3 0h1m1 0h1m55 0h1m72 0h1m17 0h1m1 0h2m1 0h2m5 0h1m17 0h1m19 0h1m-596 1h1m3 0h1m2 0h1m1 0h2m5 0h3m24 0h1m8 0h1m5 0h1m34 0h1m1 0h3m12 0h2m1 0h2m1 0h5m10 0h1m3 0h2m1 0h2m3 0h1m1 0h5m2 0h5m2 0h1m21 0h3m1 0h1m8 0h2m4 0h1m3 0h1m2 0h3m10 0h1m16 0h1m2 0h1m1 0h2m1 0h2m24 0h1m1 0h1m5 0h1m2 0h1m3 0h1m5 0h1m4 0h1m22 0h1m6 0h2m33 0h2m16 0h1m1 0h3m15 0h1m3 0h1m1 0h1m1 0h1m1 0h7m2 0h1m10 0h2m3 0h2m1 0h4m4 0h1m2 0h1m7 0h1m4 0h2m2 0h1m19 0h4m2 0h1m18 0h4m5 0h1m3 0h1m7 0h8m40 0h3m1 0h2m1 0h1m19 0h1m-543 1h1m101 0h1m109 0h1m7 0h1m13 0h2m7 0h1m78 0h1m103 0h1m2 0h1m6 0h2m1 0h2m1 0h2m1 0h1m16 0h1m16 0h2m3 0h1m19 0h1m20 0h1m-587 1h1m2 0h1m7 0h1m1 0h1m6 0h1m22 0h1m3 0h1m3 0h1m2 0h1m1 0h1m3 0h1m16 0h3m2 0h1m2 0h1m1 0h2m5 0h1m1 0h1m1 0h1m1 0h2m1 0h3m14 0h1m3 0h1m30 0h2m1 0h5m16 0h1m1 0h1m8 0h1m6 0h1m2 0h2m1 0h1m1 0h2m1 0h1m1 0h1m2 0h1m20 0h1m11 0h2m3 0h4m1 0h1m2 0h1m3 0h1m33 0h3m2 0h2m2 0h1m1 0h3m1 0h1m1 0h3m1 0h1m4 0h3m12 0h4m1 0h3m1 0h1m1 0h1m3 0h2m31 0h1m15 0h1m19 0h2m12 0h2m4 0h1m19 0h1m3 0h1m1 0h3m2 0h1m8 0h1m37 0h1m31 0h1m14 0h1m10 0h1m1 0h1m1 0h1m5 0h2m2 0h2m5 0h1m-598 1h1m1 0h1m16 0h1m44 0h1m1 0h1m2 0h4m1 0h1m6 0h1m5 0h1m1 0h1m1 0h1m3 0h1m11 0h1m4 0h1m4 0h1m6 0h1m2 0h1m1 0h1m2 0h6m1 0h1m1 0h2m1 0h1m16 0h1m12 0h2m2 0h1m5 0h1m20 0h1m1 0h1m7 0h2m1 0h2m1 0h1m1 0h1m1 0h2m2 0h1m6 0h1m38 0h3m1 0h1m1 0h1m42 0h1m30 0h1m6 0h1m4 0h2m3 0h1m1 0h1m4 0h1m1 0h2m16 0h1m4 0h1m1 0h1m2 0h1m1 0h1m1 0h1m5 0h1m2 0h1m4 0h3m7 0h1m5 0h2m1 0h2m1 0h1m2 0h1m8 0h1m14 0h4m1 0h1m2 0h1m4 0h1m14 0h1m1 0h4m6 0h1m3 0h2m4 0h3m2 0h1m1 0h1m6 0h2m9 0h1m11 0h1m11 0h1m1 0h1m4 0h1"/><path stroke="#0000c1" d="M91 166h2m30 0h1m5 0h1m3 0h2m8 0h1m9 0h2m47 0h1m19 0h1m12 0h1m22 0h1m11 0h1m20 0h1m13 0h1m39 0h1m14 0h3m3 0h2m10 0h1m18 0h1m12 0h1m34 0h1m19 0h1m23 0h1m3 0h2m8 0h1m1 0h1m16 0h1m1 0h1m17 0h1m4 0h1m17 0h1m15 0h1m7 0h1m14 0h2m40 0h1m45 0h1m-582 1h1m66 0h1m2 0h1m16 0h1m19 0h1m1 0h1m11 0h2m3 0h1m15 0h1m13 0h1m1 0h1m2 0h1m5 0h1m72 0h1m18 0h1m1 0h1m60 0h1m39 0h1m37 0h1m1 0h1m14 0h1m3 0h1m15 0h1m2 0h1m17 0h1m78 0h1m11 0h1m2 0h1m11 0h1m-590 1h1m16 0h1m12 0h1m12 0h1m12 0h1m27 0h1m16 0h1m15 0h1m3 0h1m2 0h1m19 0h1m23 0h1m71 0h1m13 0h1m9 0h1m18 0h1m6 0h1m1 0h1m52 0h1m4 0h1m1 0h1m33 0h1m16 0h1m45 0h1m6 0h1m6 0h1m13 0h1m1 0h1m4 0h1m18 0h1m7 0h1m14 0h1m5 0h1m22 0h1m4 0h1m3 0h1m1 0h1m6 0h1m9 0h1m2 0h1m18 0h1m-601 1h1m18 0h1m12 0h1m23 0h1m17 0h1m10 0h1m6 0h1m8 0h1m4 0h2m3 0h1m11 0h1m7 0h1m12 0h1m1 0h1m18 0h1m12 0h2m13 0h1m13 0h1m1 0h1m6 0h2m13 0h1m14 0h1m7 0h1m10 0h1m10 0h1m2 0h1m4 0h1m1 0h1m5 0h1m13 0h1m13 0h1m34 0h1m44 0h1m1 0h1m11 0h1m3 0h1m5 0h1m32 0h1m19 0h1m4 0h1m4 0h1m12 0h1m9 0h1m1 0h2m1 0h1m1 0h1m7 0h1m15 0h2m20 0h1m6 0h2m19 0h1m-549 1h1m19 0h1m63 0h1m1 0h1m51 0h1m6 0h1m61 0h1m20 0h1m28 0h1m140 0h1m29 0h1m55 0h1m-528 1h1m5 0h1m14 0h2m9 0h2m1 0h1m4 0h1m3 0h1m20 0h1m5 0h1m7 0h1m7 0h1m3 0h1m1 0h1m5 0h1m1 0h1m2 0h1m12 0h1m4 0h1m11 0h2m9 0h1m3 0h1m1 0h1m1 0h1m8 0h1m4 0h1m2 0h1m5 0h1m18 0h1m3 0h1m3 0h1m2 0h1m6 0h1m53 0h1m8 0h1m15 0h1m21 0h1m15 0h1m10 0h2m18 0h1m13 0h1m13 0h1m5 0h1m4 0h1m2 0h1m10 0h1m2 0h1m11 0h1m21 0h1m6 0h1m19 0h1m3 0h1m25 0h1m10 0h1m3 0h1m13 0h1m2 0h1m10 0h1m1 0h1m13 0h1m1 0h1m15 0h1m4 0h1m1 0h1m3 0h2m-600 1h1m20 0h1m4 0h1m2 0h1m3 0h1m7 0h1m36 0h1m37 0h1m8 0h2m17 0h1m3 0h1m28 0h1m2 0h1m1 0h1m13 0h1m9 0h1m26 0h1m9 0h1m5 0h1m6 0h1m5 0h1m10 0h1m8 0h1m2 0h1m15 0h1m4 0h1m40 0h1m56 0h1m15 0h1m9 0h1m24 0h1m14 0h1m1 0h1m4 0h1m24 0h1m6 0h1m1 0h1m2 0h2m2 0h2m7 0h1m46 0h1m9 0h1m5 0h1m9 0h1m1 0h1m-586 1h1m31 0h1m17 0h1m6 0h1m12 0h1m5 0h1m1 0h1m2 0h1m4 0h1m16 0h1m7 0h1m7 0h1m9 0h1m11 0h1m7 0h1m2 0h1m4 0h1m1 0h1m13 0h1m3 0h1m16 0h1m1 0h1m34 0h1m34 0h1m2 0h2m10 0h1m3 0h1m6 0h1m22 0h1m24 0h1m15 0h1m8 0h1m8 0h1m18 0h1m4 0h1m16 0h1m15 0h1m11 0h1m18 0h1m4 0h1m2 0h1m3 0h1m11 0h1m4 0h1m11 0h1m5 0h1m1 0h1m2 0h1m20 0h1m9 0h1m10 0h1m9 0h1m1 0h1m8 0h1m8 0h1m-602 1h1m16 0h1m17 0h1m2 0h2m4 0h1m7 0h1m3 0h1m24 0h1m22 0h1m2 0h1m23 0h1m9 0h1m51 0h1m4 0h1m7 0h1m9 0h1m25 0h1m10 0h1m23 0h1m19 0h1m10 0h1m2 0h1m12 0h1m12 0h1m23 0h1m13 0h1m35 0h1m36 0h1m2 0h1m8 0h2m35 0h1m53 0h1m1 0h1m11 0h3m6 0h1m1 0h1m5 0h1m4 0h1m9 0h1m-590 1h2m15 0h1m6 0h1m26 0h1m19 0h1m34 0h1m1 0h1m48 0h1m11 0h1m5 0h1m15 0h1m2 0h1m1 0h1m12 0h2m26 0h1m23 0h1m5 0h1m64 0h1m38 0h1m5 0h1m5 0h1m12 0h1m5 0h1m4 0h1m4 0h1m23 0h1m8 0h1m25 0h1m5 0h1m4 0h1m25 0h1m23 0h1m9 0h1m6 0h1m5 0h1m22 0h1m5 0h1m7 0h1m-610 1h1m6 0h1m7 0h1m11 0h1m14 0h1m1 0h1m16 0h1m10 0h1m8 0h1m12 0h1m5 0h1m1 0h1m21 0h1m82 0h1m55 0h2m21 0h1m3 0h1m4 0h1m12 0h1m8 0h1m5 0h1m9 0h2m11 0h1m31 0h1m25 0h1m1 0h2m4 0h1m9 0h1m8 0h1m8 0h1m1 0h1m17 0h1m22 0h1m3 0h1m8 0h1m1 0h1m7 0h1m3 0h1m12 0h1m6 0h1m13 0h1m15 0h1m3 0h1m15 0h1m15 0h1m10 0h1m-604 1h1m11 0h2m6 0h1m5 0h1m10 0h1m9 0h1m1 0h1m6 0h1m19 0h1m4 0h1m2 0h1m9 0h2m4 0h1m5 0h1m12 0h1m5 0h1m1 0h1m5 0h2m1 0h1m3 0h1m9 0h1m5 0h1m11 0h1m1 0h1m11 0h1m5 0h1m3 0h1m5 0h1m6 0h1m10 0h1m33 0h1m18 0h1m2 0h1m2 0h1m4 0h1m19 0h1m1 0h1m21 0h1m11 0h1m3 0h1m12 0h1m40 0h1m18 0h1m19 0h1m15 0h1m22 0h1m14 0h1m2 0h1m19 0h1m3 0h2m1 0h1m9 0h2m26 0h1m8 0h1m6 0h1m2 0h1m2 0h2m17 0h1m8 0h2m-604 1h1m10 0h1m31 0h1m5 0h1m21 0h1m23 0h1m22 0h2m1 0h1m21 0h1m17 0h1m7 0h1m67 0h1m20 0h1m21 0h1m17 0h1m1 0h1m12 0h1m2 0h1m18 0h1m41 0h1m15 0h1m6 0h1m4 0h1m6 0h1m4 0h1m71 0h1m7 0h1m61 0h1m13 0h1m11 0h1m-567 1h1m4 0h1m1 0h1m13 0h1m1 0h1m1 0h2m21 0h1m48 0h1m3 0h1m3 0h1m6 0h1m5 0h1m2 0h1m6 0h1m19 0h1m4 0h1m5 0h2m3 0h1m13 0h1m2 0h1m1 0h1m2 0h2m6 0h1m5 0h1m8 0h1m15 0h1m2 0h2m8 0h1m3 0h1m2 0h1m1 0h2m4 0h1m14 0h1m14 0h2m18 0h1m1 0h3m6 0h1m8 0h1m1 0h1m21 0h1m4 0h1m13 0h1m11 0h1m8 0h1m3 0h1m2 0h1m14 0h1m1 0h1m15 0h1m6 0h1m15 0h2m1 0h1m4 0h1m1 0h1m4 0h1m2 0h1m28 0h1m4 0h1m7 0h1m27 0h1m12 0h1m19 0h1m12 0h1m-613 1h1m9 0h1m7 0h1m21 0h1m26 0h1m19 0h1m8 0h1m4 0h1m7 0h1m4 0h2m34 0h1m2 0h1m8 0h1m9 0h2m51 0h1m32 0h1m27 0h1m4 0h1m3 0h1m34 0h1m21 0h1m49 0h1m5 0h2m19 0h1m5 0h1m6 0h1m3 0h1m51 0h1m1 0h1m2 0h1m10 0h2m3 0h2m16 0h1m8 0h1m16 0h1m13 0h2m3 0h1m10 0h2m-586 1h1m25 0h1m8 0h1m37 0h1m34 0h2m9 0h1m1 0h1m2 0h1m6 0h1m14 0h1m29 0h1m20 0h1m10 0h2m38 0h1m8 0h2m2 0h1m2 0h1m1 0h1m9 0h1m23 0h1m5 0h1m3 0h1m3 0h1m9 0h1m8 0h1m10 0h1m12 0h1m12 0h1m36 0h1m8 0h2m10 0h1m12 0h1m8 0h1m28 0h1m4 0h2m13 0h1m23 0h2m4 0h1m33 0h1m14 0h1m19 0h1m-588 1h1m7 0h2m19 0h1m24 0h1m23 0h1m2 0h1m10 0h1m2 0h1m13 0h1m15 0h1m6 0h1m3 0h1m10 0h1m43 0h1m3 0h1m5 0h1m6 0h1m13 0h1m48 0h1m38 0h2m14 0h1m5 0h1m20 0h1m28 0h1m10 0h1m7 0h1m40 0h1m15 0h1m17 0h1m17 0h1m4 0h1m7 0h1m18 0h1m1 0h1m14 0h1m9 0h2m2 0h1m20 0h1m12 0h2m-606 1h1m6 0h1m26 0h1m27 0h1m20 0h1m16 0h1m9 0h2m7 0h1m1 0h1m8 0h2m11 0h1m11 0h1m50 0h1m3 0h1m6 0h1m39 0h1m11 0h1m26 0h1m21 0h1m16 0h1m7 0h1m28 0h1m13 0h1m7 0h1m23 0h1m11 0h1m30 0h1m52 0h1m11 0h1m2 0h1m34 0h1m4 0h1m1 0h1m5 0h1m8 0h1m-591 1h1m7 0h1m8 0h1m5 0h1m16 0h1m54 0h1m15 0h1m6 0h2m30 0h1m2 0h1m28 0h1m3 0h1m4 0h1m10 0h1m8 0h1m6 0h1m1 0h1m21 0h2m6 0h1m32 0h2m18 0h1m34 0h1m24 0h1m6 0h1m8 0h1m7 0h1m15 0h1m8 0h1m77 0h1m7 0h1m12 0h1m25 0h1m29 0h1m6 0h1m5 0h1m-578 1h1m9 0h1m23 0h1m49 0h1m26 0h1m6 0h1m84 0h1m5 0h1m40 0h1m4 0h1m2 0h1m9 0h1m23 0h1m20 0h1m5 0h1m4 0h1m7 0h1m14 0h1m4 0h1m78 0h1m11 0h1m18 0h1m10 0h1m26 0h1m2 0h1m14 0h1m21 0h1m24 0h1m7 0h1m4 0h2m3 0h1m3 0h1m-542 1h1m10 0h1m3 0h1m36 0h1m2 0h1m24 0h1m23 0h1m3 0h1m13 0h1m39 0h1m3 0h1m2 0h1m24 0h1m12 0h1m2 0h1m7 0h1m15 0h1m19 0h1m39 0h1m24 0h1m47 0h1m20 0h1m9 0h1m110 0h1m14 0h1m18 0h1m-590 1h1m9 0h1m21 0h1m23 0h1m2 0h1m10 0h1m13 0h1m19 0h1m23 0h1m4 0h2m31 0h1m3 0h1m6 0h1m16 0h1m12 0h1m1 0h1m20 0h1m16 0h1m2 0h1m4 0h1m9 0h1m16 0h1m28 0h2m7 0h1m14 0h1m1 0h1m28 0h1m9 0h1m23 0h1m7 0h1m34 0h1m12 0h1m43 0h1m10 0h1m2 0h1m3 0h1m13 0h1m7 0h1m5 0h1m18 0h1m10 0h1m2 0h1m23 0h1m-591 1h1m13 0h1m19 0h1m1 0h1m24 0h1m4 0h1m10 0h1m7 0h1m19 0h2m16 0h1m2 0h1m64 0h1m7 0h1m23 0h1m2 0h2m10 0h1m4 0h1m2 0h1m19 0h1m52 0h1m7 0h1m9 0h1m59 0h1m7 0h1m3 0h1m39 0h1m17 0h1m7 0h1m14 0h1m16 0h1m5 0h2m27 0h1m14 0h2m-551 1h2m33 0h1m14 0h1m9 0h1m6 0h1m15 0h1m1 0h1m14 0h1m2 0h1m9 0h1m23 0h1m34 0h1m6 0h1m68 0h1m15 0h1m11 0h1m3 0h1m2 0h1m12 0h1m17 0h1m11 0h1m25 0h1m2 0h1m19 0h1m23 0h1m21 0h1m4 0h1m8 0h1m1 0h1m43 0h1m43 0h2m28 0h2m-572 1h1m5 0h1m4 0h1m6 0h1m22 0h1m42 0h1m1 0h1m5 0h1m27 0h1m2 0h1m10 0h1m23 0h1m8 0h1m30 0h1m17 0h1m17 0h1m6 0h1m2 0h1m10 0h1m8 0h1m5 0h1m2 0h2m7 0h1m39 0h1m144 0h1m2 0h1m5 0h1m1 0h1m10 0h1m22 0h1m4 0h1m3 0h1m11 0h1m42 0h1m19 0h1m-567 1h1m15 0h1m6 0h1m17 0h1m41 0h1m2 0h1m21 0h1m21 0h1m5 0h1m8 0h1m24 0h1m29 0h1m17 0h1m12 0h1m16 0h1m4 0h1m12 0h1m1 0h1m16 0h1m8 0h1m6 0h1m35 0h1m21 0h2m25 0h1m11 0h1m87 0h1m1 0h1m9 0h1m42 0h1m3 0h1m-587 1h1m19 0h1m16 0h1m2 0h1m11 0h1m58 0h1m8 0h1m5 0h1m32 0h1m24 0h1m60 0h1m8 0h1m19 0h1m155 0h1m4 0h2m24 0h1m5 0h1m9 0h1m3 0h1m5 0h1m17 0h1m5 0h1m3 0h1m3 0h1m1 0h1m9 0h2m2 0h1m21 0h1m9 0h1m26 0h1m2 0h1m-589 1h1m8 0h1m12 0h1m25 0h1m8 0h1m14 0h1m1 0h1m15 0h1m6 0h1m14 0h1m7 0h1m75 0h1m46 0h1m43 0h1m10 0h1m25 0h1m6 0h1m24 0h1m5 0h1m6 0h1m33 0h1m8 0h1m34 0h1m36 0h1m4 0h1m18 0h1m2 0h1m24 0h1m27 0h1m8 0h1m20 0h1m-550 1h1m17 0h1m3 0h1m16 0h1m1 0h1m36 0h1m16 0h1m1 0h1m11 0h1m25 0h1m7 0h1m4 0h1m58 0h1m12 0h1m16 0h1m32 0h1m17 0h1m21 0h1m25 0h1m19 0h1m25 0h1m1 0h1m13 0h1m47 0h1m10 0h1m14 0h2m11 0h1m67 0h1m-578 1h1m9 0h1m30 0h1m45 0h1m3 0h1m1 0h1m9 0h1m18 0h1m21 0h1m60 0h1m24 0h1m45 0h1m2 0h1m7 0h2m38 0h1m23 0h1m3 0h1m9 0h1m5 0h1m5 0h1m4 0h2m1 0h1m7 0h1m6 0h1m17 0h1m21 0h2m6 0h1m1 0h1m4 0h1m33 0h1m2 0h1m40 0h1m9 0h1m8 0h1m1 0h1m18 0h1m4 0h1m-603 1h1m4 0h1m6 0h1m38 0h1m14 0h1m3 0h1m2 0h1m15 0h1m3 0h1m1 0h1m14 0h1m14 0h1m19 0h1m23 0h1m25 0h1m2 0h1m61 0h1m35 0h1m21 0h1m1 0h1m19 0h1m2 0h1m29 0h1m34 0h1m28 0h1m18 0h1m26 0h1m21 0h1m9 0h1m2 0h1m2 0h1m43 0h1m3 0h1m34 0h1m-610 1h1m6 0h1m18 0h1m5 0h1m15 0h1m11 0h1m2 0h2m2 0h1m5 0h1m9 0h1m20 0h1m18 0h1m41 0h1m3 0h2m6 0h1m2 0h1m17 0h1m13 0h1m9 0h1m12 0h1m23 0h1m11 0h1m49 0h1m20 0h1m81 0h1m31 0h1m29 0h1m17 0h1m27 0h1m50 0h1m-583 1h1m3 0h1m29 0h1m4 0h1m25 0h1m1 0h1m55 0h1m7 0h1m17 0h2m34 0h1m10 0h1m12 0h1m7 0h2m33 0h1m85 0h1m8 0h1m11 0h1m19 0h1m2 0h1m11 0h1m8 0h1m8 0h1m15 0h1m7 0h1m9 0h1m13 0h1m30 0h1m33 0h1m3 0h1m21 0h1m13 0h1m29 0h1m-589 1h1m3 0h1m15 0h1m1 0h1m5 0h1m26 0h1m6 0h1m12 0h1m21 0h1m17 0h1m32 0h1m15 0h3m48 0h1m71 0h1m5 0h1m7 0h1m10 0h1m6 0h1m23 0h1m40 0h1m24 0h1m4 0h1m63 0h1m4 0h1m5 0h1m9 0h1m10 0h1m13 0h1m24 0h1m1 0h1m20 0h1m2 0h1m7 0h1m-577 1h1m8 0h1m9 0h1m18 0h1m10 0h1m2 0h1m56 0h1m2 0h1m8 0h1m27 0h1m46 0h1m4 0h1m42 0h1m13 0h1m39 0h1m15 0h1m3 0h1m7 0h1m71 0h1m12 0h1m4 0h1m8 0h1m30 0h1m9 0h1m10 0h1m8 0h1m2 0h1m9 0h1m35 0h1m23 0h1m-576 1h1m30 0h1m1 0h1m9 0h1m11 0h1m6 0h1m18 0h1m17 0h1m19 0h1m51 0h1m9 0h1m10 0h1m5 0h1m9 0h1m7 0h1m46 0h2m37 0h1m38 0h1m30 0h1m12 0h1m24 0h1m17 0h1m9 0h1m35 0h1m12 0h1m9 0h1m1 0h2m17 0h1m12 0h1m39 0h1m1 0h1m10 0h1m10 0h1m10 0h1m-593 1h1m25 0h1m33 0h1m4 0h2m25 0h1m17 0h1m3 0h1m27 0h1m47 0h1m12 0h1m9 0h1m16 0h1m2 0h1m9 0h1m14 0h1m8 0h1m36 0h1m16 0h1m4 0h1m20 0h1m16 0h1m8 0h1m2 0h2m47 0h1m53 0h1m2 0h1m9 0h1m13 0h1m24 0h1m46 0h1m10 0h1m7 0h1m-595 1h1m7 0h1m19 0h2m19 0h1m1 0h1m9 0h1m14 0h1m4 0h1m8 0h1m18 0h2m1 0h1m1 0h1m4 0h1m33 0h1m43 0h1m4 0h1m26 0h1m11 0h1m70 0h1m17 0h1m27 0h1m29 0h1m4 0h1m9 0h1m9 0h1m9 0h1m19 0h1m1 0h1m22 0h1m13 0h1m48 0h1m24 0h1m12 0h1m-581 1h1m6 0h1m23 0h1m17 0h1m18 0h1m7 0h1m2 0h1m19 0h1m13 0h1m18 0h1m12 0h1m7 0h1m32 0h1m23 0h1m27 0h1m10 0h1m3 0h1m1 0h1m4 0h1m10 0h1m16 0h1m105 0h1m13 0h1m10 0h1m15 0h1m6 0h1m12 0h1m33 0h1m29 0h1m14 0h1m21 0h1m-560 1h1m110 0h1m13 0h1m47 0h1m14 0h1m38 0h1m69 0h1m77 0h1m42 0h1m12 0h1m4 0h1m11 0h1m13 0h1m2 0h1m27 0h1m18 0h1m23 0h1m71 0h1m-613 1h1m12 0h1m42 0h1m5 0h2m22 0h1m26 0h1m21 0h1m20 0h1m23 0h1m3 0h1m2 0h1m9 0h1m15 0h1m26 0h1m44 0h1m10 0h2m12 0h1m33 0h1m22 0h1m22 0h1m4 0h1m24 0h1m10 0h1m1 0h1m5 0h1m18 0h1m30 0h1m6 0h1m32 0h1m33 0h1m23 0h1m-560 1h1m76 0h1m48 0h1m23 0h1m47 0h1m5 0h1m24 0h1m16 0h1m105 0h1m29 0h1m52 0h1m79 0h1m37 0h1m-583 1h1m23 0h1m20 0h2m9 0h1m61 0h1m85 0h1m31 0h1m27 0h1m16 0h1m32 0h1m73 0h1m2 0h1m13 0h1m69 0h1m16 0h1m75 0h1m3 0h1m-557 1h1m267 0h1m72 0h1m93 0h1m44 0h1m-482 1h1m193 0h1m30 0h1m220 0h1m4 0h1m36 0h1m-495 1h1m159 0h1m50 0h1m82 0h1m67 0h1m79 0h1m159 0h1m-367 1h1m228 0h1m-267 1h1m43 0h1m2 0h1m38 0h1m151 0h1m4 0h1m26 0h1m32 0h1m46 0h1m-550 2h1m86 0h1m138 0h1m33 0h1m93 0h1m40 0h1m23 0h1m9 0h1m12 0h1m124 0h1m-357 1h1m-212 1h1m50 0h1m302 0h1m110 0h1m-475 2h1m3 0h4m4 0h1m1 0h1m1 0h5m1 0h2m1 0h2m2 0h1m1 0h2m3 0h2m2 0h5m2 0h3m3 0h3m5 0h1m1 0h1m2 0h3m1 0h1m2 0h2m1 0h1m1 0h1m1 0h1m1 0h1m5 0h1m3 0h2m1 0h2m1 0h2m1 0h4m1 0h3m2 0h2m1 0h1m3 0h2m3 0h2m1 0h2m1 0h2m7 0h4m1 0h1m7 0h1m1 0h1m3 0h3m2 0h1m3 0h1m1 0h1m1 0h1m11 0h1m3 0h8m1 0h1m2 0h1m1 0h6m3 0h2m1 0h1m1 0h2m2 0h2m1 0h1m4 0h1m2 0h2m1 0h2m1 0h4m6 0h3m3 0h4m1 0h2m1 0h1m2 0h1m1 0h2m1 0h1m1 0h1m2 0h1m2 0h1m6 0h1m2 0h1m1 0h1m2 0h1m1 0h9m7 0h1m2 0h4m5 0h4m3 0h1m1 0h1m1 0h1m2 0h1m1 0h1m1 0h4m1 0h2m1 0h2m1 0h1m1 0h2m4 0h2m4 0h1m1 0h1m1 0h2m1 0h3m1 0h2m2 0h3m2 0h1m1 0h3m2 0h2m1 0h1m1 0h1m1 0h1m3 0h1m1 0h1m1 0h3m2 0h2m1 0h1m1 0h1m3 0h3m2 0h1m1 0h5m1 0h2m1 0h2m3 0h2m7 0h1m2 0h2m4 0h1m1 0h1m3 0h1m1 0h3m1 0h1m2 0h1m6 0h1m1 0h1m1 0h1m1 0h2m2 0h3m1 0h3m3 0h1m1 0h2m4 0h1m3 0h3m3 0h5m2 0h2m4 0h1m3 0h2m5 0h3m5 0h1m1 0h1m1 0h2m1 0h3m3 0h1m2 0h2m4 0h1m2 0h3m1 0h1m1 0h1m4 0h3m3 0h1m2 0h6m1 0h1m2 0h1m1 0h4m-596 1h1m44 0h1m-52 4h1m206 0h1m221 1h1m-223 1h1m376 0h1m-479 2h1m144 0h1m-149 2h1m-111 2h1m322 0h1m-324 2h1m57 0h1m264 0h1m91 0h1m33 2h1m-14 1h1m-327 1h1m-104 1h1m161 0h1m67 0h1m198 0h1m-379 1h1m-52 1h1m315 0h1m263 0h1m-139 2h1m-392 1h1m-53 1h1m204 2h1m-43 1h1m71 0h1m30 0h1m44 1h1m5 0h1m-266 1h1m51 3h1m58 0h1m153 0h1m-266 1h1m-53 1h1m204 1h1m-206 1h1m103 0h1m-105 2h1m103 0h1m161 1h1m50 0h1m-266 2h1m213 0h1m-163 1h1m126 0h1m70 0h1m-292 1h1m6 0h1m31 0h1m17 0h1m12 0h1m90 0h1m33 0h1m4 0h1m42 0h1m45 0h1m2 0h1m7 0h1m3 0h1m4 0h1m10 0h1m17 0h1m88 0h1m36 0h1m2 0h2m13 0h1m6 0h1m19 0h1m10 0h1m47 0h1m6 0h1m-593 1h1m1 0h2m6 0h1m1 0h1m3 0h1m4 0h1m4 0h1m2 0h1m1 0h1m1 0h3m1 0h1m1 0h4m5 0h2m1 0h1m3 0h1m1 0h1m2 0h1m2 0h1m2 0h1m10 0h1m7 0h1m3 0h2m4 0h1m3 0h1m3 0h2m6 0h1m4 0h1m2 0h1m1 0h1m5 0h1m4 0h2m4 0h1m3 0h3m1 0h1m1 0h3m4 0h1m2 0h1m2 0h1m4 0h3m1 0h1m4 0h1m1 0h1m2 0h1m1 0h1m1 0h1m8 0h3m9 0h1m4 0h1m9 0h2m6 0h1m19 0h1m4 0h1m9 0h1m13 0h1m11 0h3m5 0h1m1 0h1m4 0h1m14 0h1m4 0h2m4 0h1m1 0h2m2 0h1m4 0h1m5 0h1m5 0h1m5 0h1m4 0h1m1 0h1m9 0h1m1 0h2m2 0h1m3 0h2m25 0h1m5 0h2m2 0h1m2 0h1m3 0h1m6 0h1m3 0h1m6 0h1m8 0h2m2 0h1m2 0h1m1 0h2m1 0h1m2 0h3m1 0h1m1 0h1m7 0h2m4 0h2m1 0h1m5 0h1m3 0h1m4 0h1m1 0h3m2 0h1m29 0h1m2 0h1m4 0h3m2 0h1m2 0h1m5 0h1m1 0h1m1 0h1m15 0h2m3 0h1m2 0h1m4 0h2m4 0h1m-602 1h1m127 0h1m123 0h1m2 0h1m4 0h1m4 0h1m37 0h1m72 0h1m1 0h1m13 0h1m2 0h2m1 0h1m1 0h1m112 0h1m37 0h2m1 0h1m19 0h1m1 0h1m-498 1h1m108 0h1m105 0h1m2 0h1m1 0h2m60 0h1m6 0h1m80 0h3m2 0h1m2 0h2m16 0h2m1 0h1m1 0h1m-429 1h1m1 0h1m4 0h1m49 0h1m4 0h1m3 0h1m23 0h1m7 0h1m62 0h1m2 0h1m2 0h1m7 0h1m43 0h1m1 0h1m4 0h1m1 0h1m32 0h1m20 0h1m4 0h1m253 0h2m-500 1h1m25 0h1m2 0h1m1 0h1m1 0h1m75 0h1m37 0h1m14 0h1m9 0h1m23 0h1m62 0h1m181 0h1m29 0h1m2 0h1m-579 1h1m1 0h1m2 0h1m14 0h1m1 0h1m35 0h1m3 0h1m4 0h2m1 0h1m3 0h1m1 0h1m1 0h1m8 0h3m5 0h1m5 0h1m20 0h2m1 0h1m8 0h1m1 0h1m2 0h2m1 0h3m8 0h1m2 0h5m4 0h1m2 0h2m12 0h1m7 0h1m1 0h2m1 0h2m4 0h2m4 0h1m3 0h2m1 0h1m3 0h2m1 0h1m4 0h1m3 0h1m10 0h1m3 0h1m6 0h1m3 0h1m15 0h1m2 0h1m1 0h1m5 0h2m1 0h2m10 0h1m4 0h1m2 0h1m1 0h1m4 0h1m11 0h2m1 0h3m3 0h1m5 0h1m1 0h2m1 0h1m2 0h1m2 0h1m2 0h2m1 0h1m6 0h2m1 0h1m2 0h1m3 0h1m3 0h1m8 0h1m9 0h1m5 0h2m3 0h1m4 0h1m1 0h2m7 0h2m1 0h1m2 0h2m4 0h2m1 0h1m1 0h2m6 0h1m5 0h2m1 0h1m3 0h2m5 0h2m2 0h1m7 0h2m7 0h1m3 0h1m3 0h1m1 0h1m10 0h1m2 0h2m3 0h1m2 0h1m5 0h1m4 0h3m12 0h1m1 0h1m4 0h1m1 0h1m3 0h1m1 0h2m1 0h1m9 0h1m2 0h1m3 0h1m2 0h2m6 0h1m2 0h1m7 0h2m2 0h1m-587 1h1m100 0h1m21 0h1m58 0h1m25 0h1m53 0h1m96 0h1m28 0h2m33 0h1m33 0h1m64 0h1m42 0h1m23 0h1m-612 1h1m4 0h2m1 0h2m3 0h1m1 0h2m3 0h2m1 0h2m1 0h6m2 0h4m1 0h1m2 0h3m1 0h3m2 0h5m5 0h1m1 0h1m3 0h1m1 0h1m2 0h1m1 0h1m1 0h2m2 0h4m4 0h1m2 0h1m2 0h1m1 0h1m1 0h2m1 0h3m1 0h1m1 0h1m4 0h1m4 0h2m2 0h1m3 0h1m2 0h1m1 0h10m1 0h3m3 0h1m1 0h4m1 0h3m1 0h4m4 0h3m3 0h4m1 0h1m1 0h1m1 0h1m4 0h1m1 0h6m3 0h1m2 0h1m2 0h1m1 0h2m3 0h1m1 0h3m2 0h1m1 0h4m6 0h1m6 0h5m2 0h2m2 0h1m2 0h2m1 0h1m1 0h1m1 0h2m2 0h1m2 0h3m1 0h1m2 0h1m3 0h1m2 0h2m3 0h1m1 0h1m3 0h1m1 0h1m1 0h1m2 0h1m1 0h1m2 0h3m1 0h1m1 0h1m2 0h3m1 0h2m4 0h1m6 0h5m2 0h4m1 0h2m1 0h2m1 0h1m1 0h1m2 0h2m1 0h2m2 0h1m8 0h5m1 0h3m2 0h1m1 0h2m2 0h1m2 0h2m2 0h1m4 0h1m2 0h1m1 0h2m2 0h5m5 0h1m6 0h1m2 0h5m1 0h2m1 0h1m1 0h2m1 0h1m1 0h5m4 0h1m2 0h3m1 0h4m1 0h3m3 0h2m2 0h5m1 0h1m2 0h1m1 0h1m2 0h1m1 0h1m1 0h3m1 0h1m1 0h1m1 0h1m1 0h1m3 0h3m1 0h3m1 0h1m1 0h1m1 0h1m2 0h5m1 0h4m1 0h3m3 0h4m1 0h4m4 0h2m1 0h2m1 0h1m1 0h1m2 0h3m2 0h1m1 0h1m1 0h1m1 0h3m1 0h1m1 0h1m2 0h2m1 0h5m1 0h2m1 0h1m1 0h3m1 0h1m1 0h1m1 0h2m1 0h2m1 0h2m3 0h1m-603 1h1m6 0h1m47 0h1m136 0h1m5 0h1m251 0h1m94 0h1m2 0h1m33 0h1m-593 1h1m58 0h1m9 0h1m5 0h1m6 0h1m3 0h2m28 0h1m12 0h1m2 0h1m57 0h1m6 0h1m22 0h1m2 0h2m2 0h2m13 0h1m38 0h1m21 0h1m4 0h1m45 0h1m3 0h1m169 0h1m37 0h1m21 0h1m21 0h3m-598 1h1m200 0h1m44 0h1m5 0h1m73 0h1m18 0h1m2 0h1m160 0h1m-524 1h2m2 0h1m2 0h1m7 0h1m4 0h3m2 0h3m3 0h1m2 0h2m2 0h3m1 0h1m2 0h2m4 0h2m4 0h5m1 0h2m2 0h3m4 0h1m1 0h3m3 0h5m2 0h4m1 0h1m1 0h1m2 0h1m1 0h3m3 0h3m2 0h1m11 0h4m1 0h1m1 0h2m2 0h1m3 0h1m1 0h4m1 0h1m5 0h1m2 0h1m1 0h1m7 0h1m2 0h2m2 0h1m5 0h3m3 0h1m1 0h4m1 0h3m3 0h1m3 0h2m1 0h1m1 0h2m1 0h1m4 0h1m1 0h1m2 0h2m2 0h1m2 0h2m1 0h1m2 0h2m2 0h4m4 0h1m1 0h1m2 0h3m2 0h1m1 0h1m5 0h1m1 0h2m3 0h2m2 0h3m1 0h2m2 0h2m1 0h2m1 0h1m2 0h1m1 0h1m1 0h1m1 0h2m1 0h2m1 0h1m1 0h1m2 0h1m2 0h1m1 0h1m5 0h2m1 0h2m1 0h1m2 0h1m1 0h2m1 0h2m3 0h1m1 0h1m3 0h1m1 0h1m1 0h7m1 0h1m2 0h1m1 0h1m3 0h1m2 0h1m3 0h1m1 0h2m1 0h7m3 0h1m2 0h1m1 0h1m3 0h3m1 0h1m1 0h2m6 0h1m1 0h2m1 0h2m4 0h1m2 0h2m3 0h1m3 0h2m2 0h1m4 0h1m2 0h1m3 0h1m1 0h2m2 0h2m1 0h1m2 0h2m1 0h2m1 0h1m3 0h7m1 0h4m2 0h3m6 0h1m2 0h1m4 0h2m1 0h3m13 0h1m4 0h1m3 0h2m2 0h2m2 0h1m2 0h2m1 0h6m4 0h5m2 0h4m1 0h1m4 0h2m1 0h1m1 0h1m3 0h2m1 0h2m1 0h1m4 0h1m2 0h1m1 0h1m1 0h2m1 0h1m1 0h1m3 0h4m1 0h1m-613 1h1m110 0h1m37 0h1m2 0h1m1 0h1m17 0h1m2 0h1m1 0h1m103 0h1m34 0h1m102 0h1m3 0h1m2 0h1m16 0h1m148 0h2m-521 1h1m38 0h1m99 0h1m8 0h2m3 0h1m210 0h1m17 0h1m6 0h2m4 0h1m27 0h1m27 0h1m1 0h3m42 0h1m-524 1h2m1 0h1m2 0h1m2 0h1m110 0h1m20 0h1m101 0h1m3 0h1m105 0h2m5 0h1m12 0h2m4 0h1m21 0h2m7 0h1m12 0h1m61 0h1m3 0h1m-527 1h1m1 0h1m2 0h1m7 0h1m2 0h1m6 0h3m2 0h1m3 0h2m2 0h1m8 0h1m9 0h1m3 0h2m7 0h1m1 0h1m2 0h1m9 0h1m14 0h3m5 0h1m9 0h2m11 0h1m6 0h1m1 0h1m5 0h2m8 0h2m5 0h1m3 0h4m1 0h1m1 0h1m2 0h2m5 0h1m5 0h1m5 0h1m2 0h1m1 0h1m2 0h1m6 0h3m4 0h1m1 0h1m6 0h1m2 0h2m10 0h5m12 0h1m1 0h1m8 0h1m1 0h2m3 0h1m11 0h2m5 0h1m2 0h1m4 0h1m4 0h1m3 0h1m2 0h2m1 0h1m2 0h1m2 0h3m1 0h2m3 0h1m1 0h1m2 0h1m9 0h1m5 0h1m1 0h2m5 0h3m1 0h1m3 0h1m4 0h1m3 0h2m2 0h2m2 0h1m13 0h5m24 0h3m7 0h2m11 0h1m1 0h1m11 0h3m2 0h2m14 0h1m5 0h1m1 0h1m5 0h1m2 0h5m6 0h1m3 0h1m8 0h1m4 0h1m4 0h1m1 0h2m3 0h2m2 0h3m1 0h1m1 0h2m2 0h1m3 0h4m2 0h1m1 0h1m3 0h1m2 0h2m1 0h1m1 0h2m1 0h1m3 0h1m2 0h2m-605 1h1m2 0h1m9 0h1m2 0h2m1 0h1m23 0h1m3 0h1m1 0h1m2 0h2m13 0h1m2 0h3m3 0h1m7 0h2m4 0h1m5 0h3m4 0h1m1 0h2m12 0h1m1 0h2m6 0h2m3 0h1m4 0h1m4 0h1m5 0h1m1 0h1m4 0h2m3 0h1m2 0h1m5 0h1m8 0h1m6 0h1m6 0h1m9 0h2m3 0h1m12 0h1m5 0h2m25 0h1m4 0h1m9 0h1m2 0h1m2 0h1m6 0h1m2 0h2m6 0h1m3 0h1m1 0h1m7 0h2m29 0h2m1 0h1m1 0h2m8 0h1m2 0h3m7 0h1m27 0h1m3 0h1m1 0h1m4 0h1m1 0h2m9 0h3m2 0h1m5 0h1m2 0h1m9 0h2m2 0h1m6 0h2m5 0h1m1 0h1m3 0h4m3 0h1m10 0h1m7 0h1m1 0h2m4 0h1m17 0h1m2 0h1m13 0h1m4 0h1m3 0h2m30 0h2m13 0h1m4 0h1m1 0h1m1 0h1m3 0h2m2 0h2m-569 1h1m1 0h2m11 0h1m3 0h1m242 0h1m22 0h1m5 0h2m42 0h2m5 0h1m4 0h1m99 0h1m103 0h2m-598 1h1m2 0h1m4 0h1m11 0h1m4 0h1m65 0h2m123 0h1m38 0h1m54 0h1m60 0h1m1 0h1m5 0h1m30 0h2m3 0h2m33 0h1m18 0h1m12 0h1m5 0h2m9 0h1m33 0h1m-533 1h1m10 0h2m13 0h2m6 0h2m18 0h1m14 0h1m30 0h1m5 0h1m43 0h4m2 0h1m18 0h2m9 0h2m42 0h1m11 0h1m55 0h1m24 0h2m6 0h2m3 0h1m1 0h2m51 0h1m4 0h1m1 0h1m52 0h2m17 0h1m1 0h1m2 0h1m2 0h2m3 0h2m14 0h1m3 0h2m3 0h1m7 0h2m22 0h2m1 0h1m5 0h1m2 0h2m3 0h1m6 0h2m4 0h1m5 0h2m22 0h1m-404 1h1m375 0h1m-560 1h1m129 0h1m19 0h1m94 0h1m83 0h1m5 0h1m90 0h1m41 0h1m-422 1h2m2 0h1m34 0h1m7 0h1m61 0h1m36 0h1m31 0h1m1 0h1m1 0h1m3 0h1m76 0h1m2 0h1m13 0h2m9 0h1m51 0h1m2 0h1m91 0h3m17 0h1m35 0h1m46 0h1m7 0h3m-602 1h2m1 0h1m4 0h2m3 0h1m1 0h2m6 0h2m139 0h2m9 0h2m25 0h1m21 0h1m46 0h1m3 0h1m42 0h1m2 0h1m1 0h1m3 0h1m4 0h2m96 0h2m15 0h2m2 0h1m4 0h1m10 0h1m5 0h1m21 0h1m5 0h1m3 0h2m10 0h2m34 0h2m-529 1h1m13 0h1m56 0h2m1 0h1m2 0h1m5 0h1m6 0h1m142 0h1m2 0h1m35 0h1m161 0h1m2 0h1m119 0h1m2 0h1m-555 1h1m3 0h1m130 0h1m60 0h2m12 0h1m1 0h1m265 0h1m2 0h1m24 0h1m1 0h1m6 0h1m-560 1h1m1 0h1m3 0h4m6 0h1m6 0h1m6 0h1m2 0h1m5 0h1m1 0h1m1 0h1m1 0h2m2 0h1m1 0h2m3 0h1m1 0h1m1 0h4m3 0h3m2 0h3m1 0h5m1 0h1m4 0h1m2 0h1m1 0h3m1 0h1m1 0h1m2 0h1m1 0h4m1 0h2m13 0h4m2 0h1m1 0h1m1 0h6m1 0h1m3 0h3m1 0h2m3 0h2m2 0h1m1 0h5m1 0h1m2 0h1m1 0h1m3 0h1m5 0h1m1 0h3m6 0h2m3 0h1m1 0h1m1 0h1m1 0h1m1 0h2m3 0h4m4 0h3m2 0h3m4 0h1m1 0h3m1 0h3m1 0h1m4 0h2m2 0h2m1 0h1m3 0h1m6 0h1m2 0h1m1 0h2m3 0h1m1 0h1m4 0h1m2 0h1m1 0h1m7 0h5m1 0h1m2 0h4m3 0h3m1 0h1m2 0h1m5 0h1m1 0h1m2 0h3m4 0h1m2 0h1m5 0h1m11 0h2m1 0h1m1 0h1m1 0h1m3 0h2m2 0h2m4 0h1m5 0h1m1 0h1m1 0h6m2 0h3m1 0h7m3 0h1m1 0h2m1 0h1m1 0h4m2 0h2m1 0h1m3 0h4m1 0h3m1 0h1m1 0h1m1 0h2m1 0h3m1 0h1m1 0h9m4 0h1m1 0h2m1 0h1m2 0h1m1 0h1m2 0h2m5 0h1m7 0h1m3 0h3m1 0h2m3 0h1m5 0h1m1 0h3m1 0h1m4 0h1m3 0h1m2 0h1m5 0h1m2 0h2m2 0h3m4 0h1m1 0h1m1 0h1m1 0h1m1 0h1m7 0h1m6 0h4m1 0h4m3 0h3m1 0h1m3 0h1m1 0h6m6 0h4m1 0h5m-602 1h2m6 0h2m5 0h2m6 0h2m52 0h1m20 0h1m3 0h1m61 0h2m9 0h2m37 0h1m112 0h2m7 0h1m19 0h1m37 0h1m19 0h1m32 0h2m18 0h2m3 0h2m1 0h3m27 0h2m11 0h1m34 0h2m24 0h1m-540 1h3m18 0h1m2 0h2m34 0h1m3 0h1m23 0h1m23 0h4m35 0h1m3 0h2m106 0h1m2 0h1m8 0h1m7 0h1m45 0h1m2 0h1m70 0h1m71 0h1m64 0h2m1 0h1m-576 1h2m5 0h2m31 0h1m83 0h1m27 0h1m3 0h1m155 0h2m5 0h2m13 0h1m4 0h1m16 0h1m75 0h2m5 0h2m50 0h4m2 0h2m11 0h1m3 0h1m18 0h2m10 0h2m10 0h2m34 0h1m-600 1h1m106 0h1m3 0h1m78 0h2m3 0h1m11 0h1m3 0h1m10 0h1m56 0h2m126 0h1m53 0h1m-474 1h1m1 0h1m1 0h2m1 0h1m2 0h1m3 0h3m5 0h2m7 0h1m1 0h5m1 0h1m2 0h4m1 0h2m1 0h6m1 0h1m4 0h1m2 0h1m2 0h5m1 0h2m3 0h1m1 0h5m2 0h1m2 0h1m4 0h1m1 0h6m2 0h2m1 0h1m1 0h1m1 0h2m2 0h2m3 0h1m1 0h1m6 0h1m3 0h1m2 0h1m2 0h4m1 0h2m4 0h1m1 0h3m2 0h3m1 0h2m3 0h1m1 0h2m1 0h3m1 0h2m2 0h2m3 0h1m1 0h3m1 0h1m1 0h4m6 0h1m3 0h1m1 0h1m2 0h1m1 0h4m1 0h3m1 0h1m3 0h1m1 0h1m4 0h2m1 0h3m3 0h2m2 0h1m1 0h1m1 0h4m1 0h1m1 0h3m1 0h4m2 0h2m1 0h3m7 0h1m1 0h2m1 0h1m1 0h2m2 0h5m1 0h4m3 0h2m1 0h3m1 0h7m4 0h3m1 0h1m4 0h3m4 0h2m2 0h2m1 0h4m1 0h2m1 0h2m3 0h3m2 0h1m2 0h3m1 0h4m1 0h1m2 0h5m1 0h4m1 0h2m1 0h1m1 0h5m1 0h6m2 0h1m1 0h1m4 0h1m2 0h4m2 0h5m1 0h1m1 0h1m1 0h2m2 0h2m1 0h1m1 0h1m1 0h2m5 0h2m4 0h9m1 0h1m3 0h3m1 0h3m1 0h6m1 0h2m1 0h1m1 0h3m1 0h1m1 0h1m2 0h3m1 0h1m1 0h2m2 0h1m4 0h5m1 0h2m5 0h1m1 0h4m1 0h2m1 0h9m6 0h3m1 0h1m5 0h1m1 0h4m6 0h1m1 0h2m3 0h3m2 0h3m3 0h3m1 0h1m4 0h1m4 0h2m-606 1h1m103 0h1m69 0h1m6 0h1m155 0h1m-346 1h1m3 0h1m15 0h2m5 0h2m32 0h1m1 0h1m5 0h1m2 0h1m32 0h1m2 0h2m182 0h1m3 0h1m2 0h1m16 0h1m1 0h1m13 0h2m5 0h2m84 0h1m1 0h3m22 0h2m5 0h2m1 0h2m2 0h1m45 0h1m4 0h2m10 0h2m2 0h2m1 0h2m1 0h1m13 0h2m10 0h1m11 0h2m11 0h1m7 0h1m12 0h1m-562 1h1m4 0h1m84 0h1m73 0h1m2 0h1m46 0h1m3 0h2m67 0h1m83 0h1m11 0h3m2 0h2m50 0h1m6 0h1m70 0h1m26 0h1m12 0h1m-609 1h1m3 0h1m2 0h3m2 0h2m6 0h2m5 0h2m1 0h2m3 0h2m49 0h1m1 0h1m71 0h1m6 0h2m18 0h2m1 0h1m3 0h2m24 0h1m1 0h1m6 0h1m62 0h1m2 0h1m1 0h1m26 0h1m7 0h2m5 0h2m39 0h1m1 0h1m1 0h1m5 0h2m1 0h2m62 0h1m21 0h2m19 0h1m3 0h1m2 0h2m8 0h2m1 0h1m3 0h1m4 0h2m10 0h2m10 0h2m10 0h1m11 0h2m12 0h1m2 0h1m2 0h1m-231 1h1m33 0h1m1 0h1m1 0h1m3 0h1m73 0h2m25 0h1m16 0h1m-526 1h1m2 0h3m1 0h2m5 0h3m4 0h2m5 0h3m6 0h1m2 0h4m2 0h1m2 0h2m2 0h1m2 0h2m3 0h2m1 0h1m2 0h1m3 0h2m1 0h5m1 0h1m1 0h1m1 0h1m2 0h3m1 0h4m1 0h1m8 0h1m3 0h1m2 0h1m1 0h1m2 0h3m1 0h2m1 0h1m1 0h4m2 0h2m1 0h3m3 0h2m4 0h1m2 0h1m1 0h3m2 0h2m1 0h2m1 0h2m2 0h2m3 0h2m1 0h1m1 0h5m1 0h1m6 0h8m1 0h1m3 0h1m3 0h3m2 0h4m2 0h2m1 0h2m1 0h4m1 0h1m1 0h1m3 0h4m4 0h2m2 0h2m4 0h1m4 0h1m2 0h2m3 0h1m2 0h3m5 0h3m1 0h1m2 0h1m1 0h1m1 0h2m9 0h3m2 0h1m2 0h2m1 0h3m1 0h4m9 0h1m6 0h1m5 0h1m1 0h1m1 0h3m1 0h2m1 0h1m1 0h1m1 0h2m3 0h2m4 0h2m4 0h4m1 0h2m1 0h1m7 0h1m3 0h1m5 0h1m3 0h1m3 0h1m1 0h7m3 0h1m2 0h1m2 0h2m2 0h3m3 0h6m2 0h1m1 0h1m2 0h2m2 0h3m3 0h1m2 0h2m2 0h1m3 0h6m1 0h1m8 0h3m3 0h1m3 0h3m1 0h1m2 0h1m2 0h1m2 0h1m1 0h1m1 0h1m6 0h2m10 0h1m1 0h2m10 0h3m2 0h1m4 0h2m1 0h2m7 0h1m1 0h4m6 0h1m3 0h1m1 0h3m3 0h2m2 0h2m4 0h2m3 0h2m1 0h3m-512 1h1m4 0h1m60 0h1m162 0h1m102 0h2m-423 1h2m6 0h2m5 0h2m6 0h2m10 0h1m12 0h1m30 0h2m1 0h1m1 0h1m1 0h1m65 0h1m18 0h1m1 0h1m1 0h2m71 0h1m2 0h1m3 0h1m39 0h1m14 0h1m1 0h2m6 0h2m5 0h2m99 0h2m3 0h2m7 0h1m2 0h1m21 0h2m5 0h1m30 0h2m10 0h2m7 0h1m2 0h2m10 0h2m10 0h2m4 0h1m5 0h2"/><path stroke="#000eff" d="M96 166h1m2 0h1m6 0h1m1 0h1m3 0h2m4 0h1m3 0h1m21 0h1m17 0h1m1 0h1m5 0h1m9 0h3m6 0h1m7 0h2m12 0h1m3 0h1m24 0h1m14 0h1m5 0h1m5 0h1m9 0h2m3 0h1m7 0h1m3 0h2m20 0h1m5 0h2m14 0h1m26 0h1m4 0h1m4 0h2m6 0h1m19 0h1m7 0h1m21 0h1m5 0h1m2 0h1m8 0h2m2 0h1m4 0h1m9 0h2m1 0h1m27 0h1m13 0h1m1 0h1m3 0h1m4 0h1m2 0h1m2 0h1m4 0h1m13 0h1m17 0h1m21 0h1m2 0h1m2 0h1m4 0h1m7 0h1m14 0h2m1 0h1m2 0h1m11 0h1m4 0h1m5 0h1m3 0h1m1 0h1m2 0h2m2 0h1m7 0h1m3 0h1m-598 1h1m38 0h1m7 0h1m46 0h1m6 0h2m10 0h1m11 0h2m8 0h1m38 0h1m2 0h1m3 0h1m4 0h1m11 0h1m17 0h1m51 0h1m3 0h1m6 0h1m37 0h2m5 0h1m7 0h1m1 0h1m14 0h2m12 0h1m13 0h1m31 0h1m11 0h1m18 0h1m21 0h1m25 0h1m25 0h1m15 0h1m75 0h1m2 0h1m-612 1h1m2 0h1m7 0h1m23 0h1m6 0h1m10 0h1m18 0h1m91 0h1m24 0h1m2 0h1m11 0h1m1 0h1m7 0h1m8 0h1m4 0h1m13 0h1m24 0h1m3 0h1m18 0h1m12 0h1m27 0h1m23 0h1m16 0h1m20 0h1m27 0h1m3 0h1m5 0h1m7 0h1m8 0h1m30 0h1m20 0h1m2 0h1m17 0h1m2 0h1m3 0h1m11 0h1m12 0h1m22 0h1m16 0h1m-585 1h2m1 0h1m23 0h1m4 0h1m34 0h1m3 0h1m33 0h1m14 0h1m2 0h1m37 0h1m7 0h1m2 0h1m1 0h1m21 0h1m3 0h1m11 0h2m43 0h1m7 0h1m3 0h1m3 0h1m5 0h2m15 0h1m28 0h1m3 0h1m11 0h1m8 0h1m19 0h1m12 0h1m7 0h1m41 0h1m40 0h1m2 0h1m46 0h2m16 0h1m9 0h1m1 0h1m20 0h1m4 0h1m2 0h1m-523 1h1m39 0h1m6 0h1m5 0h3m4 0h1m87 0h1m48 0h1m35 0h1m67 0h1m59 0h1m14 0h1m22 0h1m38 0h1m5 0h1m6 0h2m35 0h1m-559 1h1m2 0h1m25 0h1m1 0h1m18 0h1m1 0h2m8 0h1m1 0h1m7 0h1m12 0h1m1 0h1m12 0h2m4 0h1m7 0h1m11 0h1m12 0h1m17 0h1m14 0h1m12 0h2m10 0h1m2 0h1m57 0h1m22 0h1m3 0h1m5 0h1m2 0h1m3 0h1m13 0h1m9 0h1m4 0h1m20 0h1m24 0h1m1 0h1m46 0h1m6 0h1m37 0h1m14 0h1m7 0h1m3 0h1m1 0h1m3 0h1m5 0h1m9 0h1m1 0h1m5 0h1m1 0h3m6 0h1m16 0h1m10 0h1m17 0h1m11 0h1m8 0h1m6 0h1m2 0h1m-602 1h1m9 0h1m15 0h1m6 0h1m10 0h1m11 0h1m8 0h1m6 0h1m44 0h2m20 0h1m5 0h1m5 0h1m1 0h1m5 0h1m32 0h1m23 0h2m49 0h1m16 0h1m37 0h3m10 0h1m5 0h2m12 0h1m24 0h1m15 0h2m17 0h1m1 0h1m12 0h1m15 0h1m79 0h1m23 0h1m17 0h1m12 0h1m10 0h1m-602 1h1m24 0h2m9 0h1m31 0h1m14 0h1m1 0h1m54 0h1m14 0h1m14 0h1m8 0h1m9 0h1m2 0h1m19 0h2m20 0h1m16 0h1m7 0h1m29 0h1m31 0h1m31 0h1m36 0h2m12 0h1m18 0h1m37 0h1m37 0h1m9 0h1m11 0h2m41 0h1m11 0h1m1 0h1m2 0h1m3 0h1m-536 1h1m16 0h1m6 0h1m7 0h1m19 0h1m24 0h1m10 0h1m4 0h1m15 0h1m13 0h1m7 0h1m1 0h2m13 0h1m1 0h1m34 0h1m4 0h1m12 0h1m1 0h1m20 0h1m36 0h1m1 0h1m15 0h1m79 0h1m36 0h1m37 0h1m26 0h1m19 0h1m15 0h1m1 0h1m34 0h1m23 0h1m-606 1h1m4 0h1m5 0h1m13 0h1m18 0h1m66 0h1m14 0h1m4 0h1m10 0h1m10 0h1m18 0h1m37 0h1m9 0h1m25 0h1m7 0h1m50 0h1m6 0h1m28 0h1m23 0h1m49 0h1m1 0h1m104 0h1m7 0h1m20 0h1m20 0h1m9 0h1m14 0h1m-562 1h1m18 0h1m24 0h1m93 0h1m8 0h1m3 0h1m15 0h1m94 0h1m17 0h1m35 0h1m32 0h1m130 0h1m-524 1h1m1 0h1m6 0h1m13 0h1m14 0h1m5 0h1m4 0h1m13 0h1m11 0h1m17 0h1m15 0h1m16 0h1m1 0h1m16 0h1m24 0h1m43 0h1m31 0h1m19 0h1m30 0h1m50 0h1m6 0h1m66 0h1m46 0h1m13 0h1m19 0h1m36 0h1m57 0h1m10 0h1m-557 1h1m64 0h1m6 0h1m130 0h1m94 0h1m33 0h1m42 0h1m56 0h1m-465 1h1m277 0h1m30 0h1m61 0h1m16 0h1m61 0h1m26 0h1m77 0h2m-569 1h1m34 0h1m86 0h1m127 0h1m13 0h1m31 0h1m3 0h1m45 0h1m6 0h1m74 0h1m88 0h1m3 0h1m58 0h1m17 0h1m-378 1h1m322 0h1m23 0h1m-503 1h1m183 0h1m46 0h1m48 0h1m37 0h1m43 0h1m12 0h1m-254 1h1m107 0h1m24 0h2m257 0h1m-576 1h1m37 0h1m151 0h1m232 0h1m123 0h1m-511 1h1m320 0h1m20 0h1m184 0h1m-573 1h1m31 0h1m234 0h1m16 0h1m52 0h1m182 0h1m50 0h1m30 0h1m-582 1h1m47 0h1m121 0h1m99 0h1m263 0h1m-541 1h1m16 0h1m252 0h1m2 0h1m22 0h1m44 0h1m39 0h1m78 0h1m71 0h1m35 0h1m6 0h1m-538 1h1m71 0h1m30 0h1m79 0h1m39 0h1m251 0h1m41 0h2m-543 1h1m193 0h1m43 0h1m69 0h1m18 0h1m28 0h2m-350 1h1m116 0h1m12 0h1m97 0h1m58 0h1m16 0h1m102 0h1m74 0h1m82 0h1m-590 1h1m31 0h1m31 0h1m158 0h1m66 0h1m236 0h1m-541 1h1m37 0h1m32 0h1m7 0h1m45 0h1m55 0h1m174 0h1m22 0h1m50 0h2m13 0h1m82 0h1m-451 1h1m33 0h1m64 0h1m44 0h1m52 0h1m65 0h1m178 0h1m-418 1h1m21 0h1m4 0h1m34 0h1m10 0h1m29 0h1m11 0h1m32 0h1m97 0h1m29 0h1m159 0h1m-358 1h1m1 0h1m12 0h1m29 0h1m51 0h1m32 0h1m24 0h1m72 0h1m77 0h1m42 0h1m-537 1h1m109 0h1m9 0h1m9 0h1m230 0h1m77 0h1m138 0h1m-521 1h1m89 0h1m7 0h1m124 0h1m111 0h1m164 0h1m-504 1h1m70 0h1m41 0h1m48 0h1m143 0h1m87 0h1m-451 1h2m57 0h1m60 0h1m26 0h1m45 0h1m56 0h1m158 0h1m65 0h1m-451 1h1m11 0h1m1 0h1m41 0h1m255 0h1m24 0h1m61 0h1m115 0h1m-505 1h1m10 0h1m60 0h1m138 0h1m17 0h1m187 0h1m119 0h1m-434 1h1m1 0h1m118 0h1m100 0h1m142 0h1m35 0h1m-437 1h1m219 0h1m94 0h1m83 0h1m35 0h1m-482 1h1m146 0h1m13 0h1m19 0h1m68 0h1m1 0h1m-207 1h1m5 0h1m103 0h1m194 0h1m58 0h1m52 0h1m-524 1h1m59 0h1m120 0h1m116 0h1m269 0h1m-397 1h1m36 0h1m92 0h1m53 0h1m113 0h1m10 0h1m14 0h1m-139 1h1m48 0h1m22 0h1m72 0h1m-498 1h1m85 0h1m453 0h1m-522 1h1m296 0h1m35 0h1m-267 1h1m-32 1h1m48 0h1m6 0h1m48 0h1m72 0h1m138 0h1m167 0h1m59 0h1m-607 1h1m10 0h1m4 0h1m25 0h1m5 0h1m6 0h1m3 0h1m3 0h1m5 0h1m26 0h2m2 0h1m2 0h2m4 0h1m30 0h1m6 0h1m7 0h2m14 0h2m2 0h1m3 0h2m4 0h2m15 0h1m6 0h1m15 0h1m3 0h2m14 0h3m7 0h1m2 0h1m3 0h3m1 0h1m4 0h1m14 0h1m17 0h1m7 0h1m11 0h1m14 0h1m1 0h3m4 0h1m3 0h1m5 0h1m14 0h1m2 0h1m2 0h1m4 0h1m7 0h1m5 0h1m4 0h1m1 0h1m13 0h1m3 0h1m11 0h1m6 0h1m1 0h1m8 0h1m1 0h1m2 0h1m3 0h1m3 0h1m3 0h1m2 0h1m2 0h1m1 0h2m3 0h1m12 0h1m1 0h1m1 0h1m8 0h1m4 0h1m2 0h1m7 0h2m4 0h1m21 0h1m14 0h1m2 0h1m8 0h1m2 0h1m2 0h1m1 0h2m8 0h1m6 0h1m1 0h1m-496 1h1m4 0h1m156 0h1m-36 1h1m82 0h1m223 0h1m-545 1h1m271 0h1m-254 2h1m2 0h1m2 0h1m2 0h1m4 0h1m3 0h1m6 0h1m3 0h1m6 0h3m5 0h1m5 0h1m11 0h1m1 0h2m2 0h1m1 0h1m5 0h1m2 0h1m12 0h1m6 0h1m4 0h1m7 0h1m14 0h1m1 0h1m3 0h2m16 0h3m5 0h2m25 0h1m16 0h1m9 0h1m7 0h1m1 0h1m3 0h1m6 0h1m2 0h1m17 0h2m1 0h1m3 0h2m16 0h1m2 0h1m1 0h1m2 0h1m6 0h1m7 0h1m5 0h1m17 0h1m5 0h2m17 0h1m10 0h1m11 0h1m1 0h2m9 0h1m2 0h1m1 0h1m1 0h1m5 0h1m2 0h1m13 0h1m5 0h1m4 0h1m3 0h1m1 0h1m5 0h1m2 0h1m6 0h1m1 0h1m2 0h1m1 0h1m1 0h1m1 0h1m14 0h2m11 0h1m3 0h1m14 0h1m8 0h1m8 0h2m1 0h1m10 0h1m5 0h1m2 0h1m6 0h1m3 0h2m6 0h2m1 0h2m16 0h2m-374 3h1m70 0h1m-179 2h1m141 2h1m44 0h1m-260 2h1m237 0h1m247 0h1m-273 2h1m27 0h1m22 3h1m-245 1h1m-22 1h1m-1 2h1m261 0h1m-110 1h1m-154 1h1m55 0h1m205 0h1m-308 6h1m44 1h1m513 2h1m-515 1h1m51 9h1m3 1h1m-1 3h1m-57 1h1m-58 1h3m6 0h2m2 0h1m3 0h1m1 0h2m4 0h1m2 0h3m1 0h3m1 0h1m1 0h2m1 0h3m1 0h1m1 0h3m4 0h1m1 0h1m1 0h5m2 0h1m1 0h2m3 0h1m3 0h1m2 0h2m1 0h1m1 0h1m2 0h2m1 0h2m2 0h1m2 0h2m1 0h1m1 0h3m3 0h1m2 0h1m3 0h1m1 0h2m1 0h1m2 0h1m1 0h2m1 0h1m2 0h2m1 0h1m1 0h1m3 0h2m1 0h1m1 0h1m1 0h3m1 0h3m6 0h1m2 0h1m1 0h3m1 0h1m1 0h1m1 0h1m2 0h1m4 0h1m1 0h1m3 0h4m1 0h3m2 0h1m5 0h1m1 0h5m3 0h1m6 0h1m4 0h3m4 0h1m6 0h3m3 0h2m5 0h2m8 0h1m1 0h1m5 0h1m5 0h2m1 0h1m1 0h2m3 0h1m2 0h2m5 0h4m1 0h1m1 0h1m2 0h2m1 0h2m3 0h2m2 0h1m4 0h2m3 0h2m1 0h2m2 0h1m4 0h1m2 0h1m2 0h1m1 0h2m2 0h1m3 0h1m1 0h1m1 0h1m2 0h1m1 0h1m4 0h2m2 0h3m1 0h4m2 0h3m3 0h1m1 0h2m2 0h1m3 0h3m2 0h1m1 0h1m2 0h3m3 0h1m1 0h3m1 0h2m1 0h1m1 0h5m3 0h2m1 0h1m1 0h2m5 0h1m1 0h1m3 0h2m2 0h1m2 0h1m2 0h3m2 0h1m2 0h5m1 0h3m5 0h2m4 0h2m1 0h1m2 0h1m2 0h3m1 0h1m2 0h1m1 0h2m1 0h3m6 0h3m5 0h1m2 0h1m1 0h2m2 0h2m2 0h1m1 0h1m1 0h1m2 0h2m3 0h4m1 0h2m3 0h3m1 0h3m1 0h2m3 0h1m2 0h2m4 0h1m1 0h2m3 0h2m1 0h1m4 0h4m2 0h1m-585 1h1m49 0h1m1 0h1m10 0h1m20 0h1m51 0h1m22 0h1m2 0h1m16 0h1m7 0h1m5 0h1m5 0h1m36 0h1m12 0h1m32 0h1m2 0h1m7 0h2m7 0h1m1 0h1m10 0h1m18 0h1m9 0h1m5 0h1m30 0h1m9 0h1m28 0h1m36 0h1m2 0h2m13 0h1m37 0h1m6 0h1m1 0h1m45 0h1m16 0h1m-38 2h1m-572 3h1m3 0h1m2 0h2m5 0h1m5 0h1m15 0h1m5 0h1m5 0h1m5 0h1m1 0h1m3 0h1m1 0h2m13 0h1m5 0h1m7 0h1m18 0h1m1 0h1m2 0h1m5 0h1m2 0h1m18 0h2m1 0h1m17 0h1m4 0h1m3 0h1m3 0h1m4 0h1m5 0h1m5 0h1m7 0h1m22 0h2m3 0h1m9 0h2m1 0h1m11 0h1m8 0h2m16 0h1m5 0h1m3 0h1m1 0h1m16 0h1m2 0h1m44 0h1m3 0h1m5 0h1m2 0h1m6 0h1m3 0h1m23 0h3m1 0h1m5 0h1m25 0h1m5 0h1m12 0h1m5 0h1m2 0h1m1 0h1m3 0h1m6 0h1m3 0h1m5 0h1m6 0h1m36 0h1m4 0h1m9 0h1m8 0h1m2 0h1m9 0h1m1 0h1m3 0h1m6 0h1m15 0h1m4 0h1m-613 1h1m1 0h1m2 0h1m10 0h1m2 0h2m1 0h1m3 0h1m23 0h1m1 0h1m5 0h1m2 0h2m4 0h2m1 0h1m3 0h1m1 0h1m1 0h1m4 0h1m3 0h3m5 0h1m1 0h1m3 0h2m1 0h1m1 0h2m3 0h1m8 0h1m1 0h2m1 0h1m3 0h1m4 0h3m1 0h3m1 0h3m3 0h1m3 0h2m2 0h5m4 0h1m2 0h2m9 0h1m2 0h1m7 0h1m1 0h1m2 0h2m4 0h1m5 0h1m4 0h1m6 0h1m1 0h1m4 0h1m3 0h1m1 0h1m2 0h1m2 0h1m1 0h3m2 0h1m2 0h1m7 0h2m4 0h1m1 0h1m4 0h1m1 0h2m2 0h1m1 0h1m2 0h1m2 0h2m1 0h2m4 0h2m4 0h1m4 0h2m1 0h1m1 0h1m2 0h1m1 0h1m11 0h2m1 0h3m3 0h1m2 0h1m2 0h1m1 0h2m1 0h1m2 0h1m2 0h2m1 0h1m2 0h1m6 0h2m1 0h1m2 0h1m2 0h2m3 0h1m8 0h2m3 0h1m3 0h2m3 0h1m2 0h1m3 0h1m4 0h1m1 0h2m7 0h1m2 0h1m2 0h2m4 0h4m1 0h1m7 0h1m5 0h1m1 0h3m1 0h3m3 0h1m1 0h2m2 0h1m1 0h1m1 0h1m4 0h2m1 0h1m4 0h1m3 0h1m3 0h1m1 0h1m5 0h1m2 0h1m1 0h1m2 0h2m1 0h1m1 0h1m2 0h1m2 0h3m4 0h4m12 0h1m1 0h1m1 0h1m2 0h1m1 0h1m1 0h3m1 0h2m1 0h1m2 0h1m6 0h1m2 0h1m2 0h2m1 0h1m1 0h1m6 0h1m2 0h1m5 0h1m1 0h2m2 0h1m-609 2h1m58 2h1m-55 5h1m6 0h1m2 0h1m3 0h1m6 0h1m1 0h1m8 0h2m12 0h1m2 0h2m7 0h3m1 0h1m1 0h1m3 0h1m3 0h2m4 0h1m2 0h1m1 0h1m1 0h1m1 0h1m5 0h3m4 0h1m2 0h1m14 0h1m7 0h1m9 0h1m4 0h1m10 0h1m1 0h2m3 0h1m2 0h1m5 0h1m15 0h1m1 0h1m4 0h1m3 0h1m2 0h1m2 0h1m2 0h1m1 0h1m12 0h1m5 0h1m1 0h1m1 0h1m13 0h1m8 0h1m2 0h2m10 0h2m1 0h1m2 0h1m10 0h1m6 0h2m12 0h3m3 0h1m2 0h1m3 0h1m5 0h2m2 0h1m7 0h2m1 0h1m2 0h1m8 0h1m2 0h1m5 0h1m3 0h1m9 0h2m1 0h1m4 0h1m8 0h1m3 0h2m3 0h1m2 0h1m1 0h1m12 0h1m8 0h1m12 0h2m2 0h2m6 0h1m5 0h1m1 0h1m4 0h3m3 0h1m4 0h1m15 0h2m1 0h1m2 0h1m5 0h1m11 0h1m1 0h2m3 0h1m6 0h2m4 0h1m9 0h1m8 0h1m3 0h1m14 0h2m7 0h1m5 0h1m4 0h1m3 0h2m3 0h1m3 0h1m-609 1h1m8 0h1m2 0h1m15 0h1m3 0h1m2 0h2m2 0h2m1 0h1m10 0h1m12 0h1m38 0h2m5 0h1m10 0h3m5 0h1m4 0h1m6 0h1m1 0h1m16 0h1m5 0h1m4 0h2m14 0h1m4 0h2m5 0h1m2 0h1m1 0h1m2 0h1m1 0h1m6 0h1m2 0h1m27 0h2m15 0h1m5 0h1m2 0h2m5 0h1m4 0h1m16 0h1m4 0h1m1 0h1m6 0h1m2 0h1m8 0h1m10 0h1m9 0h1m10 0h2m2 0h1m2 0h1m1 0h1m7 0h1m2 0h1m7 0h2m6 0h1m12 0h1m38 0h1m11 0h2m12 0h1m18 0h1m6 0h1m7 0h1m3 0h1m1 0h1m8 0h3m1 0h1m3 0h1m18 0h2m4 0h2m7 0h1m3 0h1m2 0h1m2 0h1m1 0h1m5 0h2m2 0h1m1 0h1m2 0h1m-293 2h1m-248 1h1m20 0h1m-82 2h6m1 0h4m2 0h1m2 0h12m1 0h2m1 0h3m2 0h1m1 0h1m1 0h2m2 0h5m2 0h2m1 0h2m1 0h2m1 0h6m1 0h2m1 0h2m1 0h2m1 0h2m1 0h1m1 0h4m1 0h3m1 0h8m2 0h6m1 0h4m2 0h3m1 0h2m2 0h2m1 0h8m1 0h1m1 0h2m1 0h6m1 0h7m1 0h5m1 0h3m3 0h1m3 0h11m4 0h1m3 0h4m1 0h1m1 0h6m1 0h1m1 0h2m1 0h2m2 0h3m3 0h4m1 0h7m2 0h1m1 0h2m1 0h4m1 0h1m1 0h2m2 0h5m3 0h1m1 0h1m2 0h7m1 0h1m1 0h2m1 0h1m1 0h1m2 0h3m1 0h3m1 0h1m2 0h1m4 0h3m1 0h1m1 0h2m1 0h1m1 0h1m3 0h2m1 0h3m2 0h1m3 0h4m1 0h1m3 0h5m1 0h3m1 0h3m1 0h2m1 0h2m1 0h2m1 0h1m1 0h5m1 0h3m1 0h6m1 0h6m2 0h1m1 0h4m1 0h1m1 0h3m1 0h4m2 0h2m1 0h4m1 0h1m1 0h3m2 0h3m1 0h6m1 0h6m2 0h1m1 0h1m1 0h2m2 0h1m1 0h2m1 0h1m1 0h9m2 0h6m1 0h5m1 0h2m2 0h1m1 0h2m1 0h1m1 0h2m1 0h1m1 0h1m7 0h4m2 0h3m1 0h3m2 0h13m2 0h5m1 0h10m1 0h1m1 0h2m1 0h3m1 0h5m2 0h1m4 0h3m1 0h1m2 0h1m2 0h1m1 0h1m1 0h1m1 0h1m1 0h1m2 0h6m1 0h2m2 0h5m1 0h2m1 0h8m-40 3h1m-1 2h1"/><path stroke="#0047ff" d="M80 166h2m113 0h1m21 0h1m35 0h1m9 0h1m43 0h1m66 0h1m138 0h1m48 0h1m7 0h1m8 0h2m107 0h1m-572 1h1m5 0h1m19 0h2m8 0h2m34 0h1m46 0h1m40 0h1m39 0h1m4 0h1m9 0h1m50 0h1m69 0h1m16 0h2m10 0h1m32 0h1m21 0h1m69 0h1m17 0h1m2 0h1m24 0h2m3 0h1m-503 1h1m40 0h1m65 0h1m3 0h1m39 0h1m77 0h1m136 0h1m68 0h1m24 0h1m14 0h1m29 0h1m-579 1h1m45 0h1m2 0h1m78 0h1m97 0h1m163 0h1m135 0h1m43 0h1m2 0h1m-556 1h1m13 0h1m26 0h1m24 0h1m21 0h1m301 0h1m60 0h1m16 0h1m37 0h1m23 0h1m37 0h1m17 0h1m-592 1h1m42 0h1m132 0h1m5 0h1m31 0h1m5 0h1m5 0h1m99 0h1m28 0h1m22 0h1m6 0h1m33 0h1m45 0h1m54 0h1m24 0h1m12 0h1m1 0h1m10 0h1m-524 1h1m15 0h1m4 0h1m28 0h1m70 0h1m95 0h1m10 0h1m80 0h1m37 0h1m11 0h1m58 0h1m17 0h1m34 0h1m10 0h1m16 0h1m14 0h1m10 0h1m4 0h1m-518 1h1m84 0h1m23 0h1m1 0h1m3 0h1m34 0h2m42 0h1m122 0h1m40 0h1m92 0h1m-502 1h1m23 0h1m13 0h1m21 0h1m49 0h1m49 0h1m6 0h1m34 0h1m22 0h1m27 0h1m9 0h1m4 0h1m75 0h1m118 0h1m9 0h1m18 0h1m4 0h1m2 0h1m1 0h1m79 0h1m-608 1h1m41 0h1m18 0h1m12 0h1m53 0h1m54 0h2m10 0h1m90 0h1m2 0h1m39 0h1m53 0h1m8 0h1m47 0h1m41 0h1m9 0h1m3 0h1m26 0h1m9 0h1m26 0h1m25 0h1m19 0h1m-603 1h1m12 0h1m39 0h1m57 0h1m31 0h1m6 0h1m5 0h1m41 0h1m23 0h1m101 0h1m140 0h1m55 0h1m40 0h1m-517 1h1m20 0h1m293 0h1m17 0h2m15 0h1m9 0h1m20 0h1m160 0h1m-592 1h1m2 0h2m11 0h1m11 0h1m6 0h1m1 0h1m1 0h1m3 0h1m2 0h1m1 0h1m3 0h1m6 0h1m1 0h1m4 0h1m6 0h1m6 0h2m2 0h1m5 0h1m18 0h1m4 0h1m11 0h1m4 0h1m3 0h1m1 0h1m4 0h1m3 0h1m1 0h1m4 0h1m5 0h1m10 0h1m1 0h1m12 0h1m3 0h1m1 0h1m2 0h2m5 0h3m6 0h1m7 0h1m5 0h1m9 0h1m4 0h2m26 0h2m8 0h2m9 0h1m7 0h2m19 0h1m10 0h1m2 0h1m7 0h1m5 0h1m4 0h1m5 0h1m2 0h1m9 0h1m2 0h1m4 0h1m10 0h1m4 0h1m3 0h2m6 0h1m10 0h1m20 0h1m3 0h1m1 0h1m4 0h1m1 0h1m1 0h1m7 0h1m4 0h1m2 0h1m10 0h1m5 0h2m9 0h1m4 0h1m7 0h1m4 0h1m5 0h1m6 0h1m2 0h1m1 0h2m9 0h1m1 0h1m4 0h1m7 0h2m3 0h1m3 0h1m5 0h3m9 0h1m3 0h1m6 0h1m11 0h2m-561 1h1m68 0h1m8 0h1m164 0h1m11 0h1m36 0h1m57 0h1m32 0h1m5 0h1m77 0h2m8 0h1m28 0h1m-521 1h1m37 0h1m40 0h2m41 0h2m42 0h1m50 0h1m26 0h1m2 0h1m3 0h1m27 0h1m57 0h1m16 0h1m43 0h1m20 0h1m35 0h2m32 0h1m51 0h1m28 0h1m3 0h1m-595 1h1m1 0h1m30 0h1m22 0h1m8 0h1m30 0h2m20 0h1m2 0h1m88 0h1m62 0h1m38 0h1m42 0h1m16 0h1m64 0h1m40 0h1m3 0h1m35 0h1m8 0h2m31 0h1m-578 1h1m15 0h1m3 0h1m62 0h1m8 0h1m89 0h1m46 0h1m39 0h1m9 0h1m22 0h1m46 0h1m72 0h1m66 0h1m32 0h1m27 0h1m24 0h1m-534 1h1m3 0h1m73 0h1m7 0h1m15 0h1m12 0h1m13 0h1m13 0h1m4 0h1m2 0h1m64 0h1m46 0h1m5 0h1m20 0h1m12 0h1m26 0h1m48 0h1m48 0h1m27 0h1m4 0h1m69 0h1m29 0h1m-568 1h1m6 0h1m27 0h1m44 0h1m19 0h1m24 0h1m61 0h1m3 0h1m8 0h1m51 0h1m17 0h1m40 0h1m1 0h1m2 0h1m47 0h1m34 0h1m14 0h1m2 0h1m30 0h1m2 0h1m7 0h1m12 0h1m19 0h2m6 0h1m8 0h1m1 0h1m30 0h1m9 0h1m7 0h1m9 0h1m-591 1h1m20 0h1m56 0h1m42 0h1m17 0h1m1 0h1m1 0h1m62 0h1m1 0h1m29 0h1m14 0h1m35 0h1m5 0h1m73 0h1m3 0h1m7 0h1m68 0h1m15 0h1m50 0h1m17 0h1m17 0h1m-555 1h1m23 0h1m2 0h1m2 0h1m18 0h1m19 0h1m36 0h1m16 0h1m5 0h1m37 0h1m2 0h1m1 0h2m127 0h1m2 0h1m5 0h1m3 0h1m19 0h1m21 0h1m10 0h1m75 0h1m30 0h1m37 0h1m34 0h1m25 0h1m-589 1h1m42 0h1m14 0h1m35 0h1m64 0h1m12 0h2m105 0h1m9 0h1m30 0h1m100 0h1m12 0h1m4 0h1m10 0h1m44 0h1m4 0h1m7 0h1m58 0h1m5 0h1m1 0h2m17 0h1m-590 1h1m20 0h1m49 0h1m59 0h1m18 0h1m15 0h1m50 0h1m12 0h1m34 0h1m24 0h1m10 0h1m299 0h2m-608 1h1m15 0h1m35 0h1m10 0h1m56 0h1m138 0h1m20 0h1m12 0h1m22 0h1m53 0h1m3 0h1m18 0h1m21 0h1m7 0h1m65 0h1m3 0h1m14 0h1m14 0h1m2 0h1m5 0h1m6 0h1m39 0h1m7 0h1m20 0h1m-564 1h1m15 0h1m14 0h1m5 0h2m10 0h1m7 0h1m26 0h2m8 0h1m15 0h1m15 0h1m1 0h1m10 0h1m1 0h1m35 0h1m6 0h1m11 0h1m65 0h1m64 0h1m28 0h1m37 0h1m63 0h1m14 0h1m10 0h1m27 0h1m22 0h1m5 0h1m-587 1h1m39 0h1m9 0h1m1 0h1m67 0h1m53 0h1m14 0h2m7 0h1m5 0h1m49 0h1m26 0h1m63 0h1m64 0h1m6 0h1m69 0h1m1 0h1m2 0h1m2 0h1m1 0h1m2 0h1m63 0h1m31 0h1m11 0h1m-568 1h1m52 0h1m34 0h1m40 0h1m20 0h1m50 0h1m9 0h1m54 0h1m45 0h1m139 0h1m23 0h1m6 0h1m8 0h1m45 0h1m27 0h1m-544 1h1m62 0h1m20 0h1m5 0h1m4 0h1m12 0h1m30 0h1m25 0h1m54 0h1m13 0h1m25 0h1m49 0h1m14 0h1m18 0h1m6 0h1m44 0h1m26 0h1m31 0h1m2 0h1m3 0h1m9 0h1m-485 1h1m37 0h1m19 0h1m41 0h1m17 0h1m3 0h1m26 0h1m12 0h1m9 0h1m3 0h1m6 0h1m18 0h1m62 0h1m64 0h1m1 0h1m38 0h1m6 0h1m46 0h1m32 0h1m70 0h1m18 0h1m2 0h1m4 0h1m-582 1h1m7 0h1m57 0h1m22 0h1m5 0h1m3 0h1m28 0h1m31 0h1m14 0h1m19 0h1m9 0h1m25 0h1m55 0h1m9 0h1m27 0h1m3 0h1m53 0h1m47 0h1m41 0h1m10 0h1m4 0h2m13 0h1m7 0h1m13 0h1m3 0h1m12 0h1m20 0h1m-592 1h1m24 0h1m27 0h1m54 0h1m24 0h1m1 0h1m44 0h2m70 0h1m32 0h1m136 0h1m30 0h2m40 0h1m23 0h1m24 0h1m17 0h1m21 0h1m13 0h1m3 0h2m-598 1h1m28 0h1m4 0h1m82 0h1m51 0h1m25 0h2m1 0h1m51 0h1m21 0h1m35 0h1m17 0h1m7 0h1m4 0h1m3 0h1m29 0h1m44 0h1m22 0h1m3 0h1m48 0h1m-474 1h1m65 0h1m12 0h1m3 0h1m11 0h1m1 0h1m85 0h1m50 0h1m120 0h1m14 0h1m9 0h1m41 0h1m2 0h1m125 0h1m16 0h1m-596 1h1m40 0h1m16 0h1m22 0h1m68 0h1m19 0h1m16 0h1m10 0h1m21 0h1m98 0h1m30 0h1m79 0h1m108 0h2m12 0h1m44 0h1m-575 1h1m28 0h1m1 0h1m37 0h1m7 0h1m39 0h1m14 0h1m9 0h1m178 0h1m12 0h1m2 0h1m34 0h1m90 0h1m29 0h1m2 0h1m79 0h1m-534 1h1m11 0h1m20 0h1m6 0h1m61 0h1m5 0h1m4 0h1m30 0h1m61 0h1m24 0h1m9 0h1m10 0h1m111 0h1m45 0h1m92 0h1m-542 1h1m15 0h1m25 0h1m9 0h1m23 0h1m26 0h1m37 0h1m27 0h1m75 0h1m90 0h1m16 0h1m29 0h1m74 0h1m28 0h1m4 0h1m9 0h1m7 0h2m57 0h1m-489 1h1m150 0h1m116 0h1m82 0h1m38 0h1m69 0h1m-562 1h1m84 0h1m44 0h1m37 0h1m10 0h1m120 0h1m8 0h1m27 0h1m6 0h1m2 0h1m7 0h1m1 0h1m45 0h1m54 0h1m75 0h1m20 0h1m-534 1h1m58 0h2m12 0h1m5 0h1m20 0h1m69 0h1m12 0h1m6 0h1m35 0h1m92 0h1m6 0h1m61 0h1m85 0h1m15 0h1m18 0h1m-483 1h1m104 0h1m13 0h1m30 0h1m66 0h1m58 0h1m1 0h1m76 0h1m31 0h1m1 0h1m58 0h1m30 0h1m-184 1h1m11 0h1m101 0h1m36 0h1m-328 1h1m29 0h1m147 0h2m-329 1h1m49 0h1m10 0h1m116 0h1m37 0h1m76 0h1m31 0h1m188 0h1m-534 1h1m86 0h1m16 0h1m84 0h1m-154 1h1m43 0h1m71 0h1m94 0h1m-163 1h1m226 0h1m-322 2h3m1 0h4m2 0h1m3 0h2m1 0h2m1 0h4m1 0h4m2 0h3m1 0h2m1 0h1m1 0h2m1 0h1m2 0h2m1 0h3m1 0h1m1 0h1m2 0h2m1 0h5m2 0h4m1 0h5m1 0h1m1 0h1m1 0h6m1 0h3m2 0h2m6 0h2m2 0h1m3 0h1m2 0h1m1 0h1m1 0h1m2 0h5m1 0h2m1 0h1m2 0h2m1 0h1m1 0h1m2 0h1m5 0h5m2 0h1m1 0h1m2 0h2m1 0h4m5 0h1m2 0h1m3 0h1m2 0h1m2 0h2m1 0h3m1 0h2m2 0h3m2 0h4m1 0h1m2 0h2m2 0h1m2 0h1m3 0h3m1 0h2m4 0h11m1 0h1m3 0h2m3 0h2m1 0h2m1 0h1m1 0h1m3 0h1m2 0h2m2 0h4m1 0h1m5 0h3m3 0h2m1 0h1m1 0h2m1 0h5m1 0h1m5 0h1m3 0h1m2 0h1m3 0h1m2 0h1m2 0h2m3 0h2m1 0h2m1 0h2m5 0h3m2 0h2m2 0h5m2 0h2m2 0h1m1 0h1m1 0h2m4 0h1m3 0h1m8 0h2m1 0h1m2 0h1m1 0h1m3 0h4m3 0h4m4 0h2m1 0h1m2 0h2m3 0h2m1 0h3m2 0h2m1 0h4m1 0h1m3 0h2m4 0h2m1 0h1m1 0h1m2 0h3m1 0h2m2 0h3m2 0h1m2 0h1m1 0h1m2 0h1m3 0h4m3 0h1m2 0h1m2 0h1m3 0h1m1 0h4m1 0h1m1 0h4m2 0h1m2 0h4m1 0h1m4 0h2m1 0h2m1 0h1m2 0h2m2 0h2m1 0h3m1 0h2m1 0h1m4 0h3m1 0h4m1 0h2m5 0h1m1 0h1m1 0h2m2 0h2m2 0h1m4 0h3m2 0h2m2 0h2m1 0h1m1 0h1m1 0h1m2 0h3m-552 5h1m513 0h1m-411 4h1m-165 62h1m5 0h1m14 0h1m3 0h1m6 0h1m3 0h1m2 0h1m6 0h1m15 0h1m1 0h1m1 0h2m1 0h1m7 0h1m2 0h1m4 0h1m2 0h1m1 0h2m2 0h1m2 0h1m1 0h2m2 0h1m3 0h1m3 0h1m2 0h1m1 0h1m5 0h1m3 0h1m1 0h2m1 0h2m6 0h1m5 0h1m1 0h1m1 0h4m1 0h1m1 0h1m4 0h1m4 0h1m3 0h1m2 0h1m1 0h1m2 0h2m10 0h1m1 0h1m2 0h1m1 0h1m16 0h1m4 0h1m6 0h2m6 0h1m9 0h1m5 0h2m3 0h1m3 0h1m4 0h1m7 0h1m13 0h2m4 0h2m2 0h1m10 0h2m13 0h1m6 0h1m4 0h1m2 0h2m3 0h2m1 0h1m5 0h1m5 0h2m3 0h1m10 0h1m8 0h1m7 0h1m3 0h1m3 0h1m2 0h1m2 0h1m1 0h1m6 0h1m3 0h1m2 0h2m1 0h1m2 0h2m6 0h1m3 0h1m6 0h1m12 0h2m4 0h1m5 0h1m3 0h1m10 0h1m2 0h1m5 0h1m2 0h1m4 0h1m1 0h2m7 0h1m1 0h1m1 0h1m1 0h3m1 0h1m4 0h1m6 0h1m11 0h2m1 0h1m2 0h1m1 0h2m4 0h1m1 0h2m3 0h1m2 0h1m5 0h1m4 0h2m11 0h1m2 0h1m7 0h2m3 0h1m-600 1h1m22 0h1m15 0h1m24 0h1m9 0h1m26 0h1m21 0h1m17 0h1m9 0h1m3 0h1m15 0h1m2 0h2m45 0h1m7 0h1m12 0h1m18 0h1m8 0h1m5 0h1m5 0h1m3 0h1m4 0h1m8 0h1m3 0h1m3 0h1m5 0h1m9 0h1m10 0h1m5 0h1m11 0h1m6 0h1m20 0h1m8 0h1m11 0h1m10 0h1m6 0h1m2 0h1m10 0h1m19 0h1m5 0h1m5 0h1m2 0h1m8 0h1m1 0h1m13 0h1m3 0h2m33 0h1m13 0h1m10 0h1m2 0h1m10 0h1"/><path stroke="#008eff" d="M87 166h1m28 0h2m98 0h1m1 0h1m12 0h1m4 0h1m31 0h1m3 0h1m37 0h1m6 0h2m13 0h1m18 0h1m54 0h1m23 0h1m22 0h1m37 0h2m51 0h1m54 0h1m7 0h1m34 0h1m10 0h1m20 0h1m-595 1h1m18 0h1m33 0h1m18 0h1m11 0h1m10 0h1m21 0h1m25 0h1m16 0h1m14 0h1m51 0h1m8 0h1m48 0h1m86 0h1m21 0h1m42 0h1m6 0h1m4 0h1m35 0h1m14 0h1m23 0h1m5 0h1m15 0h1m4 0h1m12 0h1m5 0h1m16 0h1m5 0h1m-551 1h1m36 0h1m4 0h1m43 0h1m10 0h1m16 0h1m80 0h1m13 0h1m35 0h1m3 0h1m14 0h1m35 0h1m6 0h1m60 0h1m23 0h1m23 0h1m4 0h1m6 0h1m51 0h1m10 0h1m38 0h2m33 0h1m-607 1h1m4 0h1m27 0h1m17 0h1m18 0h1m10 0h1m46 0h1m18 0h1m1 0h1m15 0h1m19 0h1m4 0h1m66 0h1m11 0h1m13 0h1m10 0h1m124 0h1m9 0h1m5 0h1m34 0h1m12 0h1m13 0h2m3 0h1m35 0h1m17 0h1m50 0h1m-593 1h1m28 0h1m5 0h1m42 0h1m10 0h1m7 0h1m14 0h1m51 0h1m28 0h1m59 0h1m164 0h1m8 0h1m19 0h1m2 0h1m22 0h1m3 0h1m3 0h1m10 0h1m6 0h1m3 0h1m14 0h1m27 0h2m14 0h1m-573 1h1m4 0h1m22 0h1m1 0h1m79 0h1m4 0h1m15 0h1m12 0h1m39 0h1m11 0h2m23 0h1m9 0h1m4 0h1m8 0h1m2 0h1m1 0h1m22 0h1m1 0h1m12 0h1m71 0h1m84 0h2m1 0h1m32 0h1m57 0h1m11 0h1m23 0h1m11 0h1m-593 1h1m25 0h1m83 0h1m54 0h1m5 0h1m1 0h1m5 0h1m29 0h1m24 0h1m22 0h1m43 0h1m3 0h1m4 0h1m14 0h1m13 0h2m5 0h1m45 0h1m26 0h1m11 0h1m1 0h2m56 0h1m2 0h1m15 0h1m20 0h1m46 0h2m5 0h1m8 0h1m7 0h1m-571 1h2m1 0h1m42 0h1m77 0h1m45 0h1m19 0h1m17 0h1m12 0h1m22 0h1m9 0h1m10 0h1m21 0h1m11 0h2m74 0h1m1 0h1m11 0h1m15 0h1m24 0h1m2 0h1m31 0h1m36 0h1m56 0h1m-592 1h1m4 0h1m9 0h1m18 0h1m16 0h1m48 0h1m27 0h1m7 0h2m48 0h1m34 0h1m41 0h1m52 0h1m1 0h1m29 0h2m1 0h1m29 0h1m10 0h1m1 0h1m21 0h1m5 0h1m15 0h1m14 0h1m40 0h1m20 0h1m56 0h1m29 0h1m-577 1h1m17 0h1m56 0h1m10 0h2m1 0h1m8 0h1m13 0h1m50 0h1m12 0h1m38 0h1m16 0h1m26 0h1m11 0h1m21 0h1m3 0h2m82 0h1m62 0h1m12 0h1m2 0h1m11 0h1m52 0h1m10 0h1m44 0h1m-574 1h1m16 0h1m28 0h1m10 0h1m25 0h1m5 0h1m13 0h1m11 0h1m5 0h1m16 0h1m13 0h1m9 0h1m12 0h1m68 0h1m27 0h1m87 0h1m26 0h1m11 0h1m3 0h1m15 0h1m8 0h1m19 0h1m48 0h1m3 0h1m2 0h1m17 0h1m14 0h1m6 0h1m13 0h1m-555 1h1m26 0h1m15 0h1m7 0h1m25 0h1m6 0h1m2 0h1m1 0h1m25 0h1m25 0h1m7 0h1m30 0h1m34 0h1m9 0h1m5 0h1m16 0h1m22 0h1m3 0h1m9 0h1m25 0h1m23 0h1m33 0h1m11 0h1m2 0h1m6 0h1m8 0h1m3 0h1m53 0h1m2 0h1m2 0h1m22 0h1m38 0h1m1 0h1m32 0h1m-574 1h1m19 0h1m70 0h1m30 0h1m25 0h1m10 0h1m34 0h1m5 0h1m24 0h1m3 0h1m8 0h1m6 0h1m5 0h1m28 0h1m3 0h1m33 0h1m47 0h1m16 0h2m9 0h1m13 0h1m4 0h1m98 0h1m38 0h2m21 0h1m-563 1h1m1 0h1m74 0h2m4 0h1m4 0h1m13 0h1m29 0h2m24 0h1m22 0h1m3 0h1m33 0h1m65 0h1m28 0h1m53 0h1m40 0h1m4 0h1m45 0h1m2 0h2m7 0h1m50 0h1m4 0h1m13 0h2m10 0h1m1 0h1m-569 1h1m24 0h1m28 0h1m8 0h1m11 0h1m6 0h1m19 0h1m9 0h1m8 0h1m5 0h3m16 0h1m1 0h1m25 0h1m15 0h1m4 0h1m32 0h2m7 0h1m9 0h1m3 0h1m16 0h1m15 0h1m2 0h1m17 0h1m46 0h1m35 0h1m38 0h1m8 0h1m2 0h1m20 0h1m28 0h1m15 0h1m11 0h1m20 0h1m20 0h1m-587 1h1m38 0h1m26 0h1m19 0h1m79 0h1m57 0h1m33 0h1m38 0h1m1 0h1m19 0h1m88 0h1m11 0h1m2 0h1m10 0h1m8 0h1m56 0h1m10 0h1m3 0h1m4 0h1m15 0h1m35 0h1m11 0h1m8 0h1m17 0h1m-606 1h1m27 0h1m5 0h1m48 0h2m25 0h1m9 0h1m10 0h1m14 0h1m37 0h1m10 0h1m49 0h1m3 0h1m29 0h1m28 0h1m17 0h2m6 0h1m9 0h1m48 0h1m15 0h1m88 0h1m5 0h1m21 0h1m11 0h1m26 0h1m20 0h1m-593 1h1m26 0h2m12 0h1m58 0h1m41 0h1m44 0h1m64 0h1m24 0h1m17 0h1m1 0h1m39 0h1m63 0h1m18 0h1m17 0h1m32 0h1m12 0h1m10 0h1m21 0h1m66 0h1m17 0h1m-573 1h1m8 0h1m13 0h1m48 0h1m8 0h1m38 0h1m21 0h1m36 0h3m7 0h1m4 0h1m29 0h1m6 0h1m10 0h1m10 0h1m26 0h1m13 0h1m20 0h1m8 0h1m6 0h1m35 0h1m49 0h1m15 0h1m128 0h1m8 0h1m-602 1h1m31 0h1m2 0h1m30 0h1m19 0h1m13 0h1m2 0h1m22 0h1m44 0h1m2 0h1m5 0h1m7 0h1m1 0h1m13 0h2m14 0h1m8 0h1m56 0h1m66 0h1m56 0h1m23 0h1m97 0h1m30 0h1m7 0h1m10 0h1m13 0h1m-598 1h1m52 0h1m3 0h1m30 0h1m2 0h1m17 0h1m7 0h1m1 0h1m38 0h1m56 0h1m8 0h1m28 0h1m2 0h1m4 0h1m20 0h1m38 0h1m3 0h1m8 0h1m22 0h1m9 0h1m30 0h1m23 0h2m39 0h1m22 0h1m1 0h1m20 0h1m2 0h1m3 0h2m2 0h1m24 0h1m24 0h1m8 0h1m2 0h1m26 0h1m-598 1h1m21 0h2m10 0h1m47 0h1m30 0h1m1 0h1m4 0h1m24 0h1m47 0h1m12 0h1m2 0h3m33 0h1m4 0h1m2 0h1m30 0h1m1 0h1m13 0h1m2 0h1m22 0h1m7 0h1m4 0h1m27 0h1m3 0h1m29 0h1m2 0h1m4 0h1m56 0h1m15 0h1m38 0h1m20 0h1m-546 1h1m13 0h1m2 0h1m1 0h1m19 0h1m10 0h1m30 0h1m19 0h3m27 0h1m12 0h1m15 0h1m1 0h1m4 0h1m29 0h1m8 0h1m51 0h1m18 0h1m54 0h1m6 0h1m51 0h1m19 0h1m14 0h1m12 0h1m4 0h1m10 0h1m14 0h1m37 0h1m2 0h1m19 0h1m42 0h1m19 0h1m-522 1h1m41 0h2m10 0h1m5 0h1m7 0h1m4 0h1m14 0h1m10 0h1m20 0h1m7 0h1m7 0h1m38 0h1m3 0h2m3 0h1m9 0h1m44 0h1m3 0h1m20 0h1m10 0h1m81 0h1m9 0h1m2 0h1m10 0h1m39 0h1m19 0h1m42 0h1m18 0h1m-585 1h1m31 0h1m6 0h1m1 0h1m47 0h1m73 0h1m6 0h1m66 0h1m71 0h1m48 0h1m65 0h1m9 0h1m1 0h1m10 0h1m13 0h1m5 0h2m37 0h1m7 0h1m1 0h1m2 0h2m10 0h1m5 0h1m1 0h1m23 0h1m8 0h1m8 0h1m-547 1h1m17 0h1m48 0h2m17 0h1m87 0h1m35 0h1m9 0h1m29 0h1m32 0h1m14 0h1m23 0h1m47 0h1m42 0h1m4 0h1m23 0h1m30 0h1m12 0h1m-494 1h1m1 0h1m1 0h1m48 0h1m18 0h1m4 0h1m3 0h1m25 0h1m13 0h1m38 0h1m15 0h1m8 0h1m105 0h1m20 0h1m4 0h1m32 0h2m37 0h1m3 0h1m1 0h1m82 0h1m13 0h1m43 0h1m-471 1h1m2 0h1m40 0h1m23 0h1m7 0h1m49 0h1m21 0h1m17 0h1m13 0h1m22 0h1m10 0h1m5 0h1m66 0h2m47 0h1m3 0h1m14 0h1m11 0h1m45 0h1m5 0h1m1 0h1m15 0h1m5 0h1m59 0h1m-587 1h1m10 0h1m6 0h2m72 0h1m5 0h1m135 0h1m50 0h1m10 0h1m10 0h1m36 0h1m51 0h1m4 0h1m2 0h1m11 0h1m22 0h2m8 0h1m1 0h1m22 0h1m20 0h1m14 0h1m31 0h1m11 0h1m16 0h1m1 0h1m16 0h2m-603 1h1m8 0h1m21 0h1m73 0h1m25 0h2m24 0h1m22 0h1m20 0h1m2 0h1m56 0h1m4 0h1m8 0h1m89 0h1m16 0h1m13 0h1m21 0h1m33 0h1m118 0h1m38 0h1m-584 1h1m13 0h1m51 0h1m44 0h1m31 0h1m42 0h1m46 0h1m2 0h1m9 0h1m35 0h1m10 0h1m-265 1h1m24 0h1m9 0h1m9 0h1m32 0h2m5 0h1m10 0h1m16 0h1m7 0h1m27 0h1m51 0h1m27 0h1m60 0h1m4 0h1m4 0h1m9 0h1m11 0h1m34 0h2m46 0h1m15 0h2m6 0h1m18 0h1m8 0h2m56 0h1m11 0h1m14 0h1m3 0h1m7 0h1m-602 1h1m12 0h1m7 0h1m40 0h1m26 0h1m10 0h1m58 0h1m45 0h1m37 0h1m2 0h1m8 0h1m45 0h1m10 0h1m12 0h2m19 0h1m43 0h1m25 0h1m114 0h1m-513 1h1m38 0h1m1 0h1m35 0h1m28 0h1m16 0h1m25 0h1m31 0h1m168 0h1m26 0h1m11 0h1m1 0h1m7 0h2m32 0h1m51 0h1m17 0h1m51 0h1m13 0h1m-567 1h1m59 0h1m14 0h1m32 0h1m17 0h1m10 0h1m39 0h1m36 0h1m17 0h1m2 0h1m10 0h1m58 0h1m20 0h1m7 0h1m52 0h1m26 0h1m3 0h1m87 0h1m-492 1h1m116 0h1m13 0h2m95 0h1m91 0h1m38 0h1m7 0h1m13 0h1m136 0h1m18 0h1m26 0h1m-543 1h1m22 0h1m7 0h1m116 0h1m46 0h1m2 0h1m54 0h1m33 0h1m72 0h1m19 0h1m-420 1h1m27 0h1m39 0h1m147 0h1m74 0h1m13 0h3m81 0h1m59 0h1m-433 1h1m314 0h1m16 0h1m67 0h1m21 0h1m84 0h1m-545 1h2m165 1h1m-72 1h1m72 0h1m143 0h1m102 0h1m-331 1h1m38 0h1m186 0h1m-212 1h1m270 0h1m-328 1h1m13 0h1m109 0h1m177 0h1m69 1h1m-428 74h2m2 0h1m1 0h3m1 0h3m1 0h5m3 0h2m1 0h4m3 0h3m4 0h3m4 0h1m1 0h2m2 0h2m3 0h4m1 0h1m1 0h1m2 0h1m2 0h6m2 0h1m2 0h3m1 0h2m1 0h1m5 0h2m1 0h1m2 0h1m3 0h2m1 0h1m1 0h1m1 0h2m1 0h1m2 0h2m3 0h1m1 0h1m1 0h1m2 0h1m3 0h3m1 0h1m2 0h2m1 0h1m1 0h1m1 0h1m4 0h1m1 0h1m2 0h2m2 0h4m1 0h1m1 0h1m1 0h2m1 0h1m1 0h2m4 0h1m1 0h3m1 0h2m1 0h1m1 0h2m1 0h1m2 0h1m1 0h6m1 0h1m1 0h1m2 0h1m1 0h4m1 0h1m1 0h4m2 0h2m3 0h1m1 0h1m1 0h3m3 0h1m2 0h1m1 0h2m4 0h1m1 0h1m1 0h1m1 0h2m3 0h5m3 0h5m1 0h2m2 0h3m2 0h2m1 0h1m2 0h2m1 0h1m1 0h2m1 0h5m2 0h1m1 0h2m1 0h2m1 0h2m1 0h2m2 0h2m1 0h1m2 0h4m1 0h2m2 0h3m4 0h3m1 0h1m1 0h2m5 0h3m2 0h1m1 0h1m1 0h4m2 0h2m2 0h3m2 0h6m2 0h1m1 0h1m2 0h1m2 0h2m1 0h2m1 0h1m1 0h2m2 0h2m1 0h1m7 0h1m1 0h1m3 0h1m1 0h1m1 0h2m2 0h2m2 0h5m1 0h1m2 0h4m1 0h4m2 0h4m1 0h5m1 0h3m2 0h3m2 0h3m3 0h1m1 0h1m1 0h2m3 0h1m1 0h2m3 0h1m2 0h3m1 0h2m6 0h1m3 0h1m1 0h1m1 0h1m3 0h5m2 0h1m2 0h3m1 0h1m1 0h1m2 0h1m1 0h2m1 0h1m2 0h4m1 0h1m2 0h2m2 0h2m1 0h1m3 0h1m1 0h4m2 0h1m3 0h7m2 0h1m1 0h3m1 0h3m2 0h1m3 0h2"/><path stroke="#00e1ff" d="M82 166h1m54 0h1m54 0h1m10 0h1m3 0h2m3 0h1m7 0h1m2 0h1m13 0h1m18 0h1m12 0h1m1 0h1m26 0h1m2 0h1m48 0h1m3 0h1m3 0h1m29 0h1m2 0h1m8 0h1m13 0h1m16 0h1m44 0h1m1 0h1m32 0h1m22 0h1m77 0h2m30 0h1m5 0h1m22 0h1m3 0h1m3 0h1m-601 1h1m24 0h1m9 0h1m5 0h1m47 0h2m10 0h1m33 0h1m101 0h1m14 0h1m42 0h1m18 0h1m34 0h1m24 0h1m33 0h1m2 0h2m7 0h1m3 0h1m25 0h1m27 0h1m14 0h1m14 0h1m1 0h1m5 0h1m48 0h1m45 0h1m-601 1h1m28 0h1m41 0h1m48 0h1m1 0h1m18 0h1m13 0h1m1 0h1m6 0h1m4 0h1m36 0h1m2 0h2m33 0h1m2 0h1m14 0h1m3 0h1m6 0h1m40 0h1m7 0h1m3 0h1m14 0h2m4 0h1m40 0h1m36 0h1m50 0h1m113 0h1m-563 1h1m1 0h1m16 0h1m31 0h1m48 0h1m9 0h1m72 0h1m37 0h1m13 0h1m35 0h1m104 0h1m46 0h2m4 0h1m33 0h1m12 0h1m-514 1h1m2 0h2m4 0h1m1 0h1m1 0h1m1 0h2m3 0h1m5 0h1m3 0h1m2 0h1m4 0h1m1 0h1m3 0h1m1 0h3m1 0h1m10 0h1m7 0h2m1 0h2m3 0h1m4 0h1m4 0h1m10 0h1m2 0h1m7 0h1m2 0h1m15 0h1m2 0h2m1 0h1m1 0h1m6 0h1m4 0h1m3 0h1m1 0h1m4 0h1m10 0h1m2 0h1m6 0h1m1 0h1m5 0h1m5 0h2m5 0h1m9 0h1m9 0h2m2 0h2m7 0h1m4 0h2m1 0h1m9 0h3m21 0h1m1 0h1m2 0h2m1 0h2m5 0h2m1 0h1m2 0h1m4 0h1m6 0h1m14 0h1m1 0h3m9 0h4m3 0h3m14 0h1m7 0h1m1 0h1m9 0h1m2 0h1m1 0h1m2 0h2m1 0h1m4 0h2m4 0h1m4 0h1m2 0h1m6 0h1m2 0h1m31 0h1m10 0h1m10 0h1m1 0h1m1 0h2m3 0h1m4 0h1m2 0h1m3 0h1m10 0h1m5 0h3m4 0h3m1 0h1m5 0h1m1 0h1m11 0h1m1 0h1m1 0h1m7 0h1m1 0h1m10 0h2m1 0h1m1 0h1m2 0h2m1 0h1m2 0h2m1 0h1m3 0h2m5 0h1m7 0h1m2 0h1m-490 1h1m1 0h1m14 0h1m9 0h1m2 0h1m45 0h1m134 0h1m22 0h1m4 0h1m16 0h1m51 0h1m4 0h1m84 0h1m-489 1h1m48 0h1m19 0h1m4 0h1m2 0h1m28 0h1m29 0h1m2 0h1m45 0h1m19 0h1m16 0h1m1 0h1m3 0h2m24 0h1m21 0h1m45 0h1m3 0h1m54 0h1m1 0h1m8 0h1m14 0h1m12 0h1m9 0h1m4 0h2m18 0h1m16 0h1m34 0h1m31 0h1m9 0h1m19 0h1m-594 1h1m32 0h1m14 0h1m9 0h1m40 0h1m41 0h1m51 0h1m2 0h1m54 0h1m5 0h1m9 0h1m74 0h1m1 0h1m25 0h1m33 0h1m22 0h1m96 0h1m4 0h1m46 0h1m11 0h1m1 0h1m-566 1h1m24 0h1m64 0h1m33 0h1m5 0h1m2 0h1m4 0h1m3 0h1m38 0h1m4 0h1m1 0h1m38 0h2m33 0h1m2 0h1m11 0h1m9 0h1m3 0h1m12 0h1m59 0h1m7 0h1m5 0h1m1 0h1m6 0h1m41 0h1m15 0h1m6 0h1m14 0h1m10 0h1m24 0h1m65 0h1m7 0h1m-603 1h1m23 0h1m23 0h1m46 0h1m3 0h1m13 0h1m9 0h1m9 0h1m10 0h1m48 0h1m3 0h1m58 0h2m6 0h1m2 0h1m33 0h1m48 0h1m23 0h1m34 0h1m18 0h1m2 0h1m7 0h1m5 0h1m53 0h1m14 0h1m41 0h2m16 0h1m1 0h1m-574 1h1m10 0h1m2 0h1m3 0h1m39 0h1m19 0h2m20 0h1m11 0h1m2 0h2m11 0h1m35 0h1m37 0h1m7 0h1m63 0h1m24 0h1m46 0h1m8 0h1m53 0h2m46 0h1m8 0h1m42 0h1m81 0h1m7 0h1m-601 1h1m34 0h1m1 0h1m49 0h1m20 0h1m31 0h1m69 0h1m52 0h1m23 0h1m20 0h1m27 0h1m18 0h1m13 0h1m70 0h1m16 0h1m43 0h1m2 0h1m6 0h1m9 0h1m4 0h1m44 0h1m-573 1h1m15 0h1m2 0h2m2 0h1m36 0h1m19 0h1m41 0h1m39 0h1m8 0h1m7 0h1m21 0h1m2 0h1m5 0h1m38 0h1m16 0h1m61 0h1m16 0h1m50 0h2m31 0h1m9 0h1m4 0h1m7 0h1m58 0h1m49 0h1m11 0h1m13 0h1m-589 1h1m13 0h1m7 0h1m14 0h1m35 0h1m18 0h1m1 0h1m23 0h1m23 0h1m6 0h1m40 0h1m2 0h1m76 0h1m82 0h1m58 0h1m47 0h1m47 0h1m4 0h1m49 0h1m25 0h1m-598 1h1m56 0h1m66 0h1m80 0h1m69 0h1m34 0h1m7 0h1m27 0h1m11 0h1m5 0h1m13 0h1m2 0h2m34 0h1m6 0h1m24 0h1m11 0h1m15 0h1m29 0h1m29 0h1m-509 1h1m61 0h1m5 0h1m2 0h1m22 0h1m28 0h1m48 0h1m19 0h1m33 0h1m1 0h1m3 0h1m11 0h1m77 0h1m2 0h1m44 0h1m12 0h1m65 0h1m34 0h1m51 0h1m31 0h1m-566 1h1m8 0h1m5 0h1m55 0h1m2 0h1m14 0h2m10 0h3m27 0h1m5 0h1m28 0h1m6 0h1m46 0h1m10 0h1m11 0h1m10 0h1m31 0h1m3 0h1m1 0h1m39 0h1m13 0h2m38 0h1m66 0h1m34 0h2m15 0h1m-516 1h1m58 0h1m69 0h1m16 0h1m32 0h1m11 0h1m6 0h1m53 0h1m10 0h1m28 0h1m25 0h1m13 0h1m26 0h1m17 0h1m12 0h1m36 0h1m11 0h1m15 0h2m25 0h1m1 0h2m23 0h1m65 0h1m-569 1h1m16 0h1m42 0h1m4 0h1m5 0h1m2 0h2m22 0h1m29 0h1m56 0h1m40 0h1m7 0h1m9 0h1m44 0h1m27 0h1m4 0h1m26 0h1m88 0h1m17 0h1m97 0h1m-559 1h1m30 0h1m84 0h1m27 0h1m7 0h1m31 0h1m3 0h1m3 0h1m27 0h1m11 0h1m8 0h1m8 0h1m1 0h1m44 0h1m31 0h1m9 0h1m59 0h1m20 0h1m7 0h1m46 0h1m12 0h1m83 0h1m-598 1h1m10 0h1m34 0h1m6 0h1m35 0h1m4 0h1m4 0h2m22 0h1m75 0h1m12 0h1m50 0h1m1 0h1m30 0h1m12 0h1m27 0h1m13 0h1m53 0h1m7 0h1m14 0h1m31 0h2m6 0h1m36 0h1m31 0h1m-529 1h1m20 0h1m25 0h1m24 0h1m21 0h1m2 0h1m56 0h1m4 0h1m8 0h1m31 0h1m3 0h1m2 0h1m28 0h1m39 0h1m32 0h1m36 0h1m71 0h1m17 0h1m-446 1h1m68 0h1m29 0h1m69 0h1m104 0h1m21 0h1m23 0h1m57 0h2m25 0h1m44 0h1m10 0h1m43 0h1m47 0h1m-501 1h2m34 0h1m7 0h1m2 0h1m4 0h1m26 0h1m1 0h1m33 0h1m1 0h1m190 0h1m2 0h1m54 0h1m7 0h1m50 0h1m6 0h1m35 0h1m9 0h1m5 0h1m-492 1h1m151 0h1m14 0h1m49 0h1m13 0h1m40 0h1m16 0h1m15 0h1m4 0h1m68 0h1m-397 1h1m24 0h1m39 0h1m2 0h1m65 0h1m5 0h2m28 0h1m57 0h1m50 0h1m13 0h1m43 0h1m61 0h1m39 0h1m37 0h1m30 0h1m-507 1h1m26 0h1m31 0h1m8 0h1m7 0h1m2 0h1m66 0h1m27 0h1m112 0h1m16 0h1m1 0h1m13 0h1m66 0h1m30 0h1m-355 1h1m9 0h1m215 0h1m14 0h1m88 0h1m80 0h1m7 0h1m95 0h1m-554 1h1m39 0h1m177 0h1m59 0h1m18 0h1m26 0h1m46 0h1m16 0h1m-392 1h1m35 0h1m4 0h1m38 0h1m42 0h1m34 0h1m3 0h1m27 0h1m101 0h1m159 0h1m57 0h1m-460 1h1m72 0h1m26 0h1m39 0h1m76 0h1m31 0h1m63 0h1m6 0h1m19 0h1m68 0h1m28 0h1m-513 1h1m22 0h1m40 0h1m3 0h1m166 0h1m-257 1h1m94 0h1m216 0h1m42 0h1m148 0h1m-405 1h1m270 0h1m-292 1h1m87 0h1m156 0h1m20 0h1m68 0h1m117 0h1m-534 1h1m188 1h1m227 0h1m115 0h1m-287 1h1m98 0h1m-267 1h1m19 0h1m-57 3h1m-54 78h1m6 0h1m9 0h1m1 0h1m7 0h2m5 0h1m7 0h1m2 0h1m2 0h2m2 0h3m12 0h1m7 0h1m2 0h1m10 0h2m8 0h1m1 0h1m12 0h1m15 0h1m3 0h1m5 0h1m13 0h1m2 0h1m7 0h1m11 0h1m2 0h1m3 0h1m12 0h1m6 0h1m1 0h1m2 0h1m8 0h1m9 0h2m3 0h1m3 0h3m2 0h1m1 0h1m5 0h1m3 0h1m4 0h2m7 0h1m9 0h2m7 0h1m7 0h1m2 0h1m8 0h1m12 0h1m2 0h1m17 0h1m10 0h2m6 0h1m1 0h1m1 0h1m4 0h1m3 0h2m3 0h1m7 0h1m2 0h1m16 0h2m4 0h2m8 0h1m3 0h1m18 0h1m4 0h1m21 0h1m3 0h2m3 0h1m1 0h1m8 0h1m5 0h1m7 0h1m6 0h1m10 0h1m17 0h1m21 0h1m7 0h1m9 0h2m15 0h1m6 0h2"/><path stroke="#00f5b9" d="M89 166h1m31 0h1m5 0h1m47 0h1m7 0h2m48 0h1m42 0h1m56 0h1m2 0h1m47 0h1m10 0h2m35 0h1m5 0h1m20 0h1m39 0h1m6 0h1m2 0h2m17 0h1m19 0h1m10 0h1m36 0h1m81 0h1m4 0h1m7 0h1m-555 1h1m48 0h1m25 0h1m2 0h1m45 0h1m28 0h1m2 0h2m31 0h1m17 0h1m13 0h1m7 0h1m11 0h1m57 0h1m2 0h1m20 0h1m1 0h1m71 0h1m7 0h1m43 0h1m-506 1h1m101 0h1m20 0h1m11 0h1m42 0h1m73 0h1m21 0h1m47 0h1m23 0h1m18 0h1m12 0h1m39 0h1m9 0h1m21 0h1m16 0h1m47 0h1m66 0h1m-558 1h1m20 0h1m42 0h1m44 0h1m63 0h1m14 0h1m49 0h1m2 0h1m194 0h1m16 0h1m34 0h1m7 0h1m15 0h1m-528 1h1m15 0h1m9 0h1m21 0h1m36 0h1m5 0h1m15 0h2m2 0h1m3 0h1m23 0h1m5 0h1m15 0h1m6 0h1m20 0h1m19 0h1m50 0h1m2 0h2m2 0h1m7 0h1m2 0h1m1 0h1m16 0h1m8 0h2m4 0h1m10 0h1m44 0h1m3 0h1m16 0h1m28 0h1m3 0h1m2 0h2m16 0h1m4 0h1m39 0h1m3 0h1m26 0h1m1 0h1m20 0h1m7 0h1m24 0h1m5 0h1m3 0h1m5 0h1m-602 1h1m21 0h1m34 0h1m35 0h1m12 0h1m26 0h2m82 0h1m136 0h1m3 0h1m55 0h1m63 0h1m85 0h1m17 0h1m1 0h1m13 0h1m-559 1h1m62 0h1m28 0h1m80 0h1m108 0h1m43 0h1m11 0h1m20 0h1m5 0h1m12 0h1m86 0h1m-496 1h1m21 0h1m20 0h1m27 0h1m23 0h1m28 0h1m17 0h1m10 0h1m5 0h1m29 0h1m61 0h1m56 0h1m15 0h1m78 0h1m14 0h1m38 0h1m10 0h1m25 0h1m2 0h1m102 0h1m-580 1h1m24 0h1m43 0h1m6 0h1m24 0h1m112 0h1m11 0h1m100 0h1m6 0h1m15 0h1m17 0h1m50 0h1m2 0h1m83 0h1m26 0h1m17 0h1m-554 1h1m28 0h1m91 0h1m12 0h1m44 0h1m12 0h1m41 0h1m32 0h1m37 0h2m43 0h1m81 0h1m16 0h1m118 0h1m-567 1h1m24 0h1m40 0h1m1 0h1m5 0h3m2 0h1m23 0h1m81 0h1m27 0h2m74 0h1m25 0h1m82 0h1m152 0h1m-583 1h1m28 0h1m39 0h1m25 0h1m7 0h1m101 0h1m115 0h1m39 0h1m51 0h1m13 0h1m17 0h1m15 0h1m45 0h1m5 0h1m-492 1h1m76 0h1m68 0h1m39 0h1m65 0h1m21 0h1m12 0h1m12 0h1m12 0h1m21 0h1m8 0h1m47 0h1m53 0h1m8 0h2m42 0h1m61 0h1m-575 1h1m44 0h1m2 0h1m10 0h1m21 0h1m4 0h1m14 0h1m58 0h1m42 0h1m44 0h1m50 0h1m9 0h1m32 0h1m2 0h1m23 0h1m2 0h1m45 0h1m17 0h1m-414 1h1m66 0h1m77 0h2m143 0h1m145 0h1m9 0h1m42 0h1m75 0h1m-567 1h1m25 0h1m32 0h1m172 0h1m11 0h1m20 0h1m12 0h1m36 0h1m9 0h1m9 0h1m51 0h1m26 0h1m4 0h1m10 0h1m52 0h1m-461 1h1m50 0h1m106 0h1m3 0h1m28 0h1m181 0h2m-419 1h1m86 0h1m65 0h1m13 0h1m144 0h1m28 0h1m3 0h1m62 0h1m94 0h1m-456 1h1m32 0h1m59 0h1m16 0h1m39 0h1m7 0h1m40 0h1m8 0h1m159 0h1m18 0h1m32 0h1m27 0h1m-478 1h1m16 0h1m165 0h1m31 0h1m160 0h1m-338 1h1m65 0h1m290 0h1m-372 1h1m44 0h1m144 0h1m268 0h1m-382 1h1m30 0h1m13 0h1m30 0h1m35 1h1m173 0h1m-365 1h1m49 0h1m217 0h1m-255 1h1m26 0h1m255 0h1m-16 1h1m88 0h1m-372 1h1m35 0h1m19 0h1m210 1h1m-268 2h1m280 0h1m20 0h1m69 0h1m-373 3h1"/><path stroke="#00ff71" d="M111 166h1m37 0h1m21 0h2m3 0h1m1 0h1m7 0h1m4 0h1m40 0h1m26 0h1m20 0h1m12 0h1m32 0h1m17 0h1m44 0h1m9 0h1m2 0h1m13 0h1m19 0h1m25 0h1m68 0h1m63 0h1m-505 1h1m311 0h1m34 0h1m7 0h1m52 0h1m9 0h1m168 0h1m-589 1h1m80 0h1m4 0h1m38 0h1m128 0h1m32 0h1m12 0h1m195 0h1m58 0h1m-543 1h1m155 0h1m65 0h2m75 0h2m11 0h1m20 0h1m-302 1h1m1 0h1m34 0h1m5 0h1m79 0h1m30 0h1m54 0h1m87 0h1m109 0h1m-284 1h1m117 0h1m25 0h1m-266 1h1m47 0h1m71 0h1m21 0h1m12 0h1m143 0h1m24 0h1m-328 1h1m13 0h1m63 0h1m124 0h1m-201 1h1m154 0h1m215 0h1m-325 1h2m151 0h1m-126 1h1m188 0h1m-114 1h1m35 0h1m77 0h1m12 0h1m-246 1h1m4 0h1m36 0h1m218 0h1m-253 1h1m77 0h2m-111 1h1m139 0h1m-1 3h1m217 2h1"/><path stroke="#00ff25" d="M138 166h1m-27 1h1m36 0h1m252 1h1m-1 2h1"/></g><rect x="79.0" y="305.0" width="614.0" height="1.6" fill="#38c8f0" /><rect x="79.0" y="306.6" width="614.0" height="1.3" fill="#001008" /><rect x="79.0" y="307.9" width="614.0" height="2.2" fill="#70f010" /><rect x="79.0" y="310.1" width="614.0" height="0.6" fill="#701000" /><rect x="79.0" y="310.7" width="614.0" height="4.1" fill="#ff8a30" /><rect x="79.0" y="314.8" width="614.0" height="1.0" fill="#200020" /><rect x="79.0" y="315.8" width="614.0" height="2.5" fill="#8c3a9c" /><rect x="79.0" y="318.3" width="614.0" height="1.3" fill="#8088c8" /><rect x="79.0" y="319.6" width="614.0" height="2.8" fill="#0a24c0" /><rect x="92.4" y="313.9" width="2.0" height="2.5" fill="#ff4020" opacity="0.8"/><rect x="91.1" y="314.4" width="2.0" height="2.5" fill="#ffb030" opacity="0.8"/><rect x="240.9" y="314.2" width="6.0" height="2.5" fill="#ffb030" opacity="0.8"/><rect x="409.1" y="312.5" width="3.0" height="2.0" fill="#ffb030" opacity="0.8"/><rect x="546.8" y="311.9" width="6.0" height="1.5" fill="#c0f040" opacity="0.8"/><rect x="454.0" y="314.7" width="3.0" height="2.5" fill="#c0f040" opacity="0.8"/><rect x="609.6" y="314.5" width="2.0" height="1.5" fill="#c0f040" opacity="0.8"/><rect x="688.6" y="316.5" width="3.0" height="1.5" fill="#e8c040" opacity="0.8"/><rect x="128.6" y="313.5" width="6.0" height="2.0" fill="#ff4020" opacity="0.8"/><rect x="364.6" y="313.3" width="6.0" height="2.0" fill="#e8c040" opacity="0.8"/><rect x="247.8" y="314.0" width="3.0" height="2.0" fill="#c0f040" opacity="0.8"/><rect x="308.0" y="315.6" width="2.0" height="1.5" fill="#c0f040" opacity="0.8"/><rect x="605.1" y="314.0" width="4.0" height="1.5" fill="#e8c040" opacity="0.8"/><rect x="547.2" y="313.6" width="4.0" height="2.0" fill="#c0f040" opacity="0.8"/><rect x="661.8" y="316.4" width="6.0" height="2.0" fill="#ffb030" opacity="0.8"/><rect x="170.0" y="312.2" width="3.0" height="1.5" fill="#c0f040" opacity="0.8"/><rect x="291.0" y="313.2" width="4.0" height="2.0" fill="#ff4020" opacity="0.8"/><rect x="441.7" y="313.0" width="3.0" height="1.5" fill="#ffb030" opacity="0.8"/><rect x="492.5" y="311.2" width="2.0" height="1.5" fill="#f8e040" opacity="0.8"/><rect x="341.8" y="314.7" width="6.0" height="1.5" fill="#f8e040" opacity="0.8"/><rect x="542.1" y="311.8" width="3.0" height="2.0" fill="#ffb030" opacity="0.8"/><rect x="689.0" y="313.8" width="2.0" height="1.5" fill="#ffb030" opacity="0.8"/><rect x="588.1" y="311.3" width="4.0" height="2.0" fill="#f8e040" opacity="0.8"/><rect x="346.2" y="312.1" width="2.0" height="2.5" fill="#f8e040" opacity="0.8"/><rect x="592.6" y="315.5" width="6.0" height="1.5" fill="#ffb030" opacity="0.8"/><rect x="339.3" y="311.3" width="3.0" height="2.5" fill="#e8c040" opacity="0.8"/><rect x="559.1" y="312.6" width="3.0" height="2.5" fill="#ff4020" opacity="0.8"/><rect x="385.9" y="314.3" width="2.0" height="2.5" fill="#ffb030" opacity="0.8"/><rect x="283.9" y="316.4" width="2.0" height="2.5" fill="#f8e040" opacity="0.8"/><rect x="637.1" y="315.2" width="3.0" height="2.0" fill="#e8c040" opacity="0.8"/><rect x="489.6" y="313.1" width="3.0" height="2.5" fill="#e8c040" opacity="0.8"/><rect x="654.9" y="313.6" width="2.0" height="2.0" fill="#f8e040" opacity="0.8"/><rect x="89.5" y="311.3" width="6.0" height="2.5" fill="#c0f040" opacity="0.8"/><rect x="235.8" y="312.9" width="6.0" height="2.5" fill="#e8c040" opacity="0.8"/><rect x="484.1" y="313.3" width="3.0" height="2.5" fill="#ffb030" opacity="0.8"/><rect x="453.5" y="311.3" width="6.0" height="2.0" fill="#f8e040" opacity="0.8"/><rect x="228.7" y="316.4" width="4.0" height="2.5" fill="#f8e040" opacity="0.8"/><rect x="686.1" y="313.3" width="3.0" height="1.5" fill="#ff4020" opacity="0.8"/><rect x="309.4" y="312.8" width="6.0" height="1.5" fill="#ffb030" opacity="0.8"/><rect x="111.5" y="312.8" width="2.0" height="1.5" fill="#ffb030" opacity="0.8"/><rect x="275.4" y="316.4" width="6.0" height="2.5" fill="#e8c040" opacity="0.8"/><rect x="519.2" y="311.8" width="3.0" height="2.5" fill="#c0f040" opacity="0.8"/><rect x="425.1" y="314.6" width="2.0" height="1.5" fill="#f8e040" opacity="0.8"/><rect x="118.0" y="311.2" width="6.0" height="1.5" fill="#f8e040" opacity="0.8"/><rect x="536.2" y="314.8" width="3.0" height="1.5" fill="#ffb030" opacity="0.8"/><rect x="555.1" y="312.9" width="3.0" height="1.5" fill="#e8c040" opacity="0.8"/><rect x="84.3" y="312.9" width="2.0" height="1.5" fill="#e8c040" opacity="0.8"/><rect x="285.5" y="314.8" width="3.0" height="2.5" fill="#e8c040" opacity="0.8"/><rect x="340.1" y="314.7" width="3.0" height="2.5" fill="#f8e040" opacity="0.8"/><rect x="302.4" y="312.5" width="4.0" height="2.0" fill="#ff4020" opacity="0.8"/><rect x="79.7" y="316.2" width="4.0" height="2.0" fill="#f8e040" opacity="0.8"/><rect x="608.8" y="314.8" width="4.0" height="1.5" fill="#c0f040" opacity="0.8"/><rect x="79.6" y="313.2" width="4.0" height="1.5" fill="#f8e040" opacity="0.8"/><rect x="467.2" y="311.0" width="2.0" height="1.5" fill="#f8e040" opacity="0.8"/><rect x="309.2" y="315.3" width="2.0" height="2.0" fill="#c0f040" opacity="0.8"/><rect x="466.2" y="313.6" width="4.0" height="2.5" fill="#c0f040" opacity="0.8"/><rect x="460.9" y="311.2" width="3.0" height="2.5" fill="#ff4020" opacity="0.8"/><rect x="163.0" y="315.7" width="3.0" height="1.5" fill="#f8e040" opacity="0.8"/><rect x="370.2" y="314.4" width="2.0" height="1.5" fill="#e8c040" opacity="0.8"/><rect x="409.7" y="311.7" width="3.0" height="2.0" fill="#c0f040" opacity="0.8"/><rect x="455.0" y="314.2" width="3.0" height="2.5" fill="#ffb030" opacity="0.8"/><rect x="478.0" y="313.0" width="2.0" height="2.5" fill="#f8e040" opacity="0.8"/><rect x="494.4" y="313.0" width="2.0" height="2.5" fill="#ffb030" opacity="0.8"/><rect x="104.0" y="311.9" width="6.0" height="2.0" fill="#ffb030" opacity="0.8"/><rect x="291.1" y="314.6" width="4.0" height="1.5" fill="#ffb030" opacity="0.8"/><rect x="246.5" y="316.1" width="3.0" height="2.5" fill="#f8e040" opacity="0.8"/><rect x="204.6" y="316.4" width="4.0" height="2.0" fill="#ffb030" opacity="0.8"/><rect x="239.2" y="311.2" width="6.0" height="2.5" fill="#f8e040" opacity="0.8"/><rect x="424.7" y="313.0" width="3.0" height="2.0" fill="#e8c040" opacity="0.8"/><rect x="412.4" y="316.0" width="3.0" height="2.5" fill="#ffb030" opacity="0.8"/><rect x="566.0" y="311.6" width="2.0" height="2.0" fill="#f8e040" opacity="0.8"/><rect x="556.1" y="315.3" width="2.0" height="2.0" fill="#c0f040" opacity="0.8"/><rect x="593.9" y="314.2" width="3.0" height="1.5" fill="#f8e040" opacity="0.8"/><rect x="495.5" y="311.8" width="6.0" height="1.5" fill="#ff4020" opacity="0.8"/><rect x="119.1" y="313.1" width="6.0" height="1.5" fill="#ff4020" opacity="0.8"/><rect x="682.6" y="315.0" width="4.0" height="2.5" fill="#f8e040" opacity="0.8"/><rect x="680.3" y="311.8" width="3.0" height="2.0" fill="#c0f040" opacity="0.8"/><rect x="90.1" y="315.8" width="3.0" height="2.5" fill="#c0f040" opacity="0.8"/><rect x="394.3" y="315.9" width="3.0" height="2.0" fill="#c0f040" opacity="0.8"/><rect x="542.2" y="312.1" width="2.0" height="2.5" fill="#c0f040" opacity="0.8"/><rect x="608.4" y="312.4" width="6.0" height="2.5" fill="#f8e040" opacity="0.8"/><rect x="154.0" y="313.3" width="4.0" height="2.0" fill="#ffb030" opacity="0.8"/><rect x="379.8" y="311.4" width="6.0" height="1.5" fill="#e8c040" opacity="0.8"/><rect x="282.5" y="312.7" width="3.0" height="2.5" fill="#ffb030" opacity="0.8"/><rect x="148.2" y="312.2" width="2.0" height="1.5" fill="#ffb030" opacity="0.8"/><rect x="638.9" y="315.7" width="2.0" height="2.0" fill="#e8c040" opacity="0.8"/><rect x="358.8" y="316.4" width="2.0" height="2.0" fill="#c0f040" opacity="0.8"/><rect x="491.2" y="314.9" width="2.0" height="2.0" fill="#f8e040" opacity="0.8"/><rect x="514.9" y="316.5" width="2.0" height="2.5" fill="#f8e040" opacity="0.8"/><rect x="684.7" y="314.5" width="3.0" height="2.5" fill="#ff4020" opacity="0.8"/><rect x="141.5" y="320.2" width="1.0" height="1.6" fill="#40d0ff" opacity="0.9"/><rect x="264.8" y="320.2" width="2.0" height="1.6" fill="#40d0ff" opacity="0.9"/><rect x="346.1" y="320.2" width="2.0" height="1.6" fill="#40d0ff" opacity="0.9"/><rect x="136.4" y="320.2" width="2.0" height="1.6" fill="#40d0ff" opacity="0.9"/><rect x="692.9" y="320.2" width="1.0" height="1.6" fill="#30a0ff" opacity="0.9"/><rect x="538.3" y="320.2" width="2.0" height="1.6" fill="#30a0ff" opacity="0.9"/><rect x="516.2" y="320.2" width="2.0" height="1.6" fill="#30a0ff" opacity="0.9"/><rect x="187.7" y="320.2" width="2.0" height="1.6" fill="#30a0ff" opacity="0.9"/><rect x="285.4" y="320.2" width="2.0" height="1.6" fill="#30a0ff" opacity="0.9"/><rect x="484.2" y="320.2" width="2.0" height="1.6" fill="#40d0ff" opacity="0.9"/><rect x="276.6" y="320.2" width="2.0" height="1.6" fill="#40d0ff" opacity="0.9"/><rect x="214.6" y="320.2" width="2.0" height="1.6" fill="#30a0ff" opacity="0.9"/><rect x="594.6" y="320.2" width="2.0" height="1.6" fill="#40d0ff" opacity="0.9"/><rect x="148.7" y="320.2" width="2.0" height="1.6" fill="#30a0ff" opacity="0.9"/><rect x="160.7" y="320.2" width="1.0" height="1.6" fill="#30a0ff" opacity="0.9"/><rect x="689.7" y="320.2" width="2.0" height="1.6" fill="#30a0ff" opacity="0.9"/><rect x="131.0" y="320.2" width="2.0" height="1.6" fill="#40d0ff" opacity="0.9"/><rect x="307.7" y="320.2" width="1.0" height="1.6" fill="#40d0ff" opacity="0.9"/><rect x="630.1" y="320.2" width="1.0" height="1.6" fill="#40d0ff" opacity="0.9"/><rect x="527.4" y="320.2" width="2.0" height="1.6" fill="#40d0ff" opacity="0.9"/><rect x="392.2" y="320.2" width="2.0" height="1.6" fill="#30a0ff" opacity="0.9"/><rect x="240.8" y="320.2" width="2.0" height="1.6" fill="#40d0ff" opacity="0.9"/><rect x="308.0" y="320.2" width="1.0" height="1.6" fill="#30a0ff" opacity="0.9"/><rect x="686.9" y="320.2" width="2.0" height="1.6" fill="#30a0ff" opacity="0.9"/><rect x="275.4" y="320.2" width="1.0" height="1.6" fill="#40d0ff" opacity="0.9"/><rect x="458.9" y="320.2" width="1.0" height="1.6" fill="#40d0ff" opacity="0.9"/><rect x="131.4" y="320.2" width="2.0" height="1.6" fill="#40d0ff" opacity="0.9"/><rect x="116.6" y="320.2" width="1.0" height="1.6" fill="#40d0ff" opacity="0.9"/><rect x="589.3" y="320.2" width="1.0" height="1.6" fill="#40d0ff" opacity="0.9"/><rect x="492.7" y="320.2" width="2.0" height="1.6" fill="#30a0ff" opacity="0.9"/><rect x="327.5" y="320.2" width="2.0" height="1.6" fill="#30a0ff" opacity="0.9"/><rect x="123.0" y="320.2" width="1.0" height="1.6" fill="#40d0ff" opacity="0.9"/><rect x="318.4" y="320.2" width="1.0" height="1.6" fill="#40d0ff" opacity="0.9"/><rect x="396.5" y="320.2" width="2.0" height="1.6" fill="#40d0ff" opacity="0.9"/><rect x="241.3" y="320.2" width="1.0" height="1.6" fill="#40d0ff" opacity="0.9"/><rect x="445.1" y="320.2" width="1.0" height="1.6" fill="#40d0ff" opacity="0.9"/><rect x="321.1" y="320.2" width="1.0" height="1.6" fill="#40d0ff" opacity="0.9"/><rect x="405.0" y="320.2" width="1.0" height="1.6" fill="#30a0ff" opacity="0.9"/><rect x="347.7" y="320.2" width="2.0" height="1.6" fill="#30a0ff" opacity="0.9"/><rect x="497.0" y="320.2" width="1.0" height="1.6" fill="#40d0ff" opacity="0.9"/><rect x="158.7" y="320.2" width="1.0" height="1.6" fill="#30a0ff" opacity="0.9"/><rect x="263.2" y="320.2" width="2.0" height="1.6" fill="#30a0ff" opacity="0.9"/><rect x="132.7" y="320.2" width="2.0" height="1.6" fill="#40d0ff" opacity="0.9"/><rect x="369.8" y="320.2" width="1.0" height="1.6" fill="#30a0ff" opacity="0.9"/><rect x="553.8" y="320.2" width="2.0" height="1.6" fill="#30a0ff" opacity="0.9"/><rect x="339.6" y="320.2" width="2.0" height="1.6" fill="#30a0ff" opacity="0.9"/><rect x="127.6" y="320.2" width="2.0" height="1.6" fill="#40d0ff" opacity="0.9"/><rect x="448.8" y="320.2" width="1.0" height="1.6" fill="#30a0ff" opacity="0.9"/><rect x="409.8" y="320.2" width="1.0" height="1.6" fill="#40d0ff" opacity="0.9"/><rect x="684.6" y="320.2" width="1.0" height="1.6" fill="#30a0ff" opacity="0.9"/><rect x="79.0" y="332.0" width="614.0" height="156.0" fill="#000" /><g fill="none" stroke-width="1" transform="translate(.5 0)"><path stroke="#00006e" d="M79 334v6m0 4v2m0 39v2m0 61v3m0 8v2m0 7v2m1-137v4m0 65v2m0 3v3m0 38v3m0 12v2m1-63v2m0 3v3m0 14v4m0 20v2m0 13v2m1-58v2m0 16v2m0 32v2m0 2v2m0 6v2m1-141v2m0 51v2m0 62v2m0 12v2m2-58v3m0 15v2m0 22v2m0 8v2m0 2v2m1-127v2m0 68v2m0 35v2m0 2v2m0 8v2m0 7v2m1-138v2m0 62v2m0 27v2m0 32v2m0 7v2m1-74v2m0 9v2m0 39v2m1-118v4m0 71v2m0 36v2m0 1v2m1-115v5m0 67v2m0 31v2m1-110v2m0 1v2m0 67v2m0 34v3m1-36v2m1-5v2m1-68v2m0 47v3m0 17v2m0 33v2m0 23v2m1-137v2m0 65v2m0 44v2m1-109v2m0 99v2m0 4v2m2-43v2m0 1v2m1-63v2m0 43v2m0 49v3m0 11v2m1-73v2m0 4v2m0 20v3m0 26v3m0 9v3m1-72v2m0 4v2m0 6v2m0 12v2m0 27v4m1-61v2m0 1v3m0 21v5m0 7v2m0 1v2m0 14v4m1-34v2m1-3v4m0 3v2m0 22v4m0 7v3m1-72v2m0 26v2m0 28v2m0 9v3m1-67v2m0 7v2m0 12v2m0 9v2m1-13v2m0 9v2m0 15v4m1-32v2m0 9v2m0 17v3m0 10v2m1-126v3m0 114v2m0 12v2m0 2v2m0 2v3m1-142v2m0 58v2m0 3v2m0 35v2m0 12v2m1-118v2m0 2v3m0 60v5m0 14v3m0 13v2m0 13v4m1 2v2m1-125v2m0 1v5m0 80v2m0 27v2m1-119v4m0 50v2m0 4v2m0 39v2m0 14v2m1-119v2m0 2v2m0 54v2m0 8v2m0 29v2m0 28v2m1-69v3m0 20v2m0 16v2m0 10v3m1-116v3m0 47v2m0 53v2m0 5v2m0 9v2m1-120v3m0 93v2m0 12v2m0 14v2m1-70v2m0 33v2m0 6v3m0 18v2m1-26v2m0 12v2m1-70v2m0 8v2m0 25v2m0 10v3m0 11v2m0 19v2m1-86v2m0 11v2m0 19v2m0 42v3m1-134v6m0 47v2m0 10v2m0 8v2m0 18v2m0 34v2m1-36v2m0 32v2m1-80v2m0 76v2m1-132v3m0 60v2m0 21v2m0 13v2m0 3v2m0 7v3m0 12v3m1-47v2m0 18v2m1-109v2m0 62v3m0 28v2m0 13v3m0 1v2m0 15v2m1-62v3m0 8v3m0 28v2m0 12v2m1 8v2m1-139v2m0 8v2m0 58v2m0 11v2m0 32v2m1-111v3m0 48v2m0 9v2m0 9v2m0 44v2m1-48v2m1-13v3m0 8v4m0 32v2m0 3v2m0 3v2m0 8v2m1-69v2m0 37v2m0 6v2m0 3v2m1-54v2m0 37v2m0 6v2m0 18v2m1-69v2m0 10v3m0 27v3m1-56v2m0 28v4m0 24v2m0 8v2m0 9v2m2-49v2m0 30v2m0 7v2m0 6v2m1-31v2m0 3v2m0 5v3m0 6v2m0 6v2m1-50v2m0 29v2m0 15v2m1-75v2m0 42v2m0 10v2m0 7v2m1-70v2m0 1v2m0 22v3m0 17v2m0 7v2m0 1v3m0 14v2m1-75v2m0 50v2m0 2v3m0 6v2m0 6v2m1-75v2m0 23v2m0 29v3m0 6v2m0 6v2m1-140v4m0 85v3m0 17v2m0 10v2m0 7v2m0 6v2m1-138v2m0 86v2m0 29v2m0 7v2m0 6v2m1-6v3m1-4v2m1-58v2m0 15v4m0 19v2m0 14v2m1-111v3m0 46v2m0 2v2m0 15v2m0 21v4m0 4v2m0 3v2m0 1v2m1-125v4m0 63v2m0 6v3m0 8v2m0 1v2m0 3v2m0 2v2m0 5v4m0 6v2m0 3v2m1-55v2m0 15v4m0 10v2m0 7v4m0 4v2m0 3v2m0 1v2m2-125v3m0 44v2m0 35v4m0 6v3m0 1v2m0 5v4m0 11v2m1-59v2m0 19v4m0 17v4m0 11v2m0 1v3m1-67v2m0 37v2m0 5v4m0 14v4m1-37v2m0 16v2m0 13v3m1-138v2m0 6v2m0 55v2m0 20v4m0 3v3m0 9v2m0 27v2m1-127v2m0 76v2m0 45v3m1-74v3m0 22v2m0 4v2m0 38v2m1-42v2m0 5v2m1 31v3m1-85v2m0 9v2m0 21v4m0 3v3m0 9v2m0 27v4m1-74v2m0 21v2m0 4v4m0 37v2m1-73v3m0 20v3m0 5v2m0 26v2m1-38v4m0 5v2m0 4v2m0 31v3m2-121v2m0 40v3m0 9v3m0 10v2m0 11v2m0 13v2m0 1v2m0 18v2m1-137v2m0 68v3m0 11v2m0 11v2m0 3v2m0 8v2m0 18v2m1-62v2m0 25v2m0 11v2m0 18v2m0 6v2m1-118v2m0 27v2m0 17v2m0 38v2m0 18v2m1-81v2m0 5v2m0 10v2m0 18v2m0 3v3m0 2v2m0 7v3m0 7v2m0 17v2m1-72v4m0 19v2m0 3v2m0 12v2m0 21v2m0 3v2m1-89v2m0 17v2m0 38v2m0 18v2m0 6v2m1-124v2m0 33v2m0 57v2m0 21v2m0 3v2m1-70v2m0 37v2m0 14v2m0 6v2m1-78v2m0 2v2m0 28v2m0 1v4m0 15v2m0 3v5m0 12v2m1-52v2m0 3v2m0 1v5m0 7v2m0 6v2m0 4v3m0 13v2m1-139v2m0 2v3m0 56v2m0 13v2m0 16v4m0 21v4m0 12v2m1-139v2m0 5v2m0 56v2m0 25v2m0 27v4m0 12v2m1-125v2m0 82v2m0 16v2m0 3v4m1-57v2m0 1v2m0 12v2m0 11v2m0 21v4m0 12v2m1-18v4m0 2v2m0 8v2m1-133v4m0 58v2m0 22v2m0 27v4m0 12v2m1-139v2m0 1v2m0 1v2m0 56v2m0 31v3m0 16v2m0 3v4m0 12v2m1-47v2m0 3v3m0 19v6m0 12v2m1-80v2m0 14v2m0 6v3m0 9v2m0 4v2m0 3v2m0 25v3m0 1v2m2-64v2m0 20v2m0 7v2m0 10v2m0 13v6m1-64v2m0 6v3m0 4v2m0 41v4m1-136v4m0 78v3m0 9v2m0 9v2m0 2v3m0 20v6m1-64v2m0 6v2m0 16v2m0 7v3m0 21v2m0 1v2m0 1v2m1-68v3m0 6v3m0 9v2m0 9v2m0 3v2m0 20v4m0 3v2m1-87v2m0 6v2m0 9v3m0 29v2m0 25v6m1-139v3m0 72v2m0 7v2m0 20v2m0 25v3m0 4v2m1-83v2m0 2v2m0 10v2m0 7v2m0 15v2m0 24v2m0 6v3m1-64v3m0 1v2m0 4v2m0 19v2m0 4v2m0 14v3m0 9v2m2-75v3m0 58v2m1-62v2m0 9v2m0 25v3m0 19v3m1-45v2m0 41v2m0 9v2m1-75v3m0 6v2m0 1v2m0 7v2m0 16v2m0 4v2m0 6v2m0 6v3m1-128v5m0 59v2m0 7v2m0 11v2m0 38v2m1-130v2m0 4v3m0 34v2m0 29v3m0 50v2m1-54v2m0 1v3m0 4v2m0 18v2m0 3v2m0 15v3m1-130v4m0 63v2m0 2v2m0 2v5m0 47v3m1-130v4m0 49v2m0 37v2m0 19v2m0 17v3m1-70v2m0 24v2m0 20v2m0 17v3m1-77v2m0 5v2m0 21v2m0 5v2m0 4v2m0 20v3m0 1v2m0 3v2m1-63v2m0 22v2m0 16v2m0 17v2m1-134v4m0 54v2m0 35v2m0 16v2m0 17v3m2-135v4m0 49v2m0 15v3m0 18v2m0 20v2m1-50v2m0 24v3m0 1v4m0 33v3m1-135v2m0 1v3m0 30v2m0 57v2m0 4v2m0 29v5m1-46v3m0 18v2m2-50v2m0 17v2m0 4v2m0 32v2m0 2v2m1-62v2m0 7v2m0 5v2m0 4v2m0 6v2m0 4v2m0 1v3m0 18v2m1-65v2m0 1v2m0 20v2m0 6v2m0 8v2m0 2v3m0 13v2m1-59v2m0 17v2m0 15v3m0 14v2m0 2v2m1-127v7m0 44v2m0 15v3m0 29v3m0 7v2m0 13v2m1-129v2m0 95v2m0 28v2m1-129v2m0 2v2m0 61v2m0 28v2m0 3v3m0 6v3m0 13v2m1-129v2m0 51v2m0 9v2m0 17v2m0 21v3m0 3v2m0 13v2m1-128v8m0 55v2m0 1v5m0 17v2m0 11v2m0 2v3m0 2v3m0 9v2m0 2v2m1-18v2m0 21v2m1-19v2m1-107v2m0 40v2m0 13v2m0 1v2m0 9v2m0 12v2m0 12v2m0 15v2m0 4v2m1-110v2m0 26v2m0 9v3m0 29v2m0 12v2m0 7v2m1-26v3m0 12v2m0 4v2m0 15v2m1-53v2m0 12v2m0 18v2m0 4v2m1-42v2m0 11v3m0 21v2m1-120v4m0 48v2m0 55v2m0 7v2m1-12v3m0 4v2m1-119v4m0 6v3m0 41v2m0 1v2m0 24v2m0 12v2m0 18v2m0 15v2m1-136v4m0 54v2m0 17v3m0 40v2m1-68v2m0 22v2m0 7v2m0 5v2m0 21v2m0 21v2m1-41v3m0 13v2m0 1v3m0 1v3m1-20v2m0 8v2m0 1v3m1-54v2m0 7v2m0 22v2m1-26v2m0 40v2m0 18v2m1-128v3m0 90v2m0 7v2m0 2v2m0 18v2m1-138v4m0 4v4m0 62v2m0 14v2m0 24v2m0 18v2m1-140v2m0 55v2m0 46v2m0 7v2m0 2v3m1-65v2m0 1v2m0 40v2m0 2v2m0 11v2m0 10v2m0 6v2m1-134v2m0 6v2m0 63v3m0 13v2m0 11v2m0 22v2m1-114v2m0 34v2m0 1v2m0 15v2m0 17v2m0 3v2m0 24v2m0 4v2m1-2v2m1-78v3m0 17v2m0 17v2m0 33v3m1-77v3m0 13v2m0 7v2m0 17v2m1-26v2m0 27v2m0 19v2m1-72v3m0 17v2m0 17v2m1-21v2m0 22v2m0 1v4m0 19v2m1-2v2m1-72v2m0 22v2m0 13v2m0 8v2m0 25v3m1-131v2m0 4v2m0 104v2m0 1v2m1-5v5m1-123v2m0 73v2m0 17v2m0 21v2m0 1v3m1-51v2m0 1v2m0 29v3m0 3v2m0 4v3m1-2v3m0 5v3m2-55v2m0 29v3m0 3v2m1-39v2m0 29v3m1-103v4m0 46v3m0 12v3m0 1v2m1-2v2m1 4v2m0 2v2m0 19v2m0 12v2m1-57v3m0 3v2m0 8v2m0 1v2m0 4v2m0 28v2m0 17v3m1-52v2m0 6v2m0 6v2m1-43v3m0 42v2m1-47v2m0 17v3m0 11v2m0 20v2m0 18v2m1-58v2m0 19v2m0 13v2m1-57v3m0 16v2m0 34v2m1-56v2m0 17v2m2-87v2m0 70v2m0 7v2m0 1v3m0 19v2m0 12v2m1-120v2m0 3v3m0 68v2m0 2v2m0 28v2m0 3v2m1-2v2m1-66v4m0 21v2m0 2v2m0 9v2m0 21v3m0 21v2m1-138v2m0 48v2m0 22v2m0 2v2m0 9v2m0 22v2m0 17v3m1-139v4m0 63v2m0 29v2m0 17v3m0 16v3m0 1v2m1-60v2m0 32v4m0 12v2m0 2v2m0 2v2m1-142v2m0 91v3m0 19v4m2-119v2m0 5v2m0 73v2m0 5v2m0 2v3m0 16v3m0 2v2m0 17v2m1-85v3m0 22v2m0 9v2m0 25v3m0 9v2m0 7v2m0 1v2m1-128v2m0 73v4m0 9v2m0 8v3m0 18v2m0 2v2m1-123v2m0 52v2m0 12v2m0 10v2m0 4v2m0 8v3m0 18v3m0 1v2m1-56v3m0 12v2m0 2v2m0 8v3m0 18v3m0 1v2m1-50v4m0 3v4m0 2v2m0 8v2m0 19v3m1-112v2m0 63v2m0 5v4m0 2v2m0 6v4m0 2v3m0 14v3m1-47v2m0 5v2m0 4v2m0 6v4m0 2v3m0 14v3m0 1v2m1-126v4m0 1v2m0 82v2m0 8v3m0 18v3m1-47v3m0 20v3m0 9v2m0 7v3m0 1v2m1-139v2m0 68v2m0 17v2m0 5v2m0 4v2m0 20v2m0 7v3m1-47v2m0 5v2m0 4v2m0 8v2m0 2v3m0 14v3m0 1v2m1-139v2m0 1v5m0 51v2m0 7v3m0 1v2m0 4v2m0 5v2m0 9v2m0 9v2m0 7v2m0 15v3m1-51v2m0 29v2m0 2v3m0 10v3m1-77v2m0 11v2m0 4v2m0 8v2m0 1v2m0 10v3m0 1v2m0 3v6m0 4v2m0 9v3m0 2v2m1-7v3m1-77v2m0 7v2m0 2v2m0 33v2m0 3v2m0 2v2m0 1v2m0 1v2m0 9v3m1-64v2m0 11v2m0 10v2m0 8v2m0 3v2m0 5v5m0 3v2m0 4v3m1-3v3m1-58v2m0 27v2m0 8v7m0 9v2m1-64v3m0 4v2m0 5v2m0 1v2m0 22v3m0 5v4m0 9v3m1-77v2m0 11v2m0 4v2m0 5v2m0 1v2m0 17v2m0 3v3m0 5v4m0 10v2m0 1v2m1-76v2m0 27v3m0 15v2m0 19v3m0 2v2m1-75v2m0 71v3m1-28v2m1-99v2m0 77v2m0 3v2m0 17v2m1-106v2m0 77v3m0 15v2m0 20v2m1-132v2m0 4v2m0 88v2m0 9v3m0 21v2m1-44v2m0 17v3m0 15v2m0 1v2m0 7v2m1-57v2m0 6v2m0 15v2m0 2v2m0 12v2m1 10v2m1-55v2m0 4v2m0 37v2m1-55v2m0 21v2m0 1v2m0 16v2m0 12v2m1-123v3m0 65v2m0 12v2m0 35v2m1-60v4m0 17v2m0 3v4m0 28v4m1-63v2m0 15v2m0 3v2m0 5v2m0 10v3m0 3v2m0 10v2m1-137v2m0 3v3m0 53v2m0 13v3m0 1v2m0 11v2m0 3v2m0 5v2m0 30v2m1-62v4m0 36v3m1-120v2m0 77v3m0 16v2m0 2v2m0 1v3m0 27v2m0 3v2m1-73v2m0 16v2m0 16v3m0 9v3m0 3v2m0 12v2m1-63v4m0 25v2m0 10v3m0 15v4m1-59v2m0 11v2m0 10v3m0 28v3m1-77v2m0 8v2m0 10v2m0 11v2m0 19v2m0 13v2m1-135v2m0 60v2m0 20v3m0 20v2m0 24v2m1-63v2m0 10v2m0 11v2m0 29v2m0 3v2m1-135v8m1 76v2m0 11v2m0 29v2m0 3v2m1-80v2m0 27v2m0 24v2m0 7v2m0 7v2m0 3v2m1-18v3m1-120v2m0 1v3m0 1v5m0 45v2m0 19v2m0 4v2m0 24v2m0 6v2m0 17v2m1-67v2m0 4v2m0 30v2m0 6v3m0 12v3m1-52v2m0 33v2m0 12v2m1-135v3m0 1v2m0 68v2m0 5v2m0 10v2m0 17v2m0 26v2m1-40v2m0 33v3m1-140v4m0 62v2m0 1v4m0 10v2m0 33v3m0 19v2m1-132v2m0 40v2m0 12v2m0 15v2m0 8v2m0 7v2m0 8v2m0 1v2m0 3v2m1-62v2m0 70v2m0 4v3m1-75v2m0 3v2m0 20v2m0 14v2m0 4v2m0 1v2m0 20v2m1-76v2m0 11v4m0 7v2m0 1v2m0 7v4m0 17v2m1-54v2m0 1v2m0 4v2m0 36v4m2-104v2m0 37v2m0 30v3m0 1v2m0 25v2m0 18v2m1-142v2m0 80v2m0 39v2m1-23v2m0 6v2m0 4v2m0 2v2m0 1v2m1-125v3m0 102v3m0 14v3m1-71v3m0 3v2m0 17v2m0 35v2m1-65v2m0 68v2m0 6v2m1-51v2m0 26v2m0 9v4m1-65v2m0 58v2m2-50v2m0 8v2m1-20v4m0 30v2m0 23v2m1-65v2m0 54v5m0 1v3m1-71v3m0 3v2m0 18v2m0 15v2m0 3v2m0 12v3m1-42v2m0 18v2m0 3v2m0 13v2m1-65v2m0 4v2m0 15v2m0 23v2m0 12v8m1-124v2m0 67v2m0 31v2m0 12v3m0 3v2m1-122v4m0 2v2m0 50v2m0 7v2m0 26v2m0 3v2m0 13v4m0 1v2m0 13v2m1-139v6m0 49v2m0 3v2m0 11v2m0 5v2m0 20v2m0 13v2m0 3v2m0 11v3m1-138v4m0 68v2m0 6v2m0 15v2m0 3v2m0 12v5m0 1v2m0 11v3m1-138v6m0 49v2m0 3v2m0 15v2m0 23v2m0 12v3m0 3v2m0 11v2m1-136v5m0 74v2m0 20v2m0 4v3m0 6v2m0 1v2m0 1v2m0 10v3m1-137v2m0 85v4m0 2v2m0 1v2m0 12v4m0 13v2m1-46v3m0 10v2m0 12v3m0 19v2m1-135v2m0 2v2m0 52v2m0 24v3m0 3v2m0 5v2m0 2v3m0 7v5m1-32v3m0 10v2m0 8v2m0 2v3m0 13v3m1-46v3m0 7v2m0 1v2m0 12v2m0 15v2m1-40v2m0 2v2m0 15v2m0 6v2m1-121v3m0 1v2m0 78v3m0 1v4m0 5v2m0 12v4m0 4v2m1-37v3m0 3v2m0 2v2m0 1v3m0 11v4m0 13v2m1-40v2m0 5v2m0 9v2m0 1v3m0 5v3m0 11v2m1-24v3m1-44v3m0 9v3m0 5v3m0 18v2m0 1v2m0 1v3m0 1v3m1-54v2m0 6v2m0 10v3m0 19v3m0 6v3m0 3v2m0 2v2m1-58v2m0 14v2m0 20v2m0 7v2m0 3v2m0 4v3m1-135v2m0 72v2m0 1v2m0 2v3m0 4v3m0 15v2m0 1v5m0 2v3m1-115v5m0 65v2m0 5v3m0 5v3m0 20v2m1-40v2m0 1v2m0 10v3m0 20v2m0 2v3m0 12v4m1-58v2m0 11v2m0 18v4m0 6v3m0 3v2m0 2v4m1-60v2m0 1v2m0 9v4m0 19v3m0 3v2m0 7v2m1-119v2m0 63v3m0 5v2m0 5v3m0 20v2m0 2v3m0 11v5m1-136v5m0 70v2m0 1v2m0 1v3m0 29v2m1-34v2m0 12v2m0 1v2m0 16v2m1-118v4m0 66v2m0 26v2m0 2v2m0 12v2m0 3v2m0 10v2m1-133v3m0 55v2m0 19v2m0 29v2m0 2v4m0 15v2m1-137v2m0 76v2m0 1v2m0 12v2m0 1v3m0 15v2m0 17v2m1-67v2m0 41v2m0 1v2m0 3v2m0 12v2m1-137v2m0 68v2m0 6v2m0 18v2m0 16v3m0 1v2m0 18v2m1-138v2m0 72v2m0 1v2m0 15v2m0 16v2m0 22v2m1-64v2m0 1v2m0 15v2m0 16v5m0 14v2m1-42v2m0 1v2m0 13v2m0 1v4m0 15v2m1-39v2m0 17v2m0 17v2m1-31v2m0 13v3m1-39v3m0 4v2m0 12v2m0 8v3m0 16v2m1-67v2m0 4v2m0 33v2m0 22v2m1-138v2m0 1v2m0 53v2m0 45v3m1-38v3m0 4v2m0 14v2m0 1v2m2-28v3m0 4v2m1-7v2m0 13v2m0 16v3m0 14v3m0 8v2m1-30v4m0 4v2m0 7v2m1-54v3m0 24v2m0 6v4m0 12v4m0 8v2m1-129v2m0 59v2m0 24v2m0 3v2m0 7v3m1-21v2m0 2v2m0 12v2m1-56v3m0 2v2m0 18v2m0 9v2m0 2v2m0 27v2m1-124v2m0 52v3m0 1v2m0 11v2m0 5v2m0 42v2m1-124v2m1-2v2m0 2v2m0 47v4m0 10v2m0 9v2m0 16v2m0 9v3m0 20v2m1-74v3m0 17v2m0 9v2m0 7v2m0 6v2m0 8v2m1-60v2m0 29v2m0 2v2m0 22v2m1-48v2m0 20v2m0 11v3m0 3v2m1-114v2m0 4v2m0 46v3m0 2v2m0 28v2m0 2v2m0 11v2m0 19v2m1-65v2m0 61v2m1-24v2m1 30v2m1-21v2m0 1v2m0 4v2m1-128v7m0 51v2m0 7v2m0 35v2m0 2v2m0 7v2m0 7v2m0 2v2m0 4v2m1-139v4m0 2v5m0 42v2m0 4v2m0 44v2m0 2v2m0 7v2m0 7v2m0 2v2m0 2v4m1-22v3m0 1v2m1-18v2m0 7v2m0 1v3m0 1v2m1-69v2m0 8v2m0 52v2m0 1v2m0 4v2m1-126v3m0 8v2m0 101v3m0 1v2m0 4v2m0 8v2m1-131v4m0 47v3m0 1v2m0 26v2m0 13v3m0 3v5m0 17v3m1-45v2m0 10v2m0 1v2m0 2v4m0 20v2m1-46v3m0 1v2m0 4v2m0 4v2m0 3v3m0 16v2m0 1v3m1-137v2m0 2v2m0 54v2m0 7v2m0 7v4m0 6v2m0 1v2m0 14v2m0 1v5m0 16v2m0 1v3m1-137v3m0 3v2m0 75v2m0 6v3m0 13v2m0 3v2m0 21v2m1-137v2m0 5v2m0 32v2m0 17v2m0 16v3m0 7v2m0 1v3m0 6v3m0 4v2m0 3v3m0 16v2m0 2v2m2-134v2m0 49v2m0 7v2m0 4v2m0 7v3m0 2v2m0 6v3m0 13v2m0 26v2m1-74v2m0 4v2m0 7v2m0 8v2m0 1v3m0 13v2m0 3v4m0 15v2m0 1v3m1-135v4m0 57v2m0 39v2m0 1v2m0 3v3m0 20v2m1-137v3m0 95v2m0 2v2m0 1v2m0 31v3m1-139v2m0 49v2m0 32v2m0 16v4m0 31v2m1-77v2m0 15v2m0 4v2m0 4v2m0 2v2m0 2v2m0 1v2m1-42v2m0 11v2m0 14v2m0 2v2m0 2v2m0 1v3m0 32v2m1-131v2m0 52v2m0 27v2m0 2v2m0 5v2m1-54v2m0 10v2m0 7v2m0 6v2m0 21v2m1-32v2m0 25v2m0 3v2m0 31v2m1-44v2m0 36v3m0 1v2m1-70v4m0 12v3m0 7v2m0 5v4m0 22v2m0 7v2m1-54v3m0 11v2m0 1v6m0 29v2m1-54v2m0 15v2m0 6v2m0 1v2m0 17v3m1-56v2m0 5v3m0 10v2m0 1v2m0 8v3m0 3v4m1-69v2m0 31v2m0 11v2m0 1v2m0 6v2m0 6v4m0 7v2m0 1v2m1-49v3m0 11v2m0 1v2m0 6v2m0 1v2m0 4v2m0 11v3m1-138v2m0 54v2m0 30v4m0 13v4m0 4v2m0 1v2m0 4v2m1-42v2m0 21v2m0 14v3m0 11v3m1-138v4m0 61v2m0 21v3m0 14v2m0 15v2m0 11v3m1-50v2m0 15v2m0 6v2m0 1v2m0 3v3m1-36v4m0 13v2m0 6v2m0 6v3m0 3v2m0 6v3m1-56v2m0 5v3m0 13v2m0 6v2m0 1v2m0 9v2m2-45v2m0 9v2m0 15v2m0 3v3m0 11v3m0 1v2m0 3v2m1-67v2m0 7v2m0 21v2m0 3v2m0 3v3m0 11v2m0 7v2m1-84v2m0 20v3m0 1v2m0 25v4m0 2v2m0 4v2m0 15v2m1-142v2m0 79v2m0 12v2m0 15v2m0 3v3m0 4v2m0 5v2m0 2v2m1-62v2m0 21v2m0 2v2m0 8v2m0 17v2m0 2v2m1-135v4m0 69v2m0 4v2m0 1v2m0 31v3m0 3v2m0 6v2m0 1v3m1-62v2m0 7v2m0 8v2m0 2v2m0 12v2m0 3v3m0 11v2m0 1v3m0 3v2m1-142v8m0 67v2m0 3v2m0 16v2m0 5v2m0 10v2m0 12v3m0 1v2m1-137v2m0 56v2m0 15v2m0 4v2m0 1v3m0 11v2m0 12v2m0 9v2m0 9v2m0 4v2m1-142v2m0 1v5m0 2v2m0 46v2m0 3v3m0 4v2m0 46v2m0 7v2m0 11v2m1-70v3m0 23v2m0 1v2m0 15v2m0 3v2m0 2v2m0 7v2m0 2v2m1-139v2m0 56v2m0 9v3m0 14v2m0 27v2m0 3v2m1-62v2m0 7v2m0 15v2m0 27v2m0 3v2m1-62v2m0 7v2m0 15v2m0 4v2m0 4v2m0 15v2m1-48v3m0 43v2m0 3v2m0 2v2m1-69v2m0 1v2m0 21v2m0 1v2m0 32v2m1-54v2m0 45v2m0 19v3m1-59v2m0 4v2m0 10v2m0 9v2m0 4v2m0 1v4m0 11v2m1-77v2m0 9v2m0 44v2m0 3v2m0 9v2m0 4v2m1-71v2m0 9v3m0 27v2m1 5v2m1-50v2m0 9v3m0 26v3m1-57v2m0 1v2m0 24v2m0 31v2m0 1v2m1-124v2m0 1v3m0 65v2m0 10v2m0 26v4m1-115v2m0 2v3m0 50v2m0 12v2m0 10v2m0 17v2m0 8v2m0 5v2m1-121v2m0 4v2m0 49v2m0 1v2m0 6v2m0 12v3m0 17v2m0 8v2m1-43v2m0 9v4m0 26v2m0 4v3m0 1v2m1-30v3m0 15v2m1-54v2m0 9v2m0 10v4m0 8v2m0 15v2m0 8v2m0 10v3m1-33v4m0 3v2m0 3v3m1-32v2m0 17v2m0 9v2m0 2v2m1-62v2m0 3v2m0 19v2m0 16v3m0 3v2m0 4v2m0 21v2m1-82v2m0 44v2m0 3v2m0 4v2m0 3v2m0 1v3m0 4v2m0 1v2m1-133v2m0 53v2m0 5v2m0 24v2m0 12v2m0 9v2m0 2v2m1-64v3m0 4v3m0 23v2m0 10v4m0 3v2m0 4v2m1-119v9m0 50v3m0 43v3m0 3v2m0 19v2m0 1v2m2-133v2m0 54v2m0 4v2m0 20v2m0 2v2m0 4v2m0 4v4m0 24v2m0 6v2m1-140v2m0 2v2m0 88v2m0 7v3m1-106v4m0 52v2m0 31v2m0 12v2m0 25v2m1-134v2m0 76v2m0 2v2m0 7v2m0 29v2m0 8v5m0 3v2m1-84v2m0 18v2m0 25v2m0 5v3m0 6v2m0 9v2m0 2v2m1-61v3m0 5v2m0 15v2m0 8v3m0 7v2m0 8v2m0 2v2m1-138v2m0 2v2m0 1v2m0 1v2m0 46v2m0 31v2m0 29v2m0 9v2m0 5v2m1-84v2m0 18v2m0 25v2m1-49v2m0 2v2m0 49v2m0 7v2m0 8v3m0 5v2m1-136v2m0 51v3m0 16v2m0 5v2m0 35v2m0 4v2m0 2v3m1-58v3m0 32v3m0 7v2m0 16v2m1-60v2m0 1v2m0 18v2m0 6v2m0 25v2m1-64v2m0 5v2m0 13v2m0 25v2m1-2v2m1-129v2m0 58v2m0 16v2m0 5v2m0 29v2m0 1v2m0 6v2m0 8v2m1-54v2m0 40v2m1-45v2m0 2v2m0 29v2m0 14v2m1-77v2m0 26v2m0 24v2m0 4v2m1-3v4m0 14v2m1-137v3m0 55v3m0 56v3m0 5v3m1-130v2m0 4v2m0 80v2m0 26v2m0 9v2m1-51v2m0 8v2m0 16v3m0 18v3m1-47v2m0 3v2m0 4v2m0 5v4m0 22v2m0 4v3m1-136v2m0 81v2m0 5v2m0 9v2m1-103v2m0 89v3m0 4v2m0 1v4m0 8v2m0 18v2m1-135v2m0 2v2m0 76v4m0 5v2m0 5v2m0 1v2m1-12v2m0 8v2m0 10v2m0 12v2m1-39v4m0 33v2m1-50v2m0 2v2m0 2v4m0 3v2m0 5v2m1-20v3m0 3v4m0 5v2m0 27v2m2-129v4m0 71v2m0 14v2m0 1v2m1-33v2m0 5v2m0 3v3m0 29v2m0 1v3m0 3v3m1-38v2m0 24v2m0 1v2m0 4v3m0 3v2m0 3v2m0 5v2m1-29v2m0 1v3m0 9v2m0 4v2m0 4v3m1-79v2m0 15v2m0 30v2m0 1v2m0 10v2m0 3v3m0 3v2m1-135v2m0 56v2m0 15v2m0 33v2m0 10v2m0 3v3m1-130v3m0 72v2m0 4v2m0 27v3m0 14v2m2-53v2m0 2v3m0 27v2m0 5v2m0 8v3m0 3v3m1-134v2m0 54v2m0 15v4m0 43v2m1-118v2m0 8v2m0 40v2m0 3v2m0 5v2m0 3v3m0 3v2m0 25v4m0 10v2m0 3v3m0 4v3m1-39v2m0 16v2m0 1v2m0 5v4m1-70v2m0 18v2m0 11v2m0 2v3m0 12v2m0 2v2m0 1v2m0 6v3m0 2v3m1-75v2m0 36v2m0 16v2m0 10v2m0 3v2m0 2v2m1-125v2m0 43v3m0 13v2m0 1v2m0 18v2m0 16v2m0 1v2m0 6v3m0 2v2m1-41v2m0 1v4m0 16v2m1-25v2m0 2v3m0 15v2m0 2v2m0 6v3m0 2v3m0 2v2m1-46v2m0 3v2m0 16v2m0 1v2m0 6v3m0 3v2m0 2v2m1-79v2m0 35v3m0 16v2m0 1v2m0 7v2m1-118v2m0 61v2m0 16v2m0 1v4m0 16v2m0 9v3m1-55v2m0 21v2m0 12v2m0 2v2m0 1v2m0 7v2m0 2v3m0 2v2m1-61v2m0 12v2m0 2v2m0 18v4m0 1v3m0 13v2m1-61v2m0 12v2m0 2v2m0 13v2m0 3v4m0 16v3m1-139v2m0 3v3m0 56v2m0 6v2m0 4v2m0 16v2m0 13v2m0 3v3m0 18v2m1-131v2m0 4v2m0 45v2m0 15v2m0 7v2m0 3v2m0 17v2m0 3v4m0 1v4m0 12v2m2-61v2m0 10v3m0 11v2m0 5v2m0 4v3m0 8v2m0 6v3m1-61v2m0 24v2m0 5v2m0 3v3m0 17v3m1-53v2m0 28v2m0 9v2m0 3v2m0 2v3m1-67v2m0 18v2m0 17v2m0 3v4m0 1v4m0 7v3m0 1v3m1-52v2m0 3v2m0 2v2m0 13v2m0 10v2m0 12v2m1-115v2m0 70v3m0 14v3m0 11v2m1-117v3m0 68v3m0 20v2m0 9v3m0 16v3m1-42v2m0 7v2m0 5v2m0 1v4m0 7v2m0 7v3m1-132v2m0 75v2m0 11v2m0 7v2m0 8v2m0 1v2m0 6v2m0 2v2m0 3v3m1-138v5m0 2v2m0 85v4m0 7v2m0 5v2m0 2v3m1-25v2m0 9v2m0 8v4m0 7v2m0 2v2m0 3v2m1-59v2m0 2v3m0 9v2m0 19v4m0 7v2m0 2v2m1-133v2m0 52v2m0 9v2m0 31v2m0 6v2m0 10v2m0 2v2m0 3v2m1-26v2m0 1v2m0 10v2m1-37v3m0 20v2m0 8v4m0 7v2m0 2v2m1-40v2m0 7v2m0 6v3m0 3v4m0 2v2m1-123v5m0 2v2m0 92v2m0 3v2m0 2v2m0 3v3m1-66v3m0 46v2m0 7v2m1-48v2m0 15v2m0 9v2m0 7v2m0 6v3m0 5v2m1-18v2m0 7v2m0 2v5m1-63v3m0 42v2m0 7v2m0 3v4m1-110v2m0 2v5m0 91v2m0 6v2m1-112v2m0 43v2m0 3v2m0 42v2m0 6v3m1-113v4m0 54v2m0 5v2m0 1v3m0 5v2m0 32v3m1-110v3m0 96v2m0 6v3m0 5v2m0 2v2m1-70v2m0 17v2m0 22v3m0 27v2m0 2v2m1-35v2m0 27v2m1-57v3m0 6v3m0 13v3m0 13v2m1-17v2m0 13v2m0 16v2m1-115v2m0 53v2m0 22v3m0 34v2m1-115v2m0 58v3m0 13v2m0 32v2m1-79v2m0 17v2m0 23v2m0 22v2m1-43v4m0 13v2m1-27v2m0 52v2m0 2v2m1-51v3m0 13v2m0 31v2m0 1v2m1-83v2m0 8v2m0 32v3m0 21v2m0 17v2m1-73v2m0 6v3m0 16v4m0 13v2m0 6v2m0 17v2m1-114v2m0 68v2m1-100v2m0 62v2m0 32v2m0 13v2m0 6v2m0 17v2m1-2v2m1-142v2m0 6v4m0 41v2m0 9v2m0 32v2m0 4v2m0 6v3m0 6v2m0 17v2m1-79v3m0 1v2m0 28v3m0 13v2m1-52v2m0 26v2m0 3v4m0 13v2m1-53v3m0 2v3m0 27v3m0 12v3m1-47v3m0 26v3m1-41v2m0 14v5m0 1v2m0 11v2m0 2v2m0 7v2m0 26v3m1-18v2m1-122v2m0 75v3m0 1v2m0 23v3m0 10v3m0 11v4m1-79v3m0 14v2m0 1v2m0 1v2m0 23v3m0 1v2m0 7v3m0 12v5m1-72v2m0 5v3m0 1v2m0 1v2m0 15v2m0 10v2m0 7v3m0 11v3m1-67v2m0 7v2m0 1v2m0 15v2m0 6v3m0 1v2m0 4v2m0 2v2m0 5v2m1-71v3m0 17v2m0 18v2m0 10v2m0 3v3m1-43v2m0 29v3m0 10v3m0 12v2m1-78v3m0 20v2m0 15v2m0 7v2m0 1v2m1-35v3m0 1v2m1-24v3m0 23v2m0 40v2m1-115v2m0 86v2m0 27v2m1-111v2m0 53v3m0 22v2m0 15v3m0 1v2m0 6v2m0 4v2m1-122v4m0 65v2m0 19v2m0 3v2m0 9v2m0 2v2m0 2v2m1-73v2m0 15v3m0 22v2m0 15v3m0 5v3m0 1v2m1-75v4m0 14v3m0 6v2m0 15v2m0 23v2m1-44v2m0 15v2m0 3v2m0 18v2m1-71v4m0 17v2m0 4v2m0 15v2m0 23v2m0 2v2m1-56v3m0 39v3m0 5v2m0 2v2m0 1v2m0 1v2m1-133v4m0 50v2m0 15v3m0 5v3m0 31v4m0 4v3m0 1v2m0 1v2m0 1v2m1-56v3m0 45v2m1-48v2m0 3v2m0 6v2m0 6v2m1-39v2m0 14v2m0 3v2m1-1v2m0 5v2m0 27v2m1-46v3m0 12v2m0 5v2m0 10v2m0 4v2m0 7v2m1-134v2m0 68v2m0 19v2m0 12v2m0 16v2m0 7v2m1-64v4m0 9v3m0 1v3m0 1v2m0 5v2m0 32v2m1-81v3m0 14v2m0 13v2m0 1v2m0 5v2m0 20v2m0 12v3m2-64v4m0 14v2m0 1v4m0 10v2m0 25v2m1-124v4m0 106v2m0 1v2m0 2v3m0 4v2m1-29v2m0 11v2m0 5v3m0 4v2m1-136v5m0 66v4m0 23v2m0 6v3m0 19v2m0 4v2m1-65v2m0 39v2m0 14v2m1-17v2m1-17v2m0 13v2m0 12v2m0 5v2m1-136v2m0 2v2m0 64v2m0 35v2m0 4v2m0 12v3m1-127v4m0 63v2m0 44v2m0 2v2m0 5v2m0 5v2m1-9v2m1-13v2m0 9v3m0 7v2m0 1v2m1-23v3m1-47v2m1-2v2m1-77v4m0 6v2m0 102v4m1-14v2m1-52v2m0 72v2m2-55v2m0 22v2m0 3v2m1-52v2m0 19v2m1-65v3m0 39v2m0 58v2m0 4v2m1-39v2m0 10v2m0 18v2m0 3v2m0 14v2m1-36v2m0 14v4m0 14v2m0 2v2m1-142v2m0 1v2m0 4v3m0 52v3m0 52v3m0 9v2m0 3v2m1-75v4m0 64v2m1-77v2m0 6v3m0 53v2m0 13v3m1-137v3m0 2v3m0 51v2m0 1v2m0 55v2m0 9v2m1-15v2m0 11v2m1-69v3m0 16v2m0 33v2m0 11v2m2-78v4m0 24v2m0 46v2m1-20v2m1-3v3m0 1v3m0 3v2m1-49v3m0 5v6m0 21v2m0 10v2m1-123v3m0 79v2m0 1v3m0 27v3m1-33v2m0 22v3m0 4v2m1-119v2m0 2v2m0 67v2m0 10v2m0 14v2m0 7v2m0 4v3m0 3v2m1-122v2m0 55v2m0 50v2m0 9v2m1-110v2m0 2v2m0 63v2m0 1v2m0 22v2m0 4v3m1-119v2m0 118v4m0 13v2m0 1v2m1-69v2m0 37v2m0 2v3m0 1v4m0 13v2m1-4v2m1-133v2m0 102v2m1-106v6m0 68v2m0 47v2m0 5v2m1-38v2m0 27v2m1-51v2m1-9v2m1 54v2m1-51v3m0 44v2m1-49v3m0 53v2m1-65v2m0 5v2m1 6v2m0 1v2m0 25v3m1-25v2m0 5v2m0 13v3m0 3v3m0 2v2m1-35v2m0 11v2m0 7v2m0 5v2m2-30v2m0 20v2m0 4v2m0 2v2m1-129v2m0 100v2m0 17v4m0 2v2m1-55v2m0 18v2m0 21v2m0 1v9m1-34v2m0 20v2m0 4v2m1-125v2m0 87v2m0 3v2m0 6v2m0 3v2m0 8v2m0 3v3m0 2v2m1-129v4m0 90v2m0 11v2m0 1v2m0 4v3m0 4v2m0 2v2m1-129v2m0 80v2m0 43v2m0 4v2m1-135v2m0 61v2m0 2v2m0 3v2m0 7v4m0 7v2m0 13v2m0 4v2m0 12v2m0 4v2m1-135v4m0 68v2m0 8v2m0 14v2m0 7v2m0 4v4m0 3v2m0 5v2m0 11v2m1-140v3m0 77v2m0 7v3m0 4v2m0 7v2m0 11v2m0 5v2m0 4v2"/><path stroke="#0000c1" d="M81 371v12m1 5v2m0 4v2m1-2v2m2-17v6m3-12v5m1 16v2m1-2v2m0 52v3m0 14v6m0 1v2m1-86v2m1-56v4m0 56v2m1-1v7m0 46v3m0 14v6m0 1v2m1-138v2m0 56v2m2-2v2m2-64v2m0 10v5m0 99v3m0 14v6m0 1v2m1-138v2m1-1v2m1 23v4m0 28v2m0 50v5m0 14v6m0 1v2m1-132v4m1-12v2m1 42v11m0 1v3m1-57v2m0 108v5m0 14v6m0 1v2m1-120v2m0 4v2m1-18v4m0 4v11m0 1v3m0 4v2m0 2v9m0 1v5m0 1v5m0 3v3m1-6v8m0 42v5m0 14v6m0 1v2m3-80v2m1-20v16m0 6v6m0 1v4m0 1v11m0 1v4m0 1v5m0 10v2m0 1v2m0 3v5m1-3v5m0 8v6m0 1v2m2-86v2m1 4v2m0 56v5m0 8v6m0 1v2m2-140v3m1 32v2m0 23v2m1-52v4m0 6v2m0 32v2m0 4v2m1-64v2m0 1v6m0 7v2m1 29v3m2-15v2m0 1v2m0 4v7m0 2v2m0 1v8m0 1v3m0 2v3m0 1v9m0 1v3m1-25v2m2-32v2m0 1v2m0 2v6m0 6v5m0 2v3m0 1v6m0 3v2m0 1v4m0 1v5m2-24v11m1 47v4m0 1v2m0 3v2m0 1v5m1-74v2m1-62v2m1 57v11m1-69v3m0 2v2m0 2v2m0 42v2m0 4v2m1-33v27m1-19v2m0 21v2m1-8v3m1 3v2m2-34v23m0 9v2m1-2v2m1-62v4m0 4v4m1 62v15m0 1v3m0 3v2m0 2v5m1-59v9m0 5v2m2-34v4m0 22v2m0 4v2m3-2v10m0 3v14m0 3v2m0 3v2m0 3v2m0 4v4m0 4v9m0 2v2m0 2v5m1-136v18m0 1v5m0 1v8m0 1v13m0 1v6m0 4v4m0 1v3m0 1v5m0 1v7m0 3v2m0 1v5m0 2v7m0 16v5m0 1v4m0 1v3m0 3v2m0 5v2m1-113v6m0 27v2m2-64v2m0 4v2m0 54v2m1-64v2m0 1v2m0 2v3m0 2v2m2-10v5m0 53v2m1-26v3m1 0v2m1-40v5m0 54v2m3-64v2m0 60v2m1-22v6m1-38v2m0 4v2m0 2v2m1 40v2m1-18v9m1-29v2m1-4v2m1 31v5m0 2v10m0 1v11m0 1v11m0 4v2m0 1v2m0 4v2m0 4v8m0 2v3m0 3v3m0 4v2m1-136v2m0 1v3m1-10v2m1-4v4m0 52v2m1-52v2m0 2v4m2-11v5m1-8v4m0 58v2m1-61v3m0 2v2m1-5v2m1 21v2m1-4v20m0 16v2m2-2v2m1-64v2m0 3v3m1-8v5m0 6v3m1 51v2m0 1v8m3-36v3m0 19v2m3-8v19m1-17v2m1 2v2m1-12v5m0 5v2m3-2v2m1-64v4m1-4v2m0 6v2m1 106v4m1-112v2m0 11v2m0 1v2m1 20v9m0 7v2m1-28v4m0 35v4m0 1v2m1-76v2m6-6v6m0 48v2m3 4v2m1 71v5m2-107v7m0 22v2m1-8v2m1-46v2m0 2v2m2 15v10m1 7v6m1-38v13m4 31v2m3-27v30m1-12v10m1-65v2m0 54v2m1-54v2m0 2v3m0 1v2m0 2v2m1 37v10m4 10v25m0 1v2m0 3v3m1-47v2m2-32v4m0 20v2m0 4v2m1 4v3m0 1v4m0 2v5m0 1v3m0 1v5m1-93v3m0 1v2m0 5v3m1 28v2m0 18v2m1 0v5m1-69v4m0 58v2m3-17v9m1-56v2m0 1v5m1-8v2m0 2v4m0 2v2m1 104v4m1-115v3m0 5v3m0 40v2m1-20v5m1 24v6m0 43v3m0 14v6m0 1v2m1-141v2m0 59v2m1-12v3m1 42v3m0 16v3m0 14v6m0 1v2m1-80v2m2-27v12m1 13v2m1-2v2m1-64v9m0 1v2m0 4v4m0 3v9m0 1v5m0 3v3m0 2v4m0 2v2m0 1v2m0 1v2m0 1v3m0 5v3m0 3v6m0 1v3m0 2v3m0 1v5m0 1v3m0 1v2m0 4v2m0 2v2m0 3v3m0 3v3m1-18v2m0 1v3m0 4v3m0 1v2m0 9v3m0 5v2m1-90v3m0 7v2m0 52v3m0 1v5m0 8v6m0 1v2m1-74v2m2-29v7m0 68v3m0 1v5m0 8v6m0 1v2m1-142v5m0 1v3m0 47v2m1-40v4m1 40v2m1-3v3m1-38v4m0 26v2m1 4v2m1-6v6m1-60v3m0 5v4m0 46v2m1-22v5m0 1v5m0 2v14m0 1v3m0 1v5m0 1v3m0 4v5m0 1v2m0 7v2m0 3v2m0 1v4m3-52v2m3-2v2m1-2v2m3-8v2m2-58v2m0 54v2m0 4v2m1-64v4m0 2v2m0 48v2m1-7v3m1-54v2m0 1v4m0 1v9m0 1v5m0 7v6m0 3v6m0 1v11m0 1v5m0 1v2m0 1v2m0 1v3m0 2v3m0 2v4m0 1v4m1-83v2m0 4v2m2-12v2m1 29v2m1 27v2m3 15v6m0 2v4m0 1v8m0 4v9m1-93v15m1 92v3m2-93v3m1 24v2m0 41v2m0 6v4m0 3v2m1-121v5m0 48v2m0 4v2m1-40v2m1-26v2m0 10v2m0 2v2m1-18v2m0 7v2m0 1v2m1-14v2m0 1v2m0 4v9m0 1v17m0 5v6m0 3v10m0 5v7m0 2v3m0 1v7m0 1v10m0 1v3m0 1v3m0 1v4m0 1v5m0 1v9m0 2v3m0 3v3m2-132v2m0 56v2m1-62v8m0 1v2m0 49v2m1-60v2m2 29v21m0 2v4m1 73v5m1-103v3m0 5v10m0 5v4m0 1v7m0 1v3m0 3v2m0 4v2m1-83v3m0 55v2m1-64v2m0 6v2m1-10v2m0 2v2m0 4v4m0 48v2m1-64v4m0 2v2m0 48v2m1-56v3m3 16v16m1 24v3m1 2v2m3-6v2m2-8v2m1-30v9m0 25v2m1-11v11m0 1v8m0 2v4m0 1v12m0 1v7m0 2v2m0 1v2m0 4v2m1-51v2m2 5v3m2-5v2m0 29v2m0 6v3m0 1v5m0 3v5m0 4v3m1-68v2m1-64v2m1 89v2m0 9v5m0 5v3m0 7v3m0 3v2m2-124v2m0 2v2m0 2v2m0 46v2m1-8v2m2-51v3m0 52v2m1-8v2m0 4v2m2-2v2m1-41v18m1 8v2m2 7v2m3-15v14m1-59v2m0 1v2m0 9v2m2 32v4m0 1v2m0 3v3m0 5v2m1-43v2m1 29v2m1 4v2m10-1v5m2-65v3m0 3v2m0 1v2m0 48v2m1 1v2m1-11v2m1-50v5m0 49v2m1-17v9m0 2v4m5 10v2m5-12v2m1-8v2m2-2v2m0 4v2m1-8v2m3-23v27m2-27v3m1 7v6m0 3v2m0 2v6m1-6v11m1-13v2m0 58v3m0 1v5m0 8v6m0 1v2m1-142v4m0 2v4m1 34v5m0 3v5m0 1v9m0 1v14m0 1v8m0 1v2m0 1v3m0 12v2m0 1v2m1-76v2m0 15v2m0 4v2m0 52v3m0 1v5m0 8v9m1-139v3m0 2v2m0 46v2m1 17v10m1-23v2m2-4v8m0 48v3m1-80v3m0 14v2m0 4v2m2 27v2m0 1v6m0 1v3m0 1v3m0 1v2m0 1v12m0 3v3m2-74v2m2-2v10m0 50v3m0 1v5m0 8v6m0 1v2m2-105v7m1-44v2m0 1v5m0 10v2m0 94v5m0 1v5m0 8v9m1-82v3m0 3v11m0 1v5m0 5v5m0 1v6m0 10v2m0 1v10m0 1v2m0 5v3m1-128v4m0 2v2m2 48v2m1 5v6m1-19v5m0 1v2m1-43v7m0 34v2m1-2v2m1-64v2m0 54v2m1-58v2m0 2v4m1 31v2m1 21v2m2-8v2m0 4v2m6-2v2m1-57v3m1 4v2m0 40v2m1-58v4m1 46v2m1-4v3m1 40v2m0 1v2m0 4v4m0 1v2m0 3v2m0 1v2m0 1v7m1-55v4m1-38v2m0 26v2m1-2v2m3-11v18m2-20v4m1 7v2m2-34v10m1 22v2m2-18v4m2 12v2m2-33v6m2-4v2m4 7v2m0 18v2m5-8v2m1 16v7m0 1v6m0 1v5m0 1v5m0 1v2m0 2v2m1-105v2m1-4v2m0 54v2m2-27v4m1 16v2m1-28v20m0 17v2m3-2v2m1-28v2m0 18v2m1 7v3m0 1v2m0 1v7m0 3v3m0 1v8m1-94v2m0 1v7m0 6v2m1 40v3m0 1v2m1-46v15m0 29v2m1-58v2m1-5v3m0 2v2m0 2v3m0 47v2m1-8v2m2 4v2m2-2v2m1-64v2m1 60v2m2-36v4m1 6v12m1 6v2m1-17v2m0 19v2m2-64v3m1 62v2m3 56v3m0 7v3m1-74v2m1-4v2m1-6v2m1 4v2m1-5v3m0 1v5m0 6v2m0 1v4m1-25v2m2 4v2m1-2v5m0 1v3m2-9v2m2-22v9m0 1v10m0 2v2m0 6v3m0 3v4m0 2v2m1-30v2m1 5v3m1-63v3m0 2v4m2 50v2m1-32v26m1 8v4m1-21v3m0 2v9m0 1v6m0 3v12m0 2v5m0 1v7m0 5v2m1-56v3m1 8v2m2-36v12m0 4v3m0 5v2m0 4v6m0 2v4m0 1v3m0 4v5m0 1v5m0 1v3m0 2v5m0 2v2m0 1v4m0 1v3m0 3v6m0 5v3m1-130v2m0 1v2m0 57v2m2-63v3m1 32v26m2-6v2m0 4v2m2-5v11m1-17v9m1-36v2m1-27v5m0 2v3m0 3v2m1-14v2m0 3v2m1 53v2m1-61v6m0 5v2m1 46v2m2-64v4m0 2v2m1 21v25m0 1v2m0 4v2m0 1v3m0 2v3m0 1v2m0 1v3m0 4v2m0 1v2m0 2v2m0 4v2m0 1v5m0 1v4m0 3v11m0 4v3m0 1v3m0 3v2m1-123v2m0 44v2m1-52v3m0 5v2m0 2v3m1 41v3m1-58v3m2-12v2m0 6v4m1-16v4m3 52v2m1 4v2m5-38v20m2-46v2m0 2v4m1 23v7m0 1v3m0 3v3m0 2v2m0 5v2m0 2v3m0 3v3m0 2v5m0 1v4m1-58v2m0 36v2m1-60v2m0 2v3m0 1v2m0 48v2m3-2v2m2-8v2m1 0v7m1 0v5m1-17v3m0 2v3m0 3v6m0 1v2m1-73v2m0 4v2m1-8v6m0 4v10m1-10v2m1-12v10m0 46v2m1-46v4m0 6v2m1-18v2m0 8v2m2 38v3m0 1v3m1-51v2m0 48v2m2-17v2m0 1v2m0 1v3m0 1v2m0 1v2m0 1v2m0 3v14m0 5v6m0 1v5m0 3v2m0 1v4m0 1v5m0 3v3m2-1v5m0 8v5m3-80v4m0 58v5m0 8v5m1-76v2m1 52v4m1-58v2m2-37v3m1-30v2m1 8v2m0 2v2m0 5v2m1 47v2m1-37v2m0 25v2m0 52v3m0 1v5m0 8v6m0 1v2m1-82v2m0 1v9m1-43v10m1 23v2m0 52v3m0 1v5m0 8v9m1-142v4m0 2v3m0 3v2m2-14v2m1 45v2m0 13v2m1-35v10m1-17v2m0 32v2m0 4v2m1-64v2m0 2v4m0 6v3m0 1v2m0 4v3m0 35v2m1-64v6m1 108v5m0 1v5m0 8v6m0 1v2m2-80v7m1-33v7m0 73v3m0 1v5m0 8v6m0 1v2m1-114v9m0 19v2m2-1v2m0 3v2m1-41v18m1 75v4m1-63v10m1-5v2m1-2v2m1-2v2m0 56v5m0 12v2m0 1v2m1-135v2m1 6v3m0 6v2m0 36v2m1 17v3m0 3v3m0 1v3m0 26v5m0 12v2m0 1v2m3-11v3m0 1v2m0 1v4m1-90v5m0 1v12m1-31v2m1 15v2m0 4v2m3-11v4m0 1v5m0 53v3m0 1v5m0 8v6m0 1v2m1-86v2m2-56v5m0 3v2m0 104v3m0 1v5m0 8v6m0 1v2m1-130v2m0 6v2m0 40v2m1-64v3m0 1v2m2 62v3m3-43v10m1 18v2m1-41v13m0 32v2m0 56v5m0 8v6m0 1v2m1-119v3m0 2v6m0 1v2m0 4v4m0 2v3m0 4v2m0 3v2m1 46v2m0 3v3m0 1v3m0 8v3m1-91v8m0 73v5m0 8v9m1-103v2m0 3v6m0 3v3m0 1v2m0 1v5m0 1v2m0 1v2m0 2v10m0 1v2m0 1v10m1-92v4m0 1v7m0 5v2m0 3v3m0 2v3m0 1v3m0 4v4m0 2v3m0 1v2m0 7v12m0 1v11m0 1v10m0 1v2m0 2v7m0 1v2m1-94v20m0 2v4m0 1v5m0 5v2m0 1v3m0 1v9m1-9v2m1 0v11m2-69v2m0 54v2m1-64v4m0 2v3m0 1v2m3 56v2m0 1v15m0 1v2m0 1v5m0 1v2m1-36v2m1-2v2m1-61v2m1 7v2m0 48v2m1-44v3m0 1v2m1-4v4m0 36v2m1-12v3m1-39v2m0 2v2m1 0v2m0 32v2m1-50v4m1-9v2m0 3v2m1 46v2m2-12v15m2-24v4m1 9v2m0 1v5m0 6v3m1-5v2m1-2v2m4-2v2"/><path stroke="#000eff" d="M79 388v2m2-58v39m3 101v2m1-112v17m2 53v2m1-76v15m3 74v3m0 16v3m1-22v3m0 16v3m1-107v5m0 4v5m0 1v4m0 2v3m0 3v3m0 40v2m2-46v2m2 43v24m0 2v3m0 1v11m2-86v2m0 57v3m0 16v3m1-22v3m0 16v3m1-118v11m2 37v2m0 1v3m0 1v6m0 3v3m0 1v8m0 1v4m0 1v4m0 1v10m0 1v4m0 6v3m0 1v2m0 2v2m0 1v2m1-140v46m2-46v2m0 8v2m0 122v3m1-137v4m0 1v7m0 4v2m0 116v3m1-79v6m0 36v2m2-46v2m1 42v2m1-67v9m0 18v2m2 74v3m1-3v3m1-103v2m3-9v6m1-37v2m2 38v7m2-46v4m0 1v4m0 1v3m0 1v8m0 1v10m2 66v2m1-102v5m0 1v4m0 3v8m0 2v3m0 1v3m0 26v2m2-32v34m1-3v7m0 1v2m0 5v5m0 2v4m0 1v4m0 5v3m0 1v2m0 2v6m0 4v2m3-87v35m2-61v2m0 1v28m1 2v6m1 8v9m1-56v2m0 2v6m0 2v2m0 86v2m2-102v30m3-27v3m0 1v2m0 2v3m0 1v3m0 1v6m0 3v2m0 1v3m0 2v2m0 1v2m0 1v6m0 1v2m0 1v2m0 3v5m0 1v4m0 3v2m1-51v27m1-19v2m1-12v11m0 70v2m3-50v10m2-49v16m1-25v2m0 1v3m2 90v2m1-1v25m0 1v3m0 1v11m2-112v8m1-3v6m1 59v2m4-75v15m1-36v2m0 48v2m1-18v2m0 58v2m1-82v26m1-38v2m1-10v5m0 1v2m1-8v5m0 1v23m0 1v17m0 3v4m0 1v2m0 5v2m0 36v2m4-2v2m1-62v5m1 55v2m4-80v6m0 28v2m1-58v26m2 74v2m3-71v3m0 4v4m0 3v3m0 1v4m0 3v2m0 1v6m3-34v9m1-36v3m0 5v2m0 2v4m1 119v3m1-142v56m0 44v2m1-50v6m0 42v2m2-69v19m2-25v2m4 48v23m0 1v3m0 1v11m2-96v26m1-42v2m0 27v3m0 4v4m0 3v7m0 8v5m0 1v2m2 30v2m2-46v2m3 42v2m1-100v2m1 41v2m1 53v2m1-12v36m0 1v3m0 1v4m2-120v18m4-14v14m0 67v2m1-70v18m0 6v2m0 4v2m1-64v18m1 33v7m3-2v2m3-58v37m1 6v12m3-31v31m2 1v7m1 37v2m1-71v18m0 3v5m0 1v3m0 3v11m1 25v2m2-82v12m1-32v2m0 6v9m0 1v6m0 1v8m0 4v8m0 2v4m0 1v4m0 1v3m0 1v4m1 35v2m1-67v7m1-3v23m1 38v2m3-81v26m0 9v2m3 19v23m0 1v15m1-116v2m1 22v14m1 14v15m1 48v3m0 16v3m0 1v3m1-97v8m0 63v3m0 16v3m0 1v3m1-77v33m1 3v2m2-102v37m2 63v2m2-96v3m0 2v4m0 8v8m0 6v2m0 1v3m0 4v5m0 1v6m0 1v4m0 2v2m0 1v14m0 1v5m0 3v4m0 5v6m1-63v8m1 9v7m0 47v3m0 3v3m0 10v3m1-22v3m0 3v3m0 10v3m1-119v23m0 59v2m2-102v2m0 2v2m0 8v2m1-13v8m0 3v2m1 39v6m1-44v9m1-2v5m1 16v13m2-22v6m1 20v2m6-14v8m1-2v2m1 81v3m1-80v2m4-21v8m0 49v2m3-69v2m2-7v5m2 33v4m2-70v2m0 2v10m0 3v4m0 3v5m0 3v2m0 1v3m0 1v3m0 1v3m0 3v12m0 1v2m0 1v4m0 1v5m0 2v2m1-79v20m1 64v16m0 1v8m0 1v15m1-101v4m0 72v2m1-73v8m1 13v14m0 2v2m0 3v5m0 2v2m0 1v11m0 2v2m0 3v8m2-101v4m0 46v2m1-2v2m8-58v2m0 1v32m0 21v2m1 32v10m0 1v24m0 2v3m0 1v4m1-135v5m0 2v13m0 1v9m1 70v2m2-46v2m3-25v2m2-35v21m1 37v3m0 39v2m1-43v7m6-66v28m1-5v30m2-11v2m1 14v11m1-13v2m1-31v36m0 1v3m0 2v4m0 3v2m0 3v7m0 1v2m0 1v2m3-47v13m0 2v2m0 1v5m0 1v2m0 4v3m0 1v4m0 2v4m3-43v3m1 89v2m2-42v2m1-54v6m0 2v2m2-58v23m1 21v5m1 10v4m1-14v9m0 42v2m2-61v5m0 10v2m1-31v18m3-45v28m0 1v6m0 1v4m0 1v3m0 1v3m0 8v2m1-39v6m6 75v2m2-78v2m3-4v3m1 24v14m3-5v7m1-27v3m1-41v2m1-2v47m0 9v2m4 10v2m1-5v7m4-43v3m0 30v2m7-1v7m1-70v35m1 2v2m1-12v8m1-35v12m0 1v3m0 1v2m0 1v8m0 1v2m0 1v3m0 3v7m0 11v2m1-33v33m2 63v3m0 10v3m1-137v4m0 4v10m0 6v8m0 1v6m0 1v3m0 78v3m0 10v3m1-104v6m1 61v2m1-67v2m0 1v7m0 3v9m0 3v2m0 1v3m0 1v2m3-21v12m1-30v9m2-34v18m0 1v5m0 5v3m0 3v7m0 1v2m0 1v4m0 1v4m0 2v2m0 1v3m0 2v2m0 3v3m0 1v3m0 3v2m0 1v3m3-61v2m1-8v32m1 59v3m0 3v3m0 10v3m1-121v21m0 78v3m0 3v3m0 10v3m2-137v5m0 1v8m0 2v7m0 1v2m0 3v6m0 3v2m0 4v3m0 2v2m4 2v16m1-26v13m0 44v2m1-102v21m0 35v2m2 42v2m1-46v2m1-25v6m4 100v3m2-42v2m1-2v2m2-2v2m2-102v3m0 3v4m2 35v5m1-13v11m1-21v39m0 1v2m0 1v4m0 3v2m0 1v4m0 3v4m1-33v10m0 32v2m1-73v5m2 16v3m0 3v2m1-17v2m1-43v2m0 1v50m0 47v2m2-62v11m3-51v30m0 32v2m0 36v2m3-66v10m1 10v2m3-44v17m1 31v2m1-39v8m0 67v2m4-67v7m4 20v3m2-27v8m0 1v8m0 1v3m0 1v3m0 2v4m3-10v4m1-43v11m1 15v5m0 5v2m0 4v2m1-64v2m0 1v22m4 8v3m0 64v2m1-102v15m0 2v12m0 1v4m0 2v2m0 1v2m0 2v4m0 1v12m0 1v2m2-14v9m1-58v18m0 82v2m2-2v2m4 37v3m4-86v2m0 42v2m1-84v10m0 72v2m1-102v38m0 18v2m2-21v4m1-8v4m1 63v2m1-43v6m1-2v7m1-40v6m1 19v4m0 1v5m0 2v8m0 1v2m0 1v12m0 2v9m0 1v6m0 2v8m2-65v6m2-13v9m1-56v9m0 1v4m0 1v2m0 1v6m0 1v3m0 3v18m0 1v3m0 47v2m1-2v2m2-2v2m1-71v5m0 1v2m0 1v3m0 3v3m0 1v12m4-44v24m0 20v2m2-11v10m2 76v3m1-86v2m0 42v2m1-102v32m1 23v11m1-24v7m0 51v2m1-59v8m1 5v2m2-58v28m4-28v36m4-10v33m1-36v30m1-52v15m3 33v2m1-51v2m4-2v29m1-29v4m0 4v2m1-8v4m0 4v2m0 88v2m1-45v11m1-12v2m1-34v2m1 36v2m0 36v2m1-40v2m0 36v2m3-2v2m2-53v3m2 35v3m2-90v26m0 30v2m3-56v7m0 1v7m0 5v8m0 70v2m1-99v7m0 1v3m3 86v2m2-46v2m2-21v21m1-8v15m1-65v4m0 3v5m0 2v7m0 2v14m0 5v5m0 1v2m0 6v2m1 42v2m4-102v4m2 29v2m1-1v13m0 1v2m0 1v3m1-54v10m2-9v2m0 1v5m0 1v2m0 1v2m0 2v2m0 1v4m0 3v4m0 1v7m0 3v2m2-16v3m0 69v2m1-46v2m0 76v3m1-3v3m1-92v13m2 19v23m0 1v15m2-16v2m1-85v10m2-25v2m0 8v2m1 53v3m1-40v5m1-9v34m0 55v3m0 3v3m0 14v3m1-141v2m0 1v26m0 86v3m0 3v3m0 14v3m2-85v2m3-19v8m1-24v6m0 71v2m1-102v2m0 3v3m0 4v2m1-12v2m1 96v2m2-32v4m0 47v3m0 14v3m1-102v23m0 38v2m0 19v3m1-100v12m1-36v28m1 72v2m1-51v6m1-57v23m1 54v27m0 1v11m1-91v32m4 64v3m0 14v3m1-141v6m0 115v3m0 14v3m1-112v3m0 6v13m0 1v2m0 1v5m0 1v2m0 1v3m0 1v2m0 4v2m0 1v4m3-21v8m0 1v2m0 1v6m0 1v4m0 5v5m0 1v3m0 4v5m0 2v2m0 2v4m0 1v3m1-120v52m0 48v2m1-72v9m1 12v5m0 44v2m3-79v30m0 47v2m1 13v3m0 3v3m0 10v3m0 1v3m1-85v2m0 57v3m0 3v3m0 10v3m0 1v3m2-139v2m2 58v4m0 34v2m1-45v11m2-12v2m1-58v28m2-28v17m1-12v4m0 1v2m0 1v4m0 2v4m0 98v3m1-124v10m0 1v3m0 2v2m0 1v4m0 1v2m0 1v4m0 1v3m0 1v14m0 1v2m0 1v6m0 1v4m0 1v5m0 1v4m0 3v7m0 2v9m0 4v4m0 16v3m1-107v22m1-39v37m2-37v18m2 9v35m2-6v2m4-58v5m0 1v2m0 5v4m0 8v5m0 1v12m0 1v3m0 6v5m0 1v9m1 32v2m2-2v2m1-2v2m1-100v2m0 6v5m0 41v2m1-48v12m1 22v8m0 48v2m2-102v4m0 4v2m0 6v2m1-14v4m3 131v3m1-142v2m0 1v43m2-23v14m1-37v14m0 1v7m0 1v3m0 1v13m0 1v5m4 54v2m1-46v2"/><path stroke="#0047ff" d="M84 440v18m0 1v3m0 1v9m1-139v29m3-29v25m5-26v5m0 1v2m0 3v7m0 1v3m0 1v2m0 1v2m4-27v100m4-100v18m2-19v2m0 2v2m0 1v2m0 1v2m0 1v6m0 3v7m0 1v2m0 6v3m0 3v3m0 4v2m0 3v3m0 1v7m5-20v11m4-27v4m4 0v3m3-16v9m3-3v12m7-40v26m1-26v7m0 6v11m0 1v4m0 1v3m0 1v6m0 1v2m0 2v3m0 1v5m3-54v26m3-3v10m1 0v14m1-45v2m6-4v21m1 5v3m1-28v18m3 17v16m2-52v13m4-12v100m2-86v15m1-6v11m5-34v26m2 9v4m1-40v20m8 12v8m5-29v11m6-22v4m0 2v2m0 4v6m0 1v3m0 1v6m3-13v15m2 77v18m0 1v3m0 1v8m2-97v10m2-51v32m2-8v2m4 35v15m2-77v20m1-18v2m0 2v4m0 3v8m0 1v4m0 1v5m9 9v4m2-44v89m2-90v15m4-14v18m1-18v31m2 9v10m7-21v13m3-43v24m2 21v11m2-55v30m3-30v19m3 4v11m1-34v38m4-39v21m3 27v29m2-76v23m1 2v26m2-21v13m1-43v63m8-33v13m1 5v12m2-61v18m4 26v11m1-54v16m1 0v7m1-1v22m2-20v11m7 5v9m2 58v18m0 1v3m0 1v8m5-109v13m3-13v3m2-13v8m2 32v6m4-25v43m1-67v7m1-9v14m1-4v25m12-49v89m7-60v3m3 19v6m1-10v11m7-59v23m2 15v4m1-2v18m2-41v10m3 16v4m1-24v3m2 18v4m1 60v18m0 1v3m0 1v9m3-101v9m3-12v8m1 10v5m1-25v15m2-16v8m1-27v13m4-17v9m8 0v5m3-6v4m1 3v24m3-2v11m1-23v3m6 26v4m1-16v13m4-41v5m7 20v14m2-29v3m1-23v13m2-27v25m4-2v10m2-30v7m0 5v4m0 1v3m0 1v6m3 3v15m1-33v15m5-2v2m1-30v24m2-24v16m6 11v26m1-31v21m5-20v10m4 75v18m0 1v3m0 1v8m9-103v9m1-26v18m1-37v27m1 13v18m1-38v9m2 16v5m1-13v4m3-21v20m6-22v18m4-36v14m2-1v12m4-1v11m4 21v6m2-27v3m3 16v5m1-58v19m1 17v9m5-19v6m3 1v15m7 59v18m0 1v3m0 1v8m5-138v17m3 12v7m1-10v6m2 14v12m1-10v14m1-42v9m1-24v3m0 1v7m0 1v11m0 1v6m0 1v8m0 1v4m0 1v4m2-11v10m2-14v7m5-47v6m0 2v2m0 1v2m0 1v2m0 4v3m0 1v2m0 1v2m4-29v18m2 19v16m2 55v18m0 1v3m0 1v8m3-101v17m1-26v13m1-12v13m11-43v26m1-26v23m4 21v5m8-9v17m2-35v2m7 21v4m2 33v5m13-86v36m1-11v24m8-20v3m1-5v6m5-11v5m3-5v22m2-44v76m3-76v16m3 43v7m1-46v9m1-30v26m6 1v12m1-27v11m5 40v7m1-44v13m1-17v2m3 18v9m2-50v76m1-77v25m6 0v4m0 3v6m3-31v3m0 5v6m0 2v3m0 1v5m0 4v6m0 6v10m2-43v15m1 11v10m3-51v23m2 4v3m4 26v6m1-22v17m8-57v17m5-17v27m12-27v10m1 21v13m6 64v17m0 2v3m0 1v8m3-138v22"/><path stroke="#008eff" d="M84 394v46m7 30v3m1-3v3m7-3v3m1-3v3m6-26v3m0 20v3m1-26v3m0 20v3m1-110v16m4-20v4m2 90v3m0 10v3m1-16v3m0 10v3m1-107v5m3-22v9m3-11v17m14-19v14m1-10v20m2 94v3m0 1v10m6-118v3m4-12v22m8-36v15m1-6v15m7 7v5m9-14v10m5-32v11m9-11v16m2 46v46m2-80v14m4-21v4m4 28v9m12-27v6m5 84v2m2 0v3m0 1v10m4-113v13m7-24v13m2 95v2m3-97v15m8-35v14m8 9v15m3-48v26m2-14v19m9-19v19m1 2v16m0 89v3m1-3v3m5-111v14m2-37v10m1-17v23m2-13v15m7 3v13m2 21v46m5-96v18m3-4v4m2-22v12m2 31v9m4-44v25m1-34v10m1-17v15m1-15v25m19 1v4m3 15v7m1-20v16m3 77v2m6-95v6m1-22v24m2-33v10m3 20v6m0 82v2m1-107v3m2 14v7m1 18v46m3-82v13m3-15v12m1 10v8m1-41v21m2-11v10m1-33v14m4-14v10m8 3v6m3-7v6m1-18v25m3 7v15m0 78v2m1-97v5m6 22v7m0 61v2m1-92v17m4-36v8m7 4v21m2-20v5m0 91v2m1-127v14m4 101v3m0 20v3m1-26v3m0 20v3m1-132v14m5-10v20m1-33v15m0 100v3m1-3v3m4-94v4m2 110v3m1-3v3m6-141v27m1-27v22m5-13v14m4 39v46m9-83v11m1-36v19m2-4v25m1-32v12m2 19v6m1-13v5m3-37v20m5 107v3m0 1v10m1-134v11m6-18v13m4-3v14m4 24v8m2-26v5m3 11v8m2-29v12m5-19v9m3-14v21m7 28v46m8-88v10m1-12v9m2 5v15m1-19v21m1-41v13m3 8v15m2-10v6m11-26v23m2 25v46m3-87v17m1-27v18m1-17v18m11 95v2m5-89v6m8-29v25m2-21v3m7 16v7m2 28v9m14-82v26m2 99v2m6-101v4m1-11v9m5-12v7m1 98v3m1-3v3m1-124v23m1 102v2m7-76v9m1-52v13m1 113v3m1-3v3m5-126v16m1-27v12m5 42v9m0 52v3m0 16v3m1-127v16m0 89v3m0 16v3m1-118v3m3 6v14m9-20v3m5-25v15m1 13v13m5-18v4m4 21v8m1-41v25m6 94v3m0 1v3m1-7v3m0 1v3m1-16v2m18-115v19m6 31v46"/><path stroke="#00e1ff" d="M84 333v61m24-50v19m4-10v6m4-4v7m3-25v8m3-13v11m14-11v9m1-9v13m2 94v20m6-109v5m4-23v14m9-14v9m7 15v7m9-23v14m16 3v37m2-51v17m4-12v5m4 20v12m12-26v8m7 72v20m4-116v17m7-21v10m5-5v18m8-30v10m8 2v21m5-33v12m9-12v12m1 1v20m6-22v19m2-30v7m3-7v10m7 0v18m2-27v61m5-62v12m3 8v6m2-26v8m2 32v11m4-51v16m1-16v7m21 13v6m3 9v10m1-33v20m9-7v7m1-32v16m2-16v7m3 22v8m1-22v5m2 9v8m1-36v61m3-52v16m3-17v15m1 12v10m1-46v13m1 123v6m1-133v14m13-18v8m3-8v7m4 0v20m1-9v7m6 18v9m1-44v22m4-29v10m7-15v27m2-6v7m7-29v9m5-9v13m6 5v6m15-24v9m4-8v61m9-53v16m3-25v15m1-15v8m2 22v9m1-14v7m8 75v20m1-127v7m10-7v10m4 27v11m2-25v7m3 6v10m2-36v15m5-18v11m3-18v13m7-12v61m8-54v12m1-13v11m2-6v20m1-31v27m1-28v8m3 3v18m2-3v8m11-34v14m2-13v61m3-54v13m1-21v11m1-11v12m16 17v9m8-38v15m2 0v4m7 11v8m2 24v11m22-53v6m1-19v12m5-13v10m11 24v11m1-51v8m7-8v11m6 31v12m1-54v10m1 5v4m3-8v17m9-11v5m6-11v17m5-10v5m4 14v11m1-48v15m26-15v12m6-11v61"/><path stroke="#00f5b9" d="M108 332v12m4 2v7m4-6v8m3-23v5m20 78v24m6-95v6m20-2v8m9-24v8m16 8v9m2-25v11m4 0v5m4 11v14m12-23v9m7 56v24m4-107v11m7-11v7m5-7v12m16-12v12m15-12v13m6-13v11m12-11v10m10 3v7m4 6v14m26-27v7m3 3v12m1-35v12m9 5v8m6-6v10m1-19v5m2 4v10m4-29v10m3-10v9m1 14v13m2 90v4m0 1v5m1-136v9m13-9v5m3-5v5m4-5v12m1 3v8m6 14v11m1-48v13m4-13v6m9 9v7m18-10v6m28-18v9m6 11v10m1-14v9m8 58v24m15-83v13m2-22v8m3 0v13m2-36v10m5-10v7m18-7v8m1-8v7m2-7v12m5-12v11m2 6v9m16-26v8m18 11v10m10-19v5m7 4v11m2 18v14m22-49v7m1-20v7m5-7v6m11 20v14m14-13v15m2-32v5m3-15v11m9 0v6m6-17v11m5 1v6m4 6v13"/><path stroke="#00ff71" d="M112 337v9m4-8v9m23 39v29m6-79v8m20-6v10m25-10v10m6-12v7m4-1v17m12-20v11m7 36v29m75-78v8m4-3v16m26-21v8m3-5v15m10-17v11m6-10v12m1-15v6m2-3v12m8-10v14m2 91v12m22-120v9m6 9v13m14-31v9m18-10v7m34-5v13m1-14v10m8 38v29m15-74v15m2-18v9m3-6v14m35-17v11m34-10v12m10-15v6m7-3v12m2 12v17m22-43v8m17-3v16m14-16v17m2-23v6m12-6v7m11-6v7m4-3v15"/><path stroke="#00ff25" d="M112 332v5m4-5v6m23 13v35m6-54v4m20-4v6m25-6v6m6-6v4m4-4v10m12-10v7m7 12v35m75-54v5m4-5v10m26-10v5m3-5v8m10-8v6m6-6v7m1-7v4m2-4v7m8-7v9m2 91v14m22-114v6m6 3v15m14-24v6m18-6v5m34-5v7m1-7v6m8 13v35m15-54v9m2-9v6m3-6v9m35-9v6m34-6v7m10-7v4m7-4v7m2 4v20m22-31v5m17-5v10m14-10v10m2-10v4m12-4v4m11-4v5m4-5v9"/><path stroke="#1cff00" d="M139 332v19m80-19v19m137 65v16m28-100v9m75-9v19m108-19v11"/><path stroke="#52ff00" d="M356 398v18"/><path stroke="#97ff00" d="M356 378v20"/><path stroke="#eaff00" d="M356 356v22"/><path stroke="#ffc000" d="M356 333v23"/></g><g fill="none" stroke-width="1" transform="translate(0 .5)"><path stroke="#00006e" d="M79 332h1m6 0h1m3 0h1m33 0h1m61 0h1m18 0h1m49 0h1m6 0h1m4 0h1m43 0h2m59 0h1m8 0h1m1 0h1m31 0h1m12 0h1m7 0h2m2 0h1m31 0h1m2 0h1m21 0h1m15 0h1m10 0h1m12 0h2m8 0h1m28 0h1m16 0h1m3 0h1m21 0h1m72 0h1m-597 1h1m44 0h1m6 0h1m97 0h1m11 0h2m21 0h1m13 0h1m37 0h1m59 0h1m15 0h1m61 0h1m1 0h1m3 0h1m32 0h1m7 0h1m23 0h1m19 0h1m1 0h1m10 0h1m2 0h2m76 0h1m13 0h1m-340 1h1m54 0h1m85 0h1m40 0h1m83 0h1m-511 1h1m6 0h1m30 0h1m5 0h1m29 0h1m37 0h1m6 0h2m19 0h1m34 0h1m4 0h1m13 0h1m6 0h1m8 0h1m74 0h1m8 0h1m5 0h1m5 0h1m14 0h2m53 0h1m42 0h1m3 0h2m6 0h1m73 0h1m9 0h1m27 0h1m10 0h1m47 0h1m-595 1h1m13 0h1m61 0h1m4 0h1m78 0h1m3 0h1m29 0h1m79 0h1m22 0h1m1 0h1m18 0h1m1 0h1m33 0h1m67 0h1m6 0h1m9 0h1m3 0h1m25 0h1m31 0h1m47 0h1m15 0h1m-578 1h1m57 0h1m65 0h1m23 0h1m26 0h1m209 0h1m41 0h1m31 0h1m18 0h1m14 0h1m33 0h1m56 0h1m1 0h1m11 0h1m7 0h1m-598 1h1m32 0h1m5 0h1m28 0h1m32 0h1m5 0h1m8 0h1m4 0h1m20 0h1m20 0h1m33 0h1m51 0h1m49 0h1m48 0h1m77 0h1m9 0h1m4 0h1m13 0h1m27 0h1m56 0h1m19 0h1m9 0h1m25 0h1m2 0h1m-551 1h1m56 0h1m59 0h1m26 0h1m25 0h1m21 0h1m33 0h1m34 0h1m35 0h1m38 0h1m43 0h1m15 0h1m23 0h1m42 0h1m5 0h1m19 0h1m4 0h1m-537 1h1m62 0h1m18 0h1m43 0h1m8 0h1m20 0h1m32 0h1m52 0h1m26 0h1m71 0h1m8 0h1m50 0h1m130 0h1m20 0h1m37 0h1m-535 1h1m14 0h1m15 0h1m9 0h1m101 0h1m11 0h1m55 0h1m13 0h1m10 0h1m85 0h1m20 0h1m37 0h2m38 0h1m35 0h1m18 0h1m8 0h1m24 0h1m2 0h1m17 0h1m-598 1h1m50 0h1m39 0h1m11 0h1m10 0h1m127 0h1m42 0h1m42 0h1m13 0h1m50 0h1m36 0h1m39 0h1m87 0h1m23 0h1m-513 1h1m15 0h1m21 0h1m80 0h1m34 0h1m18 0h1m94 0h1m38 0h1m142 0h1m-452 1h1m37 0h1m80 0h1m103 0h1m95 0h1m63 0h1m18 0h1m110 0h1m-526 1h1m56 0h1m44 0h1m61 0h1m7 0h1m186 0h1m31 0h1m-369 1h1m10 0h1m81 0h1m59 0h1m119 0h1m39 0h1m19 0h1m100 0h1m-434 1h1m231 0h1m25 0h1m69 0h1m-296 1h1m272 0h1m82 0h1m-118 1h1m141 0h1m32 0h1m-469 1h1m91 0h1m66 0h1m209 0h1m-421 1h1m485 0h1m32 0h1m-370 1h1m40 0h1m113 0h1m137 0h1m43 0h1m17 0h1m-451 1h1m29 0h1m235 0h1m105 0h1m-332 1h1m163 0h1m70 0h1m143 1h1m-153 2h1m224 0h1m-494 1h1m450 1h1m11 0h1m-539 1h1m3 0h1m36 0h1m192 0h1m1 0h1m9 0h1m187 0h1m3 0h1m81 0h1m80 0h1m-389 1h1m147 0h4m66 0h1m74 0h1m92 0h1m-511 1h1m1 0h1m56 0h2m13 0h1m64 0h1m28 0h1m5 0h1m75 0h1m3 0h1m26 0h1m3 0h1m176 0h1m-475 1h1m89 0h1m62 0h1m49 0h2m5 0h1m19 0h1m224 0h1m36 0h1m2 0h1m-468 1h1m86 0h1m2 0h1m32 0h2m159 0h1m4 0h1m158 0h1m-524 1h1m308 0h1m3 0h1m6 0h1m-334 1h1m73 0h2m134 0h2m84 0h1m1 0h1m29 0h1m12 0h1m102 0h1m36 0h1m-389 1h1m135 0h1m45 0h1m127 0h1m73 0h1m-468 1h1m108 0h1m2 0h1m45 0h1m141 0h1m271 0h1m-599 1h1m5 0h1m98 0h2m353 0h1m35 0h1m-470 1h1m9 0h1m25 0h1m32 0h1m72 0h1m8 0h1m3 0h1m161 0h1m2 0h3m33 0h1m36 0h1m8 0h1m81 0h1m5 0h1m46 0h1m1 0h1m-420 1h1m102 0h2m1 0h1m121 0h1m138 0h1m1 0h1m4 0h1m-432 2h1m78 0h2m11 0h1m48 0h1m64 0h1m61 0h1m18 0h2m2 0h1m74 0h1m3 0h1m78 0h1m-319 1h1m104 0h1m140 0h1m137 0h1m-335 1h1m23 0h2m4 0h1m66 0h1m9 0h1m92 0h1m22 0h1m12 0h1m102 0h1m-518 1h1m228 0h1m3 0h1m57 0h1m69 0h1m118 0h1m-508 1h1m129 0h1m155 0h1m233 0h1m3 0h1m-515 1h1m1 0h1m12 0h1m69 0h1m78 0h1m3 0h1m16 0h1m53 0h1m68 0h1m53 0h1m21 0h2m65 0h1m5 0h1m77 0h1m-581 1h1m303 0h1m12 0h1m1 0h1m66 0h1m2 0h2m107 0h1m-468 1h1m152 0h2m3 0h1m62 0h1m211 0h1m2 0h1m5 0h1m1 0h1m-427 1h1m409 0h1m106 0h1m-598 1h1m107 0h1m23 0h1m129 0h1m149 0h1m5 0h1m1 0h1m16 0h1m108 0h1m18 0h1m-494 1h1m65 0h1m285 0h1m41 0h1m-391 1h2m38 0h1m64 0h1m71 0h1m44 0h1m30 0h1m225 0h1m-547 1h1m4 0h1m1 0h1m1 0h1m4 0h1m15 0h2m10 0h2m1 0h1m5 0h3m2 0h4m11 0h1m2 0h2m2 0h1m11 0h6m1 0h1m24 0h1m10 0h1m5 0h1m16 0h2m3 0h1m18 0h3m4 0h3m1 0h1m2 0h1m1 0h1m10 0h1m2 0h1m3 0h2m1 0h1m2 0h1m1 0h5m28 0h2m2 0h2m39 0h1m1 0h4m25 0h1m1 0h1m5 0h1m12 0h3m1 0h1m27 0h1m3 0h2m42 0h1m2 0h1m1 0h1m1 0h1m22 0h1m7 0h1m2 0h3m8 0h1m25 0h1m2 0h4m1 0h1m14 0h2m32 0h1m32 0h4m-608 1h4m17 0h1m2 0h1m5 0h1m12 0h1m21 0h5m1 0h1m1 0h1m2 0h2m5 0h1m1 0h3m2 0h1m2 0h1m22 0h1m1 0h1m1 0h1m4 0h1m1 0h2m2 0h3m7 0h1m7 0h1m33 0h1m82 0h1m5 0h1m11 0h1m1 0h3m4 0h2m1 0h3m3 0h2m26 0h2m12 0h1m1 0h3m46 0h1m1 0h1m1 0h2m55 0h2m3 0h1m2 0h2m1 0h3m2 0h2m10 0h2m1 0h1m4 0h1m5 0h2m5 0h3m2 0h1m1 0h1m21 0h1m4 0h1m6 0h1m9 0h2m2 0h2m24 0h1m2 0h1m3 0h1m-588 1h2m2 0h1m22 0h1m15 0h1m3 0h1m2 0h2m3 0h1m1 0h1m40 0h1m3 0h1m1 0h1m1 0h1m44 0h2m1 0h2m6 0h1m4 0h1m20 0h2m2 0h1m1 0h1m1 0h1m1 0h3m3 0h2m2 0h1m1 0h1m1 0h2m2 0h2m2 0h5m3 0h1m1 0h1m7 0h5m2 0h2m12 0h1m8 0h1m1 0h1m1 0h2m1 0h1m1 0h1m20 0h2m4 0h1m10 0h1m1 0h2m9 0h2m1 0h2m4 0h1m70 0h2m1 0h3m1 0h1m13 0h2m4 0h1m1 0h1m3 0h1m1 0h1m2 0h1m21 0h3m1 0h3m2 0h1m18 0h2m10 0h1m1 0h1m1 0h3m-508 1h1m7 0h1m14 0h3m1 0h1m2 0h1m11 0h1m13 0h1m1 0h1m2 0h1m1 0h2m41 0h1m4 0h1m5 0h1m54 0h1m100 0h1m44 0h1m38 0h1m8 0h1m2 0h1m37 0h1m49 0h1m74 0h1m20 0h1m35 0h1m-603 1h1m4 0h1m1 0h1m8 0h1m42 0h1m28 0h1m4 0h1m66 0h3m28 0h1m14 0h2m48 0h1m33 0h1m73 0h1m6 0h1m34 0h1m2 0h1m2 0h1m38 0h1m8 0h1m4 0h1m13 0h1m3 0h1m-462 1h1m1 0h3m2 0h2m1 0h1m91 0h2m4 0h1m2 0h1m12 0h2m1 0h1m1 0h1m12 0h1m9 0h4m2 0h1m2 0h1m10 0h7m1 0h2m48 0h1m1 0h1m5 0h2m3 0h1m48 0h1m30 0h4m2 0h2m2 0h2m2 0h2m2 0h1m12 0h1m2 0h1m5 0h2m1 0h1m1 0h1m1 0h1m2 0h2m1 0h1m2 0h1m1 0h1m33 0h1m6 0h1m10 0h1m28 0h1m1 0h1m3 0h1m15 0h2m1 0h1m1 0h2m6 0h1m5 0h4m1 0h1m1 0h2m10 0h3m3 0h3m14 0h1m1 0h1m1 0h1m12 0h11m1 0h1m3 0h3m-585 1h1m1 0h1m28 0h1m2 0h1m13 0h1m7 0h1m3 0h1m4 0h1m4 0h1m2 0h1m1 0h1m2 0h1m60 0h1m2 0h2m9 0h1m16 0h1m2 0h1m27 0h1m26 0h2m35 0h1m1 0h1m1 0h2m1 0h2m1 0h1m2 0h1m4 0h3m14 0h1m1 0h2m2 0h1m9 0h1m2 0h1m27 0h2m2 0h1m5 0h1m2 0h1m1 0h1m10 0h1m25 0h1m15 0h1m1 0h1m15 0h1m33 0h1m1 0h1m12 0h1m1 0h1m15 0h1m56 0h1m1 0h1m1 0h1m1 0h3m23 0h1m-614 1h2m5 0h1m3 0h5m3 0h1m10 0h1m1 0h1m1 0h1m3 0h2m16 0h1m17 0h2m2 0h2m18 0h1m6 0h1m1 0h3m3 0h3m1 0h2m1 0h1m1 0h2m1 0h1m1 0h5m5 0h1m23 0h2m7 0h1m10 0h1m1 0h1m4 0h1m2 0h1m3 0h1m31 0h1m42 0h1m1 0h1m1 0h1m3 0h1m8 0h1m26 0h1m20 0h1m5 0h1m6 0h1m5 0h1m3 0h1m42 0h2m4 0h1m3 0h1m18 0h1m3 0h1m3 0h1m3 0h1m4 0h1m74 0h1m2 0h1m6 0h1m3 0h1m1 0h1m1 0h1m3 0h2m1 0h1m14 0h2m1 0h3m4 0h2m2 0h1m1 0h2m31 0h2m-576 1h1m2 0h3m12 0h1m5 0h3m1 0h1m1 0h3m22 0h1m3 0h2m1 0h1m66 0h1m10 0h1m16 0h1m6 0h1m14 0h3m22 0h1m3 0h1m17 0h1m2 0h1m12 0h1m4 0h1m4 0h2m3 0h1m4 0h1m15 0h2m3 0h1m2 0h2m1 0h2m1 0h1m27 0h1m32 0h2m1 0h2m3 0h1m6 0h1m4 0h1m9 0h1m1 0h1m1 0h2m40 0h1m1 0h2m1 0h1m22 0h1m3 0h1m18 0h1m13 0h1m59 0h1m9 0h2m1 0h3m1 0h2m-594 1h1m156 0h1m26 0h1m57 0h1m34 0h1m7 0h1m7 0h1m3 0h1m67 0h1m32 0h1m19 0h1m1 0h1m4 0h1m37 0h1m27 0h1m11 0h1m42 0h1m-551 1h1m10 0h1m1 0h1m4 0h2m3 0h1m45 0h1m5 0h1m48 0h1m53 0h2m2 0h1m25 0h1m8 0h1m5 0h1m17 0h1m6 0h1m2 0h1m48 0h1m28 0h1m1 0h1m10 0h1m67 0h1m4 0h1m25 0h1m4 0h1m52 0h1m31 0h1m3 0h1m-546 1h3m2 0h1m3 0h1m3 0h1m4 0h3m3 0h3m3 0h1m5 0h1m1 0h2m1 0h1m30 0h1m3 0h2m15 0h2m2 0h1m5 0h1m1 0h1m7 0h1m6 0h2m1 0h1m3 0h1m41 0h1m7 0h1m1 0h2m1 0h1m4 0h1m20 0h1m3 0h1m3 0h1m2 0h2m1 0h2m2 0h1m5 0h1m2 0h1m2 0h9m20 0h3m2 0h2m2 0h1m4 0h1m17 0h1m1 0h2m2 0h3m14 0h1m1 0h2m1 0h1m21 0h3m1 0h1m26 0h3m2 0h1m1 0h1m8 0h1m2 0h3m2 0h2m1 0h1m3 0h2m1 0h1m1 0h2m5 0h1m15 0h3m1 0h1m1 0h1m6 0h4m15 0h1m4 0h5m1 0h1m1 0h1m13 0h1m3 0h2m2 0h2m2 0h1m10 0h2m11 0h1m14 0h3m2 0h2m21 0h1m3 0h1m1 0h2m23 0h1m1 0h1m-583 1h1m3 0h1m1 0h1m15 0h2m2 0h1m2 0h1m1 0h1m1 0h1m2 0h1m1 0h2m14 0h1m4 0h1m11 0h1m2 0h1m4 0h1m26 0h1m2 0h1m4 0h2m5 0h2m6 0h1m32 0h1m2 0h1m3 0h1m141 0h5m3 0h1m27 0h1m13 0h1m7 0h1m37 0h1m52 0h3m1 0h4m1 0h1m11 0h1m2 0h1m61 0h1m1 0h1m13 0h1m4 0h3m-554 1h1m24 0h3m8 0h1m19 0h1m2 0h1m1 0h1m5 0h1m74 0h1m51 0h2m1 0h1m2 0h3m20 0h1m8 0h1m4 0h1m4 0h4m2 0h1m2 0h1m1 0h1m61 0h1m7 0h4m1 0h1m3 0h1m32 0h1m1 0h1m5 0h2m1 0h1m3 0h1m23 0h1m2 0h3m1 0h3m10 0h1m2 0h1m1 0h2m1 0h3m1 0h1m18 0h1m2 0h6m65 0h1m11 0h1m1 0h1m-588 1h1m7 0h1m1 0h2m1 0h1m1 0h1m2 0h2m1 0h1m1 0h1m12 0h1m3 0h1m18 0h3m5 0h1m27 0h1m29 0h1m22 0h1m1 0h1m3 0h2m3 0h4m1 0h1m1 0h2m20 0h1m1 0h1m7 0h1m4 0h1m8 0h2m2 0h1m41 0h1m9 0h2m2 0h1m1 0h1m23 0h4m3 0h3m26 0h1m13 0h6m1 0h1m1 0h1m80 0h1m2 0h1m67 0h1m10 0h1m2 0h2m7 0h1m33 0h1m41 0h1m-604 1h1m22 0h2m4 0h1m7 0h1m1 0h1m21 0h1m3 0h4m1 0h2m24 0h1m5 0h1m10 0h1m25 0h1m4 0h1m7 0h1m34 0h2m6 0h2m4 0h2m12 0h1m2 0h2m1 0h2m20 0h2m1 0h3m1 0h2m16 0h1m2 0h1m53 0h2m3 0h2m1 0h2m1 0h1m1 0h1m1 0h3m10 0h1m1 0h1m1 0h1m1 0h1m3 0h2m2 0h4m5 0h1m18 0h1m6 0h3m1 0h1m2 0h1m3 0h1m2 0h1m1 0h3m2 0h1m1 0h1m1 0h5m11 0h1m3 0h2m1 0h3m30 0h3m2 0h1m1 0h1m1 0h1m10 0h1m1 0h2m3 0h1m5 0h1m4 0h1m8 0h1m1 0h1m20 0h1m2 0h1m1 0h1m8 0h2m15 0h1m12 0h1m8 0h1m-579 1h1m2 0h1m23 0h1m16 0h1m21 0h1m2 0h1m3 0h1m1 0h1m4 0h2m1 0h2m37 0h1m63 0h1m19 0h2m5 0h1m16 0h1m1 0h1m4 0h2m78 0h1m2 0h1m3 0h1m21 0h1m60 0h1m3 0h2m34 0h3m15 0h1m39 0h1m2 0h1m42 0h1m8 0h2m2 0h1m-596 1h1m2 0h1m1 0h1m4 0h1m13 0h1m10 0h1m4 0h1m1 0h1m2 0h1m45 0h1m2 0h1m33 0h1m1 0h1m2 0h1m12 0h1m3 0h3m2 0h3m3 0h5m40 0h1m1 0h1m2 0h1m6 0h1m2 0h2m2 0h1m2 0h1m7 0h1m2 0h4m2 0h2m9 0h1m5 0h1m13 0h1m1 0h2m3 0h3m13 0h3m3 0h2m1 0h2m2 0h6m1 0h1m16 0h2m7 0h1m4 0h1m7 0h1m3 0h1m2 0h1m21 0h4m1 0h1m2 0h1m20 0h5m1 0h5m1 0h2m3 0h2m51 0h2m1 0h5m1 0h1m4 0h1m1 0h2m1 0h2m1 0h2m2 0h2m2 0h1m5 0h1m7 0h1m3 0h2m11 0h1m8 0h1m7 0h1m-569 1h1m29 0h1m6 0h2m12 0h1m7 0h1m15 0h1m1 0h1m22 0h5m2 0h1m14 0h3m1 0h1m1 0h1m19 0h1m32 0h1m35 0h1m45 0h1m7 0h1m1 0h1m1 0h1m32 0h1m28 0h1m32 0h2m1 0h3m1 0h3m1 0h1m2 0h1m1 0h2m10 0h1m4 0h1m36 0h1m14 0h1m8 0h1m6 0h1m68 0h1m2 0h1m11 0h1m3 0h1m31 0h1m1 0h1m3 0h1m9 0h1m-592 1h1m8 0h1m2 0h1m4 0h2m30 0h2m4 0h1m2 0h1m3 0h1m51 0h3m4 0h1m3 0h1m4 0h1m3 0h1m4 0h2m11 0h1m13 0h1m7 0h1m1 0h2m1 0h1m1 0h1m2 0h4m2 0h1m2 0h1m20 0h8m21 0h1m6 0h1m2 0h1m12 0h1m1 0h1m3 0h1m13 0h4m1 0h1m12 0h2m12 0h3m13 0h1m1 0h4m1 0h1m1 0h1m3 0h1m37 0h1m4 0h1m4 0h2m17 0h1m2 0h1m2 0h3m31 0h1m3 0h3m2 0h1m1 0h3m1 0h1m1 0h1m8 0h1m1 0h1m21 0h1m3 0h2m1 0h3m1 0h3m1 0h1m2 0h1m15 0h1m16 0h1m5 0h1m1 0h1m16 0h1m1 0h1m-589 1h2m1 0h1m1 0h1m1 0h1m2 0h1m19 0h6m1 0h3m2 0h3m2 0h3m27 0h1m1 0h1m13 0h2m2 0h1m31 0h1m40 0h2m4 0h2m1 0h1m6 0h1m30 0h1m13 0h1m7 0h1m3 0h3m1 0h1m13 0h6m93 0h1m2 0h5m1 0h1m3 0h6m1 0h1m7 0h1m23 0h2m3 0h3m9 0h4m2 0h1m25 0h1m5 0h1m23 0h1m3 0h1m37 0h1m12 0h1m2 0h1m23 0h1m2 0h1m1 0h1m4 0h1m16 0h1m2 0h1m-534 1h1m3 0h1m1 0h1m13 0h2m6 0h1m106 0h1m3 0h1m13 0h3m47 0h1m6 0h1m1 0h1m59 0h2m15 0h1m43 0h1m2 0h1m90 0h1m4 0h1m4 0h1m15 0h1m1 0h1m21 0h1m12 0h3m3 0h2m3 0h1m-574 1h1m5 0h1m1 0h1m14 0h1m2 0h1m1 0h1m2 0h1m12 0h2m3 0h3m1 0h1m2 0h1m2 0h2m3 0h1m2 0h1m3 0h1m16 0h1m26 0h1m57 0h1m23 0h2m1 0h2m53 0h2m1 0h1m39 0h1m43 0h2m2 0h1m2 0h1m1 0h1m2 0h1m1 0h1m2 0h1m2 0h2m3 0h1m24 0h2m1 0h5m22 0h6m1 0h11m8 0h1m3 0h3m1 0h2m1 0h1m35 0h1m7 0h1m7 0h1m2 0h1m3 0h1m14 0h2m26 0h1m30 0h3m5 0h2m1 0h3m-614 1h1m3 0h1m7 0h1m27 0h1m1 0h1m3 0h1m2 0h1m30 0h3m2 0h2m2 0h1m10 0h1m13 0h1m7 0h1m7 0h5m2 0h1m1 0h1m1 0h1m1 0h5m1 0h1m1 0h6m2 0h1m15 0h1m4 0h1m10 0h3m1 0h3m1 0h1m30 0h1m1 0h1m2 0h1m1 0h1m1 0h1m6 0h1m43 0h3m1 0h3m1 0h3m31 0h2m3 0h1m43 0h1m1 0h2m5 0h4m4 0h2m51 0h1m14 0h1m3 0h3m2 0h2m1 0h4m3 0h2m4 0h1m2 0h1m2 0h1m27 0h1m7 0h1m9 0h2m1 0h1m16 0h3m-544 1h1m3 0h1m1 0h1m3 0h4m1 0h1m1 0h1m1 0h1m8 0h1m1 0h2m1 0h1m1 0h3m1 0h3m1 0h5m21 0h8m10 0h1m52 0h1m47 0h1m3 0h1m2 0h1m1 0h1m20 0h1m6 0h1m1 0h1m30 0h2m2 0h1m1 0h1m2 0h1m30 0h2m1 0h1m5 0h1m11 0h1m2 0h1m24 0h1m1 0h1m1 0h2m1 0h1m1 0h2m40 0h1m5 0h1m65 0h2m8 0h2m2 0h1m1 0h1m19 0h1m1 0h1m5 0h1m4 0h2m2 0h1m1 0h1m22 0h2m1 0h1m1 0h3m1 0h1m21 0h2m2 0h1m3 0h1m-600 1h3m3 0h1m23 0h1m1 0h3m1 0h4m55 0h1m6 0h1m1 0h2m2 0h2m7 0h1m5 0h1m7 0h1m1 0h4m1 0h1m1 0h2m5 0h1m5 0h1m4 0h1m10 0h1m6 0h4m11 0h1m3 0h1m18 0h1m26 0h1m3 0h1m3 0h1m30 0h1m1 0h6m6 0h1m7 0h1m1 0h1m3 0h2m7 0h1m2 0h1m3 0h1m2 0h1m16 0h1m4 0h1m4 0h1m64 0h1m3 0h3m1 0h2m1 0h1m19 0h3m1 0h5m8 0h1m1 0h1m81 0h7m1 0h1m15 0h1m2 0h1m-568 1h1m4 0h3m21 0h1m3 0h2m6 0h1m2 0h1m3 0h1m7 0h3m1 0h1m2 0h2m1 0h1m4 0h2m5 0h1m22 0h1m1 0h1m1 0h1m7 0h1m34 0h2m3 0h1m15 0h2m1 0h5m1 0h1m6 0h1m1 0h1m16 0h1m21 0h1m6 0h1m1 0h1m5 0h2m1 0h1m3 0h1m1 0h2m5 0h1m21 0h1m10 0h1m19 0h1m6 0h2m1 0h1m1 0h2m2 0h2m2 0h2m7 0h1m1 0h1m2 0h3m1 0h2m1 0h3m2 0h3m9 0h1m12 0h2m2 0h1m3 0h2m1 0h3m2 0h2m4 0h1m1 0h1m14 0h2m31 0h1m3 0h1m3 0h1m1 0h1m6 0h2m1 0h4m5 0h1m6 0h1m1 0h2m1 0h5m7 0h2m2 0h1m4 0h1m52 0h1m5 0h2m3 0h2m4 0h1m2 0h1m-608 1h1m1 0h1m3 0h1m22 0h1m5 0h1m3 0h1m2 0h1m13 0h1m2 0h1m4 0h1m4 0h1m61 0h1m7 0h1m3 0h1m40 0h3m22 0h1m4 0h1m1 0h1m51 0h1m8 0h1m2 0h1m39 0h1m3 0h1m63 0h2m1 0h1m75 0h1m17 0h1m42 0h1m2 0h1m10 0h1m4 0h1m1 0h1m10 0h1m7 0h1m3 0h1m4 0h1m13 0h1m8 0h1m2 0h1m2 0h1m1 0h1m-597 1h1m1 0h1m35 0h1m29 0h1m2 0h1m3 0h1m24 0h3m1 0h2m16 0h1m1 0h1m11 0h1m2 0h2m2 0h1m1 0h1m14 0h1m1 0h1m6 0h1m5 0h1m6 0h2m22 0h1m1 0h1m1 0h1m2 0h1m1 0h2m1 0h6m1 0h1m7 0h1m14 0h2m5 0h1m10 0h1m2 0h3m28 0h1m4 0h1m10 0h2m5 0h1m2 0h2m1 0h2m2 0h2m2 0h2m1 0h1m4 0h1m22 0h1m4 0h1m57 0h1m1 0h1m5 0h1m4 0h1m3 0h2m1 0h3m22 0h3m1 0h7m2 0h1m2 0h1m19 0h1m33 0h1m5 0h3m40 0h1m-590 1h1m35 0h2m1 0h1m1 0h2m2 0h1m1 0h1m56 0h1m35 0h1m31 0h1m1 0h1m9 0h1m10 0h2m34 0h1m1 0h3m1 0h3m11 0h4m15 0h7m1 0h2m5 0h1m5 0h1m49 0h1m1 0h1m9 0h1m7 0h1m3 0h1m7 0h1m2 0h1m6 0h1m46 0h1m32 0h1m20 0h1m3 0h1m2 0h1m15 0h1m22 0h1m1 0h1m1 0h1m1 0h2m1 0h1m33 0h2m2 0h1m1 0h1m7 0h2m-537 1h2m26 0h1m1 0h3m1 0h1m10 0h1m15 0h1m2 0h1m8 0h1m1 0h1m5 0h1m8 0h1m1 0h2m2 0h2m3 0h1m2 0h2m3 0h2m2 0h2m1 0h2m11 0h1m4 0h1m2 0h1m12 0h1m1 0h1m2 0h3m17 0h1m19 0h1m33 0h2m3 0h1m44 0h1m6 0h3m3 0h1m1 0h1m3 0h1m1 0h1m1 0h1m1 0h3m31 0h2m1 0h4m1 0h1m1 0h1m2 0h6m1 0h1m5 0h1m5 0h1m1 0h2m36 0h1m1 0h2m1 0h1m2 0h1m1 0h1m1 0h2m1 0h3m1 0h1m1 0h1m2 0h1m24 0h1m1 0h5m5 0h1m17 0h2m9 0h4m8 0h1m1 0h1m1 0h2m-563 1h3m1 0h2m3 0h2m1 0h1m2 0h1m5 0h2m3 0h2m1 0h2m1 0h1m52 0h1m14 0h1m1 0h1m13 0h1m2 0h1m2 0h1m30 0h1m12 0h1m22 0h1m1 0h2m45 0h2m32 0h1m5 0h1m14 0h1m6 0h1m17 0h1m4 0h1m1 0h2m30 0h1m5 0h2m2 0h1m1 0h1m2 0h1m1 0h1m1 0h1m34 0h1m36 0h1m1 0h3m24 0h1m90 0h1m-584 1h2m48 0h2m2 0h2m25 0h3m3 0h1m7 0h1m9 0h1m4 0h1m2 0h2m3 0h2m1 0h2m1 0h1m1 0h2m4 0h1m15 0h1m5 0h1m19 0h3m3 0h1m7 0h7m1 0h3m4 0h1m6 0h1m4 0h1m15 0h1m1 0h2m1 0h1m9 0h1m23 0h2m1 0h1m2 0h3m41 0h1m5 0h1m8 0h1m13 0h1m2 0h1m20 0h1m2 0h1m31 0h3m1 0h3m8 0h3m4 0h1m2 0h1m3 0h1m30 0h1m1 0h1m1 0h2m1 0h1m2 0h2m2 0h2m2 0h1m23 0h3m1 0h1m1 0h1m14 0h1m1 0h1m3 0h1m10 0h3m1 0h1m2 0h2m19 0h1m-589 1h2m6 0h1m21 0h1m3 0h1m1 0h1m86 0h1m5 0h1m40 0h2m52 0h1m8 0h4m36 0h4m1 0h2m15 0h1m2 0h2m20 0h1m2 0h2m1 0h1m1 0h2m20 0h6m2 0h1m43 0h1m1 0h2m32 0h1m33 0h1m43 0h1m17 0h1m3 0h1m11 0h1m1 0h3m1 0h1m2 0h1m20 0h1m21 0h1m1 0h3m1 0h1m-599 1h1m2 0h1m6 0h4m21 0h1m3 0h1m33 0h1m9 0h1m6 0h1m6 0h2m34 0h1m1 0h1m2 0h1m31 0h1m1 0h1m127 0h1m27 0h1m47 0h1m3 0h2m7 0h1m55 0h1m2 0h1m12 0h1m40 0h2m5 0h1m11 0h1m26 0h1m11 0h1m2 0h1m5 0h1m9 0h1m19 0h2m-581 1h1m4 0h2m1 0h5m3 0h1m14 0h2m22 0h1m20 0h1m2 0h1m2 0h1m7 0h1m1 0h2m4 0h2m4 0h1m25 0h1m2 0h3m1 0h3m1 0h1m1 0h1m50 0h1m8 0h1m2 0h1m8 0h1m5 0h1m3 0h1m3 0h1m10 0h1m10 0h1m2 0h1m2 0h1m3 0h3m3 0h1m1 0h1m20 0h1m2 0h2m1 0h1m23 0h2m5 0h1m2 0h1m2 0h4m33 0h1m4 0h1m4 0h1m2 0h2m4 0h3m1 0h3m1 0h1m4 0h2m3 0h1m6 0h1m23 0h1m1 0h1m5 0h1m63 0h1m1 0h1m1 0h2m6 0h1m3 0h2m1 0h2m4 0h2m1 0h1m16 0h2m1 0h1m2 0h1m1 0h5m1 0h1m-598 1h2m4 0h2m1 0h1m2 0h1m2 0h1m1 0h1m34 0h1m2 0h1m12 0h1m2 0h1m3 0h1m1 0h2m3 0h1m39 0h1m6 0h1m1 0h1m2 0h1m8 0h1m4 0h1m3 0h1m1 0h2m12 0h1m4 0h1m4 0h4m1 0h1m1 0h3m10 0h7m4 0h2m3 0h1m3 0h1m6 0h1m32 0h1m4 0h1m5 0h1m3 0h1m2 0h1m54 0h1m6 0h2m2 0h4m27 0h1m5 0h1m1 0h1m4 0h1m2 0h1m9 0h2m33 0h1m5 0h1m6 0h3m2 0h1m1 0h2m1 0h1m31 0h6m1 0h3m1 0h3m3 0h3m2 0h1m1 0h2m26 0h1m26 0h8m1 0h1m25 0h2m2 0h4m-573 1h1m2 0h2m1 0h1m38 0h1m28 0h1m59 0h1m2 0h1m12 0h1m2 0h5m1 0h1m63 0h1m16 0h4m3 0h1m1 0h1m3 0h2m14 0h1m1 0h1m6 0h2m10 0h1m7 0h1m24 0h4m32 0h1m15 0h1m3 0h1m52 0h2m37 0h1m95 0h1m-597 1h1m3 0h1m31 0h3m4 0h2m2 0h1m32 0h1m18 0h1m1 0h1m3 0h1m21 0h1m37 0h1m8 0h1m25 0h1m25 0h1m1 0h1m10 0h1m1 0h2m1 0h1m5 0h2m2 0h1m1 0h1m53 0h3m1 0h2m1 0h2m29 0h1m10 0h1m13 0h1m25 0h1m14 0h1m1 0h1m32 0h1m1 0h2m2 0h4m43 0h1m2 0h1m2 0h1m24 0h1m2 0h1m12 0h1m49 0h1m-607 1h1m16 0h2m2 0h1m19 0h1m4 0h3m18 0h2m1 0h2m1 0h3m19 0h1m32 0h3m15 0h1m4 0h1m4 0h2m1 0h3m1 0h3m1 0h1m1 0h2m5 0h1m1 0h1m4 0h1m1 0h1m26 0h1m7 0h2m1 0h1m1 0h1m46 0h1m1 0h2m29 0h1m2 0h5m44 0h1m34 0h1m4 0h7m1 0h1m9 0h1m3 0h1m2 0h1m3 0h1m1 0h1m1 0h1m1 0h5m31 0h1m3 0h2m14 0h1m4 0h1m25 0h1m16 0h1m21 0h1m3 0h1m6 0h1m38 0h1m-613 1h1m11 0h2m1 0h1m1 0h1m1 0h1m6 0h1m3 0h2m2 0h3m1 0h1m3 0h1m4 0h1m14 0h1m3 0h1m24 0h1m1 0h2m2 0h2m3 0h1m1 0h3m1 0h1m29 0h1m4 0h1m4 0h1m51 0h1m3 0h1m27 0h1m2 0h1m19 0h1m3 0h1m2 0h1m4 0h1m52 0h1m5 0h1m1 0h1m4 0h2m1 0h1m3 0h4m1 0h3m34 0h1m29 0h2m27 0h1m8 0h2m2 0h3m1 0h2m7 0h1m6 0h1m19 0h3m2 0h1m30 0h1m3 0h5m20 0h1m11 0h2m1 0h3m2 0h1m30 0h1m-610 1h1m2 0h1m54 0h1m29 0h1m37 0h1m40 0h1m6 0h1m7 0h1m4 0h1m4 0h1m3 0h1m3 0h1m3 0h1m16 0h1m13 0h1m3 0h1m1 0h1m2 0h3m24 0h2m2 0h1m1 0h2m3 0h2m1 0h3m2 0h3m2 0h1m1 0h2m3 0h1m18 0h2m11 0h1m30 0h1m2 0h3m4 0h4m5 0h2m1 0h1m71 0h1m1 0h2m5 0h1m21 0h1m5 0h2m13 0h1m6 0h1m2 0h2m4 0h1m11 0h7m3 0h1m5 0h1m-548 1h1m10 0h1m1 0h1m1 0h4m1 0h1m10 0h2m1 0h1m1 0h1m34 0h1m23 0h1m2 0h1m4 0h2m3 0h1m1 0h1m10 0h2m4 0h1m2 0h1m20 0h1m1 0h3m15 0h1m8 0h1m10 0h1m88 0h1m21 0h1m2 0h1m2 0h1m41 0h1m30 0h1m4 0h2m3 0h1m1 0h3m17 0h1m19 0h1m38 0h1m5 0h1m1 0h1m16 0h2m16 0h2m1 0h1m2 0h1m1 0h1m1 0h1m1 0h1m48 0h2m3 0h1m1 0h6m1 0h2m4 0h1m-576 1h3m5 0h1m3 0h1m3 0h2m5 0h1m4 0h1m3 0h2m1 0h1m8 0h1m4 0h1m5 0h1m29 0h1m96 0h1m3 0h2m23 0h1m1 0h4m1 0h1m23 0h2m12 0h1m25 0h1m2 0h1m10 0h1m3 0h1m1 0h2m2 0h1m1 0h1m11 0h1m19 0h1m3 0h2m3 0h1m13 0h1m4 0h1m6 0h1m1 0h1m2 0h1m1 0h5m41 0h3m2 0h1m5 0h1m3 0h1m1 0h2m1 0h1m61 0h5m1 0h1m2 0h4m1 0h2m15 0h3m1 0h2m2 0h1m-539 1h1m6 0h1m33 0h1m10 0h2m2 0h3m6 0h1m12 0h1m4 0h1m16 0h1m6 0h1m61 0h1m11 0h1m1 0h1m3 0h2m17 0h1m32 0h1m14 0h1m24 0h2m5 0h1m12 0h1m2 0h7m61 0h1m18 0h1m1 0h1m1 0h1m4 0h1m37 0h1m12 0h3m1 0h1m1 0h4m69 0h1m12 0h1m-573 1h8m1 0h1m3 0h1m1 0h1m2 0h1m11 0h1m1 0h3m1 0h2m1 0h1m7 0h1m7 0h2m1 0h2m20 0h1m19 0h1m3 0h2m2 0h1m12 0h4m1 0h1m1 0h2m4 0h2m3 0h1m1 0h1m5 0h1m16 0h2m1 0h1m5 0h1m3 0h1m3 0h1m1 0h1m1 0h1m1 0h1m2 0h1m1 0h1m3 0h1m1 0h1m18 0h1m2 0h1m20 0h1m1 0h1m3 0h1m31 0h1m9 0h1m22 0h1m5 0h1m2 0h1m1 0h1m4 0h1m11 0h1m4 0h1m2 0h1m6 0h2m2 0h1m11 0h3m20 0h2m34 0h1m4 0h1m3 0h3m1 0h3m1 0h2m22 0h1m3 0h2m1 0h2m18 0h1m13 0h2m3 0h1m1 0h1m3 0h2m22 0h1m13 0h1m18 0h1m9 0h1m4 0h1m3 0h3m-611 1h1m2 0h1m3 0h1m42 0h2m1 0h1m15 0h1m2 0h1m5 0h1m5 0h2m2 0h1m7 0h1m5 0h1m2 0h2m12 0h1m1 0h7m32 0h9m20 0h1m5 0h1m2 0h1m9 0h3m4 0h1m1 0h2m2 0h1m9 0h1m3 0h1m2 0h2m4 0h1m1 0h3m17 0h1m3 0h1m1 0h1m2 0h1m25 0h2m1 0h1m1 0h1m1 0h1m2 0h1m1 0h1m5 0h1m6 0h1m11 0h1m44 0h1m7 0h5m2 0h1m11 0h1m2 0h2m3 0h4m1 0h6m5 0h1m5 0h1m2 0h1m1 0h1m23 0h4m1 0h5m34 0h1m25 0h1m1 0h1m2 0h1m1 0h1m1 0h3m1 0h2m1 0h1m1 0h9m1 0h2m14 0h1m6 0h1m2 0h1m1 0h4m6 0h1m-585 1h1m7 0h1m155 0h1m70 0h1m148 0h1m16 0h1m62 0h1m7 0h1m88 0h1m26 0h1m-578 1h1m18 0h5m9 0h1m1 0h1m45 0h1m18 0h1m5 0h1m60 0h1m150 0h1m1 0h1m22 0h1m18 0h1m18 0h1m19 0h1m12 0h1m10 0h1m3 0h1m8 0h1m6 0h1m31 0h2m7 0h1m21 0h1m18 0h1m1 0h1m49 0h2m-603 1h1m1 0h1m2 0h1m13 0h1m3 0h1m2 0h3m33 0h1m1 0h1m2 0h1m4 0h1m4 0h1m2 0h1m1 0h2m2 0h3m12 0h2m3 0h2m22 0h1m1 0h2m3 0h1m14 0h1m6 0h1m79 0h1m6 0h1m12 0h1m3 0h2m4 0h1m9 0h2m1 0h4m2 0h1m10 0h1m1 0h8m20 0h3m1 0h1m2 0h1m6 0h1m6 0h1m2 0h2m24 0h1m1 0h1m6 0h4m1 0h1m3 0h2m2 0h1m7 0h1m3 0h1m1 0h1m1 0h2m15 0h1m3 0h2m4 0h1m3 0h1m16 0h1m46 0h2m1 0h1m2 0h1m13 0h1m30 0h1m5 0h1m1 0h3m2 0h3m10 0h1m1 0h1m1 0h1m1 0h2m1 0h1m-569 1h1m1 0h4m1 0h3m1 0h1m1 0h3m1 0h2m8 0h1m12 0h1m3 0h2m9 0h1m4 0h2m3 0h1m9 0h1m8 0h1m1 0h2m36 0h4m6 0h1m2 0h2m11 0h5m3 0h1m17 0h1m2 0h2m2 0h2m1 0h3m5 0h1m5 0h1m1 0h1m1 0h1m1 0h3m12 0h1m2 0h1m1 0h1m1 0h1m30 0h3m1 0h1m1 0h4m18 0h1m41 0h1m6 0h2m2 0h4m1 0h4m44 0h1m25 0h3m17 0h2m18 0h2m2 0h4m1 0h1m20 0h1m2 0h1m4 0h2m1 0h1m48 0h2m1 0h1m1 0h5m10 0h4m-594 1h1m5 0h1m39 0h1m6 0h1m24 0h2m13 0h1m20 0h1m2 0h1m8 0h1m169 0h1m2 0h1m16 0h1m3 0h1m5 0h1m117 0h1m1 0h1m1 0h2m49 0h1m7 0h1m34 0h1m19 0h2m4 0h1m-577 1h2m1 0h1m3 0h1m14 0h1m5 0h1m3 0h2m1 0h2m3 0h8m10 0h2m50 0h1m1 0h1m2 0h1m32 0h3m1 0h3m1 0h1m5 0h3m1 0h2m14 0h1m15 0h1m4 0h1m1 0h4m3 0h2m1 0h1m13 0h1m3 0h1m6 0h1m6 0h1m1 0h1m7 0h3m2 0h3m1 0h3m2 0h1m4 0h1m4 0h1m2 0h1m1 0h1m21 0h2m2 0h1m1 0h1m4 0h1m3 0h1m16 0h1m1 0h1m11 0h1m19 0h2m12 0h3m2 0h3m1 0h1m31 0h1m2 0h1m5 0h1m2 0h2m3 0h2m10 0h1m1 0h2m3 0h2m11 0h4m1 0h7m1 0h2m2 0h2m1 0h1m6 0h2m11 0h2m1 0h7m2 0h2m3 0h1m18 0h1m4 0h1m3 0h3m12 0h1m4 0h1m3 0h2m1 0h1m1 0h1m1 0h1m1 0h1m-609 1h5m1 0h4m20 0h1m5 0h1m1 0h1m23 0h2m1 0h1m1 0h1m4 0h2m1 0h1m2 0h2m12 0h1m2 0h5m13 0h1m1 0h1m3 0h1m6 0h1m14 0h1m4 0h2m22 0h2m8 0h1m1 0h1m1 0h1m3 0h1m2 0h1m6 0h1m1 0h7m26 0h1m78 0h1m4 0h1m19 0h1m2 0h1m2 0h1m2 0h1m1 0h2m40 0h1m1 0h3m3 0h1m22 0h1m2 0h1m1 0h1m1 0h1m3 0h7m21 0h1m2 0h1m2 0h1m1 0h1m55 0h1m4 0h1m10 0h1m5 0h1m3 0h1m7 0h2m20 0h1m1 0h1m1 0h6m-541 1h4m1 0h5m21 0h1m1 0h4m1 0h3m12 0h1m3 0h4m17 0h1m23 0h2m3 0h1m10 0h1m6 0h1m3 0h1m2 0h1m7 0h1m4 0h1m15 0h6m1 0h2m9 0h1m12 0h1m8 0h1m1 0h1m1 0h1m3 0h3m2 0h5m1 0h1m8 0h2m11 0h2m7 0h1m1 0h1m1 0h1m2 0h1m1 0h1m12 0h1m1 0h1m1 0h1m74 0h2m37 0h2m2 0h3m2 0h1m30 0h1m5 0h1m3 0h1m2 0h1m3 0h1m2 0h3m1 0h1m1 0h1m1 0h1m8 0h1m12 0h2m2 0h1m69 0h3m-607 1h5m1 0h5m2 0h1m1 0h1m3 0h1m20 0h1m1 0h5m15 0h1m2 0h1m6 0h2m1 0h1m2 0h2m13 0h2m5 0h1m40 0h1m3 0h3m13 0h2m1 0h2m4 0h1m5 0h1m5 0h1m5 0h1m11 0h2m1 0h1m1 0h2m1 0h2m46 0h1m23 0h7m1 0h1m1 0h1m4 0h2m11 0h1m23 0h3m2 0h1m2 0h1m8 0h1m12 0h1m1 0h2m4 0h4m5 0h1m1 0h1m2 0h1m2 0h1m1 0h1m1 0h1m1 0h1m3 0h2m27 0h1m3 0h1m2 0h3m2 0h1m4 0h1m10 0h2m1 0h2m33 0h1m5 0h1m27 0h1m2 0h1m8 0h1m11 0h1m2 0h1m5 0h1m30 0h1m4 0h1m11 0h1m-582 1h1m34 0h1m30 0h1m2 0h1m3 0h1m96 0h1m44 0h1m3 0h1m53 0h1m2 0h1m6 0h1m86 0h1m15 0h1m43 0h1m15 0h1m59 0h1m-532 1h1m2 0h1m1 0h5m2 0h1m2 0h2m1 0h1m10 0h3m1 0h4m1 0h1m1 0h8m1 0h5m3 0h2m11 0h1m21 0h1m6 0h10m2 0h2m3 0h1m1 0h1m9 0h1m11 0h1m20 0h7m4 0h1m1 0h1m1 0h1m1 0h4m1 0h1m1 0h2m9 0h1m4 0h4m4 0h4m2 0h4m7 0h1m1 0h1m3 0h1m5 0h1m10 0h5m1 0h1m2 0h2m1 0h1m1 0h1m1 0h2m1 0h2m1 0h3m1 0h1m1 0h4m1 0h6m12 0h1m5 0h1m3 0h2m1 0h11m1 0h4m10 0h2m1 0h1m2 0h4m10 0h2m2 0h3m1 0h1m12 0h2m2 0h2m1 0h2m5 0h1m1 0h1m1 0h1m30 0h2m1 0h2m49 0h1m4 0h1m30 0h1m9 0h2m1 0h7m10 0h1m9 0h3m1 0h8m8 0h1m8 0h1m10 0h3m1 0h5m1 0h4m-587 1h1m33 0h1m1 0h1m2 0h2m1 0h1m8 0h1m43 0h3m2 0h1m18 0h1m45 0h1m16 0h1m30 0h2m1 0h1m1 0h3m60 0h2m47 0h1m12 0h1m1 0h1m2 0h2m1 0h2m21 0h1m12 0h1m27 0h1m6 0h1m8 0h1m11 0h1m3 0h1m2 0h1m44 0h1m4 0h1m1 0h1m-500 1h2m1 0h2m1 0h4m1 0h8m33 0h1m2 0h2m1 0h1m11 0h1m1 0h1m1 0h1m1 0h1m1 0h1m1 0h1m1 0h2m4 0h2m18 0h1m12 0h1m3 0h1m3 0h1m8 0h1m25 0h1m1 0h2m7 0h1m14 0h1m6 0h1m5 0h1m18 0h1m9 0h1m2 0h1m4 0h1m1 0h3m3 0h2m44 0h1m5 0h4m1 0h3m1 0h1m46 0h1m1 0h1m1 0h4m2 0h1m14 0h1m6 0h2m4 0h1m8 0h2m3 0h2m7 0h1m12 0h1m1 0h1m1 0h5m43 0h1m17 0h3m1 0h1m1 0h4m50 0h1m3 0h4m15 0h1m-601 1h1m5 0h1m31 0h1m1 0h3m34 0h1m41 0h1m8 0h2m1 0h1m1 0h1m16 0h1m13 0h1m2 0h1m1 0h1m1 0h2m1 0h3m12 0h2m17 0h1m45 0h1m1 0h1m40 0h2m1 0h1m1 0h2m2 0h1m6 0h1m35 0h3m1 0h1m1 0h2m1 0h1m4 0h1m17 0h1m6 0h1m1 0h1m16 0h1m6 0h1m18 0h1m4 0h1m5 0h1m1 0h1m44 0h6m9 0h1m30 0h1m1 0h1m4 0h1m1 0h1m23 0h1m3 0h1m22 0h1m-610 1h3m2 0h1m1 0h2m5 0h1m24 0h9m8 0h1m1 0h1m1 0h3m1 0h5m3 0h1m5 0h1m22 0h2m5 0h1m10 0h1m1 0h6m1 0h1m7 0h2m11 0h10m10 0h2m1 0h1m5 0h1m17 0h3m18 0h1m8 0h1m2 0h1m1 0h5m2 0h1m1 0h2m1 0h2m4 0h6m1 0h3m16 0h1m4 0h5m2 0h1m6 0h1m41 0h1m37 0h1m12 0h1m21 0h5m1 0h1m1 0h2m5 0h1m4 0h1m1 0h3m5 0h2m1 0h1m3 0h1m1 0h1m21 0h1m1 0h1m1 0h5m1 0h1m1 0h1m1 0h5m20 0h1m1 0h1m7 0h1m2 0h1m27 0h1m19 0h1m19 0h2m1 0h2m1 0h1m1 0h1m13 0h1m-582 1h1m3 0h1m19 0h1m123 0h1m12 0h1m9 0h1m43 0h1m8 0h1m41 0h1m49 0h1m38 0h1m57 0h2m115 0h1m-555 1h1m6 0h2m6 0h3m15 0h1m1 0h2m1 0h1m20 0h1m12 0h3m4 0h3m12 0h2m1 0h3m12 0h1m2 0h1m1 0h2m5 0h2m4 0h2m25 0h1m32 0h1m11 0h1m14 0h1m3 0h2m31 0h1m1 0h1m1 0h2m1 0h2m1 0h1m5 0h2m10 0h1m3 0h3m55 0h1m2 0h1m1 0h1m2 0h7m1 0h2m2 0h1m2 0h2m1 0h1m39 0h1m3 0h4m1 0h1m24 0h3m3 0h2m27 0h2m3 0h2m2 0h4m20 0h1m1 0h2m3 0h1m5 0h1m1 0h3m1 0h1m10 0h2m1 0h4m1 0h1m12 0h5m1 0h1m1 0h2m1 0h1m3 0h1m3 0h9m11 0h1m-608 1h1m13 0h1m15 0h1m2 0h1m2 0h1m5 0h1m8 0h1m6 0h1m10 0h1m2 0h1m33 0h1m9 0h1m25 0h1m4 0h1m1 0h2m2 0h2m2 0h1m8 0h3m1 0h2m4 0h1m13 0h1m1 0h1m15 0h1m1 0h1m3 0h2m9 0h1m7 0h1m3 0h3m1 0h1m1 0h1m2 0h1m51 0h1m25 0h1m1 0h2m58 0h1m40 0h1m2 0h5m1 0h1m15 0h1m23 0h1m25 0h1m3 0h1m35 0h1m14 0h3m5 0h2m43 0h1m-606 1h1m6 0h2m6 0h1m26 0h1m2 0h1m4 0h1m71 0h2m1 0h2m1 0h2m1 0h1m56 0h1m13 0h1m19 0h1m1 0h1m1 0h1m2 0h1m1 0h1m11 0h3m6 0h1m2 0h2m1 0h1m2 0h1m65 0h1m25 0h1m23 0h1m10 0h1m9 0h1m1 0h1m7 0h1m1 0h8m2 0h2m22 0h3m3 0h2m32 0h1m4 0h2m47 0h1m2 0h1m20 0h1m2 0h2m4 0h2m1 0h1m3 0h1m1 0h1m1 0h10m-581 1h1m16 0h1m1 0h1m25 0h1m3 0h2m24 0h1m6 0h1m1 0h4m1 0h1m4 0h1m5 0h1m9 0h1m44 0h4m1 0h1m38 0h1m1 0h1m19 0h3m1 0h1m1 0h1m54 0h2m1 0h1m4 0h3m1 0h2m1 0h1m3 0h1m1 0h5m1 0h2m10 0h2m30 0h1m1 0h1m2 0h2m10 0h1m10 0h1m8 0h1m28 0h1m2 0h2m1 0h2m1 0h1m14 0h1m1 0h1m3 0h1m8 0h1m1 0h2m23 0h1m10 0h1m1 0h1m2 0h1m7 0h1m1 0h2m1 0h1m1 0h3m28 0h2m10 0h1m-558 1h3m1 0h3m2 0h2m49 0h6m1 0h1m37 0h1m1 0h1m13 0h2m2 0h1m1 0h1m1 0h3m5 0h1m2 0h1m23 0h1m7 0h1m3 0h2m23 0h1m10 0h2m16 0h4m11 0h1m11 0h1m2 0h2m1 0h1m1 0h1m1 0h1m4 0h2m2 0h1m71 0h1m32 0h1m1 0h1m3 0h1m21 0h2m1 0h1m5 0h1m104 0h2m2 0h2m6 0h1m16 0h1m8 0h3m2 0h1m12 0h1m9 0h2m-551 1h3m3 0h3m84 0h2m3 0h1m4 0h1m35 0h1m1 0h5m1 0h2m50 0h1m3 0h1m25 0h1m18 0h2m7 0h2m30 0h6m1 0h3m10 0h1m19 0h8m17 0h1m24 0h1m1 0h6m1 0h1m21 0h1m3 0h3m1 0h1m21 0h2m4 0h1m4 0h1m1 0h1m5 0h1m5 0h1m8 0h3m21 0h1m2 0h2m4 0h1m11 0h1m9 0h2m1 0h2m1 0h4m2 0h1m-603 1h1m6 0h1m2 0h4m2 0h1m2 0h2m1 0h2m3 0h5m8 0h1m1 0h8m1 0h1m22 0h1m3 0h2m11 0h1m1 0h2m1 0h4m20 0h4m1 0h5m49 0h1m40 0h1m13 0h1m1 0h2m43 0h1m9 0h1m1 0h1m11 0h1m2 0h1m4 0h1m7 0h2m7 0h2m4 0h2m6 0h2m14 0h5m1 0h1m1 0h2m48 0h1m1 0h1m4 0h1m3 0h2m1 0h3m3 0h1m42 0h6m1 0h2m1 0h8m9 0h1m-485 1h1m25 0h1m1 0h3m2 0h3m52 0h1m20 0h2m3 0h1m3 0h2m1 0h3m3 0h4m1 0h1m1 0h1m24 0h1m46 0h1m1 0h1m2 0h1m3 0h1m5 0h1m4 0h3m1 0h4m1 0h3m1 0h1m1 0h1m1 0h1m1 0h1m3 0h1m2 0h1m5 0h1m7 0h1m1 0h1m1 0h5m5 0h1m2 0h1m1 0h1m7 0h1m17 0h1m34 0h1m8 0h1m2 0h1m14 0h1m2 0h3m2 0h2m12 0h1m21 0h3m2 0h1m8 0h1m16 0h1m1 0h1m32 0h1m12 0h6m8 0h1m1 0h1m1 0h1m12 0h1m7 0h1m11 0h2m7 0h1m2 0h2m2 0h1m3 0h1m1 0h1m3 0h2m-589 1h5m1 0h2m1 0h1m2 0h2m3 0h2m1 0h2m6 0h2m32 0h3m2 0h1m1 0h1m4 0h2m5 0h2m5 0h2m13 0h1m2 0h1m10 0h1m9 0h1m12 0h1m8 0h3m1 0h5m4 0h5m2 0h1m11 0h2m1 0h2m1 0h2m11 0h4m1 0h1m3 0h1m6 0h1m14 0h2m1 0h1m1 0h1m1 0h2m28 0h1m42 0h2m7 0h2m5 0h1m5 0h7m19 0h1m11 0h1m3 0h1m2 0h1m1 0h1m3 0h1m44 0h1m20 0h1m1 0h1m3 0h1m4 0h1m3 0h1m6 0h1m54 0h1m1 0h1m6 0h1m9 0h2m42 0h1m-556 1h2m63 0h1m22 0h1m101 0h1m14 0h1m8 0h1m3 0h1m97 0h1m62 0h1m12 0h1m43 0h1m61 0h1m5 0h1m33 0h1m14 0h1m-512 1h1m2 0h1m218 0h1m75 0h1m121 0h1m-506 1h1m8 0h1m3 0h1m3 0h1m1 0h1m8 0h1m5 0h2m1 0h5m1 0h1m1 0h3m1 0h2m1 0h1m1 0h3m13 0h1m4 0h3m14 0h2m2 0h1m1 0h6m1 0h3m3 0h1m3 0h1m18 0h1m1 0h1m57 0h1m23 0h1m39 0h1m1 0h3m5 0h5m1 0h1m1 0h2m11 0h2m6 0h1m10 0h10m3 0h1m8 0h2m12 0h1m3 0h2m3 0h1m1 0h1m34 0h3m1 0h4m12 0h1m1 0h2m2 0h2m2 0h1m11 0h1m1 0h1m5 0h2m5 0h2m7 0h1m12 0h1m12 0h1m3 0h1m3 0h1m1 0h2m1 0h2m4 0h3m4 0h1m1 0h2m1 0h1m7 0h1m8 0h1m8 0h1m7 0h1m22 0h3m1 0h2m6 0h1m22 0h1m-607 1h1m2 0h1m4 0h1m21 0h3m28 0h1m2 0h5m22 0h2m3 0h1m12 0h1m1 0h1m40 0h1m5 0h1m13 0h2m49 0h1m2 0h1m11 0h3m2 0h1m14 0h1m35 0h1m2 0h1m1 0h1m2 0h3m2 0h2m20 0h2m3 0h1m1 0h1m3 0h2m4 0h1m13 0h1m4 0h1m3 0h1m1 0h3m1 0h1m4 0h1m39 0h1m1 0h3m2 0h2m5 0h1m28 0h1m7 0h1m5 0h1m2 0h1m20 0h1m3 0h1m13 0h1m3 0h1m4 0h1m12 0h1m2 0h1m8 0h1m7 0h1m1 0h1m2 0h1m22 0h2m2 0h2m2 0h3m1 0h1m-593 1h8m1 0h1m1 0h1m1 0h1m4 0h1m11 0h2m1 0h2m1 0h4m7 0h1m12 0h1m1 0h1m5 0h1m36 0h1m1 0h1m3 0h1m28 0h2m2 0h5m1 0h2m1 0h1m3 0h4m1 0h1m3 0h1m23 0h7m1 0h1m21 0h1m1 0h4m14 0h2m1 0h1m2 0h2m12 0h7m1 0h12m30 0h10m34 0h1m2 0h3m1 0h1m5 0h1m4 0h5m2 0h1m11 0h2m7 0h1m3 0h1m3 0h2m38 0h1m11 0h1m5 0h1m2 0h1m13 0h1m15 0h1m21 0h1m31 0h1m18 0h1m2 0h3m-443 1h1m-146 1h1m6 0h1m1 0h1m10 0h4m2 0h2m1 0h1m1 0h5m1 0h3m2 0h1m69 0h5m2 0h3m5 0h1m13 0h1m5 0h1m32 0h15m1 0h2m1 0h1m10 0h4m3 0h1m1 0h1m2 0h1m9 0h2m16 0h3m1 0h4m1 0h1m39 0h2m6 0h1m1 0h1m20 0h5m1 0h6m1 0h1m2 0h1m1 0h3m3 0h1m35 0h2m1 0h3m1 0h2m1 0h1m1 0h4m1 0h1m1 0h1m26 0h1m1 0h1m15 0h1m1 0h1m1 0h1m31 0h1m1 0h8m2 0h1m27 0h1m4 0h2m28 0h1m5 0h1m28 0h3m1 0h2m2 0h2m-569 1h1m6 0h1m14 0h1m1 0h1m5 0h1m7 0h1m4 0h2m4 0h1m5 0h1m1 0h2m36 0h1m2 0h1m10 0h5m3 0h2m10 0h3m1 0h5m62 0h1m18 0h4m1 0h3m1 0h5m1 0h2m1 0h2m1 0h1m1 0h1m19 0h2m16 0h1m35 0h1m3 0h7m1 0h1m1 0h1m4 0h1m6 0h1m5 0h1m20 0h1m8 0h1m5 0h1m6 0h2m1 0h1m1 0h1m1 0h1m30 0h1m2 0h1m1 0h1m3 0h4m1 0h1m2 0h2m12 0h1m2 0h1m1 0h2m34 0h2m4 0h1m17 0h1m2 0h2m3 0h1m5 0h3m1 0h16m-590 1h1m6 0h1m24 0h1m29 0h1m18 0h1m3 0h1m4 0h3m1 0h1m1 0h4m9 0h1m21 0h9m10 0h9m13 0h1m1 0h1m8 0h9m1 0h1m5 0h1m22 0h2m12 0h1m6 0h1m2 0h2m22 0h1m1 0h1m1 0h2m1 0h1m1 0h1m3 0h1m2 0h1m2 0h2m8 0h2m1 0h8m55 0h1m3 0h1m34 0h2m12 0h2m11 0h1m1 0h4m2 0h1m10 0h1m3 0h1m3 0h1m51 0h1m5 0h1m85 0h1m-477 1h1m2 0h1m13 0h1m1 0h2m1 0h1m15 0h1m61 0h1m25 0h2m2 0h2m1 0h4m1 0h2m18 0h1m8 0h1m3 0h1m12 0h1m1 0h1m5 0h1m1 0h8m22 0h6m1 0h1m1 0h1m20 0h9m2 0h8m16 0h1m11 0h2m8 0h1m2 0h1m3 0h3m1 0h1m8 0h1m2 0h6m11 0h1m1 0h1m1 0h1m1 0h2m37 0h5m16 0h1m14 0h1m11 0h2m1 0h1m1 0h2m1 0h2m4 0h1m-585 1h1m6 0h1m13 0h3m4 0h1m1 0h2m1 0h1m1 0h3m1 0h2m2 0h1m1 0h1m2 0h2m1 0h1m12 0h1m2 0h1m10 0h1m5 0h2m1 0h1m10 0h1m11 0h1m1 0h1m1 0h1m1 0h1m2 0h1m27 0h1m8 0h1m13 0h5m55 0h1m37 0h1m1 0h6m15 0h1m2 0h1m4 0h1m33 0h2m1 0h4m60 0h1m24 0h2m2 0h1m1 0h1m1 0h1m5 0h1m50 0h4m1 0h4m3 0h1m13 0h1m19 0h2m8 0h1m2 0h1m2 0h1m6 0h1m21 0h1m1 0h1m1 0h3m-597 1h4m1 0h1m2 0h1m74 0h1m5 0h1m1 0h2m36 0h3m3 0h1m4 0h3m1 0h4m42 0h1m2 0h2m3 0h4m3 0h1m25 0h2m11 0h1m27 0h1m1 0h2m2 0h1m20 0h1m9 0h2m3 0h2m3 0h1m8 0h2m1 0h3m1 0h1m23 0h2m2 0h2m2 0h2m7 0h1m12 0h1m3 0h1m2 0h1m2 0h3m3 0h2m4 0h1m2 0h1m2 0h2m4 0h1m1 0h2m5 0h1m19 0h4m1 0h1m21 0h1m3 0h1m1 0h1m1 0h2m85 0h1m18 0h1m4 0h3m2 0h1m2 0h1m1 0h1m-600 1h1m5 0h2m25 0h1m44 0h1m15 0h1m45 0h7m1 0h2m20 0h3m1 0h2m30 0h1m17 0h3m13 0h7m1 0h2m20 0h5m22 0h2m34 0h1m2 0h3m22 0h1m20 0h2m1 0h2m2 0h1m25 0h1m12 0h1m1 0h5m1 0h2m1 0h1m37 0h1m2 0h10m25 0h1m7 0h5m7 0h1m11 0h1m4 0h1m10 0h1m7 0h1m2 0h1m1 0h2m3 0h1m-567 1h1m14 0h2m2 0h2m4 0h1m1 0h3m1 0h1m1 0h1m13 0h2m1 0h1m1 0h1m12 0h10m13 0h1m2 0h1m5 0h1m3 0h2m1 0h2m1 0h2m2 0h4m2 0h1m1 0h1m4 0h1m10 0h10m30 0h2m4 0h1m6 0h2m3 0h1m1 0h2m1 0h3m2 0h1m12 0h1m1 0h1m1 0h2m13 0h1m4 0h3m1 0h1m18 0h1m2 0h2m3 0h2m1 0h1m10 0h1m1 0h1m1 0h2m46 0h1m1 0h1m1 0h1m2 0h1m13 0h3m1 0h1m1 0h1m24 0h3m13 0h1m4 0h1m1 0h1m1 0h1m12 0h1m7 0h2m1 0h2m2 0h2m15 0h1m3 0h2m10 0h1m1 0h1m1 0h3m2 0h6m1 0h3m50 0h1m31 0h2m1 0h6m1 0h3m-526 1h1m36 0h1m8 0h1m57 0h1m93 0h1m42 0h1m3 0h1m43 0h1m15 0h1m1 0h1m58 0h1m107 0h1m9 0h1m18 0h1m-585 1h1m2 0h1m4 0h2m22 0h1m1 0h1m3 0h1m1 0h1m1 0h1m20 0h1m1 0h4m1 0h3m43 0h1m2 0h2m1 0h1m12 0h2m1 0h1m1 0h1m1 0h6m2 0h2m3 0h1m7 0h5m5 0h2m2 0h1m11 0h1m1 0h1m1 0h2m1 0h1m2 0h1m1 0h1m21 0h1m10 0h1m1 0h3m2 0h2m1 0h1m3 0h1m2 0h2m6 0h2m2 0h1m1 0h1m2 0h2m1 0h2m33 0h1m3 0h3m44 0h2m7 0h1m11 0h2m1 0h1m5 0h1m1 0h1m1 0h1m12 0h1m1 0h1m2 0h1m3 0h1m1 0h2m1 0h1m44 0h4m1 0h2m1 0h1m25 0h1m7 0h1m3 0h1m2 0h1m24 0h5m1 0h2m5 0h1m12 0h1m15 0h1m2 0h1m10 0h1m4 0h4m1 0h1m-588 1h1m1 0h1m38 0h1m16 0h1m6 0h1m2 0h2m1 0h1m4 0h2m1 0h3m1 0h1m2 0h2m2 0h1m3 0h1m13 0h2m4 0h2m2 0h1m6 0h1m11 0h1m3 0h1m3 0h1m21 0h1m1 0h1m2 0h1m25 0h2m1 0h1m3 0h1m2 0h1m3 0h1m25 0h1m18 0h11m2 0h2m4 0h1m2 0h2m2 0h1m2 0h2m1 0h1m8 0h2m4 0h1m14 0h9m1 0h4m1 0h3m2 0h1m9 0h1m6 0h1m4 0h1m8 0h1m1 0h1m4 0h5m3 0h2m5 0h1m11 0h1m13 0h1m2 0h1m4 0h3m3 0h1m3 0h1m20 0h10m4 0h2m4 0h4m1 0h2m1 0h2m39 0h1m10 0h1m1 0h2m17 0h1m8 0h4m2 0h3m14 0h1"/><path stroke="#0000c1" d="M99 332h1m2 0h1m74 0h1m40 0h1m27 0h1m11 0h2m21 0h1m13 0h1m49 0h1m36 0h1m23 0h1m15 0h2m94 0h1m23 0h1m111 0h1m-555 1h1m4 0h1m37 0h1m15 0h1m13 0h1m4 0h1m26 0h1m26 0h1m31 0h1m41 0h1m41 0h1m92 0h1m50 0h1m57 0h1m6 0h1m1 0h1m12 0h1m39 0h1m24 0h1m22 0h1m16 0h1m-579 1h1m2 0h1m319 0h1m-306 1h1m52 0h1m26 0h1m3 0h1m2 0h1m41 0h1m46 0h1m15 0h1m38 0h1m92 0h1m108 0h1m6 0h1m3 0h1m13 0h1m7 0h1m1 0h1m2 0h1m21 0h1m1 0h2m15 0h1m7 0h1m22 0h1m-563 1h1m8 0h1m77 0h1m45 0h1m113 0h1m33 0h1m62 0h1m234 0h1m3 0h1m-511 1h1m352 0h1m13 0h1m74 0h1m33 0h1m-545 1h1m37 0h1m42 0h1m10 0h1m5 0h1m56 0h1m61 0h1m156 0h1m58 0h2m4 0h1m12 0h1m54 0h1m1 0h1m64 0h1m-408 1h1m18 0h1m18 0h1m1 0h1m118 0h1m48 0h1m40 0h1m30 0h1m33 0h1m62 0h1m-530 1h1m1 0h1m51 0h1m148 0h1m215 0h2m46 0h1m27 0h1m32 0h1m1 0h1m-407 1h1m27 0h1m19 0h1m15 0h1m113 0h1m166 0h1m29 0h1m59 0h1m-585 1h1m4 0h1m44 0h1m67 0h1m52 0h1m43 0h1m121 0h1m88 0h1m37 0h1m52 0h1m-436 1h1m94 0h1m217 0h1m144 0h1m43 0h1m-572 1h1m65 0h1m4 0h1m71 0h1m45 0h1m240 0h1m46 0h1m-463 1h1m37 0h1m8 0h1m41 0h1m60 0h1m171 0h1m82 0h1m150 0h1m2 0h1m-538 1h1m67 0h1m38 0h1m170 0h1m132 0h1m-291 1h1m28 0h1m128 0h1m-317 1h1m35 0h1m16 0h1m24 0h1m84 0h1m1 0h1m301 0h1m38 0h1m61 0h1m-523 1h1m14 0h1m10 0h1m16 0h1m68 0h1m11 0h1m29 0h1m69 0h1m2 0h1m166 0h1m2 0h1m9 0h1m-458 1h1m3 0h2m65 0h1m97 0h1m21 0h1m148 0h1m83 0h1m-360 1h1m10 0h1m309 0h1m127 0h1m-497 1h1m33 0h1m29 0h1m121 0h1m69 0h1m115 0h1m33 0h1m60 0h1m72 0h1m18 0h1m-417 1h1m295 0h1m-422 1h1m34 0h1m132 0h1m38 0h1m199 0h1m3 0h1m-398 1h1m11 0h1m512 0h1m-500 1h1m113 0h1m80 1h1m175 0h1m110 0h1m-523 1h1m64 0h1m7 0h1m158 0h1m183 0h1m50 0h1m-314 1h1m-23 1h1m32 0h1m57 0h1m192 0h1m-366 1h1m84 0h1m298 0h1m42 0h1m62 0h1m-85 2h1m49 0h1m-443 1h1m185 0h1m26 0h1m-123 3h1m23 0h1m42 0h1m227 0h1m-81 1h1m-218 1h1m17 0h1m194 0h1m-196 2h1m87 0h1m257 0h1m-541 1h1m543 0h1m-343 1h1m-195 1h1m40 0h1m152 1h1m132 0h1m-249 1h1m133 0h1m-164 1h1m28 1h1m153 0h1m-231 1h1m41 0h1m42 0h1m97 1h1m-184 1h1m41 0h1m67 0h1m166 1h1m130 0h1m-299 1h1m108 0h1m201 0h1m110 0h1m-260 1h1m164 0h1m95 0h1m-241 1h1m28 0h1m121 0h1m-404 1h1m180 0h1m184 1h1m36 0h1m-492 1h1m3 0h1m2 0h2m2 0h2m7 0h1m3 0h1m3 0h1m1 0h1m1 0h2m1 0h1m1 0h1m11 0h2m4 0h1m1 0h1m4 0h1m1 0h1m1 0h2m1 0h1m2 0h1m4 0h1m1 0h1m2 0h1m1 0h3m3 0h1m1 0h5m2 0h1m6 0h1m5 0h1m1 0h1m1 0h1m3 0h3m1 0h2m1 0h1m2 0h2m5 0h1m1 0h1m4 0h1m1 0h1m4 0h1m6 0h1m1 0h3m2 0h1m6 0h1m2 0h1m1 0h3m4 0h1m5 0h1m2 0h1m1 0h1m5 0h2m4 0h1m2 0h1m2 0h2m1 0h1m3 0h1m1 0h2m7 0h1m1 0h2m2 0h3m2 0h2m1 0h1m2 0h2m1 0h1m3 0h1m4 0h1m3 0h1m7 0h1m8 0h1m1 0h1m1 0h1m1 0h3m1 0h2m1 0h2m4 0h1m1 0h1m2 0h5m7 0h1m10 0h1m9 0h3m10 0h1m5 0h1m2 0h1m1 0h3m3 0h1m4 0h1m1 0h3m1 0h1m1 0h2m2 0h1m3 0h4m3 0h1m2 0h1m1 0h1m1 0h1m5 0h1m3 0h2m1 0h1m6 0h1m1 0h1m2 0h1m4 0h2m1 0h1m14 0h1m1 0h1m1 0h1m5 0h1m3 0h1m3 0h2m2 0h1m5 0h3m2 0h1m10 0h1m6 0h2m9 0h2m1 0h1m1 0h1m1 0h2m2 0h1m7 0h1m3 0h2m3 0h1m6 0h1m2 0h2m2 0h1m2 0h1m1 0h1m4 0h2m7 0h1m4 0h1m7 0h1m4 0h1m2 0h2m2 0h1m3 0h2m-600 1h1m35 0h2m1 0h2m13 0h2m9 0h2m1 0h1m2 0h1m3 0h1m8 0h1m13 0h1m1 0h1m17 0h1m4 0h1m6 0h1m11 0h1m5 0h1m1 0h2m11 0h1m5 0h1m5 0h2m5 0h1m1 0h1m9 0h2m78 0h1m6 0h1m39 0h1m8 0h1m1 0h1m3 0h3m8 0h1m2 0h2m2 0h1m7 0h1m39 0h1m3 0h1m5 0h1m22 0h1m27 0h1m8 0h1m11 0h1m4 0h1m1 0h1m26 0h1m4 0h2m24 0h1m15 0h1m4 0h1m30 0h1m1 0h1m-496 1h1m28 0h1m197 0h1m238 2h1m-568 1h1m18 0h1m124 0h1m448 0h1m-607 1h2m4 0h1m1 0h1m2 0h1m12 0h1m5 0h1m2 0h2m2 0h1m8 0h1m8 0h1m6 0h2m4 0h1m8 0h1m2 0h1m3 0h1m14 0h1m1 0h1m14 0h1m1 0h2m5 0h5m5 0h1m2 0h1m3 0h1m1 0h2m1 0h2m2 0h2m11 0h1m2 0h1m5 0h1m13 0h1m1 0h2m2 0h1m7 0h1m8 0h2m1 0h1m5 0h1m3 0h1m4 0h3m3 0h2m4 0h1m4 0h2m12 0h1m2 0h1m1 0h1m1 0h1m14 0h2m6 0h1m17 0h1m3 0h1m2 0h1m24 0h2m9 0h1m2 0h1m3 0h1m6 0h1m5 0h1m2 0h2m1 0h1m4 0h1m1 0h1m2 0h2m1 0h1m7 0h1m10 0h1m5 0h1m5 0h1m16 0h1m11 0h1m7 0h1m2 0h1m4 0h1m3 0h1m1 0h1m5 0h1m7 0h1m3 0h1m9 0h1m2 0h2m1 0h1m27 0h1m4 0h1m3 0h1m3 0h1m8 0h1m12 0h1m14 0h1m2 0h1m1 0h1m7 0h2m1 0h1m3 0h1m5 0h2m-612 1h1m5 0h1m1 0h1m7 0h1m2 0h3m4 0h1m9 0h1m2 0h1m3 0h1m24 0h1m6 0h1m6 0h1m1 0h1m3 0h2m6 0h1m2 0h1m4 0h2m1 0h1m2 0h1m2 0h1m2 0h1m5 0h1m2 0h1m5 0h3m7 0h1m2 0h1m10 0h4m1 0h1m9 0h2m1 0h1m3 0h1m22 0h1m2 0h1m5 0h1m5 0h1m6 0h1m2 0h1m2 0h1m8 0h1m5 0h1m1 0h1m8 0h1m6 0h1m9 0h1m1 0h3m2 0h2m1 0h1m2 0h1m3 0h2m1 0h4m4 0h1m1 0h3m3 0h1m1 0h1m3 0h1m2 0h1m1 0h1m1 0h1m2 0h2m5 0h1m2 0h1m10 0h1m15 0h1m2 0h2m1 0h1m5 0h1m12 0h1m6 0h1m4 0h1m1 0h3m2 0h1m2 0h2m3 0h1m1 0h1m4 0h1m13 0h2m8 0h1m1 0h1m1 0h1m7 0h1m4 0h1m2 0h1m1 0h1m7 0h1m8 0h2m3 0h1m3 0h2m3 0h1m2 0h1m7 0h2m10 0h1m3 0h1m1 0h1m4 0h1m1 0h2m6 0h1m3 0h2m7 0h1m3 0h1m8 0h1m5 0h1m1 0h1m2 0h1m7 0h1m2 0h1m13 0h1m-570 1h1m308 0h1m-315 1h1m366 0h1m-212 1h1m182 0h1m146 0h1m55 0h1m-127 1h1m162 1h1m-608 1h4m2 0h2m2 0h2m3 0h1m1 0h1m2 0h4m2 0h2m3 0h1m2 0h1m1 0h2m1 0h1m1 0h3m2 0h3m2 0h3m1 0h5m1 0h1m1 0h1m3 0h2m3 0h2m1 0h1m1 0h2m4 0h1m2 0h1m2 0h1m3 0h1m6 0h1m1 0h2m9 0h1m6 0h1m5 0h2m1 0h2m1 0h1m1 0h1m3 0h2m5 0h1m1 0h1m2 0h1m2 0h1m1 0h2m4 0h1m1 0h1m2 0h3m5 0h1m2 0h1m1 0h1m1 0h1m1 0h1m2 0h1m1 0h4m1 0h1m2 0h2m2 0h1m11 0h1m1 0h1m2 0h1m4 0h1m7 0h1m4 0h2m3 0h1m2 0h1m2 0h1m2 0h3m3 0h1m4 0h1m5 0h1m2 0h1m1 0h1m3 0h2m2 0h5m2 0h2m1 0h1m1 0h2m1 0h1m1 0h1m1 0h2m1 0h3m3 0h4m8 0h1m8 0h1m3 0h2m1 0h1m1 0h5m3 0h1m1 0h5m2 0h1m7 0h1m1 0h4m2 0h2m3 0h5m2 0h4m3 0h2m3 0h3m1 0h6m1 0h1m1 0h1m3 0h2m1 0h1m1 0h1m3 0h3m2 0h3m2 0h1m3 0h2m1 0h1m5 0h3m4 0h1m3 0h1m2 0h2m2 0h1m1 0h1m1 0h1m2 0h1m1 0h2m6 0h1m1 0h1m4 0h2m2 0h2m3 0h1m1 0h2m3 0h1m2 0h4m1 0h2m1 0h2m1 0h1m1 0h1m2 0h1m1 0h3m1 0h1m1 0h1m1 0h2m1 0h3m2 0h2m5 0h3m1 0h1m1 0h3m2 0h2m3 0h1m3 0h5m2 0h1m2 0h2m10 0h3m2 0h3m2 0h2m1 0h3m8 0h3m-395 1h1m216 0h1m170 0h1m-156 1h1m-329 1h1m-55 1h1m113 0h1m76 0h1m-261 1h4m4 0h4m2 0h1m6 0h1m2 0h1m1 0h1m2 0h3m2 0h1m1 0h2m1 0h4m6 0h1m2 0h1m3 0h1m3 0h4m1 0h1m5 0h1m2 0h1m3 0h1m1 0h1m1 0h1m1 0h1m1 0h1m6 0h2m2 0h1m3 0h4m1 0h1m1 0h1m8 0h1m4 0h1m1 0h2m10 0h3m5 0h1m4 0h1m6 0h1m7 0h2m1 0h2m3 0h1m3 0h1m3 0h3m2 0h3m4 0h1m1 0h1m4 0h3m2 0h2m1 0h2m2 0h1m1 0h1m3 0h1m8 0h1m2 0h1m6 0h1m2 0h2m4 0h1m2 0h1m1 0h1m3 0h1m2 0h1m3 0h1m2 0h1m4 0h2m4 0h1m1 0h2m2 0h1m2 0h1m2 0h2m3 0h1m1 0h1m1 0h5m1 0h2m2 0h1m1 0h1m1 0h2m1 0h2m3 0h1m1 0h1m7 0h5m3 0h3m1 0h1m1 0h1m1 0h1m2 0h1m1 0h1m3 0h2m1 0h2m1 0h1m1 0h3m2 0h1m3 0h6m4 0h3m2 0h3m1 0h1m2 0h2m1 0h1m12 0h4m2 0h1m2 0h3m6 0h1m1 0h2m1 0h3m2 0h2m1 0h2m1 0h1m1 0h3m1 0h1m1 0h1m1 0h2m8 0h5m2 0h1m4 0h1m1 0h3m1 0h2m2 0h1m1 0h1m3 0h1m4 0h4m1 0h1m1 0h1m1 0h1m3 0h1m5 0h2m5 0h2m1 0h3m2 0h3m1 0h1m2 0h3m1 0h3m3 0h1m1 0h1m1 0h1m2 0h1m1 0h1m2 0h1m1 0h2m1 0h1m3 0h2m4 0h2m3 0h1m2 0h2m2 0h1m1 0h1m4 0h2m4 0h2m3 0h1m3 0h3m2 0h1m-170 2h1m11 0h1m-218 1h1m-240 3h2m1 0h1m2 0h2m4 0h1m2 0h2m3 0h3m3 0h3m1 0h1m1 0h1m1 0h3m1 0h1m1 0h1m1 0h2m2 0h2m1 0h2m1 0h3m2 0h1m1 0h1m2 0h1m2 0h1m1 0h3m7 0h3m1 0h2m1 0h2m2 0h2m1 0h3m1 0h4m5 0h2m1 0h3m3 0h1m1 0h1m1 0h4m1 0h2m1 0h2m3 0h3m1 0h1m1 0h2m1 0h1m2 0h1m1 0h1m1 0h1m2 0h1m1 0h1m2 0h1m1 0h2m1 0h2m3 0h4m2 0h2m1 0h4m2 0h1m1 0h3m5 0h3m1 0h2m1 0h1m2 0h2m2 0h2m3 0h1m1 0h1m1 0h1m1 0h1m2 0h1m1 0h2m1 0h1m1 0h4m4 0h1m1 0h4m3 0h1m1 0h1m4 0h1m3 0h1m1 0h2m2 0h1m2 0h5m3 0h1m1 0h2m1 0h1m1 0h1m1 0h1m4 0h3m2 0h1m2 0h3m1 0h2m1 0h1m2 0h4m2 0h2m2 0h10m2 0h1m5 0h3m1 0h1m1 0h1m1 0h3m1 0h1m10 0h1m1 0h1m4 0h2m1 0h1m1 0h3m4 0h1m2 0h2m2 0h2m1 0h2m2 0h3m7 0h2m2 0h4m1 0h2m1 0h9m3 0h1m1 0h6m1 0h1m6 0h1m1 0h5m1 0h1m1 0h1m1 0h1m3 0h1m2 0h2m2 0h3m1 0h7m2 0h1m4 0h2m2 0h1m1 0h1m1 0h2m4 0h3m1 0h3m2 0h2m1 0h1m1 0h1m1 0h4m1 0h3m1 0h2m1 0h3m1 0h1m1 0h2m2 0h1m2 0h2m3 0h1m1 0h1m1 0h3m2 0h3m2 0h1m3 0h1m2 0h1m1 0h3m1 0h1m1 0h2m1 0h2m1 0h3m1 0h3m4 0h2m2 0h1m4 0h1m2 0h1m1 0h1m2 0h1m1 0h1m2 0h1m1 0h1m2 0h1m1 0h3m-543 1h1m402 0h1m-236 2h1m-42 1h1m143 0h1m212 1h1m-214 1h1m-343 1h1m3 0h1m1 0h3m2 0h1m2 0h2m1 0h1m8 0h4m6 0h1m3 0h2m2 0h1m1 0h1m3 0h1m2 0h1m3 0h2m2 0h2m3 0h1m8 0h1m1 0h4m1 0h1m1 0h2m1 0h1m4 0h1m2 0h1m1 0h2m4 0h3m3 0h2m1 0h9m1 0h3m1 0h5m1 0h1m1 0h1m1 0h2m3 0h2m1 0h1m1 0h1m2 0h2m5 0h2m1 0h1m3 0h2m1 0h2m1 0h1m1 0h1m3 0h1m7 0h1m2 0h1m1 0h2m3 0h1m2 0h2m3 0h1m2 0h2m2 0h3m3 0h1m2 0h2m1 0h1m3 0h2m1 0h1m2 0h1m2 0h1m2 0h1m3 0h1m2 0h1m5 0h1m2 0h1m1 0h1m2 0h3m2 0h2m2 0h2m3 0h1m1 0h1m1 0h1m3 0h4m1 0h5m1 0h8m1 0h1m3 0h1m1 0h3m3 0h3m1 0h1m1 0h1m5 0h1m2 0h1m2 0h4m3 0h2m1 0h1m4 0h1m1 0h4m4 0h1m3 0h3m1 0h5m1 0h1m3 0h1m1 0h2m2 0h1m3 0h3m2 0h1m1 0h1m2 0h1m2 0h1m6 0h1m3 0h1m3 0h1m3 0h3m2 0h1m3 0h1m1 0h2m3 0h1m1 0h3m1 0h1m1 0h2m2 0h1m1 0h1m2 0h1m2 0h2m2 0h1m4 0h11m2 0h1m2 0h2m1 0h1m1 0h2m1 0h1m5 0h1m3 0h2m3 0h2m1 0h2m2 0h1m4 0h2m4 0h3m4 0h1m1 0h5m2 0h1m1 0h5m5 0h2m4 0h5m2 0h1m1 0h4m1 0h2m1 0h2m3 0h1m3 0h1m1 0h1m9 0h1m8 0h2m2 0h2m1 0h5m2 0h3m-569 1h1m24 2h1m-26 1h1m116 3h1m98 0h1m2 0h1m-195 1h1m127 1h1m62 0h1m2 0h1m102 1h1m-227 1h1m6 0h1m1 0h1m113 0h1m315 0h1m-491 1h1m107 0h1m22 2h1m358 0h1m-548 1h1m37 0h1m270 1h1m-145 2h1m123 0h1m2 0h1m85 0h1m1 0h2m163 0h1m-546 1h1m36 0h2m270 0h1m87 0h1m152 0h1m-259 1h1m-293 1h1m37 0h1m95 0h1m60 0h1m58 0h1m54 0h1m24 0h1m64 0h1m3 0h2m86 0h1m-299 2h1m5 0h1m129 0h2m110 0h1m88 0h1m14 0h1m-508 1h1m448 0h1m-295 1h1m174 0h1m1 0h1m10 0h1m48 0h1m-283 1h1m175 0h1m-347 1h4m4 0h3m5 0h2m41 0h2m18 0h1m41 0h1m6 0h1m35 0h4m6 0h5m66 0h1m66 0h2m1 0h1m4 0h3m4 0h3m35 0h1m79 0h1m71 0h4m9 0h3m20 0h4m-567 1h1m2 0h1m20 0h1m35 0h1m44 0h2m23 0h1m4 0h1m1 0h1m27 0h1m12 0h1m11 0h1m9 0h1m11 0h1m10 0h1m20 0h1m9 0h1m17 0h1m44 0h1m1 0h1m22 0h1m8 0h1m21 0h1m19 0h1m4 0h2m6 0h1m5 0h1m33 0h1m4 0h1m16 0h1m14 0h1m17 0h1m14 0h1m2 0h1m17 0h1m14 0h1m18 0h1m8 0h1m5 0h1m7 0h1m9 0h1m3 0h1m-577 1h1m227 0h1m57 0h1m194 0h1m-507 1h1m64 0h1m190 0h1m340 0h1m-594 1h2m6 0h2m5 0h2m147 0h2m9 0h2m135 0h2m6 0h2m5 0h2m188 0h2m10 0h2m22 0h2m-318 1h1m181 0h1m-397 1h2m50 0h1m99 0h2m37 0h1m37 0h1m59 0h2m13 0h2m121 0h1m1 0h1m3 0h1m48 0h2m10 0h2m10 0h2m10 0h2m10 0h2m10 0h2m-180 1h1m31 0h1m129 0h1m-438 1h1m389 0h1m-237 1h1m177 0h1m-422 1h2m150 0h2m135 0h2m2 0h1m10 0h2m26 0h1m106 0h1m39 0h1m2 0h2m10 0h2m10 0h2m10 0h2m10 0h2m10 0h2m-394 3h1m156 0h1m92 0h1m16 0h1m-86 1h1m-183 1h1m53 0h1m102 0h1m88 0h1m32 0h1m-424 2h1m6 0h1m182 0h1m119 0h1m5 0h1m1 0h1m218 0h1m-507 1h1m510 0h1m-572 1h2m6 0h2m5 0h2m6 0h2m139 0h2m9 0h2m135 0h2m13 0h2m106 0h1m69 0h2m10 0h2m10 0h2m22 0h2m10 0h2m-428 1h1m5 0h1m-74 1h1m125 0h1m50 0h1m80 0h1m131 0h1m-290 1h1m-174 1h2m6 0h2m5 0h2m6 0h2m53 0h1m85 0h2m9 0h2m99 0h1m35 0h2m13 0h2m90 0h1m13 0h1m71 0h2m10 0h2m10 0h2m10 0h2m10 0h2m10 0h2m-508 1h1m2 0h1m3 0h1m106 0h1m241 2h1m46 0h1m-463 1h2m6 0h2m5 0h2m6 0h2m139 0h2m9 0h2m135 0h2m13 0h2m188 0h2m10 0h2m10 0h2m10 0h2m10 0h2"/><path stroke="#000eff" d="M143 332h1m29 0h1m15 0h1m42 0h1m31 0h1m41 0h1m239 0h1m10 0h1m14 0h1m83 0h1m-493 1h1m38 0h1m141 0h1m60 0h1m-325 1h1m3 0h1m28 0h1m32 0h1m4 0h1m8 0h1m10 0h1m12 0h1m2 0h1m9 0h1m1 0h1m4 0h1m55 0h1m1 0h1m16 0h1m6 0h1m4 0h1m3 0h1m9 0h1m1 0h1m1 0h1m24 0h1m65 0h1m4 0h2m6 0h1m13 0h1m4 0h1m49 0h1m26 0h1m6 0h1m7 0h1m24 0h1m5 0h1m1 0h1m1 0h1m2 0h1m6 0h1m11 0h1m1 0h1m6 0h1m1 0h1m4 0h1m10 0h1m2 0h1m10 0h1m4 0h1m6 0h1m4 0h1m26 0h1m4 0h1m10 0h1m-255 1h1m225 0h1m-551 1h1m57 0h1m13 0h1m62 0h1m10 0h1m11 0h1m139 1h1m177 0h1m-342 1h1m363 0h1m-428 1h1m22 0h1m90 0h1m262 0h1m31 1h1m17 0h1m11 0h1m59 0h1m-558 1h1m82 1h1m412 0h1m52 0h1m-467 2h1m48 0h1m-147 1h1m60 0h1m132 2h1m-37 1h1m6 1h1m273 0h1m-408 1h1m28 0h1m96 0h1m351 0h1m52 0h1m-564 1h1m465 1h1m96 0h1m-467 1h1m200 0h1m-105 1h1m368 0h1m-77 3h1m-250 1h1m76 1h1m-329 1h1m421 1h1m3 0h1m-220 1h1m344 0h1m-233 1h1m-150 1h1m-24 2h1m22 0h1m-80 1h1m214 1h1m20 0h1m-329 1h1m499 3h1m-75 4h1m-317 1h1m60 0h1m328 0h1m-187 1h1m-108 1h1m-132 1h1m499 0h1m16 1h1m-450 1h1m431 1h1m-88 1h1m-453 2h1m384 0h1m-423 1h1m49 0h1m59 0h1m386 0h1m-505 1h1m3 0h1m5 0h1m3 0h1m18 0h1m32 0h1m4 0h1m10 0h1m1 0h1m17 0h2m23 0h1m10 0h1m3 0h1m7 0h1m8 0h1m34 0h1m18 0h1m11 0h1m1 0h1m23 0h1m10 0h1m10 0h1m62 0h1m10 0h1m34 0h2m21 0h1m9 0h1m19 0h1m42 0h1m5 0h1m3 0h1m35 0h1m15 0h1m4 0h1m10 0h1m13 0h1m2 0h1m2 0h1m1 0h1m24 0h1m-610 1h2m5 0h2m15 0h3m11 0h1m12 0h1m4 0h1m8 0h1m2 0h1m1 0h1m2 0h1m2 0h1m1 0h2m2 0h1m2 0h3m3 0h1m2 0h4m3 0h1m1 0h1m3 0h1m5 0h7m2 0h2m1 0h2m1 0h1m2 0h2m2 0h1m2 0h1m8 0h1m4 0h1m6 0h1m2 0h2m6 0h1m2 0h1m2 0h1m2 0h2m2 0h1m7 0h1m6 0h2m2 0h1m10 0h2m1 0h2m6 0h1m4 0h1m4 0h2m2 0h1m6 0h2m2 0h4m1 0h1m9 0h1m6 0h1m1 0h1m8 0h1m3 0h1m1 0h1m1 0h3m3 0h1m2 0h1m2 0h2m2 0h1m1 0h1m1 0h1m1 0h1m5 0h2m3 0h2m4 0h1m4 0h1m4 0h3m6 0h1m2 0h2m5 0h1m4 0h2m9 0h2m1 0h2m1 0h1m1 0h6m5 0h1m6 0h1m9 0h1m4 0h1m3 0h1m5 0h1m3 0h1m1 0h1m2 0h2m2 0h1m7 0h1m5 0h1m1 0h2m1 0h2m8 0h2m3 0h2m1 0h1m3 0h2m1 0h1m3 0h1m4 0h1m1 0h1m14 0h1m5 0h2m1 0h1m3 0h2m2 0h1m6 0h2m1 0h1m1 0h1m6 0h1m5 0h1m1 0h1m5 0h1m2 0h1m1 0h1m2 0h3m6 0h1m4 0h2m6 0h1m6 0h3m2 0h1m3 0h2m2 0h1m1 0h1m1 0h1m-286 1h1m-315 4h1m6 0h1m5 0h1m11 0h1m31 0h1m3 0h1m3 0h1m14 0h2m3 0h1m4 0h1m2 0h2m35 0h1m10 0h1m2 0h1m1 0h1m9 0h1m6 0h1m2 0h1m8 0h1m13 0h1m5 0h1m15 0h1m2 0h1m24 0h1m20 0h1m3 0h1m1 0h2m7 0h1m2 0h1m6 0h1m2 0h3m2 0h1m10 0h3m6 0h1m2 0h1m2 0h1m1 0h1m7 0h1m16 0h1m1 0h1m9 0h1m12 0h1m8 0h1m1 0h1m4 0h1m2 0h1m2 0h1m11 0h1m7 0h1m2 0h1m2 0h1m11 0h1m9 0h1m3 0h2m6 0h1m8 0h1m5 0h1m8 0h1m4 0h2m1 0h1m8 0h3m2 0h1m2 0h2m5 0h4m2 0h1m2 0h1m7 0h1m3 0h2m14 0h1m4 0h2m10 0h1m21 0h1m1 0h1m4 0h1m-549 1h1m7 0h1m6 0h1m11 0h1m5 0h3m32 0h2m11 0h1m8 0h2m13 0h1m1 0h1m46 0h2m44 0h1m8 0h1m8 0h1m5 0h1m3 0h1m21 0h1m31 0h1m1 0h1m8 0h2m21 0h1m6 0h2m4 0h1m21 0h1m14 0h1m27 0h1m8 0h1m12 0h1m14 0h2m45 0h1m47 0h1m4 0h1m22 0h1m-205 1h1m-358 4h1m-1 2h1m276 0h1m68 0h1m-70 2h1m226 0h1m-492 1h1m269 0h1m62 0h1m-369 1h1m6 0h1m2 0h1m6 0h2m20 0h1m13 0h1m6 0h2m1 0h2m3 0h1m15 0h2m4 0h1m9 0h1m6 0h1m15 0h1m2 0h1m3 0h2m10 0h1m19 0h1m25 0h1m14 0h1m23 0h2m1 0h1m1 0h1m1 0h2m4 0h1m24 0h1m7 0h1m2 0h1m10 0h1m1 0h1m3 0h1m5 0h1m15 0h1m21 0h1m22 0h1m9 0h1m2 0h1m3 0h1m17 0h2m9 0h1m20 0h1m2 0h1m2 0h1m8 0h1m11 0h2m5 0h1m4 0h1m22 0h3m8 0h1m6 0h1m3 0h1m3 0h1m15 0h1m4 0h1m21 0h1m3 0h1m4 0h1m1 0h1m2 0h2m-25 3h1m-318 2h1m105 6h1m190 0h1m-508 4h1m133 1h1m-135 1h1m133 6h1m40 0h1m331 1h1m19 1h1m-525 1h1m23 0h2m7 0h2m30 0h1m30 0h1m14 0h1m29 0h1m13 0h2m16 0h2m2 0h1m3 0h1m49 0h1m1 0h1m6 0h1m23 0h1m18 0h1m60 0h1m1 0h1m18 0h1m22 0h2m2 0h1m6 0h1m4 0h1m13 0h1m5 0h1m12 0h1m17 0h1m36 0h2m32 0h1m-581 1h4m7 0h1m1 0h1m1 0h1m1 0h1m1 0h5m1 0h4m1 0h2m2 0h1m2 0h3m1 0h1m1 0h4m2 0h2m6 0h2m2 0h5m3 0h5m3 0h1m3 0h2m9 0h2m3 0h5m2 0h2m1 0h1m1 0h1m6 0h3m1 0h1m1 0h4m2 0h3m6 0h1m4 0h2m1 0h5m1 0h1m1 0h4m3 0h2m2 0h1m2 0h3m1 0h1m2 0h4m3 0h1m4 0h2m2 0h2m2 0h1m1 0h1m1 0h2m1 0h4m1 0h1m4 0h1m1 0h8m8 0h1m3 0h2m2 0h1m4 0h3m1 0h2m2 0h2m2 0h4m1 0h6m1 0h1m2 0h1m1 0h5m2 0h4m1 0h2m1 0h1m3 0h2m1 0h1m1 0h6m1 0h1m1 0h1m1 0h1m2 0h4m1 0h1m1 0h2m3 0h1m1 0h1m1 0h2m1 0h2m1 0h3m2 0h1m1 0h3m1 0h5m1 0h2m4 0h1m2 0h1m2 0h1m1 0h4m3 0h3m3 0h1m1 0h1m1 0h1m1 0h1m1 0h2m3 0h1m1 0h1m1 0h2m2 0h1m2 0h1m1 0h1m2 0h1m1 0h1m1 0h1m1 0h1m5 0h1m6 0h4m1 0h2m2 0h2m1 0h1m2 0h1m6 0h1m4 0h2m2 0h4m1 0h3m1 0h2m2 0h4m2 0h1m1 0h1m1 0h1m1 0h1m2 0h1m3 0h1m1 0h1m3 0h1m1 0h1m3 0h5m2 0h4m3 0h4m1 0h2m1 0h1m3 0h7m3 0h2m2 0h1m1 0h1m2 0h2m4 0h6m1 0h2m5 0h1m2 0h4m2 0h6m1 0h1m1 0h4m1 0h2m1 0h1m2 0h1m2 0h2m2 0h2m3 0h1m1 0h2m-608 3h1m1 0h3m1 0h2m1 0h3m1 0h1m3 0h1m1 0h1m1 0h3m1 0h1m2 0h9m1 0h4m2 0h1m1 0h2m1 0h1m2 0h4m1 0h1m3 0h3m1 0h1m1 0h5m2 0h1m3 0h8m1 0h2m1 0h3m1 0h2m1 0h1m2 0h6m1 0h4m1 0h1m2 0h1m2 0h3m1 0h3m1 0h1m1 0h6m2 0h1m1 0h2m1 0h1m1 0h2m3 0h3m1 0h1m1 0h2m1 0h2m1 0h1m1 0h3m2 0h2m2 0h1m1 0h4m1 0h1m1 0h1m1 0h1m1 0h1m1 0h1m2 0h1m2 0h14m2 0h2m1 0h1m2 0h4m1 0h2m3 0h2m1 0h4m2 0h1m1 0h3m5 0h10m1 0h4m1 0h2m1 0h2m1 0h1m1 0h1m1 0h1m2 0h5m5 0h5m1 0h2m1 0h4m1 0h6m2 0h3m2 0h1m1 0h2m1 0h2m1 0h2m1 0h4m1 0h1m3 0h1m1 0h5m2 0h1m2 0h1m1 0h2m4 0h1m2 0h1m2 0h1m2 0h1m2 0h1m1 0h8m1 0h2m5 0h1m1 0h1m1 0h2m1 0h10m1 0h5m1 0h1m1 0h4m2 0h2m1 0h1m1 0h1m2 0h2m1 0h1m1 0h2m1 0h4m4 0h1m1 0h3m1 0h1m1 0h2m1 0h2m1 0h2m1 0h1m1 0h8m3 0h1m4 0h5m2 0h4m3 0h1m2 0h1m1 0h3m1 0h10m3 0h2m1 0h5m2 0h3m1 0h1m2 0h1m2 0h1m2 0h2m1 0h3m3 0h1m2 0h4m1 0h2m2 0h2m3 0h3m1 0h2m4 0h2m1 0h3m1 0h3m1 0h2m1 0h2m3 0h4m1 0h1m1 0h1m1 0h4m1 0h4m4 0h8m-614 5h5m2 0h4m2 0h5m1 0h5m1 0h1m1 0h1m1 0h1m2 0h3m1 0h2m1 0h4m1 0h1m3 0h1m2 0h3m1 0h1m2 0h2m3 0h2m1 0h1m1 0h2m1 0h1m1 0h1m3 0h1m1 0h5m1 0h2m1 0h4m1 0h2m1 0h3m1 0h4m2 0h5m1 0h5m1 0h1m1 0h1m1 0h1m1 0h1m3 0h3m1 0h1m3 0h4m2 0h10m1 0h1m1 0h1m2 0h5m1 0h2m2 0h2m1 0h1m1 0h4m4 0h1m2 0h6m1 0h5m1 0h3m1 0h1m1 0h1m1 0h2m2 0h2m1 0h7m1 0h1m3 0h6m1 0h4m2 0h1m1 0h2m1 0h3m4 0h11m1 0h2m1 0h1m1 0h2m2 0h2m1 0h1m2 0h1m2 0h6m1 0h3m1 0h2m1 0h5m3 0h1m1 0h2m3 0h1m1 0h3m1 0h2m1 0h2m1 0h3m2 0h3m1 0h1m1 0h2m3 0h3m1 0h3m3 0h2m2 0h5m3 0h3m1 0h7m1 0h3m1 0h6m4 0h10m3 0h2m1 0h2m3 0h3m1 0h2m2 0h4m1 0h6m1 0h3m1 0h2m1 0h1m2 0h5m1 0h3m2 0h2m2 0h5m3 0h1m1 0h5m1 0h2m1 0h3m1 0h10m1 0h6m2 0h2m1 0h2m1 0h1m1 0h4m2 0h2m2 0h2m1 0h1m1 0h2m1 0h3m1 0h7m1 0h2m1 0h3m3 0h1m1 0h2m2 0h1m1 0h1m1 0h9m1 0h5m3 0h1m1 0h3m1 0h1m1 0h2m1 0h1m1 0h2m1 0h1m1 0h5m2 0h1m1 0h3m1 0h5m1 0h2m2 0h5m-613 6h1m1 0h2m2 0h3m1 0h2m2 0h4m1 0h1m3 0h1m6 0h2m1 0h3m1 0h3m1 0h8m1 0h6m1 0h3m2 0h12m3 0h14m1 0h2m1 0h5m2 0h4m2 0h3m1 0h2m1 0h2m1 0h3m1 0h3m1 0h5m1 0h3m2 0h1m1 0h1m2 0h17m1 0h4m1 0h1m1 0h2m1 0h2m1 0h3m2 0h1m2 0h6m2 0h2m1 0h1m1 0h7m1 0h1m1 0h2m2 0h3m1 0h1m1 0h5m1 0h2m3 0h1m2 0h9m2 0h6m3 0h7m2 0h3m1 0h1m2 0h1m1 0h2m1 0h4m1 0h3m1 0h2m1 0h10m2 0h5m1 0h1m1 0h16m2 0h1m1 0h3m2 0h6m3 0h4m5 0h3m2 0h1m1 0h1m2 0h2m1 0h1m1 0h4m1 0h7m1 0h2m1 0h5m1 0h6m1 0h6m2 0h3m2 0h6m1 0h5m1 0h3m1 0h8m1 0h4m1 0h3m1 0h9m4 0h3m1 0h12m1 0h3m1 0h4m1 0h5m1 0h3m2 0h3m2 0h3m1 0h3m1 0h3m1 0h14m1 0h2m2 0h4m1 0h2m2 0h1m2 0h2m1 0h1m1 0h1m3 0h4m3 0h3m1 0h1m1 0h2m1 0h3m2 0h1m2 0h1m3 0h1m1 0h8m1 0h5m1 0h5m1 0h1m1 0h5m1 0h1m1 0h1m2 0h2m1 0h2m1 0h1m-56 6h1m-535 1h1m533 1h1m-535 1h1m-23 1h1m6 0h1m20 0h1m4 0h1m4 0h1m2 0h2m11 0h1m6 0h2m7 0h1m2 0h1m2 0h1m5 0h1m10 0h1m3 0h1m1 0h1m1 0h1m2 0h1m6 0h1m2 0h1m5 0h2m1 0h1m2 0h1m5 0h1m4 0h1m5 0h2m14 0h1m1 0h1m3 0h1m2 0h1m1 0h1m2 0h1m5 0h1m2 0h1m1 0h3m4 0h1m9 0h1m11 0h1m3 0h1m2 0h1m3 0h1m29 0h1m9 0h1m7 0h1m1 0h1m3 0h2m6 0h1m10 0h1m3 0h1m11 0h1m7 0h1m6 0h1m5 0h1m1 0h1m2 0h1m4 0h1m10 0h1m4 0h1m3 0h1m1 0h1m5 0h3m2 0h1m6 0h2m1 0h1m2 0h1m3 0h1m5 0h1m4 0h1m19 0h1m5 0h4m5 0h1m8 0h1m4 0h1m1 0h1m9 0h1m5 0h1m3 0h1m1 0h1m7 0h1m7 0h1m10 0h1m10 0h1m3 0h1m9 0h1m12 0h1m5 0h1m3 0h1m6 0h1m9 0h1m7 0h1m11 0h2m7 0h2m-45 4h1m-17 9h1m-543 1h2m2 0h1m1 0h6m2 0h2m3 0h1m2 0h2m1 0h2m2 0h1m1 0h2m1 0h1m2 0h3m1 0h2m1 0h6m1 0h5m1 0h2m4 0h5m1 0h4m1 0h1m4 0h7m1 0h1m1 0h2m1 0h2m2 0h1m1 0h4m1 0h4m1 0h1m3 0h2m1 0h2m1 0h2m1 0h3m2 0h5m1 0h2m2 0h4m1 0h2m1 0h1m2 0h4m1 0h1m1 0h3m1 0h8m4 0h6m2 0h4m1 0h3m3 0h2m2 0h6m1 0h1m1 0h5m2 0h4m1 0h2m2 0h4m1 0h1m1 0h7m2 0h4m1 0h3m1 0h5m1 0h3m1 0h3m1 0h3m2 0h1m2 0h3m2 0h1m1 0h3m1 0h1m1 0h3m3 0h2m2 0h5m1 0h3m1 0h2m3 0h1m1 0h2m1 0h2m2 0h1m1 0h1m1 0h1m1 0h3m1 0h2m3 0h2m1 0h3m1 0h1m2 0h2m3 0h2m1 0h1m1 0h3m1 0h4m2 0h1m1 0h1m2 0h7m1 0h7m1 0h2m1 0h1m1 0h10m3 0h1m1 0h3m1 0h2m1 0h2m2 0h4m1 0h2m2 0h2m1 0h7m1 0h1m1 0h2m1 0h1m3 0h4m1 0h2m1 0h1m3 0h4m2 0h4m1 0h1m2 0h8m1 0h7m1 0h1m2 0h2m1 0h1m3 0h3m1 0h7m1 0h5m1 0h2m1 0h1m2 0h1m1 0h5m1 0h4m1 0h1m4 0h1m1 0h5m3 0h4m2 0h2m1 0h1m2 0h3m1 0h3m1 0h2m2 0h5m2 0h2m7 0h2m2 0h4m3 0h9m1 0h3m1 0h1m3 0h2m-72 1h1m-519 1h1"/><path stroke="#0047ff" d="M203 332h1m306 0h1m126 0h1m-231 1h1m-325 1h1m3 0h1m2 0h1m15 0h1m4 0h1m1 0h1m3 0h1m3 0h1m6 0h1m2 0h1m3 0h1m7 0h1m10 0h1m1 0h1m4 0h1m8 0h1m6 0h1m5 0h1m33 0h1m8 0h2m13 0h1m4 0h1m5 0h1m14 0h1m3 0h1m4 0h1m3 0h1m4 0h1m6 0h1m6 0h2m9 0h1m1 0h1m3 0h1m4 0h1m7 0h1m15 0h1m2 0h1m10 0h1m11 0h2m3 0h1m2 0h1m7 0h1m5 0h1m1 0h1m10 0h1m2 0h1m2 0h2m14 0h1m1 0h1m1 0h1m8 0h1m10 0h1m3 0h1m6 0h1m4 0h2m1 0h1m1 0h1m1 0h1m2 0h1m3 0h2m1 0h1m2 0h1m3 0h1m4 0h1m2 0h1m9 0h1m9 0h1m1 0h1m13 0h1m3 0h2m7 0h2m11 0h1m10 0h1m1 0h1m2 0h1m9 0h1m7 0h1m5 0h1m6 0h1m2 0h1m3 0h1m2 0h1m10 0h1m1 0h1m2 0h1m1 0h1m13 0h1m4 0h1m3 0h1m3 0h1m2 0h1m12 0h1m2 0h1m3 0h1m1 0h1m-180 2h1m-381 4h1m54 2h1m-56 1h1m72 0h1m203 0h1m-1 2h1m229 0h1m-119 4h1m-417 3h1m303 11h1m-305 2h1m303 0h1m229 1h1m-535 2h1m-1 6h1m533 2h1m-1 2h1m-535 3h1m-1 5h1m533 5h1m-559 41h1m1 0h3m1 0h2m1 0h4m2 0h3m1 0h3m1 0h2m1 0h3m2 0h1m1 0h1m1 0h1m1 0h5m3 0h2m1 0h5m2 0h2m1 0h1m2 0h6m1 0h7m2 0h1m3 0h5m3 0h1m2 0h1m2 0h1m1 0h6m1 0h2m1 0h3m5 0h4m1 0h4m1 0h1m1 0h1m1 0h2m1 0h2m3 0h1m1 0h1m2 0h5m1 0h2m1 0h6m1 0h1m1 0h2m2 0h1m2 0h10m1 0h1m2 0h2m1 0h2m1 0h2m1 0h5m1 0h11m1 0h1m4 0h1m1 0h3m1 0h3m1 0h1m1 0h1m3 0h2m1 0h3m2 0h2m3 0h5m2 0h6m1 0h1m1 0h10m1 0h1m1 0h5m2 0h7m1 0h1m1 0h1m1 0h1m1 0h1m2 0h10m1 0h6m2 0h4m1 0h7m2 0h7m1 0h1m1 0h8m2 0h2m1 0h1m1 0h2m2 0h1m4 0h1m1 0h2m3 0h4m2 0h3m1 0h1m1 0h1m1 0h1m1 0h2m2 0h5m1 0h3m1 0h1m2 0h4m2 0h3m3 0h1m1 0h1m1 0h1m1 0h1m3 0h3m1 0h2m3 0h3m2 0h1m1 0h1m3 0h2m1 0h1m2 0h2m2 0h2m1 0h1m1 0h13m1 0h1m1 0h1m3 0h1m2 0h2m1 0h1m2 0h3m4 0h2m1 0h1m1 0h2m3 0h1m2 0h1m2 0h5m1 0h2m2 0h2m1 0h1m1 0h2m1 0h7m1 0h1m2 0h2m1 0h2m4 0h5m1 0h4m1 0h1m1 0h2m1 0h2m1 0h2m1 0h9m1 0h2m1 0h7m1 0h1m2 0h2m1 0h3m3 0h6m2 0h2m-606 4h1m5 0h1m1 0h1m10 0h1m15 0h1m4 0h1m1 0h1m8 0h1m12 0h1m2 0h1m1 0h1m8 0h1m2 0h1m3 0h1m2 0h1m9 0h1m10 0h1m3 0h1m5 0h1m23 0h1m9 0h1m4 0h1m12 0h1m1 0h1m6 0h1m1 0h1m15 0h1m24 0h1m2 0h1m6 0h1m11 0h1m4 0h1m12 0h1m8 0h1m6 0h1m14 0h2m6 0h1m15 0h1m10 0h1m1 0h1m2 0h1m2 0h1m7 0h1m3 0h1m19 0h1m18 0h1m5 0h1m1 0h1m8 0h1m7 0h1m1 0h1m2 0h1m5 0h1m3 0h1m8 0h1m17 0h1m3 0h1m13 0h1m1 0h1m19 0h1m4 0h1m5 0h1m7 0h1m1 0h2m10 0h1m11 0h1m3 0h3m6 0h1m1 0h1m11 0h1m16 0h1m4 0h1m-592 5h1m23 0h2m3 0h1m7 0h1m3 0h1m1 0h1m12 0h1m2 0h1m1 0h1m6 0h2m2 0h1m44 0h1m9 0h2m6 0h1m25 0h1m2 0h1m7 0h1m1 0h1m1 0h1m7 0h1m11 0h1m19 0h2m12 0h1m11 0h1m11 0h1m2 0h1m5 0h1m5 0h1m2 0h1m13 0h1m13 0h2m25 0h1m39 0h1m8 0h2m11 0h1m3 0h1m11 0h1m12 0h1m3 0h1m2 0h1m1 0h2m20 0h1m1 0h1m7 0h1m2 0h1m14 0h1m20 0h2m31 0h2m4 0h2m1 0h1m18 0h1m6 0h1m9 0h1m1 0h1m12 0h1m-598 16h1m2 0h2m1 0h2m3 0h9m1 0h8m2 0h4m1 0h4m1 0h2m4 0h1m1 0h7m1 0h3m1 0h1m6 0h3m2 0h2m2 0h1m1 0h4m2 0h1m1 0h5m1 0h2m1 0h3m3 0h1m1 0h2m1 0h1m1 0h1m2 0h1m1 0h2m2 0h3m3 0h1m1 0h2m1 0h1m6 0h2m3 0h4m3 0h3m1 0h1m1 0h1m1 0h2m1 0h2m3 0h1m3 0h1m2 0h1m1 0h2m1 0h5m1 0h2m1 0h1m3 0h4m1 0h9m1 0h1m1 0h1m1 0h7m1 0h1m4 0h1m1 0h3m1 0h8m1 0h4m1 0h4m1 0h1m1 0h2m1 0h1m1 0h1m1 0h1m1 0h2m1 0h3m2 0h1m1 0h1m1 0h1m1 0h1m3 0h1m2 0h2m3 0h3m1 0h1m1 0h6m1 0h2m2 0h2m2 0h1m1 0h8m2 0h3m1 0h3m1 0h2m1 0h3m1 0h5m1 0h1m1 0h2m2 0h3m1 0h8m3 0h3m2 0h3m1 0h1m1 0h1m1 0h3m3 0h2m2 0h3m1 0h1m2 0h1m1 0h2m1 0h3m1 0h5m1 0h3m2 0h5m1 0h1m1 0h1m2 0h5m1 0h2m1 0h3m1 0h1m5 0h4m2 0h4m1 0h2m1 0h1m1 0h2m3 0h5m1 0h3m1 0h5m1 0h3m1 0h1m2 0h6m1 0h7m1 0h6m3 0h1m2 0h4m1 0h1m1 0h2m1 0h1m1 0h1m1 0h9m1 0h6m1 0h3m1 0h1m1 0h3m3 0h3m1 0h5m2 0h9m2 0h2m1 0h2m2 0h2m1 0h6m1 0h1m2 0h3m2 0h2m3 0h2m1 0h7m-572 5h1m243 0h1m13 0h1m44 0h1m43 0h1m50 0h1m16 0h1m138 0h1m-580 9h1m25 0h1m6 0h1m11 0h1m5 0h1m6 0h1m2 0h1m12 0h1m15 0h1m1 0h1m21 0h1m19 0h1m1 0h1m12 0h2m1 0h1m12 0h1m3 0h1m12 0h1m1 0h1m6 0h1m4 0h1m2 0h2m6 0h1m17 0h1m13 0h1m3 0h1m10 0h1m3 0h1m5 0h1m15 0h1m2 0h2m5 0h1m9 0h1m3 0h1m22 0h1m5 0h1m7 0h1m10 0h1m24 0h1m13 0h1m21 0h1m2 0h1m2 0h1m35 0h1m9 0h2m2 0h1m15 0h1m5 0h1m2 0h1m22 0h1m5 0h1m1 0h1m4 0h2m24 0h1m2 0h1m15 0h2m15 0h1m1 0h1m-552 2h1m79 0h1m239 0h1"/><path stroke="#008eff" d="M85 332h1m2 0h1m8 0h1m3 0h1m44 0h1m8 0h1m7 0h1m30 0h1m19 0h1m5 0h2m15 0h1m2 0h1m3 0h1m8 0h1m3 0h1m15 0h1m43 0h1m162 0h1m20 0h1m78 0h1m19 0h1m2 0h1m23 0h1m57 0h1m-606 100h1m23 0h1m10 0h1m5 0h3m8 0h1m3 0h1m56 0h1m21 0h1m25 0h1m14 0h1m44 0h1m13 0h1m54 0h1m13 0h1m6 0h1m13 0h1m8 0h1m10 0h1m16 0h1m2 0h1m7 0h1m9 0h1m3 0h1m5 0h1m6 0h1m10 0h1m2 0h1m16 0h1m8 0h1m35 0h1m9 0h1m11 0h1m2 0h1m3 0h1m3 0h1m8 0h2m4 0h1m12 0h1m63 0h1m-555 25h1m34 0h1m2 0h1m5 0h1m7 0h1m16 0h1m12 0h2m33 0h2m87 0h1m15 0h1m15 0h1m8 0h1m18 0h1m55 0h1m35 0h1m46 0h1m3 0h1m55 0h1m1 0h1m60 0h1m26 0h1m-602 1h2m1 0h1m1 0h1m1 0h1m1 0h4m1 0h1m2 0h2m1 0h2m1 0h1m4 0h1m1 0h1m3 0h1m1 0h1m2 0h2m4 0h1m5 0h2m3 0h1m2 0h1m3 0h1m1 0h2m3 0h5m1 0h2m15 0h1m1 0h2m6 0h1m2 0h1m1 0h4m1 0h1m2 0h1m1 0h1m3 0h2m11 0h1m3 0h1m14 0h1m13 0h1m1 0h2m2 0h1m1 0h4m1 0h1m1 0h2m3 0h1m2 0h1m1 0h3m1 0h1m1 0h3m1 0h1m2 0h2m1 0h2m1 0h1m2 0h2m1 0h1m1 0h1m1 0h2m1 0h1m2 0h1m2 0h1m2 0h1m1 0h1m5 0h3m3 0h1m5 0h3m2 0h1m4 0h1m5 0h1m3 0h1m5 0h1m5 0h3m1 0h3m1 0h2m6 0h1m2 0h1m2 0h1m2 0h1m3 0h1m2 0h1m2 0h1m2 0h4m8 0h3m4 0h3m5 0h3m1 0h3m3 0h2m1 0h1m2 0h1m1 0h1m1 0h3m1 0h1m3 0h1m1 0h2m5 0h1m3 0h3m2 0h2m3 0h2m5 0h1m3 0h1m1 0h2m2 0h1m1 0h3m1 0h1m5 0h1m6 0h1m1 0h2m3 0h2m2 0h2m2 0h1m5 0h3m2 0h1m1 0h1m4 0h1m7 0h1m1 0h1m2 0h3m4 0h1m2 0h1m2 0h1m1 0h1m1 0h1m6 0h2m21 0h1m3 0h1m1 0h2m3 0h2m1 0h1m1 0h1m1 0h2m1 0h1m6 0h1m5 0h2m2 0h1m3 0h1m1 0h1m6 0h1m3 0h1m1 0h2m2 0h1m5 0h3m5 0h1m-602 4h1m152 0h1m133 0h1m32 0h1m24 0h1m37 0h1m15 0h1m8 0h1m10 0h1m35 0h1m22 0h1m24 0h1m35 0h1"/><path stroke="#00e1ff" d="M79 458h2m2 0h1m1 0h1m1 0h1m1 0h1m4 0h1m1 0h2m2 0h1m2 0h1m1 0h4m1 0h1m1 0h3m1 0h1m1 0h2m2 0h1m4 0h3m1 0h1m2 0h1m3 0h1m2 0h3m1 0h1m2 0h2m6 0h1m2 0h4m1 0h2m1 0h2m1 0h2m1 0h1m1 0h1m3 0h3m1 0h1m1 0h2m1 0h1m4 0h1m1 0h2m1 0h1m2 0h2m2 0h8m1 0h2m2 0h1m2 0h10m2 0h1m3 0h2m3 0h1m1 0h1m2 0h2m1 0h1m2 0h2m1 0h1m4 0h1m1 0h1m2 0h3m1 0h2m1 0h1m3 0h1m1 0h1m5 0h2m2 0h1m2 0h1m1 0h2m2 0h1m1 0h1m1 0h1m2 0h1m1 0h1m3 0h1m1 0h1m2 0h1m1 0h5m3 0h3m1 0h1m1 0h1m1 0h1m3 0h2m1 0h2m3 0h2m1 0h2m2 0h2m2 0h1m1 0h2m2 0h4m3 0h1m3 0h1m4 0h4m2 0h1m1 0h1m2 0h1m2 0h1m1 0h1m4 0h2m1 0h2m6 0h6m3 0h1m1 0h2m3 0h5m3 0h1m3 0h2m3 0h1m1 0h2m1 0h1m1 0h1m3 0h1m1 0h2m2 0h1m3 0h4m1 0h3m3 0h2m2 0h1m5 0h3m2 0h1m1 0h1m1 0h1m3 0h1m9 0h2m3 0h2m1 0h2m1 0h1m2 0h3m3 0h1m3 0h1m1 0h4m5 0h1m1 0h1m1 0h2m1 0h1m1 0h7m3 0h2m3 0h1m2 0h1m1 0h1m2 0h2m1 0h1m1 0h1m2 0h2m1 0h2m2 0h1m2 0h3m1 0h1m1 0h2m1 0h2m1 0h1m1 0h4m1 0h2m2 0h1m2 0h3m2 0h1m1 0h1m1 0h1m2 0h1m1 0h5m3 0h4m2 0h1m2 0h3m3 0h1m1 0h4m3 0h1m1 0h1m3 0h1m1 0h1m2 0h2m3 0h1m1 0h1m1 0h1m1 0h3m1 0h1m-614 4h2m1 0h1m1 0h1m2 0h2m1 0h1m3 0h1m2 0h2m3 0h2m7 0h1m5 0h1m6 0h3m1 0h1m6 0h3m2 0h2m1 0h1m5 0h1m1 0h1m4 0h4m9 0h3m2 0h2m3 0h1m4 0h1m3 0h5m5 0h3m1 0h1m2 0h1m1 0h1m1 0h1m1 0h2m1 0h1m2 0h3m3 0h1m4 0h3m2 0h1m2 0h1m1 0h1m4 0h2m1 0h1m2 0h1m1 0h1m1 0h2m3 0h1m1 0h1m2 0h1m5 0h1m5 0h3m2 0h1m1 0h2m1 0h1m2 0h4m14 0h1m1 0h1m1 0h1m2 0h1m2 0h3m1 0h1m1 0h1m4 0h2m2 0h1m3 0h1m2 0h2m4 0h7m3 0h1m6 0h1m4 0h2m3 0h1m10 0h2m5 0h1m1 0h2m1 0h5m1 0h1m4 0h1m1 0h1m1 0h1m2 0h1m5 0h2m1 0h1m4 0h1m2 0h1m3 0h2m3 0h1m2 0h1m2 0h1m1 0h1m6 0h1m2 0h1m1 0h5m2 0h3m2 0h1m2 0h2m1 0h1m1 0h2m3 0h1m5 0h2m6 0h1m3 0h1m6 0h1m5 0h2m1 0h2m6 0h2m7 0h1m4 0h1m2 0h1m1 0h1m4 0h1m1 0h1m1 0h1m3 0h1m1 0h2m6 0h2m1 0h1m3 0h2m1 0h1m1 0h1m3 0h1m1 0h1m4 0h1m2 0h1m1 0h1m3 0h2m3 0h1m1 0h2m1 0h3m1 0h2m3 0h3m2 0h1m9 0h1m2 0h1m4 0h1m3 0h1m1 0h1m2 0h1m1 0h1m1 0h2m1 0h2m5 0h1m1 0h1m2 0h1m1 0h4m3 0h1m3 0h2m1 0h1m1 0h2m1 0h1"/><path stroke="#00f5b9" d="M84 332h1m201 0h1m60 0h1m48 0h1m38 0h1m60 0h1m11 0h1m18 0h1m154 0h1m-560 126h3m4 0h1m4 0h2m13 0h1m12 0h1m8 0h1m27 0h1m12 0h1m17 0h1m4 0h1m3 0h1m2 0h1m1 0h2m36 0h1m24 0h1m1 0h1m22 0h1m14 0h1m3 0h1m5 0h1m3 0h1m15 0h1m12 0h1m5 0h1m11 0h2m10 0h1m19 0h1m40 0h1m2 0h1m3 0h1m8 0h1m2 0h1m6 0h1m2 0h1m1 0h1m2 0h1m11 0h1m21 0h1m19 0h1m21 0h2m8 0h1m2 0h1m1 0h1m31 0h1m1 0h1m22 0h1m6 0h1m3 0h1m7 0h1m7 0h1m-611 4h1m1 0h1m1 0h1m3 0h1m1 0h3m1 0h1m3 0h3m2 0h5m1 0h1m4 0h1m3 0h2m1 0h1m4 0h1m1 0h1m1 0h1m1 0h2m4 0h1m2 0h1m1 0h4m4 0h2m1 0h1m4 0h5m1 0h1m1 0h1m3 0h1m4 0h2m1 0h3m2 0h1m1 0h1m5 0h1m2 0h2m3 0h1m1 0h2m1 0h1m6 0h1m2 0h1m3 0h1m1 0h1m2 0h3m3 0h2m1 0h2m4 0h1m1 0h1m2 0h1m1 0h2m1 0h1m1 0h1m4 0h1m3 0h2m7 0h1m1 0h2m4 0h2m1 0h1m2 0h1m1 0h2m4 0h3m3 0h4m1 0h2m7 0h1m1 0h2m3 0h1m1 0h1m1 0h3m3 0h2m1 0h3m1 0h1m3 0h1m1 0h1m8 0h3m5 0h1m3 0h1m6 0h1m1 0h1m1 0h4m2 0h2m2 0h5m1 0h1m2 0h1m5 0h1m1 0h4m5 0h2m1 0h1m1 0h3m2 0h1m1 0h2m1 0h1m1 0h2m1 0h1m1 0h1m2 0h1m1 0h1m1 0h2m6 0h6m1 0h2m1 0h1m5 0h2m6 0h2m4 0h1m2 0h2m4 0h3m3 0h2m1 0h2m1 0h1m1 0h1m1 0h1m1 0h1m2 0h1m1 0h5m2 0h1m6 0h2m2 0h1m1 0h5m6 0h1m2 0h1m1 0h4m5 0h3m1 0h1m2 0h3m1 0h2m4 0h3m2 0h1m1 0h1m1 0h3m1 0h1m2 0h1m6 0h1m1 0h1m1 0h1m2 0h1m1 0h1m4 0h1m7 0h2m3 0h2m3 0h2m1 0h3m6 0h2m2 0h1m1 0h1m1 0h1m1 0h2m1 0h1m1 0h1m5 0h3m5 0h2m1 0h1m5 0h2m1 0h1m1 0h1m2 0h1m1 0h1m4 0h2"/><path stroke="#00ff71" d="M96 462h1m12 0h1m2 0h3m1 0h1m1 0h1m4 0h1m6 0h1m1 0h1m5 0h1m9 0h1m1 0h1m3 0h1m10 0h1m1 0h1m5 0h1m2 0h1m6 0h1m2 0h1m7 0h2m12 0h1m1 0h1m4 0h1m5 0h1m15 0h1m3 0h1m13 0h2m2 0h1m4 0h1m1 0h3m2 0h1m2 0h1m20 0h3m4 0h1m2 0h1m1 0h1m1 0h1m1 0h1m14 0h1m10 0h1m3 0h1m1 0h1m11 0h4m1 0h1m1 0h1m1 0h1m3 0h2m8 0h1m29 0h1m27 0h1m5 0h2m1 0h1m29 0h1m6 0h1m1 0h1m6 0h1m7 0h1m3 0h1m2 0h1m13 0h3m5 0h1m6 0h1m1 0h2m11 0h1m1 0h1m16 0h1m16 0h1m1 0h1m2 0h2m4 0h1m4 0h1m2 0h1m6 0h1m2 0h1m8 0h1m3 0h1m3 0h1m1 0h2m1 0h1m2 0h1m2 0h1m18 0h2m1 0h1m14 0h1m8 0h1"/><path stroke="#ff6b00" d="M356 332h1"/></g><rect x="79.0" y="474.8" width="614.0" height="1.3" fill="#30a8ff" /><rect x="79.0" y="476.1" width="614.0" height="0.6" fill="#000830" /><rect x="79.0" y="476.7" width="614.0" height="1.3" fill="#30b0ff" /><rect x="79.0" y="478.0" width="614.0" height="1.0" fill="#000020" /><rect x="79.0" y="479.0" width="614.0" height="1.2" fill="#d8f0f0" /><rect x="79.0" y="480.2" width="614.0" height="1.3" fill="#a0f080" /><rect x="79.0" y="481.5" width="614.0" height="2.2" fill="#f0f040" /><rect x="79.0" y="483.7" width="614.0" height="0.9" fill="#000000" /><rect x="79.0" y="484.6" width="614.0" height="1.0" fill="#30e020" /><rect x="79.0" y="485.6" width="614.0" height="0.9" fill="#100000" /><rect x="79.0" y="486.5" width="614.0" height="1.6" fill="#a01828" /><rect x="383.6" y="481.8" width="2.0" height="1.6" fill="#ff9030" opacity="0.8"/><rect x="145.6" y="481.8" width="2.0" height="1.6" fill="#e0a020" opacity="0.8"/><rect x="638.6" y="481.8" width="5.0" height="1.6" fill="#202020" opacity="0.8"/><rect x="315.6" y="481.8" width="3.0" height="1.6" fill="#ff9030" opacity="0.8"/><rect x="384.1" y="481.8" width="5.0" height="1.6" fill="#e0a020" opacity="0.8"/><rect x="195.6" y="481.8" width="5.0" height="1.6" fill="#e0a020" opacity="0.8"/><rect x="263.1" y="481.8" width="5.0" height="1.6" fill="#e0a020" opacity="0.8"/><rect x="494.2" y="481.8" width="2.0" height="1.6" fill="#e0a020" opacity="0.8"/><rect x="137.0" y="481.8" width="3.0" height="1.6" fill="#ff9030" opacity="0.8"/><rect x="222.8" y="481.8" width="3.0" height="1.6" fill="#202020" opacity="0.8"/><rect x="550.0" y="481.8" width="5.0" height="1.6" fill="#202020" opacity="0.8"/><rect x="220.2" y="481.8" width="2.0" height="1.6" fill="#e0a020" opacity="0.8"/><rect x="566.7" y="481.8" width="5.0" height="1.6" fill="#ff9030" opacity="0.8"/><rect x="501.6" y="481.8" width="3.0" height="1.6" fill="#e0a020" opacity="0.8"/><rect x="292.6" y="481.8" width="3.0" height="1.6" fill="#202020" opacity="0.8"/><rect x="172.3" y="481.8" width="5.0" height="1.6" fill="#202020" opacity="0.8"/><rect x="387.4" y="481.8" width="5.0" height="1.6" fill="#202020" opacity="0.8"/><rect x="230.9" y="481.8" width="5.0" height="1.6" fill="#202020" opacity="0.8"/><rect x="492.3" y="481.8" width="5.0" height="1.6" fill="#e0a020" opacity="0.8"/><rect x="686.0" y="481.8" width="3.0" height="1.6" fill="#e0a020" opacity="0.8"/><rect x="618.6" y="481.8" width="2.0" height="1.6" fill="#e0a020" opacity="0.8"/><rect x="207.3" y="481.8" width="5.0" height="1.6" fill="#e0a020" opacity="0.8"/><rect x="297.9" y="481.8" width="3.0" height="1.6" fill="#ff9030" opacity="0.8"/><rect x="433.1" y="481.8" width="3.0" height="1.6" fill="#e0a020" opacity="0.8"/><rect x="95.7" y="481.8" width="3.0" height="1.6" fill="#ff9030" opacity="0.8"/><rect x="224.7" y="472.5" width="4.0" height="2.0" fill="#3090ff" opacity="0.8"/><rect x="589.5" y="472.5" width="3.0" height="2.0" fill="#40c0ff" opacity="0.8"/><rect x="646.5" y="472.5" width="2.0" height="2.0" fill="#3090ff" opacity="0.8"/><rect x="336.1" y="472.5" width="4.0" height="2.0" fill="#3090ff" opacity="0.8"/><rect x="327.8" y="472.5" width="4.0" height="2.0" fill="#3090ff" opacity="0.8"/><rect x="437.3" y="472.5" width="4.0" height="2.0" fill="#3090ff" opacity="0.8"/><rect x="273.4" y="472.5" width="3.0" height="2.0" fill="#40c0ff" opacity="0.8"/><rect x="213.3" y="472.5" width="4.0" height="2.0" fill="#3090ff" opacity="0.8"/><rect x="512.9" y="472.5" width="2.0" height="2.0" fill="#3090ff" opacity="0.8"/><rect x="562.0" y="472.5" width="3.0" height="2.0" fill="#40c0ff" opacity="0.8"/><rect x="331.1" y="472.5" width="2.0" height="2.0" fill="#3090ff" opacity="0.8"/><rect x="128.1" y="472.5" width="4.0" height="2.0" fill="#3090ff" opacity="0.8"/><rect x="379.0" y="472.5" width="2.0" height="2.0" fill="#40c0ff" opacity="0.8"/><rect x="135.4" y="472.5" width="2.0" height="2.0" fill="#40c0ff" opacity="0.8"/><rect x="626.9" y="472.5" width="2.0" height="2.0" fill="#40c0ff" opacity="0.8"/><rect x="398.2" y="472.5" width="4.0" height="2.0" fill="#3090ff" opacity="0.8"/><rect x="200.1" y="472.5" width="4.0" height="2.0" fill="#40c0ff" opacity="0.8"/><rect x="498.6" y="472.5" width="2.0" height="2.0" fill="#3090ff" opacity="0.8"/><rect x="357.1" y="472.5" width="3.0" height="2.0" fill="#3090ff" opacity="0.8"/><rect x="577.8" y="472.5" width="4.0" height="2.0" fill="#3090ff" opacity="0.8"/><rect x="645.7" y="472.5" width="2.0" height="2.0" fill="#40c0ff" opacity="0.8"/><rect x="416.5" y="472.5" width="2.0" height="2.0" fill="#3090ff" opacity="0.8"/><rect x="448.9" y="472.5" width="2.0" height="2.0" fill="#3090ff" opacity="0.8"/><rect x="270.7" y="472.5" width="2.0" height="2.0" fill="#3090ff" opacity="0.8"/><rect x="316.7" y="472.5" width="4.0" height="2.0" fill="#40c0ff" opacity="0.8"/><rect x="600.7" y="472.5" width="4.0" height="2.0" fill="#40c0ff" opacity="0.8"/><rect x="690.6" y="472.5" width="4.0" height="2.0" fill="#3090ff" opacity="0.8"/><rect x="96.7" y="472.5" width="4.0" height="2.0" fill="#3090ff" opacity="0.8"/><rect x="586.6" y="472.5" width="2.0" height="2.0" fill="#3090ff" opacity="0.8"/><rect x="384.9" y="472.5" width="4.0" height="2.0" fill="#40c0ff" opacity="0.8"/><line x1="79.50" y1="126.50" x2="703.50" y2="126.50" stroke="#4a4a4a" stroke-width="1"/><line x1="79.50" y1="157.50" x2="703.50" y2="157.50" stroke="#4a4a4a" stroke-width="1"/><line x1="79.50" y1="126.50" x2="79.50" y2="157.50" stroke="#4a4a4a" stroke-width="1"/><line x1="141.50" y1="126.50" x2="141.50" y2="157.50" stroke="#4a4a4a" stroke-width="1"/><line x1="204.50" y1="126.50" x2="204.50" y2="157.50" stroke="#4a4a4a" stroke-width="1"/><line x1="266.50" y1="126.50" x2="266.50" y2="157.50" stroke="#4a4a4a" stroke-width="1"/><line x1="328.50" y1="126.50" x2="328.50" y2="157.50" stroke="#4a4a4a" stroke-width="1"/><line x1="391.50" y1="126.50" x2="391.50" y2="157.50" stroke="#4a4a4a" stroke-width="1"/><line x1="453.50" y1="126.50" x2="453.50" y2="157.50" stroke="#4a4a4a" stroke-width="1"/><line x1="516.50" y1="126.50" x2="516.50" y2="157.50" stroke="#4a4a4a" stroke-width="1"/><line x1="578.50" y1="126.50" x2="578.50" y2="157.50" stroke="#4a4a4a" stroke-width="1"/><line x1="640.50" y1="126.50" x2="640.50" y2="157.50" stroke="#4a4a4a" stroke-width="1"/><line x1="703.50" y1="126.50" x2="703.50" y2="157.50" stroke="#4a4a4a" stroke-width="1"/><line x1="89.50" y1="126.50" x2="89.50" y2="129.00" stroke="#4a4a4a" stroke-width="1"/><line x1="89.50" y1="155.00" x2="89.50" y2="157.50" stroke="#4a4a4a" stroke-width="1"/><line x1="100.50" y1="126.50" x2="100.50" y2="129.00" stroke="#4a4a4a" stroke-width="1"/><line x1="100.50" y1="155.00" x2="100.50" y2="157.50" stroke="#4a4a4a" stroke-width="1"/><line x1="110.50" y1="126.50" x2="110.50" y2="129.00" stroke="#4a4a4a" stroke-width="1"/><line x1="110.50" y1="155.00" x2="110.50" y2="157.50" stroke="#4a4a4a" stroke-width="1"/><line x1="120.50" y1="126.50" x2="120.50" y2="129.00" stroke="#4a4a4a" stroke-width="1"/><line x1="120.50" y1="155.00" x2="120.50" y2="157.50" stroke="#4a4a4a" stroke-width="1"/><line x1="131.50" y1="126.50" x2="131.50" y2="129.00" stroke="#4a4a4a" stroke-width="1"/><line x1="131.50" y1="155.00" x2="131.50" y2="157.50" stroke="#4a4a4a" stroke-width="1"/><line x1="152.50" y1="126.50" x2="152.50" y2="129.00" stroke="#4a4a4a" stroke-width="1"/><line x1="152.50" y1="155.00" x2="152.50" y2="157.50" stroke="#4a4a4a" stroke-width="1"/><line x1="162.50" y1="126.50" x2="162.50" y2="129.00" stroke="#4a4a4a" stroke-width="1"/><line x1="162.50" y1="155.00" x2="162.50" y2="157.50" stroke="#4a4a4a" stroke-width="1"/><line x1="172.50" y1="126.50" x2="172.50" y2="129.00" stroke="#4a4a4a" stroke-width="1"/><line x1="172.50" y1="155.00" x2="172.50" y2="157.50" stroke="#4a4a4a" stroke-width="1"/><line x1="183.50" y1="126.50" x2="183.50" y2="129.00" stroke="#4a4a4a" stroke-width="1"/><line x1="183.50" y1="155.00" x2="183.50" y2="157.50" stroke="#4a4a4a" stroke-width="1"/><line x1="193.50" y1="126.50" x2="193.50" y2="129.00" stroke="#4a4a4a" stroke-width="1"/><line x1="193.50" y1="155.00" x2="193.50" y2="157.50" stroke="#4a4a4a" stroke-width="1"/><line x1="214.50" y1="126.50" x2="214.50" y2="129.00" stroke="#4a4a4a" stroke-width="1"/><line x1="214.50" y1="155.00" x2="214.50" y2="157.50" stroke="#4a4a4a" stroke-width="1"/><line x1="224.50" y1="126.50" x2="224.50" y2="129.00" stroke="#4a4a4a" stroke-width="1"/><line x1="224.50" y1="155.00" x2="224.50" y2="157.50" stroke="#4a4a4a" stroke-width="1"/><line x1="235.50" y1="126.50" x2="235.50" y2="129.00" stroke="#4a4a4a" stroke-width="1"/><line x1="235.50" y1="155.00" x2="235.50" y2="157.50" stroke="#4a4a4a" stroke-width="1"/><line x1="245.50" y1="126.50" x2="245.50" y2="129.00" stroke="#4a4a4a" stroke-width="1"/><line x1="245.50" y1="155.00" x2="245.50" y2="157.50" stroke="#4a4a4a" stroke-width="1"/><line x1="256.50" y1="126.50" x2="256.50" y2="129.00" stroke="#4a4a4a" stroke-width="1"/><line x1="256.50" y1="155.00" x2="256.50" y2="157.50" stroke="#4a4a4a" stroke-width="1"/><line x1="276.50" y1="126.50" x2="276.50" y2="129.00" stroke="#4a4a4a" stroke-width="1"/><line x1="276.50" y1="155.00" x2="276.50" y2="157.50" stroke="#4a4a4a" stroke-width="1"/><line x1="287.50" y1="126.50" x2="287.50" y2="129.00" stroke="#4a4a4a" stroke-width="1"/><line x1="287.50" y1="155.00" x2="287.50" y2="157.50" stroke="#4a4a4a" stroke-width="1"/><line x1="297.50" y1="126.50" x2="297.50" y2="129.00" stroke="#4a4a4a" stroke-width="1"/><line x1="297.50" y1="155.00" x2="297.50" y2="157.50" stroke="#4a4a4a" stroke-width="1"/><line x1="308.50" y1="126.50" x2="308.50" y2="129.00" stroke="#4a4a4a" stroke-width="1"/><line x1="308.50" y1="155.00" x2="308.50" y2="157.50" stroke="#4a4a4a" stroke-width="1"/><line x1="318.50" y1="126.50" x2="318.50" y2="129.00" stroke="#4a4a4a" stroke-width="1"/><line x1="318.50" y1="155.00" x2="318.50" y2="157.50" stroke="#4a4a4a" stroke-width="1"/><line x1="339.50" y1="126.50" x2="339.50" y2="129.00" stroke="#4a4a4a" stroke-width="1"/><line x1="339.50" y1="155.00" x2="339.50" y2="157.50" stroke="#4a4a4a" stroke-width="1"/><line x1="349.50" y1="126.50" x2="349.50" y2="129.00" stroke="#4a4a4a" stroke-width="1"/><line x1="349.50" y1="155.00" x2="349.50" y2="157.50" stroke="#4a4a4a" stroke-width="1"/><line x1="360.50" y1="126.50" x2="360.50" y2="129.00" stroke="#4a4a4a" stroke-width="1"/><line x1="360.50" y1="155.00" x2="360.50" y2="157.50" stroke="#4a4a4a" stroke-width="1"/><line x1="370.50" y1="126.50" x2="370.50" y2="129.00" stroke="#4a4a4a" stroke-width="1"/><line x1="370.50" y1="155.00" x2="370.50" y2="157.50" stroke="#4a4a4a" stroke-width="1"/><line x1="380.50" y1="126.50" x2="380.50" y2="129.00" stroke="#4a4a4a" stroke-width="1"/><line x1="380.50" y1="155.00" x2="380.50" y2="157.50" stroke="#4a4a4a" stroke-width="1"/><line x1="401.50" y1="126.50" x2="401.50" y2="129.00" stroke="#4a4a4a" stroke-width="1"/><line x1="401.50" y1="155.00" x2="401.50" y2="157.50" stroke="#4a4a4a" stroke-width="1"/><line x1="411.50" y1="126.50" x2="411.50" y2="129.00" stroke="#4a4a4a" stroke-width="1"/><line x1="411.50" y1="155.00" x2="411.50" y2="157.50" stroke="#4a4a4a" stroke-width="1"/><line x1="422.50" y1="126.50" x2="422.50" y2="129.00" stroke="#4a4a4a" stroke-width="1"/><line x1="422.50" y1="155.00" x2="422.50" y2="157.50" stroke="#4a4a4a" stroke-width="1"/><line x1="432.50" y1="126.50" x2="432.50" y2="129.00" stroke="#4a4a4a" stroke-width="1"/><line x1="432.50" y1="155.00" x2="432.50" y2="157.50" stroke="#4a4a4a" stroke-width="1"/><line x1="443.50" y1="126.50" x2="443.50" y2="129.00" stroke="#4a4a4a" stroke-width="1"/><line x1="443.50" y1="155.00" x2="443.50" y2="157.50" stroke="#4a4a4a" stroke-width="1"/><line x1="464.50" y1="126.50" x2="464.50" y2="129.00" stroke="#4a4a4a" stroke-width="1"/><line x1="464.50" y1="155.00" x2="464.50" y2="157.50" stroke="#4a4a4a" stroke-width="1"/><line x1="474.50" y1="126.50" x2="474.50" y2="129.00" stroke="#4a4a4a" stroke-width="1"/><line x1="474.50" y1="155.00" x2="474.50" y2="157.50" stroke="#4a4a4a" stroke-width="1"/><line x1="484.50" y1="126.50" x2="484.50" y2="129.00" stroke="#4a4a4a" stroke-width="1"/><line x1="484.50" y1="155.00" x2="484.50" y2="157.50" stroke="#4a4a4a" stroke-width="1"/><line x1="495.50" y1="126.50" x2="495.50" y2="129.00" stroke="#4a4a4a" stroke-width="1"/><line x1="495.50" y1="155.00" x2="495.50" y2="157.50" stroke="#4a4a4a" stroke-width="1"/><line x1="505.50" y1="126.50" x2="505.50" y2="129.00" stroke="#4a4a4a" stroke-width="1"/><line x1="505.50" y1="155.00" x2="505.50" y2="157.50" stroke="#4a4a4a" stroke-width="1"/><line x1="526.50" y1="126.50" x2="526.50" y2="129.00" stroke="#4a4a4a" stroke-width="1"/><line x1="526.50" y1="155.00" x2="526.50" y2="157.50" stroke="#4a4a4a" stroke-width="1"/><line x1="536.50" y1="126.50" x2="536.50" y2="129.00" stroke="#4a4a4a" stroke-width="1"/><line x1="536.50" y1="155.00" x2="536.50" y2="157.50" stroke="#4a4a4a" stroke-width="1"/><line x1="547.50" y1="126.50" x2="547.50" y2="129.00" stroke="#4a4a4a" stroke-width="1"/><line x1="547.50" y1="155.00" x2="547.50" y2="157.50" stroke="#4a4a4a" stroke-width="1"/><line x1="557.50" y1="126.50" x2="557.50" y2="129.00" stroke="#4a4a4a" stroke-width="1"/><line x1="557.50" y1="155.00" x2="557.50" y2="157.50" stroke="#4a4a4a" stroke-width="1"/><line x1="568.50" y1="126.50" x2="568.50" y2="129.00" stroke="#4a4a4a" stroke-width="1"/><line x1="568.50" y1="155.00" x2="568.50" y2="157.50" stroke="#4a4a4a" stroke-width="1"/><line x1="588.50" y1="126.50" x2="588.50" y2="129.00" stroke="#4a4a4a" stroke-width="1"/><line x1="588.50" y1="155.00" x2="588.50" y2="157.50" stroke="#4a4a4a" stroke-width="1"/><line x1="599.50" y1="126.50" x2="599.50" y2="129.00" stroke="#4a4a4a" stroke-width="1"/><line x1="599.50" y1="155.00" x2="599.50" y2="157.50" stroke="#4a4a4a" stroke-width="1"/><line x1="609.50" y1="126.50" x2="609.50" y2="129.00" stroke="#4a4a4a" stroke-width="1"/><line x1="609.50" y1="155.00" x2="609.50" y2="157.50" stroke="#4a4a4a" stroke-width="1"/><line x1="620.50" y1="126.50" x2="620.50" y2="129.00" stroke="#4a4a4a" stroke-width="1"/><line x1="620.50" y1="155.00" x2="620.50" y2="157.50" stroke="#4a4a4a" stroke-width="1"/><line x1="630.50" y1="126.50" x2="630.50" y2="129.00" stroke="#4a4a4a" stroke-width="1"/><line x1="630.50" y1="155.00" x2="630.50" y2="157.50" stroke="#4a4a4a" stroke-width="1"/><line x1="651.50" y1="126.50" x2="651.50" y2="129.00" stroke="#4a4a4a" stroke-width="1"/><line x1="651.50" y1="155.00" x2="651.50" y2="157.50" stroke="#4a4a4a" stroke-width="1"/><line x1="661.50" y1="126.50" x2="661.50" y2="129.00" stroke="#4a4a4a" stroke-width="1"/><line x1="661.50" y1="155.00" x2="661.50" y2="157.50" stroke="#4a4a4a" stroke-width="1"/><line x1="672.50" y1="126.50" x2="672.50" y2="129.00" stroke="#4a4a4a" stroke-width="1"/><line x1="672.50" y1="155.00" x2="672.50" y2="157.50" stroke="#4a4a4a" stroke-width="1"/><line x1="682.50" y1="126.50" x2="682.50" y2="129.00" stroke="#4a4a4a" stroke-width="1"/><line x1="682.50" y1="155.00" x2="682.50" y2="157.50" stroke="#4a4a4a" stroke-width="1"/><line x1="692.50" y1="126.50" x2="692.50" y2="129.00" stroke="#4a4a4a" stroke-width="1"/><line x1="692.50" y1="155.00" x2="692.50" y2="157.50" stroke="#4a4a4a" stroke-width="1"/><line x1="74.00" y1="126.50" x2="79.50" y2="126.50" stroke="#4a4a4a" stroke-width="1"/><line x1="703.50" y1="126.50" x2="708.50" y2="126.50" stroke="#4a4a4a" stroke-width="1"/><line x1="76.50" y1="134.25" x2="79.50" y2="134.25" stroke="#4a4a4a" stroke-width="1"/><line x1="703.50" y1="134.25" x2="706.00" y2="134.25" stroke="#4a4a4a" stroke-width="1"/><line x1="76.50" y1="142.00" x2="79.50" y2="142.00" stroke="#4a4a4a" stroke-width="1"/><line x1="703.50" y1="142.00" x2="706.00" y2="142.00" stroke="#4a4a4a" stroke-width="1"/><line x1="76.50" y1="149.75" x2="79.50" y2="149.75" stroke="#4a4a4a" stroke-width="1"/><line x1="703.50" y1="149.75" x2="706.00" y2="149.75" stroke="#4a4a4a" stroke-width="1"/><line x1="74.00" y1="157.50" x2="79.50" y2="157.50" stroke="#4a4a4a" stroke-width="1"/><line x1="703.50" y1="157.50" x2="708.50" y2="157.50" stroke="#4a4a4a" stroke-width="1"/><polyline points="79.5,142.8 80.2,142.9 80.9,144.4 81.6,143.1 82.3,143.9 83.0,144.1 83.7,144.0 84.4,143.9 85.1,142.9 85.8,142.4 86.5,141.7 87.2,140.8 87.9,139.6 88.6,140.0 89.3,139.0 90.0,138.4 90.7,138.1 91.4,138.0 92.1,139.2 92.8,138.4 93.5,139.0 94.2,140.1 94.9,139.9 95.6,140.8 96.3,141.2 97.0,142.1 97.7,143.1 98.4,143.5 99.1,144.0 99.8,144.0 100.5,143.3 101.2,142.4 101.9,142.3 102.6,142.4 103.3,141.6 104.0,141.1 104.7,141.1 105.4,140.7 106.1,141.0 106.8,140.7 107.5,140.8 108.2,140.7 108.9,140.5 109.6,140.3 110.3,140.5 111.0,140.3 111.7,141.0 112.4,142.1 113.1,140.7 113.8,140.9 114.5,141.2 115.2,141.0 115.9,140.8 116.6,140.1 117.3,141.1 118.0,141.2 118.7,140.9 119.4,141.3 120.1,141.4 120.8,141.0 121.5,140.7 122.2,141.0 122.9,140.3 123.6,141.5 124.3,140.8 125.0,141.0 125.7,141.1 126.4,140.4 127.1,141.0 127.8,140.5 128.5,140.6 129.2,141.3 129.9,141.1 130.6,140.5 131.3,141.3 132.0,140.7 132.7,140.8 133.4,141.2 134.1,140.9 134.8,141.1 135.5,141.1 136.2,140.8 136.9,140.7 137.6,141.3 138.3,141.6 139.0,142.0 139.7,142.4 140.4,142.5 141.1,142.9 141.8,142.6 142.5,142.4 143.2,142.6 143.9,142.9 144.6,143.1 145.3,142.7 146.0,141.9 146.7,142.8 147.4,142.2 148.1,143.1 148.8,142.0 149.5,141.5 150.2,143.4 150.9,142.7 151.6,142.1 152.3,143.8 153.0,141.6 153.7,143.5 154.4,142.5 155.1,140.2 155.8,141.7 156.5,142.7 157.2,142.9 157.9,141.5 158.6,141.1 159.3,141.0 160.0,141.9 160.7,141.6 161.4,141.7 162.1,142.2 162.8,143.3 163.5,142.0 164.2,145.4 164.9,145.3 165.6,145.1 166.3,144.5 167.0,143.3 167.7,144.8 168.4,141.9 169.1,140.0 169.8,139.1 170.5,140.2 171.2,141.6 171.9,141.4 172.6,142.8 173.3,143.6 174.0,142.8 174.7,142.0 175.4,142.9 176.1,143.1 176.8,138.2 177.5,139.8 178.2,140.5 178.9,140.3 179.6,141.5 180.3,142.4 181.0,142.3 181.7,145.8 182.4,142.5 183.1,144.0 183.8,142.8 184.5,141.8 185.2,143.4 185.9,141.6 186.6,145.3 187.3,142.1 188.0,140.8 188.7,140.4 189.4,138.7 190.1,136.8 190.8,139.5 191.5,141.2 192.2,140.0 192.9,139.8 193.6,139.5 194.3,140.0 195.0,140.3 195.7,141.8 196.4,138.2 197.1,140.6 197.8,142.3 198.5,143.3 199.2,145.3 199.9,144.2 200.6,145.1 201.3,143.9 202.0,143.5 202.7,142.4 203.4,142.9 204.1,142.7 204.8,141.9 205.5,139.9 206.2,141.4 206.9,139.5 207.6,138.3 208.3,140.6 209.0,139.9 209.7,142.2 210.4,142.4 211.1,142.4 211.8,142.1 212.5,142.5 213.2,141.0 213.9,142.8 214.6,141.9 215.3,142.6 216.0,141.0 216.7,142.4 217.4,141.6 218.1,141.4 218.8,141.7 219.5,142.1 220.2,142.7 220.9,144.3 221.6,143.2 222.3,145.2 223.0,143.8 223.7,143.4 224.4,139.8 225.1,139.0 225.8,140.3 226.5,139.0 227.2,139.7 227.9,139.1 228.6,140.3 229.3,141.3 230.0,140.6 230.7,139.3 231.4,139.3 232.1,139.6 232.8,140.1 233.5,141.0 234.2,143.3 234.9,143.0 235.6,142.8 236.3,142.3 237.0,141.6 237.7,143.4 238.4,142.7 239.1,142.7 239.8,141.1 240.5,140.0 241.2,140.9 241.9,139.1 242.6,139.5 243.3,133.6 244.0,139.6 244.7,141.1 245.4,142.7 246.1,142.1 246.8,142.3 247.5,142.9 248.2,142.1 248.9,141.2 249.6,142.9 250.3,140.2 251.0,139.8 251.7,141.0 252.4,140.7 253.1,143.6 253.8,142.3 254.5,143.2 255.2,143.8 255.9,142.5 256.6,143.2 257.3,145.2 258.0,143.0 258.7,143.6 259.4,142.4 260.1,142.1 260.8,141.0 261.5,140.3 262.2,140.7 262.9,142.2 263.6,140.7 264.3,140.5 265.0,142.2 265.7,141.6 266.4,141.3 267.1,141.7 267.8,142.0 268.5,142.5 269.2,142.8 269.9,145.0 270.6,143.5 271.3,143.2 272.0,144.1 272.7,143.7 273.4,144.6 274.1,139.7 274.8,140.6 275.5,140.8 276.2,143.2 276.9,141.5 277.6,141.6 278.3,142.8 279.0,144.4 279.7,142.7 280.4,142.8 281.1,143.0 281.8,144.6 282.5,142.0 283.2,144.2 283.9,144.8 284.6,145.1 285.3,145.4 286.0,146.5 286.7,145.5 287.4,146.3 288.1,145.0 288.8,144.9 289.5,144.5 290.2,145.1 290.9,145.2 291.6,143.2 292.3,141.7 293.0,141.9 293.7,142.2 294.4,144.3 295.1,141.4 295.8,141.7 296.5,141.7 297.2,142.3 297.9,136.9 298.6,138.3 299.3,138.3 300.0,139.1 300.7,139.2 301.4,138.6 302.1,140.6 302.8,141.3 303.5,143.4 304.2,143.0 304.9,144.8 305.6,144.5 306.3,144.5 307.0,141.2 307.7,142.1 308.4,140.5 309.1,140.4 309.8,139.0 310.5,140.2 311.2,141.2 311.9,141.7 312.6,142.9 313.3,141.3 314.0,140.0 314.7,140.5 315.4,141.6 316.1,140.1 316.8,138.4 317.5,140.0 318.2,142.4 318.9,141.6 319.6,141.0 320.3,140.4 321.0,139.9 321.7,139.9 322.4,140.5 323.1,140.3 323.8,140.5 324.5,141.5 325.2,140.6 325.9,140.6 326.6,142.0 327.3,141.3 328.0,142.5 328.7,144.9 329.4,145.1 330.1,143.9 330.8,142.0 331.5,141.7 332.2,137.7 332.9,139.3 333.6,140.4 334.3,140.9 335.0,143.0 335.7,142.7 336.4,144.1 337.1,144.4 337.8,142.6 338.5,143.2 339.2,141.8 339.9,141.5 340.6,141.9 341.3,141.2 342.0,140.0 342.7,143.1 343.4,141.8 344.1,142.6 344.8,142.3 345.5,140.4 346.2,146.1 346.9,143.2 347.6,141.6 348.3,142.5 349.0,140.5 349.7,141.1 350.4,140.7 351.1,139.0 351.8,139.1 352.5,138.6 353.2,139.0 353.9,139.8 354.6,141.4 355.3,142.2 356.0,144.1 356.7,144.4 357.4,147.9 358.1,144.9 358.8,142.8 359.5,141.8 360.2,140.5 360.9,138.0 361.6,135.0 362.3,138.9 363.0,139.1 363.7,137.6 364.4,140.1 365.1,142.9 365.8,141.4 366.5,143.9 367.2,142.6 367.9,141.7 368.6,142.0 369.3,140.6 370.0,141.9 370.7,142.0 371.4,142.6 372.1,143.1 372.8,146.2 373.5,143.1 374.2,141.9 374.9,140.5 375.6,139.6 376.3,139.3 377.0,138.3 377.7,137.3 378.4,139.9 379.1,140.2 379.8,141.3 380.5,141.7 381.2,142.4 381.9,142.3 382.6,144.5 383.3,143.9 384.0,144.6 384.7,143.2 385.4,142.2 386.1,143.8 386.8,142.4 387.5,140.5 388.2,140.0 388.9,141.7 389.6,144.7 390.3,143.7 391.0,144.1 391.7,144.4 392.4,146.5 393.1,143.0 393.8,143.4 394.5,140.7 395.2,139.3 395.9,140.6 396.6,140.8 397.3,139.5 398.0,138.2 398.7,141.6 399.4,141.4 400.1,140.6 400.8,141.8 401.5,142.0 402.2,144.6 402.9,142.2 403.6,142.0 404.3,140.8 405.0,143.3 405.7,144.2 406.4,140.3 407.1,140.7 407.8,142.5 408.5,141.5 409.2,140.1 409.9,141.3 410.6,140.8 411.3,141.1 412.0,140.9 412.7,141.7 413.4,139.7 414.1,140.4 414.8,139.8 415.5,139.9 416.2,139.9 416.9,140.6 417.6,139.2 418.3,139.2 419.0,143.4 419.7,143.2 420.4,144.8 421.1,144.0 421.8,143.5 422.5,143.4 423.2,142.6 423.9,143.7 424.6,143.8 425.3,144.1 426.0,142.3 426.7,142.9 427.4,140.8 428.1,141.8 428.8,142.7 429.5,141.0 430.2,140.5 430.9,141.6 431.6,141.1 432.3,144.6 433.0,142.0 433.7,142.7 434.4,142.6 435.1,143.0 435.8,143.4 436.5,140.8 437.2,136.3 437.9,139.4 438.6,139.6 439.3,141.1 440.0,142.4 440.7,143.7 441.4,143.0 442.1,141.2 442.8,140.8 443.5,139.7 444.2,139.2 444.9,138.0 445.6,138.1 446.3,138.1 447.0,139.4 447.7,138.9 448.4,141.1 449.1,141.5 449.8,140.7 450.5,143.0 451.2,142.6 451.9,142.4 452.6,143.3 453.3,143.6 454.0,144.5 454.7,143.8 455.4,143.5 456.1,145.3 456.8,144.8 457.5,143.5 458.2,142.7 458.9,142.5 459.6,142.8 460.3,141.4 461.0,141.7 461.7,141.6 462.4,141.2 463.1,138.9 463.8,138.0 464.5,138.1 465.2,138.6 465.9,137.0 466.6,139.5 467.3,140.0 468.0,138.7 468.7,143.9 469.4,142.9 470.1,143.3 470.8,142.9 471.5,143.2 472.2,142.3 472.9,143.3 473.6,143.4 474.3,143.5 475.0,143.1 475.7,143.7 476.4,143.7 477.1,143.3 477.8,144.8 478.5,143.0 479.2,140.0 479.9,142.6 480.6,142.2 481.3,143.2 482.0,142.7 482.7,142.2 483.4,144.0 484.1,144.2 484.8,141.9 485.5,142.8 486.2,144.2 486.9,144.1 487.6,144.3 488.3,143.1 489.0,141.5 489.7,145.4 490.4,139.9 491.1,139.4 491.8,138.1 492.5,141.0 493.2,140.6 493.9,141.6 494.6,141.4 495.3,142.5 496.0,143.2 496.7,144.3 497.4,144.9 498.1,143.5 498.8,144.1 499.5,143.4 500.2,143.0 500.9,143.3 501.6,140.7 502.3,141.8 503.0,140.6 503.7,139.1 504.4,139.8 505.1,141.2 505.8,141.9 506.5,143.3 507.2,143.2 507.9,144.5 508.6,143.9 509.3,143.0 510.0,145.8 510.7,145.0 511.4,144.8 512.1,143.3 512.8,144.6 513.5,143.4 514.2,142.9 514.9,141.6 515.6,143.1 516.3,142.6 517.0,141.6 517.7,140.8 518.4,139.8 519.1,139.6 519.8,140.3 520.5,139.1 521.2,140.3 521.9,140.0 522.6,139.1 523.3,138.9 524.0,138.5 524.7,139.2 525.4,140.2 526.1,140.1 526.8,140.4 527.5,141.0 528.2,144.4 528.9,142.0 529.6,144.1 530.3,142.8 531.0,143.3 531.7,142.3 532.4,140.7 533.1,140.9 533.8,140.2 534.5,139.9 535.2,141.4 535.9,138.0 536.6,138.7 537.3,137.9 538.0,138.4 538.7,142.7 539.4,145.7 540.1,145.2 540.8,146.2 541.5,141.2 542.2,144.5 542.9,146.3 543.6,145.1 544.3,143.3 545.0,143.6 545.7,142.7 546.4,141.6 547.1,141.3 547.8,144.9 548.5,142.2 549.2,143.5 549.9,141.7 550.6,143.7 551.3,141.8 552.0,144.0 552.7,143.5 553.4,142.1 554.1,143.9 554.8,144.8 555.5,143.9 556.2,144.6 556.9,139.7 557.6,142.1 558.3,140.9 559.0,141.5 559.7,141.4 560.4,140.2 561.1,143.1 561.8,143.2 562.5,142.4 563.2,144.1 563.9,139.5 564.6,143.1 565.3,143.3 566.0,143.4 566.7,143.1 567.4,139.5 568.1,139.0 568.8,138.9 569.5,137.5 570.2,139.0 570.9,139.6 571.6,138.0 572.3,140.8 573.0,140.9 573.7,141.0 574.4,142.5 575.1,141.8 575.8,142.0 576.5,143.2 577.2,142.7 577.9,147.3 578.6,144.7 579.3,144.4 580.0,145.4 580.7,143.3 581.4,143.8 582.1,143.8 582.8,141.5 583.5,140.0 584.2,140.9 584.9,140.5 585.6,139.9 586.3,136.6 587.0,137.8 587.7,140.1 588.4,143.1 589.1,141.7 589.8,142.0 590.5,142.2 591.2,142.1 591.9,143.1 592.6,143.3 593.3,143.5 594.0,142.5 594.7,142.6 595.4,142.8 596.1,142.3 596.8,142.1 597.5,143.4 598.2,142.6 598.9,142.4 599.6,141.6 600.3,141.4 601.0,141.1 601.7,139.7 602.4,139.6 603.1,140.8 603.8,140.4 604.5,138.9 605.2,141.4 605.9,143.6 606.6,142.7 607.3,142.2 608.0,143.3 608.7,142.7 609.4,143.2 610.1,143.1 610.8,143.6 611.5,144.1 612.2,142.4 612.9,141.6 613.6,144.1 614.3,142.1 615.0,140.6 615.7,139.1 616.4,139.8 617.1,139.3 617.8,138.4 618.5,137.5 619.2,137.3 619.9,138.4 620.6,138.0 621.3,141.0 622.0,140.8 622.7,143.4 623.4,141.8 624.1,140.2 624.8,139.9 625.5,140.5 626.2,141.8 626.9,144.3 627.6,143.4 628.3,143.2 629.0,142.8 629.7,142.2 630.4,144.2 631.1,141.4 631.8,141.9 632.5,139.6 633.2,143.1 633.9,142.8 634.6,143.4 635.3,143.3 636.0,142.8 636.7,139.7 637.4,141.8 638.1,143.7 638.8,144.4 639.5,143.1 640.2,143.1 640.9,143.2 641.6,142.8 642.3,141.7 643.0,141.1 643.7,141.4 644.4,141.4 645.1,141.9 645.8,139.6 646.5,139.5 647.2,139.2 647.9,139.4 648.6,138.8 649.3,138.9 650.0,139.2 650.7,138.9 651.4,140.2 652.1,139.9 652.8,141.6 653.5,143.5 654.2,143.3 654.9,141.5 655.6,142.1 656.3,141.6 657.0,141.8 657.7,140.7 658.4,141.4 659.1,140.9 659.8,139.6 660.5,140.0 661.2,139.7 661.9,139.8 662.6,139.0 663.3,139.3 664.0,138.3 664.7,140.3 665.4,139.1 666.1,138.6 666.8,139.1 667.5,138.8 668.2,139.6 668.9,139.4 669.6,141.5 670.3,140.1 671.0,141.5 671.7,140.8 672.4,142.4 673.1,143.0 673.8,141.4 674.5,139.9 675.2,141.5 675.9,140.1 676.6,134.8 677.3,138.7 678.0,141.5 678.7,144.6 679.4,145.4 680.1,143.2 680.8,143.4 681.5,143.6 682.2,143.4 682.9,141.9 683.6,142.0 684.3,141.1 685.0,139.6 685.7,140.0 686.4,139.1 687.1,139.0 687.8,138.6 688.5,138.5 689.2,142.7 689.9,142.6 690.6,142.9 691.3,144.8 692.0,145.5" fill="none" stroke="#000" stroke-width="1.8" stroke-linejoin="round"/><line x1="639.2" y1="131.5" x2="639.2" y2="141" stroke="#777" stroke-width="1"/><line x1="644.5" y1="126.8" x2="644.5" y2="141" stroke="#333" stroke-width="1"/><line x1="79.50" y1="497.50" x2="703.50" y2="497.50" stroke="#4a4a4a" stroke-width="1"/><line x1="79.50" y1="528.50" x2="703.50" y2="528.50" stroke="#4a4a4a" stroke-width="1"/><line x1="74.00" y1="497.50" x2="79.50" y2="497.50" stroke="#4a4a4a" stroke-width="1"/><line x1="703.50" y1="497.50" x2="708.50" y2="497.50" stroke="#4a4a4a" stroke-width="1"/><line x1="76.50" y1="505.25" x2="79.50" y2="505.25" stroke="#4a4a4a" stroke-width="1"/><line x1="703.50" y1="505.25" x2="706.00" y2="505.25" stroke="#4a4a4a" stroke-width="1"/><line x1="76.50" y1="513.00" x2="79.50" y2="513.00" stroke="#4a4a4a" stroke-width="1"/><line x1="703.50" y1="513.00" x2="706.00" y2="513.00" stroke="#4a4a4a" stroke-width="1"/><line x1="76.50" y1="520.75" x2="79.50" y2="520.75" stroke="#4a4a4a" stroke-width="1"/><line x1="703.50" y1="520.75" x2="706.00" y2="520.75" stroke="#4a4a4a" stroke-width="1"/><line x1="74.00" y1="528.50" x2="79.50" y2="528.50" stroke="#4a4a4a" stroke-width="1"/><line x1="703.50" y1="528.50" x2="708.50" y2="528.50" stroke="#4a4a4a" stroke-width="1"/><rect x="79.5" y="510.2" width="613.5" height="3.4" fill="#0a0a0a"/><rect x="363.4" y="511.5" width="0.9" height="0.9" fill="#999"/><rect x="243.5" y="510.8" width="0.9" height="0.9" fill="#999"/><rect x="610.3" y="510.8" width="0.9" height="0.9" fill="#999"/><rect x="287.1" y="511.5" width="0.9" height="0.9" fill="#999"/><rect x="629.8" y="510.8" width="0.9" height="0.9" fill="#999"/><rect x="284.4" y="512.2" width="0.9" height="0.9" fill="#999"/><rect x="508.5" y="512.2" width="0.9" height="0.9" fill="#999"/><rect x="312.0" y="512.2" width="0.9" height="0.9" fill="#999"/><rect x="659.1" y="512.2" width="0.9" height="0.9" fill="#999"/><rect x="338.6" y="510.8" width="0.9" height="0.9" fill="#999"/><rect x="225.7" y="510.8" width="0.9" height="0.9" fill="#999"/><rect x="161.0" y="512.2" width="0.9" height="0.9" fill="#999"/><rect x="118.8" y="512.2" width="0.9" height="0.9" fill="#999"/><rect x="314.8" y="512.2" width="0.9" height="0.9" fill="#999"/><rect x="623.0" y="511.5" width="0.9" height="0.9" fill="#999"/><rect x="205.4" y="510.8" width="0.9" height="0.9" fill="#999"/><rect x="524.1" y="511.5" width="0.9" height="0.9" fill="#999"/><rect x="624.4" y="511.5" width="0.9" height="0.9" fill="#999"/><rect x="637.8" y="511.5" width="0.9" height="0.9" fill="#999"/><rect x="252.1" y="510.8" width="0.9" height="0.9" fill="#999"/><rect x="202.1" y="510.8" width="0.9" height="0.9" fill="#999"/><rect x="618.2" y="510.8" width="0.9" height="0.9" fill="#999"/><rect x="628.2" y="511.5" width="0.9" height="0.9" fill="#999"/><rect x="165.2" y="510.8" width="0.9" height="0.9" fill="#999"/><rect x="339.9" y="510.8" width="0.9" height="0.9" fill="#999"/><rect x="670.0" y="510.8" width="0.9" height="0.9" fill="#999"/><rect x="154.2" y="512.2" width="0.9" height="0.9" fill="#999"/><rect x="201.0" y="510.8" width="0.9" height="0.9" fill="#999"/><rect x="282.1" y="510.8" width="0.9" height="0.9" fill="#999"/><rect x="161.5" y="510.8" width="0.9" height="0.9" fill="#999"/><rect x="386.5" y="512.2" width="0.9" height="0.9" fill="#999"/><rect x="384.0" y="510.8" width="0.9" height="0.9" fill="#999"/><rect x="337.1" y="511.5" width="0.9" height="0.9" fill="#999"/><rect x="197.6" y="510.8" width="0.9" height="0.9" fill="#999"/><rect x="508.9" y="510.8" width="0.9" height="0.9" fill="#999"/><rect x="185.6" y="512.2" width="0.9" height="0.9" fill="#999"/><rect x="520.4" y="510.8" width="0.9" height="0.9" fill="#999"/><rect x="113.2" y="512.2" width="0.9" height="0.9" fill="#999"/><rect x="498.1" y="510.8" width="0.9" height="0.9" fill="#999"/><rect x="536.0" y="512.2" width="0.9" height="0.9" fill="#999"/><rect x="688.9" y="510.8" width="0.9" height="0.9" fill="#999"/><rect x="154.3" y="512.2" width="0.9" height="0.9" fill="#999"/><rect x="326.2" y="510.8" width="0.9" height="0.9" fill="#999"/><rect x="179.0" y="512.2" width="0.9" height="0.9" fill="#999"/><rect x="106.3" y="511.5" width="0.9" height="0.9" fill="#999"/><rect x="597.5" y="512.2" width="0.9" height="0.9" fill="#999"/><rect x="441.2" y="512.2" width="0.9" height="0.9" fill="#999"/><rect x="133.1" y="511.5" width="0.9" height="0.9" fill="#999"/><rect x="147.3" y="512.2" width="0.9" height="0.9" fill="#999"/><rect x="303.7" y="510.8" width="0.9" height="0.9" fill="#999"/><rect x="326.1" y="512.2" width="0.9" height="0.9" fill="#999"/><rect x="536.4" y="511.5" width="0.9" height="0.9" fill="#999"/><rect x="569.2" y="511.5" width="0.9" height="0.9" fill="#999"/><rect x="80.4" y="510.8" width="0.9" height="0.9" fill="#999"/><rect x="210.6" y="511.5" width="0.9" height="0.9" fill="#999"/><rect x="245.0" y="510.8" width="0.9" height="0.9" fill="#999"/><rect x="268.0" y="511.5" width="0.9" height="0.9" fill="#999"/><rect x="143.1" y="510.8" width="0.9" height="0.9" fill="#999"/><rect x="95.5" y="512.2" width="0.9" height="0.9" fill="#999"/><rect x="574.2" y="511.5" width="0.9" height="0.9" fill="#999"/><rect x="291.8" y="510.8" width="0.9" height="0.9" fill="#999"/><rect x="426.4" y="510.8" width="0.9" height="0.9" fill="#999"/><rect x="340.1" y="510.8" width="0.9" height="0.9" fill="#999"/><rect x="138.6" y="511.5" width="0.9" height="0.9" fill="#999"/><rect x="392.0" y="512.2" width="0.9" height="0.9" fill="#999"/><rect x="306.0" y="512.2" width="0.9" height="0.9" fill="#999"/><rect x="257.7" y="512.2" width="0.9" height="0.9" fill="#999"/><rect x="596.1" y="511.5" width="0.9" height="0.9" fill="#999"/><rect x="98.0" y="510.8" width="0.9" height="0.9" fill="#999"/><rect x="240.9" y="510.8" width="0.9" height="0.9" fill="#999"/><rect x="683.5" y="512.2" width="0.9" height="0.9" fill="#999"/><rect x="170.8" y="510.8" width="0.9" height="0.9" fill="#999"/><rect x="117.3" y="510.8" width="0.9" height="0.9" fill="#999"/><rect x="561.4" y="511.5" width="0.9" height="0.9" fill="#999"/><rect x="454.3" y="511.5" width="0.9" height="0.9" fill="#999"/><rect x="254.4" y="511.5" width="0.9" height="0.9" fill="#999"/><rect x="423.9" y="510.8" width="0.9" height="0.9" fill="#999"/><rect x="668.6" y="512.2" width="0.9" height="0.9" fill="#999"/><rect x="420.2" y="512.2" width="0.9" height="0.9" fill="#999"/><rect x="152.2" y="511.5" width="0.9" height="0.9" fill="#999"/><rect x="356.3" y="512.2" width="0.9" height="0.9" fill="#999"/><rect x="423.9" y="511.5" width="0.9" height="0.9" fill="#999"/><rect x="440.0" y="510.8" width="0.9" height="0.9" fill="#999"/><rect x="485.9" y="511.5" width="0.9" height="0.9" fill="#999"/><rect x="552.3" y="512.2" width="0.9" height="0.9" fill="#999"/><rect x="382.6" y="510.8" width="0.9" height="0.9" fill="#999"/><rect x="645.0" y="511.5" width="0.9" height="0.9" fill="#999"/><rect x="403.6" y="510.8" width="0.9" height="0.9" fill="#999"/><rect x="568.6" y="510.8" width="0.9" height="0.9" fill="#999"/><rect x="179.3" y="510.8" width="0.9" height="0.9" fill="#999"/><rect x="605.8" y="510.8" width="0.9" height="0.9" fill="#999"/><rect x="187.6" y="511.5" width="0.9" height="0.9" fill="#999"/><rect x="442.0" y="512.2" width="0.9" height="0.9" fill="#999"/><rect x="317.6" y="510.8" width="0.9" height="0.9" fill="#999"/><rect x="415.8" y="512.2" width="0.9" height="0.9" fill="#999"/><rect x="659.2" y="512.2" width="0.9" height="0.9" fill="#999"/><rect x="120.7" y="512.2" width="0.9" height="0.9" fill="#999"/><rect x="97.6" y="512.2" width="0.9" height="0.9" fill="#999"/><rect x="624.1" y="512.2" width="0.9" height="0.9" fill="#999"/><rect x="269.0" y="512.2" width="0.9" height="0.9" fill="#999"/><rect x="408.7" y="510.8" width="0.9" height="0.9" fill="#999"/><rect x="617.0" y="512.2" width="0.9" height="0.9" fill="#999"/><rect x="411.8" y="511.5" width="0.9" height="0.9" fill="#999"/><rect x="119.4" y="510.8" width="0.9" height="0.9" fill="#999"/><rect x="521.1" y="510.8" width="0.9" height="0.9" fill="#999"/><rect x="141.0" y="511.5" width="0.9" height="0.9" fill="#999"/><rect x="357.6" y="511.5" width="0.9" height="0.9" fill="#999"/><rect x="624.0" y="512.2" width="0.9" height="0.9" fill="#999"/><rect x="112.4" y="512.2" width="0.9" height="0.9" fill="#999"/><rect x="97.9" y="510.8" width="0.9" height="0.9" fill="#999"/><line x1="79.50" y1="528.50" x2="79.50" y2="539.00" stroke="#4a4a4a" stroke-width="1"/><line x1="89.50" y1="528.50" x2="89.50" y2="532.00" stroke="#4a4a4a" stroke-width="1"/><line x1="100.50" y1="528.50" x2="100.50" y2="532.00" stroke="#4a4a4a" stroke-width="1"/><line x1="110.50" y1="528.50" x2="110.50" y2="532.00" stroke="#4a4a4a" stroke-width="1"/><line x1="120.50" y1="528.50" x2="120.50" y2="532.00" stroke="#4a4a4a" stroke-width="1"/><line x1="131.50" y1="528.50" x2="131.50" y2="532.00" stroke="#4a4a4a" stroke-width="1"/><line x1="141.50" y1="528.50" x2="141.50" y2="539.00" stroke="#4a4a4a" stroke-width="1"/><line x1="152.50" y1="528.50" x2="152.50" y2="532.00" stroke="#4a4a4a" stroke-width="1"/><line x1="162.50" y1="528.50" x2="162.50" y2="532.00" stroke="#4a4a4a" stroke-width="1"/><line x1="172.50" y1="528.50" x2="172.50" y2="532.00" stroke="#4a4a4a" stroke-width="1"/><line x1="183.50" y1="528.50" x2="183.50" y2="532.00" stroke="#4a4a4a" stroke-width="1"/><line x1="193.50" y1="528.50" x2="193.50" y2="532.00" stroke="#4a4a4a" stroke-width="1"/><line x1="204.50" y1="528.50" x2="204.50" y2="539.00" stroke="#4a4a4a" stroke-width="1"/><line x1="214.50" y1="528.50" x2="214.50" y2="532.00" stroke="#4a4a4a" stroke-width="1"/><line x1="224.50" y1="528.50" x2="224.50" y2="532.00" stroke="#4a4a4a" stroke-width="1"/><line x1="235.50" y1="528.50" x2="235.50" y2="532.00" stroke="#4a4a4a" stroke-width="1"/><line x1="245.50" y1="528.50" x2="245.50" y2="532.00" stroke="#4a4a4a" stroke-width="1"/><line x1="256.50" y1="528.50" x2="256.50" y2="532.00" stroke="#4a4a4a" stroke-width="1"/><line x1="266.50" y1="528.50" x2="266.50" y2="539.00" stroke="#4a4a4a" stroke-width="1"/><line x1="276.50" y1="528.50" x2="276.50" y2="532.00" stroke="#4a4a4a" stroke-width="1"/><line x1="287.50" y1="528.50" x2="287.50" y2="532.00" stroke="#4a4a4a" stroke-width="1"/><line x1="297.50" y1="528.50" x2="297.50" y2="532.00" stroke="#4a4a4a" stroke-width="1"/><line x1="308.50" y1="528.50" x2="308.50" y2="532.00" stroke="#4a4a4a" stroke-width="1"/><line x1="318.50" y1="528.50" x2="318.50" y2="532.00" stroke="#4a4a4a" stroke-width="1"/><line x1="328.50" y1="528.50" x2="328.50" y2="539.00" stroke="#4a4a4a" stroke-width="1"/><line x1="339.50" y1="528.50" x2="339.50" y2="532.00" stroke="#4a4a4a" stroke-width="1"/><line x1="349.50" y1="528.50" x2="349.50" y2="532.00" stroke="#4a4a4a" stroke-width="1"/><line x1="360.50" y1="528.50" x2="360.50" y2="532.00" stroke="#4a4a4a" stroke-width="1"/><line x1="370.50" y1="528.50" x2="370.50" y2="532.00" stroke="#4a4a4a" stroke-width="1"/><line x1="380.50" y1="528.50" x2="380.50" y2="532.00" stroke="#4a4a4a" stroke-width="1"/><line x1="391.50" y1="528.50" x2="391.50" y2="539.00" stroke="#4a4a4a" stroke-width="1"/><line x1="401.50" y1="528.50" x2="401.50" y2="532.00" stroke="#4a4a4a" stroke-width="1"/><line x1="411.50" y1="528.50" x2="411.50" y2="532.00" stroke="#4a4a4a" stroke-width="1"/><line x1="422.50" y1="528.50" x2="422.50" y2="532.00" stroke="#4a4a4a" stroke-width="1"/><line x1="432.50" y1="528.50" x2="432.50" y2="532.00" stroke="#4a4a4a" stroke-width="1"/><line x1="443.50" y1="528.50" x2="443.50" y2="532.00" stroke="#4a4a4a" stroke-width="1"/><line x1="453.50" y1="528.50" x2="453.50" y2="539.00" stroke="#4a4a4a" stroke-width="1"/><line x1="464.50" y1="528.50" x2="464.50" y2="532.00" stroke="#4a4a4a" stroke-width="1"/><line x1="474.50" y1="528.50" x2="474.50" y2="532.00" stroke="#4a4a4a" stroke-width="1"/><line x1="484.50" y1="528.50" x2="484.50" y2="532.00" stroke="#4a4a4a" stroke-width="1"/><line x1="495.50" y1="528.50" x2="495.50" y2="532.00" stroke="#4a4a4a" stroke-width="1"/><line x1="505.50" y1="528.50" x2="505.50" y2="532.00" stroke="#4a4a4a" stroke-width="1"/><line x1="516.50" y1="528.50" x2="516.50" y2="539.00" stroke="#4a4a4a" stroke-width="1"/><line x1="526.50" y1="528.50" x2="526.50" y2="532.00" stroke="#4a4a4a" stroke-width="1"/><line x1="536.50" y1="528.50" x2="536.50" y2="532.00" stroke="#4a4a4a" stroke-width="1"/><line x1="547.50" y1="528.50" x2="547.50" y2="532.00" stroke="#4a4a4a" stroke-width="1"/><line x1="557.50" y1="528.50" x2="557.50" y2="532.00" stroke="#4a4a4a" stroke-width="1"/><line x1="568.50" y1="528.50" x2="568.50" y2="532.00" stroke="#4a4a4a" stroke-width="1"/><line x1="578.50" y1="528.50" x2="578.50" y2="539.00" stroke="#4a4a4a" stroke-width="1"/><line x1="588.50" y1="528.50" x2="588.50" y2="532.00" stroke="#4a4a4a" stroke-width="1"/><line x1="599.50" y1="528.50" x2="599.50" y2="532.00" stroke="#4a4a4a" stroke-width="1"/><line x1="609.50" y1="528.50" x2="609.50" y2="532.00" stroke="#4a4a4a" stroke-width="1"/><line x1="620.50" y1="528.50" x2="620.50" y2="532.00" stroke="#4a4a4a" stroke-width="1"/><line x1="630.50" y1="528.50" x2="630.50" y2="532.00" stroke="#4a4a4a" stroke-width="1"/><line x1="640.50" y1="528.50" x2="640.50" y2="539.00" stroke="#4a4a4a" stroke-width="1"/><line x1="651.50" y1="528.50" x2="651.50" y2="532.00" stroke="#4a4a4a" stroke-width="1"/><line x1="661.50" y1="528.50" x2="661.50" y2="532.00" stroke="#4a4a4a" stroke-width="1"/><line x1="672.50" y1="528.50" x2="672.50" y2="532.00" stroke="#4a4a4a" stroke-width="1"/><line x1="682.50" y1="528.50" x2="682.50" y2="532.00" stroke="#4a4a4a" stroke-width="1"/><line x1="692.50" y1="528.50" x2="692.50" y2="532.00" stroke="#4a4a4a" stroke-width="1"/><line x1="703.50" y1="528.50" x2="703.50" y2="539.00" stroke="#4a4a4a" stroke-width="1"/><text x="70.5" y="129.5" font-size="8.8" text-anchor="end" >10</text><text x="70.5" y="160.5" font-size="8.8" text-anchor="end" >-10</text><text x="70.5" y="325.4" font-size="8.8" text-anchor="end" >0</text><text x="70.5" y="294.2" font-size="8.8" text-anchor="end" >2</text><text x="70.5" y="263.0" font-size="8.8" text-anchor="end" >4</text><text x="70.5" y="231.7" font-size="8.8" text-anchor="end" >6</text><text x="70.5" y="200.5" font-size="8.8" text-anchor="end" >8</text><text x="70.5" y="169.3" font-size="8.8" text-anchor="end" >10</text><text x="70.5" y="491.1" font-size="8.8" text-anchor="end" >0</text><text x="70.5" y="459.9" font-size="8.8" text-anchor="end" >2</text><text x="70.5" y="428.7" font-size="8.8" text-anchor="end" >4</text><text x="70.5" y="397.4" font-size="8.8" text-anchor="end" >6</text><text x="70.5" y="366.2" font-size="8.8" text-anchor="end" >8</text><text x="70.5" y="335.0" font-size="8.8" text-anchor="end" >10</text><text x="70.5" y="500.5" font-size="8.8" text-anchor="end" >5</text><text x="70.5" y="531.5" font-size="8.8" text-anchor="end" >-5</text><text x="79.5" y="548.8" font-size="8.8" text-anchor="middle" >0</text><text x="141.5" y="548.8" font-size="8.8" text-anchor="middle" >1</text><text x="204.5" y="548.8" font-size="8.8" text-anchor="middle" >2</text><text x="266.5" y="548.8" font-size="8.8" text-anchor="middle" >3</text><text x="328.5" y="548.8" font-size="8.8" text-anchor="middle" >4</text><text x="391.5" y="548.8" font-size="8.8" text-anchor="middle" >5</text><text x="453.5" y="548.8" font-size="8.8" text-anchor="middle" >6</text><text x="516.5" y="548.8" font-size="8.8" text-anchor="middle" >7</text><text x="578.5" y="548.8" font-size="8.8" text-anchor="middle" >8</text><text x="640.5" y="548.8" font-size="8.8" text-anchor="middle" >9</text><text x="703.5" y="548.8" font-size="8.8" text-anchor="middle" >10</text><text x="376.2" y="557.8" font-size="9.0" text-anchor="start" textLength="47.5" lengthAdjust="spacing">Time&#160;&#160;(min)</text><text x="0" y="0" font-size="8.9" transform="translate(50.2,157.8) rotate(-90)" textLength="31" lengthAdjust="spacing">ch.1(V)</text><text x="0" y="0" font-size="8.9" transform="translate(50.2,528.7) rotate(-90)" textLength="31" lengthAdjust="spacing">ch.3(V)</text><text x="0" y="0" font-size="9.2" transform="translate(50.0,252.5) rotate(-90)" textLength="16.7" lengthAdjust="spacing">ch.1</text><text x="0" y="0" font-size="9.2" transform="translate(57.8,267.8) rotate(-90)" textLength="69.5" lengthAdjust="spacing">Frequency&#160;&#160;(kHz)</text><text x="0" y="0" font-size="9.2" transform="translate(50.0,418.5) rotate(-90)" textLength="16.7" lengthAdjust="spacing">ch.2</text><text x="0" y="0" font-size="9.2" transform="translate(57.8,433.8) rotate(-90)" textLength="69.5" lengthAdjust="spacing">Frequency&#160;&#160;(kHz)</text><text x="79.7" y="122.7" font-size="11.8" text-anchor="start" textLength="67.3" lengthAdjust="spacing">VLF&#160;&#160;Spectra</text><text x="251.4" y="123.0" font-size="9.2" text-anchor="start" textLength="56" lengthAdjust="spacing">Mar.3&#160;&#160;&#160;,&#160;2026</text><text x="343.9" y="122.8" font-size="9.2" text-anchor="start" textLength="55.7" lengthAdjust="spacing">station=GAK</text><text x="437.7" y="123.0" font-size="9.2" text-anchor="start" textLength="91" lengthAdjust="spacing">start&#160;&#160;UT&#160;&#160;=&#160;&#160;&#160;23:&#160;0&#160;&#160;&#160;:&#160;0</text><rect x="719.2" y="201.6" width="8.6" height="109.0" fill="url(#cb)" /><line x1="728.20" y1="201.60" x2="728.20" y2="310.60" stroke="#222" stroke-width="1"/><line x1="728.20" y1="201.60" x2="732.00" y2="201.60" stroke="#222" stroke-width="1"/><text x="733.6" y="204.3" font-size="7.8" text-anchor="start" >-3</text><line x1="728.20" y1="228.85" x2="732.00" y2="228.85" stroke="#222" stroke-width="1"/><text x="733.6" y="231.5" font-size="7.8" text-anchor="start" >-4</text><line x1="728.20" y1="256.10" x2="732.00" y2="256.10" stroke="#222" stroke-width="1"/><text x="733.6" y="258.8" font-size="7.8" text-anchor="start" >-5</text><line x1="728.20" y1="283.35" x2="732.00" y2="283.35" stroke="#222" stroke-width="1"/><text x="733.6" y="286.1" font-size="7.8" text-anchor="start" >-6</text><line x1="728.20" y1="310.60" x2="732.00" y2="310.60" stroke="#222" stroke-width="1"/><text x="733.6" y="313.3" font-size="7.8" text-anchor="start" >-7</text><text x="0" y="0" font-size="7.2" transform="translate(749.2,287.5) rotate(-90)" textLength="54" lengthAdjust="spacing">log(PSD)(V<tspan font-size="4.6" dy="-3">2</tspan><tspan dy="3">&#160;/Hz)</tspan></text><rect x="719.2" y="366.6" width="8.6" height="109.0" fill="url(#cb)" /><line x1="728.20" y1="366.60" x2="728.20" y2="475.60" stroke="#222" stroke-width="1"/><line x1="728.20" y1="366.60" x2="732.00" y2="366.60" stroke="#222" stroke-width="1"/><text x="733.6" y="369.3" font-size="7.8" text-anchor="start" >-3</text><line x1="728.20" y1="393.85" x2="732.00" y2="393.85" stroke="#222" stroke-width="1"/><text x="733.6" y="396.6" font-size="7.8" text-anchor="start" >-4</text><line x1="728.20" y1="421.10" x2="732.00" y2="421.10" stroke="#222" stroke-width="1"/><text x="733.6" y="423.8" font-size="7.8" text-anchor="start" >-5</text><line x1="728.20" y1="448.35" x2="732.00" y2="448.35" stroke="#222" stroke-width="1"/><text x="733.6" y="451.1" font-size="7.8" text-anchor="start" >-6</text><line x1="728.20" y1="475.60" x2="732.00" y2="475.60" stroke="#222" stroke-width="1"/><text x="733.6" y="478.3" font-size="7.8" text-anchor="start" >-7</text><text x="0" y="0" font-size="7.2" transform="translate(749.2,452.5) rotate(-90)" textLength="54" lengthAdjust="spacing">log(PSD)(V<tspan font-size="4.6" dy="-3">2</tspan><tspan dy="3">&#160;/Hz)</tspan></text></svg></body></html>
